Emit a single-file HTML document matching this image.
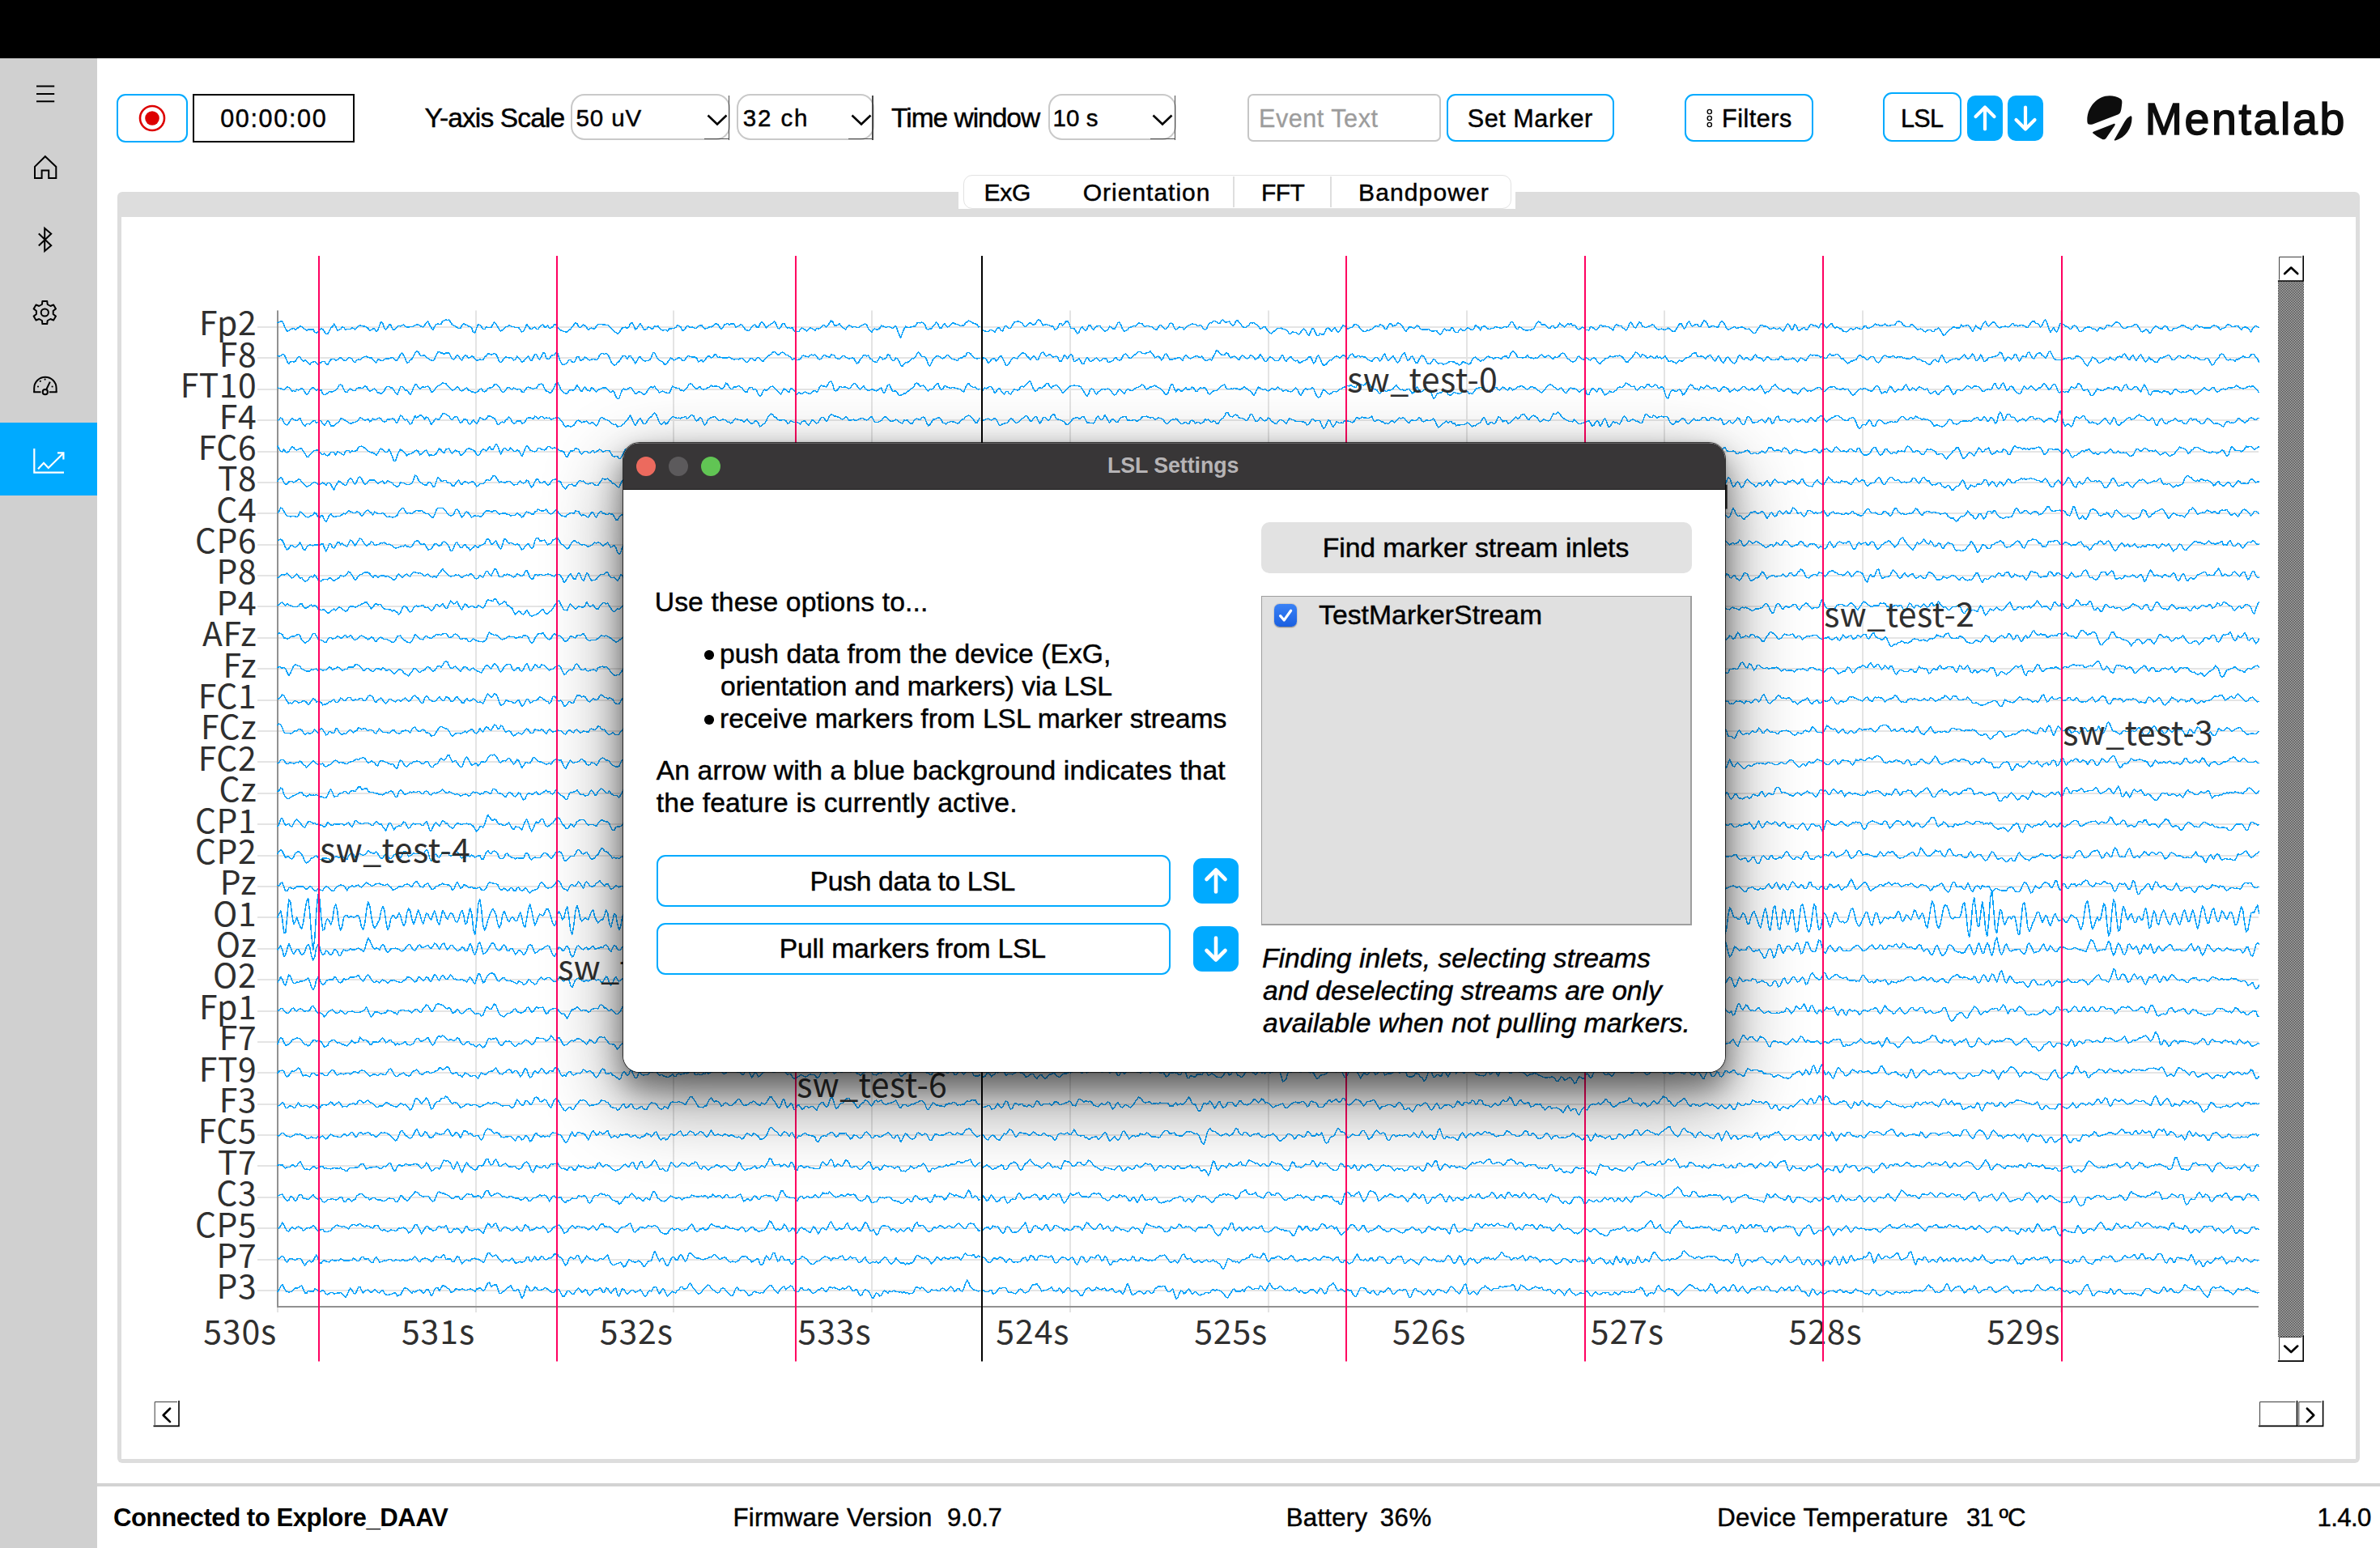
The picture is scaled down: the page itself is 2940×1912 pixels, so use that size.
<!DOCTYPE html>
<html lang="en"><head><meta charset="utf-8"><title>Explore Desktop – LSL Settings</title>
<style>
html,body{margin:0;padding:0}
body{width:2940px;height:1912px;position:relative;overflow:hidden;background:#fff;font-family:"Liberation Sans",sans-serif}
.abs,.t{position:absolute;display:block;margin:0;padding:0}
.t{white-space:pre;font-style:normal}
.bb{box-sizing:border-box}
button{font:inherit;outline:0}
svg{display:block}
.topbar{position:absolute;left:0;top:0;width:2940px;height:72px;background:#000}
.side{position:absolute;left:0;top:72px;width:120px;height:1840px;background:#d0d0d0}
.side .act{position:absolute;left:0;top:450px;width:120px;height:90px;background:#00aaff}
.side svg{top:0 !important}
.dlg{position:absolute;left:769.5px;top:547px;width:1361px;height:777px;border-radius:20px;
 box-shadow:0 0 0 1px rgba(0,0,0,.72),0 0 5px rgba(0,0,0,.2),0 18px 34px 2px rgba(0,0,0,.40),0 34px 90px 6px rgba(0,0,0,.42);}
.dlgin{position:absolute;left:0;top:0;right:0;bottom:0;border-radius:20px;overflow:hidden;background:#fff}
.tb{position:absolute;left:0;top:0;right:0;height:56.5px;background:#383637;border-bottom:1px solid #1a1a1a;box-shadow:inset 0 1px 0 rgba(255,255,255,.22)}
</style></head>
<body>
<div class="topbar"></div>
<nav class="side">
<div class="act"></div>
<svg class="abs" style="left:0;top:72px" width="120" height="1840" viewBox="0 72 120 1840" fill="none" stroke="#000" stroke-width="2" stroke-linecap="butt" stroke-linejoin="miter">
<path d="M45 106.5H67.2M45 116H67.2M45 125.3H67.2"/>
<path d="M43 221V205.9L55.8 193.2L69.3 205.9V220H60.2V210.4H51.6V220H42"/>
<path d="M47.8 288.6L63.2 303.2L55.2 310V282L63.2 288.8L47.8 303.4" stroke-linejoin="miter"/>
<path d="M51.9 376.0L52.4 371.9L58.2 371.9L58.7 376.0L62.3 378.0L66.1 376.5L69.0 381.4L65.7 384.0L65.7 388.0L69.0 390.6L66.1 395.5L62.3 394.0L58.7 396.0L58.2 400.1L52.4 400.1L51.9 396.0L48.3 394.0L44.5 395.5L41.6 390.6L44.9 388.0L44.9 384.0L41.6 381.4L44.5 376.5L48.3 378.0Z" stroke-linejoin="round"/>
<circle cx="55.3" cy="386" r="4.6"/>
<path d="M41.2 484.3H50.5M60.8 484.3H70.6" /><path d="M42.2 484.3V479.5A13.7 13.7 0 0 1 69.6 479.5V484.3"/>
<circle cx="55.8" cy="484.2" r="3.1"/><path d="M57.2 481.2L61.8 471.6"/>
<g fill="#000" stroke="none"><circle cx="47" cy="477.5" r="1.1"/><circle cx="49.8" cy="470.8" r="1.1"/><circle cx="55.6" cy="468.6" r="1.1"/><circle cx="64.6" cy="477.5" r="1.1"/></g>
<g stroke="#fff" stroke-width="2.2"><path d="M42.3 554V583.6H79"/><path d="M47 579.2L54 571.8L59.8 578L77.8 560.2"/><path d="M71 559.4H78.4V567.4"/></g>
</svg>
</nav>
<header role="toolbar">
<button class="abs bb" style="left:144px;top:116px;width:88px;height:59.5px;border:2px solid #00aaff;border-radius:11px;background:#fff"><svg width="40" height="40" viewBox="-20 -20 40 40" style="position:absolute;left:21.8px;top:8px"><circle r="15" fill="none" stroke="#dd0000" stroke-width="2.6"/><circle r="8.8" fill="#dd0000"/></svg></button>
<div class="abs bb" style="left:238px;top:116px;width:200px;height:59.5px;border:2.5px solid #000;background:#fff"></div>
<span class="t" style="left:272.20px;top:131px;font:normal 400 30.60px/30.60px 'Liberation Sans', sans-serif;letter-spacing:1.632px;color:#000;-webkit-text-stroke:0.45px #000;">00:00:00</span>
<label class="t" style="left:524.50px;top:129px;font:normal 400 33.50px/33.50px 'Liberation Sans', sans-serif;letter-spacing:-0.861px;color:#000;-webkit-text-stroke:0.45px #000;">Y-axis Scale</label>
<div class="abs bb" style="left:704.5px;top:116px;width:197.5px;height:57px;border:2px solid #c9c9c9;border-radius:17px;background:#fff"></div><div class="abs" style="left:899.7px;top:118px;width:1.5px;height:54.5px;background:#4a4a4a"></div><div class="abs" style="left:870px;top:171.2px;width:31.2px;height:1.3px;background:#4a4a4a"></div><svg class="abs" style="left:870.75px;top:138px" width="30" height="20" viewBox="0 0 30 20"><path d="M3.5 4.5L15 15.5L26.5 4.5" fill="none" stroke="#000" stroke-width="2.6"/></svg><span class="t" style="left:711.50px;top:131px;font:normal 400 29.50px/29.50px 'Liberation Sans', sans-serif;letter-spacing:0.896px;color:#000;-webkit-text-stroke:0.45px #000;">50 uV</span>
<div class="abs bb" style="left:910px;top:116px;width:169.5px;height:57px;border:2px solid #c9c9c9;border-radius:17px;background:#fff"></div><div class="abs" style="left:1077.2px;top:118px;width:1.5px;height:54.5px;background:#4a4a4a"></div><div class="abs" style="left:1047.5px;top:171.2px;width:31.2px;height:1.3px;background:#4a4a4a"></div><svg class="abs" style="left:1049px;top:138px" width="30" height="20" viewBox="0 0 30 20"><path d="M3.5 4.5L15 15.5L26.5 4.5" fill="none" stroke="#000" stroke-width="2.6"/></svg><span class="t" style="left:917.75px;top:131px;font:normal 400 29.50px/29.50px 'Liberation Sans', sans-serif;letter-spacing:1.873px;color:#000;-webkit-text-stroke:0.45px #000;">32 ch</span>
<label class="t" style="left:1101.00px;top:129px;font:normal 400 33.50px/33.50px 'Liberation Sans', sans-serif;letter-spacing:-1.004px;color:#000;-webkit-text-stroke:0.45px #000;">Time window</label>
<div class="abs bb" style="left:1294.5px;top:116px;width:158.5px;height:57px;border:2px solid #c9c9c9;border-radius:17px;background:#fff"></div><div class="abs" style="left:1450.7px;top:118px;width:1.5px;height:54.5px;background:#4a4a4a"></div><div class="abs" style="left:1421px;top:171.2px;width:31.2px;height:1.3px;background:#4a4a4a"></div><svg class="abs" style="left:1420.75px;top:138px" width="30" height="20" viewBox="0 0 30 20"><path d="M3.5 4.5L15 15.5L26.5 4.5" fill="none" stroke="#000" stroke-width="2.6"/></svg><span class="t" style="left:1300.50px;top:131px;font:normal 400 29.50px/29.50px 'Liberation Sans', sans-serif;letter-spacing:0.080px;color:#000;-webkit-text-stroke:0.45px #000;">10 s</span>
<div class="abs bb" style="left:1540.5px;top:116px;width:239px;height:59px;border:2px solid #c6c6c6;border-radius:7px;background:#fff"></div>
<span class="t" style="left:1555.00px;top:131px;font:normal 400 30.60px/30.60px 'Liberation Sans', sans-serif;letter-spacing:0.518px;color:#9c9c9c;-webkit-text-stroke:0.3px #9c9c9c;">Event Text</span>
<button class="abs bb" style="left:1786.5px;top:116px;width:207px;height:59px;border:2px solid #00aaff;border-radius:11px;background:#fff;"></button>
<span class="t" style="left:1812.75px;top:131px;font:normal 400 30.60px/30.60px 'Liberation Sans', sans-serif;letter-spacing:0.537px;color:#000;-webkit-text-stroke:0.45px #000;">Set Marker</span>
<button class="abs bb" style="left:2080.5px;top:116px;width:159px;height:59px;border:2px solid #00aaff;border-radius:11px;background:#fff;"></button>
<svg class="abs" style="left:2105px;top:132px" width="14" height="28" viewBox="2105 132 14 28" fill="none" stroke="#000" stroke-width="1.4"><circle cx="2111.8" cy="138" r="2.6"/><circle cx="2111.8" cy="146" r="2.6"/><circle cx="2111.8" cy="154" r="2.6"/></svg>
<span class="t" style="left:2127.00px;top:131px;font:normal 400 30.60px/30.60px 'Liberation Sans', sans-serif;letter-spacing:0.503px;color:#000;-webkit-text-stroke:0.45px #000;">Filters</span>
<button class="abs bb" style="left:2326px;top:114px;width:97px;height:61px;border:2px solid #00aaff;border-radius:11px;background:#fff;"></button>
<span class="t" style="left:2348.00px;top:131px;font:normal 400 30.60px/30.60px 'Liberation Sans', sans-serif;letter-spacing:-0.710px;color:#000;-webkit-text-stroke:0.45px #000;">LSL</span>
<div class="abs" style="left:2430px;top:118px;width:44px;height:56px;background:#00aaff;border-radius:10px"><svg width="44" height="56" viewBox="0 0 44 56"><path d="M22 41.5V14.5M10.5 26L22 14.5L33.5 26" fill="none" stroke="#fff" stroke-width="4.2" stroke-linecap="round" stroke-linejoin="round"/></svg></div>
<div class="abs" style="left:2480px;top:118px;width:44px;height:56px;background:#00aaff;border-radius:10px"><svg width="44" height="56" viewBox="0 0 44 56"><path d="M22 14.5V41.5M10.5 30L22 41.5L33.5 30" fill="none" stroke="#fff" stroke-width="4.2" stroke-linecap="round" stroke-linejoin="round"/></svg></div>
<svg class="abs" style="left:2570px;top:110px" width="72" height="72" viewBox="2570 110 72 72"><g fill="#0d0d0d"><path d="M2580.6 153.6C2578.8 153.4 2578.3 151.5 2578.3 148.5C2578.3 131.5 2591.5 118.3 2606 118.3C2610.5 118.3 2616.2 119.6 2619.8 122.2C2621.8 123.8 2621.6 126.5 2620.8 131.8C2620 137.5 2619.6 139.8 2616.8 141.2L2585 153.4C2583.2 154 2581.8 153.9 2580.6 153.6Z"/><path d="M2586.5 162.5L2610.8 153C2612.8 152.3 2613.3 153.6 2612.2 155.3L2601.8 170.6C2600.6 172.4 2598.6 172.8 2596.4 171.8C2592 169.8 2588 166.5 2585.6 164.8C2584.6 164 2585 163 2586.5 162.5Z"/><path d="M2612 172.2L2624.4 150.6C2626.2 147.5 2628 145.2 2631 143.7C2632.6 142.9 2633.4 143.6 2633.5 145.4C2633.7 158 2625.5 169.8 2613.2 173.4C2611.8 173.8 2611.4 173.2 2612 172.2Z"/></g></svg>
<span class="t" style="left:2649.70px;top:120px;font:normal 400 55.40px/55.40px 'Liberation Sans', sans-serif;letter-spacing:2.663px;color:#0d0d0d;-webkit-text-stroke:1.6px #0d0d0d;">Mentalab</span>
</header>
<main>
<div class="abs" style="left:145px;top:237px;width:2770px;height:1570px;background:#dddddd;border-radius:6px"></div>
<div class="abs" style="left:150px;top:268px;width:2760px;height:1534px;background:#fff"></div>
<div class="abs" style="left:1184px;top:200px;width:688px;height:57.5px;background:#fff"></div>
<div class="abs bb" style="left:1189.5px;top:216px;width:677.5px;height:41.5px;background:#fff;border:1.5px solid #e2e2e2;border-radius:11px"></div>
<div class="abs" style="left:1523px;top:218px;width:1.5px;height:38px;background:#dedede"></div>
<div class="abs" style="left:1643px;top:218px;width:1.5px;height:38px;background:#dedede"></div>
<span class="t" style="left:1215.50px;top:223px;font:normal 400 30.00px/30.00px 'Liberation Sans', sans-serif;letter-spacing:-0.255px;color:#000;-webkit-text-stroke:0.45px #000;">ExG</span>
<span class="t" style="left:1337.80px;top:223px;font:normal 400 30.00px/30.00px 'Liberation Sans', sans-serif;letter-spacing:0.984px;color:#000;-webkit-text-stroke:0.45px #000;">Orientation</span>
<span class="t" style="left:1558.00px;top:223px;font:normal 400 30.00px/30.00px 'Liberation Sans', sans-serif;letter-spacing:-0.575px;color:#000;-webkit-text-stroke:0.45px #000;">FFT</span>
<span class="t" style="left:1678.00px;top:223px;font:normal 400 30.00px/30.00px 'Liberation Sans', sans-serif;letter-spacing:1.127px;color:#000;-webkit-text-stroke:0.45px #000;">Bandpower</span>
<svg class="abs" style="left:0;top:0" width="2940" height="1912" viewBox="0 0 2940 1912">
<defs><pattern id="dith" width="2" height="2" patternUnits="userSpaceOnUse"><rect width="2" height="2" fill="#fff"/><rect width="1" height="1" fill="#000"/><rect x="1" y="1" width="1" height="1" fill="#000"/></pattern></defs>
<path d="M318 404H2790.0M318 442H2790.0M318 481H2790.0M318 519H2790.0M318 558H2790.0M318 596H2790.0M318 634H2790.0M318 673H2790.0M318 711H2790.0M318 749H2790.0M318 788H2790.0M318 826H2790.0M318 865H2790.0M318 903H2790.0M318 941H2790.0M318 980H2790.0M318 1018H2790.0M318 1057H2790.0M318 1095H2790.0M318 1133H2790.0M318 1172H2790.0M318 1210H2790.0M318 1249H2790.0M318 1287H2790.0M318 1325H2790.0M318 1364H2790.0M318 1402H2790.0M318 1440H2790.0M318 1479H2790.0M318 1517H2790.0M318 1556H2790.0M318 1594H2790.0M343 383.5V1621.0M588 383.5V1621.0M832 383.5V1621.0M1077 383.5V1621.0M1322 383.5V1621.0M1567 383.5V1621.0M1812 383.5V1621.0M2056 383.5V1621.0M2301 383.5V1621.0M2546 383.5V1621.0" stroke="#e4e4e4" stroke-width="2" fill="none"/>
<path d="M343 383.5V1614H2790.0" stroke="#919191" stroke-width="2" fill="none"/>
<g fill="none" stroke="#00a0fa" stroke-width="1.5" stroke-linejoin="round" shape-rendering="crispEdges" transform="translate(342.7 0) scale(2 .5)">
<path vector-effect="non-scaling-stroke" d="M0 798l1-2 1-2 1 0 1 8 1 10 1 6 1-1 1-3 1-2 1-1 1 4 1-3 1-3 1-4 1 2 1 4 1 2 1 4 1-3 1 0 1 0 1-1 1 8 1 1 1-1 1-6 1-4 1 2 1 6 1 6 1 0 1-7 1-8 1-3 1-7 1 7 1 9 1-1 1-2 1-5 1 1 1 5 1-1 1 0 1 0 1-3 1 1 1 3 1-5 1-3 1-2 1 1 1 1 1 0 1 2 1 3 1 6 1-2 1-3 1 0 1 7 1-3 1-11 1-10 1 3 1 12 1 4 1-5 1-7 1 0 1 10 1 3 1-4 1-4 1-2 1 1 1-2 1-2 1 4 1 2 1 0 1-1 1 0 1-1 1-2 1-2 1 0 1 2 1 3 1 1 1-5 1-6 1-3 1 9 1 6 1 6 1-8 1-5 1-2 1 1 1 0 1-8 1-1 1-2 1 1 1-1 1 6 1 6 1 2 1 2 1 3 1 2 1 0 1-8 1-4 1 3 1 1 1 3 1 1 1 4 1 10 1 1 1-11 1-10 1 2 1 4 1 6 1 0 1-5 1 1 1 0 1 0 1-8 1-5 1 4 1 7 1 7 1 4 1-3 1-4 1-4 1 0 1-3 1 1 1 2 1 0 1 2 1 0 1 0 1 6 1 5 1-2 1-8 1-9 1 5 1 6 1 1 1-4 1-1 1 5 1 0 1-5 1-5 1-1 1 6 1 0 1-4 1 7 1-1 1-3 1-5 1 0 1 7 1 4 1 3 1 1 1 2 1 1 1 0 1-4 1-3 1-5 1-5 1-6 1 2 1 8 1 2 1-3 1-4 1 3 1 4 1 6 1-3 1-2 1 2 1 0 1-6 1-5 1 0 1 0 1 1 1 0 1 1 1 0 1 4 1 4 1 4 1 4 1 2 1 4 1-3 1-6 1-6 1-1 1-1 1 3 1-2 1-10 1-2 1 6 1 11 1-3 1-5 1-7 1 5 1 8 1 3 1-2 1-5 1 1 1 3 1 0 1-7 1 2 1-2 1 6 1 3 1 2 1-1 1 0 1 3 1-6 1 0 1-1 1 0 1-2 1-5 1 1 1 2 1 9 1 0 1-5 1-6 1 1 1 3 1-1 1 1 1 2 1-1 1-4 1-2 1-1 1 6 1 4 1-2 1-1 1-3 1 1 1-3 1-3 1-3 1 2 1 6 1 6 1-3 1-8 1-1 1-2 1 4 1-3 1 0 1 0 1 8 1-1 1-2 1-4 1 2 1 5 1 6 1 2 1 1 1-3 1-7 1-4 1-1 1 6 1 1 1-8 1-6 1 3 1 6 1 6 1-5 1-2 1-3 1-2 1-4 1 6 1 11 1 1 1-5 1-8 1 0 1 7 1 5 1-2 1 2 1-2 1 8 1 4 1-2 1 0 1-5 1-4 1 2 1 3 1 3 1-4 1-5 1 2 1 2 1 4 1-6 1 1 1-1 1-3 1-5 1 1 1 4 1-4 1-6 1-6 1 3 1 9 1 0 1-1 1-4 1 5 1 5 1 2 1 3 1-7 1-4 1 2 1 3 1-1 1 0 1 2 1 0 1-3 1-2 1-2 1-2 1 2 1 10 1 5 1 4 1-7 1-2 1 2 1 0 1-3 1-7 1 2 1 1 1 2 1-2 1 0 1 2 1 2 1-4 1-2 1 11 1 11 1 8 1-12 1-10 1-7 1 3 1 0 1-1 1-1 1-1 1 0 1-8 1-1 1 1 1-2 1 2 1 5 1 10 1 1 1-2 1 0 1-7 1-4 1-5 1 5 1 9 1 1 1-7 1-5 1 6 1 3 1-2 1-4 1-4 1 0 1 3 1 0 1 2 1 2 1-1 1 0 1-6 1-3 1-3 1 2 1 2 1 3 1 1 1 1 1 7 1-2M435 812l1 4 1 2 1 1 1 0 1-4 1 0 1 2 1 4 1-7 1-4 1 0 1 7 1 1 1-11 1-2 1 4 1 2 1-1 1-7 1-7 1-1 1-1 1 0 1 2 1 2 1 7 1 2 1-3 1-4 1-3 1 3 1 3 1-2 1-7 1-5 1 2 1 7 1 6 1-2 1-1 1 2 1 1 1 2 1 0 1 8 1-1 1-3 1-10 1-1 1 5 1-4 1-6 1-1 1 6 1 12 1 0 1 0 1 6 1 7 1-2 1-10 1-5 1 5 1 5 1-4 1-9 1-1 1 7 1 5 1-5 1-4 1-1 1 0 1 5 1 4 1 5 1-2 1-3 1-8 1 2 1 4 1 1 1-7 1-8 1-2 1 7 1 10 1 5 1-1 1-2 1-5 1-2 1-1 1-2 1 1 1-5 1-4 1 2 1 0 1 6 1 2 1-2 1 0 1 2 1 0 1 4 1 2 1 2 1-6 1-6 1 1 1 5 1 4 1-1 1-4 1-8 1-2 1 2 1 11 1 3 1-2 1-4 1 1 1 0 1 5 1-5 1-3 1-2 1-2 1-2 1 1 1 0 1 4 1 0 1-2 1 4 1 5 1 2 1-2 1-10 1-5 1 1 1-5 1 0 1 2 1 4 1 0 1-7 1-2 1 4 1 3 1-2 1-1 1 7 1 4 1-3 1-9 1-2 1 6 1 4 1 5 1 3 1 0 1-3 1-2 1-7 1 1 1-1 1 3 1 2 1 5 1 5 1-1 1-4 1 0 1 6 1 6 1 3 1 2 1-4 1-3 1-4 1-2 1 0 1-1 1 3 1 0 1 2 1 3 1 7 1-1 1-5 1 2 1 0 1 4 1 1 1-5 1-6 1-3 1 4 1 8 1 5 1-8 1-9 1 0 1 9 1 8 1 0 1-5 1 2 1 1 1-7 1-9 1-1 1 3 1 6 1-5 1-5 1 6 1 6 1-3 1-7 1-7 1 1 1 2 1 5 1-1 1-2 1-1 1-6 1-1 1 2 1 4 1 6 1 3 1 3 1 0 1-3 1 1 1-3 1-1 1-3 1-4 1-1 1 2 1-5 1 1 1 2 1 8 1 0 1-8 1-5 1 0 1 6 1-2 1-1 1-5 1 1 1 3 1 5 1 7 1 5 1-5 1-6 1 0 1 1 1 2 1-4 1-3 1 3 1 5 1 2 1 0 1 0 1 0 1-1 1 4 1 1 1 0 1-1 1 0 1 6 1 4 1-3 1-8 1-4 1 5 1-2 1 2 1-7 1 0 1 9 1 2 1 0 1-5 1-4 1 4 1 1 1-3 1-4 1 1 1 3 1 1 1-3 1-9 1 3 1 3 1 7 1-9 1-1 1 0 1 4 1 3 1 0 1-2 1 0 1-4 1 1 1 1 1 1 1 1 1-2 1-2 1 1 1-1 1-5 1-7 1 1 1 7 1 8 1 2 1-5 1 1 1 3 1 3 1 1 1 0 1-1 1 1 1-3 1-1 1-8 1-7 1-3 1 3 1 5 1 0 1 0 1 4 1 5 1 0 1-6 1 0 1 5 1-1 1-4 1-7 1 4 1 3 1 3 1-4 1-5 1 3 1-3 1 5 1-1 1 4 1 6 1 1 1-3 1-3 1 2 1 5 1 0 1 1 1-9 1 1 1 3 1 4 1-1 1-4 1-7 1 1 1 3 1-2 1 2 1 0 1 4 1 1 1 4 1-10 1-5 1 3 1 1 1 0 1 5 1 2 1 4 1-5 1-11 1-4 1 6 1 7 1 1 1-7 1-7 1 1 1 9 1 1 1 2 1-1 1-2 1-1 1-4 1 2 1 5 1 4 1 2 1-1 1-1 1 2 1 1 1-2 1-3 1 3 1 3 1 3 1 0 1-6 1-7 1-6 1-1 1 8 1 5 1-5 1-10 1-3 1 8 1 4 1-2 1-3 1 0 1 6 1 0 1-8 1-7 1 1 1 6 1 9 1 0 1-3 1 0 1 2 1 1 1 0 1-11 1-4 1 3 1 6 1 9 1 3 1-1 1-2 1-2 1-2 1 4 1-1 1-1 1-1 1 0 1 2 1 3 1 0 1-1 1 4 1 5 1 2 1-1 1-7 1-6 1-5 1-1 1 3 1 0 1 1 1 3 1 3 1-1 1-2 1 1 1 2 1-1 1-2 1 5 1 3 1-6 1-8 1-4 1 5 1 9 1 0 1-12 1 1 1 11 1 3 1-3 1-3 1-2 1 5 1 0 1-7 1-6 1 1 1 3 1-1 1 3 1 3 1-8 1-3 1 1 1 7 1 3 1-4 1-5 1-2 1 8 1 4 1-3 1 1 1 3 1 0 1 6 1 1 1 1 1-2 1-5 1-2 1 4 1-2 1-4 1 1 1 2 1 1 1-1 1-6 1-1 1 5 1 1 1-2 1-2 1-4 1-3 1 3 1-1 1 3 1-1 1-1 1-3 1 4 1 1 1-1 1-1 1 0 1 0 1-7 1-2 1 0 1 2 1 6 1 3 1 2 1 0 1 0 1-5 1 0 1 5 1 4 1 3 1-1 1-1 1 2 1 4 1 2 1-4 1-1 1 0 1 4 1 0 1-5 1-1 1-3 1 5 1 7 1 6 1-1 1-5 1-5 1-4 1-1 1-4 1 0 1 2 1 0 1 0 1-8 1 4 1-1 1-1 1-1 1 3 1 6 1 7 1-7 1-8 1 4 1 3 1 3 1-10 1-7 1-3 1 9 1 3 1-5 1-3 1-3 1 3 1 7 1 4 1 1 1-3 1 0 1-1 1 1 1 1 1-2 1-5 1-2 1 5 1-1 1 3 1-2 1-1 1 1 1 1 1 3 1 1 1-5 1-6 1-4 1-1 1 6 1 0 1 4 1 5 1-4 1-10 1-4 1 8 1 12 1 11 1-5 1-7 1 8 1 3 1-7 1-14 1 0 1 2 1 3 1 3 1 1 1 5 1-1 1-6 1-2 1 2 1 6 1 7 1 0 1-2 1-5 1-3 1-1 1 0 1 1 1 4 1-1 1 2 1 4 1-6 1-3 1 3 1 1 1-3 1-7 1 1 1 1 1 1 1-4 1-4 1-3 1 2 1 4 1 5 1 5 1 0 1-1 1-3 1 0 1 0 1-2 1-3 1-1 1 4 1 6 1 7 1 2 1-3 1-4 1 2 1 7 1 0 1-8 1-4 1-4 1 1 1 3 1 2 1 1 1-6 1-2 1 2 1 8 1 2 1 0 1-5 1-1 1 0 1-2 1-2 1-3 1 0 1 1 1 4 1 1 1 1 1 4 1-2 1-5 1-5 1 1 1 5 1-2 1 1 1 2 1 0 1 0 1 0 1 0 1-5 1-1 1 1 1 1 1 3 1 6 1-4 1 0 1-2 1-5 1-3 1 2 1 4 1 0 1-1 1-1 1 0 1 6 1 4 1-5 1-2 1 0 1 3 1 4 1 5 1-9 1-4 1-2 1 2 1 3"/>
<path vector-effect="non-scaling-stroke" d="M0 878l1 2 1-1 1-4 1 1 1 6 1 11 1 6 1-5 1-1 1 1 1-1 1-7 1-5 1 1 1 7 1 4 1-4 1 4 1 3 1 5 1-5 1-2 1-1 1 3 1 4 1-2 1-3 1-2 1 0 1 5 1 3 1-7 1-6 1-1 1 0 1 3 1-1 1-3 1-3 1 3 1 4 1 1 1-3 1-5 1 1 1 2 1 7 1 2 1-5 1-2 1 1 1-4 1-2 1-2 1-1 1 3 1 1 1-1 1 6 1 3 1 4 1-8 1 0 1 3 1 0 1-4 1-1 1 0 1 0 1-2 1-1 1 4 1 3 1 0 1-7 1-8 1-3 1 6 1 8 1 11 1-2 1-5 1-3 1-7 1-8 1-4 1 1 1 8 1 2 1-1 1 0 1 5 1 2 1 3 1 2 1 1 1-3 1-10 1-8 1-1 1 3 1 0 1 3 1-3 1 0 1 0 1 8 1 7 1 1 1-5 1-6 1 3 1 7 1 3 1-9 1-3 1 1 1 6 1-2 1-4 1 2 1 6 1 3 1 0 1-2 1 1 1 0 1-7 1-3 1-5 1 0 1 2 1-1 1-2 1 2 1 8 1 10 1 2 1-4 1-6 1-4 1 2 1 1 1-1 1 2 1 5 1-2 1-8 1 4 1 5 1 5 1-1 1-6 1-4 1-3 1 8 1 3 1-8 1-8 1 1 1 8 1 4 1-7 1-9 1-1 1 13 1 3 1-1 1-6 1-3 1 0 1-5 1 0 1 12 1 11 1 5 1 1 1-2 1-3 1-7 1 0 1 5 1 1 1-4 1-10 1 0 1 9 1 0 1-3 1-5 1 3 1 3 1 2 1-2 1-1 1 1 1 1 1-2 1-10 1-4 1 0 1 2 1-2 1 3 1 6 1 11 1 6 1 3 1-1 1-5 1-3 1-6 1-7 1-1 1 1 1 7 1-7 1-1 1 5 1 6 1 8 1-6 1-8 1-3 1 6 1 4 1 1 1-1 1 0 1-2 1-7 1-11 1 1 1 8 1 7 1 3 1 2 1 2 1 6 1 0 1-5 1-6 1-5 1 3 1 3 1-2 1-2 1-3 1 2 1 5 1 1 1-4 1-6 1-2 1 2 1 1 1 0 1 0 1 3 1 9 1-2 1-3 1 5 1-4 1-6 1-4 1 0 1 4 1-2 1-6 1 0 1 7 1-1 1 1 1 1 1 0 1 0 1 0 1-2 1 2 1 3 1 1 1-1 1 0 1 1 1-3 1 0 1 3 1 5 1 2 1-4 1-5 1-1 1 4 1 2 1-6 1-2 1 3 1 4 1 3 1-5 1-5 1-3 1-3 1-2 1-5 1-1 1 3 1 4 1 0 1-4 1-2 1 2 1 5 1 0 1 3 1 2 1 7 1-3 1 1 1 2 1-1 1-1 1-7 1-2 1 2 1 1 1 1 1-4 1-2 1 2 1-2 1 4 1 6 1 2 1-2 1-7 1-2 1 3 1 1 1 2 1-7 1 1 1 1 1 7 1 1 1 1 1-4 1-4 1 0 1 3 1 2 1 2 1-1 1-1 1 1 1 8 1 5 1-3 1-8 1-4 1-5 1-1 1 3 1-2 1 8 1 1 1 5 1 2 1 1 1-5 1-8 1 1 1 5 1-2 1-1 1-10 1 2 1 9 1 5 1-1 1-6 1 2 1 7 1 9 1 3 1-6 1-4 1 1 1-3 1-4 1-4 1 1 1-4 1-8 1-4 1 5 1 6 1 0 1 1 1 6 1 13 1 3 1-7 1-10 1-4 1-3 1-1 1 2 1 3 1 2 1-3 1-4 1-2 1 3 1 5 1 2 1 1 1 1 1 2 1-5 1-2 1 0 1-4 1 0 1-9 1 0 1 2 1 6 1 4 1 2 1 1 1-1 1 0M435 891l1-7 1 1 1 4 1 8 1-3 1-6 1-2 1 0 1 6 1-4 1-7 1-2 1 7 1 8 1 9 1-1 1-5 1-7 1-5 1-2 1 2 1 1 1-7 1-4 1-3 1 0 1 2 1 6 1 3 1 6 1-6 1-4 1 3 1 7 1-1 1-10 1-7 1-1 1 6 1 4 1-2 1-3 1 3 1 4 1-1 1-1 1 2 1 10 1 1 1-7 1-9 1 4 1 5 1-6 1-5 1 3 1 15 1-1 1-3 1-4 1 6 1 8 1 0 1-9 1-7 1 4 1 6 1-1 1-3 1-4 1-1 1 5 1 3 1-2 1-5 1 1 1 0 1 9 1-1 1-1 1-2 1-5 1-3 1 5 1 2 1-1 1-8 1-6 1-1 1 5 1 5 1 1 1-4 1-3 1-3 1-4 1-2 1 0 1 4 1 0 1 1 1-3 1 0 1-4 1 5 1 5 1 7 1-2 1-2 1 3 1 7 1-5 1-9 1-2 1 6 1 8 1 0 1 0 1-2 1 0 1-2 1-1 1 3 1 5 1-9 1-5 1 3 1 4 1 2 1-2 1-2 1-2 1-1 1 3 1 1 1-3 1 6 1 4 1 1 1-2 1-2 1 3 1-9 1-6 1-10 1 2 1 6 1 3 1 1 1 0 1-6 1 2 1 8 1 3 1-3 1-1 1 2 1 4 1 3 1-8 1-3 1 2 1 4 1 2 1-2 1-7 1 2 1 3 1 6 1-2 1-3 1-8 1 5 1 7 1 6 1-1 1-6 1-4 1 1 1 4 1 4 1 0 1 0 1-4 1-7 1-3 1 11 1 5 1-5 1-4 1-3 1 6 1 3 1 2 1-2 1 6 1 0 1-3 1-2 1-1 1-3 1-5 1-1 1 8 1 9 1-4 1-12 1-4 1 7 1 11 1 6 1 0 1-3 1-6 1-4 1 1 1-4 1-5 1-1 1 1 1 4 1-4 1-3 1 0 1 4 1 5 1-7 1-5 1-1 1 6 1 3 1-4 1 0 1 3 1-2 1 2 1 0 1 5 1 2 1 2 1 2 1-6 1-4 1 0 1 4 1 5 1-5 1-9 1-4 1 10 1 7 1-3 1-4 1-5 1 6 1 7 1 4 1-4 1-10 1-7 1-4 1 8 1 12 1-2 1-7 1-2 1 7 1 9 1 1 1-8 1-7 1-4 1 3 1 5 1 10 1 3 1 0 1-6 1-5 1 1 1 5 1 5 1-2 1 0 1 3 1-1 1-1 1-2 1-3 1 0 1 1 1 0 1 4 1 0 1 4 1-2 1-6 1 0 1 3 1 1 1 2 1-3 1-9 1-5 1-1 1 4 1 3 1 4 1-4 1 1 1-5 1-3 1-2 1 3 1 0 1 4 1-3 1-1 1 0 1 2 1 2 1-6 1-1 1-1 1 6 1-4 1-10 1-4 1 4 1 4 1 8 1 0 1 0 1 1 1-1 1 0 1-6 1 5 1 2 1 0 1 2 1-2 1 1 1-4 1-3 1-2 1 4 1 3 1-4 1-1 1 2 1 4 1 3 1-5 1 1 1-1 1-3 1-6 1-1 1 2 1 7 1 5 1 2 1 4 1 2 1-1 1-3 1-8 1-2 1 5 1 2 1 2 1-6 1 2 1 3 1 2 1-5 1-1 1 1 1 7 1 4 1 3 1-6 1-2 1-5 1-1 1-1 1-4 1 1 1 1 1-2 1-1 1 1 1-2 1 2 1 3 1 6 1 5 1 1 1-6 1-4 1-4 1-6 1-5 1 2 1 5 1 5 1-7 1 2 1 2 1 6 1-2 1-3 1 1 1 4 1 0 1-6 1 5 1-2 1 4 1-2 1-5 1 6 1 7 1 1 1-2 1 3 1 1 1 3 1-5 1-3 1 2 1 0 1-4 1-4 1-1 1-1 1-3 1-5 1-2 1-1 1 9 1 1 1-1 1 0 1 2 1 5 1-5 1-3 1-2 1 5 1 7 1 3 1-6 1-7 1 6 1 8 1 4 1-6 1-8 1-1 1 5 1 6 1 3 1 2 1-4 1-11 1-6 1 3 1 6 1 2 1-4 1 0 1 4 1 2 1-3 1-8 1-3 1 6 1 2 1 0 1 3 1 5 1-5 1-5 1 0 1 4 1 3 1 0 1 0 1-2 1 2 1-7 1-2 1 3 1 5 1 0 1 1 1-2 1 0 1-3 1 3 1 4 1 3 1-6 1-4 1 2 1 2 1 3 1-6 1-5 1-4 1 2 1-1 1 1 1 0 1 1 1 3 1-1 1 2 1 2 1-1 1-7 1-3 1 4 1 0 1-1 1-2 1 1 1 5 1 5 1-1 1 6 1 3 1 4 1-3 1-3 1 0 1-3 1 0 1-7 1-4 1 0 1 4 1 0 1 5 1 2 1-3 1-5 1 0 1 1 1 8 1 4 1 2 1-4 1-7 1-6 1-1 1 2 1 2 1 0 1-1 1-2 1 3 1 2 1-3 1 1 1-1 1 4 1-1 1 2 1 0 1 1 1-2 1-4 1 0 1 4 1 3 1-1 1 2 1 3 1 1 1 1 1 4 1 2 1 0 1-6 1-4 1-2 1 4 1 2 1-10 1-7 1 5 1 10 1 4 1-2 1-4 1-1 1-2 1 0 1-2 1 3 1 0 1-5 1-4 1-3 1 6 1 5 1-2 1-5 1-6 1 5 1 12 1-1 1-5 1-9 1 6 1 11 1-1 1-3 1-6 1 0 1-1 1-1 1-1 1-1 1-4 1-5 1 3 1 9 1 10 1-6 1-4 1 2 1 4 1-4 1-9 1 1 1 11 1 5 1-6 1-7 1 2 1 1 1-10 1-2 1 8 1 6 1 2 1-7 1-6 1-1 1 0 1 6 1 2 1 5 1-5 1-10 1-2 1 8 1 8 1 4 1 1 1 0 1 0 1-1 1 0 1-3 1 1 1-2 1-1 1 4 1 0 1-2 1-5 1 0 1 1 1 4 1 3 1 8 1 5 1 3 1-8 1-5 1-9 1 2 1 3 1 4 1 6 1-1 1-2 1-3 1-4 1-1 1 2 1-6 1 4 1 2 1 2 1-6 1-3 1-1 1 3 1-7 1-2 1 6 1 6 1 3 1-8 1-4 1 7 1 7 1-5 1-7 1-3 1 7 1 7 1 4 1-4 1-8 1 6 1 0 1 4 1 3 1 0 1-6 1-6 1 2 1-3 1-1 1-2 1-2 1 3 1 8 1 1 1-1 1-4 1-5 1 0 1 3 1 2 1 1 1-4 1-4 1 2 1 4 1 0 1 3 1-4 1 2 1 3 1 2 1 0 1 0 1-4 1 0 1 4 1 8 1 5 1-2 1-8 1-5 1-3 1-9 1-1 1 2 1 7 1 5 1 2 1-2 1 1 1 0 1 4 1-5 1 0 1-3 1-2 1-4 1 3 1 1 1 0 1-1 1-6 1-1 1 1 1 7 1 4 1 8"/>
<path vector-effect="non-scaling-stroke" d="M0 958l1 1 1 1 1 1 1 2 1-4 1-3 1 1 1 4 1 5 1-1 1 2 1-5 1 2 1-2 1-3 1 3 1 7 1 6 1-3 1-8 1-4 1-3 1 4 1 4 1-3 1 2 1-1 1 10 1 2 1-1 1-3 1-4 1 1 1 0 1-2 1-2 1-4 1-8 1-2 1 2 1 11 1 5 1 1 1-5 1-4 1 3 1 2 1 0 1-5 1-2 1 0 1 1 1-1 1-5 1 2 1 8 1 4 1-2 1-3 1-2 1 5 1 5 1 0 1 3 1-3 1-5 1-8 1-2 1 0 1 3 1 0 1 7 1 5 1 5 1-9 1-11 1 0 1 4 1 5 1 0 1 5 1 6 1-6 1-11 1-8 1 0 1 7 1 4 1-3 1-3 1 2 1-2 1-1 1 4 1 10 1 0 1-5 1-5 1-4 1-2 1-2 1-5 1 2 1 0 1 6 1 3 1 5 1 3 1-1 1-4 1-4 1 4 1 5 1 2 1-3 1-3 1-2 1 6 1 1 1 3 1 0 1 2 1-1 1-2 1-6 1-1 1 6 1 2 1-3 1-5 1-2 1 0 1-2 1-6 1-1 1 4 1 3 1 8 1 5 1-1 1-5 1-5 1-1 1 3 1 2 1-4 1 2 1 2 1-1 1 1 1 6 1 1 1-5 1-6 1-2 1 2 1 1 1 2 1-2 1 0 1-7 1-3 1-1 1 2 1 10 1 6 1 1 1 3 1 0 1-6 1-8 1-9 1-2 1 6 1 11 1 5 1 4 1 1 1 0 1-6 1-3 1 1 1 0 1-5 1-8 1 5 1 8 1 3 1-7 1-4 1 6 1 3 1 1 1-9 1 2 1 6 1 3 1-4 1-3 1-1 1-2 1 0 1 0 1 5 1 4 1 2 1-4 1 4 1 10 1 6 1 0 1-12 1-10 1-3 1 3 1-1 1-3 1-2 1 3 1 7 1 5 1 0 1-4 1 0 1 2 1 4 1 0 1-5 1-7 1-4 1-3 1 3 1-4 1 7 1 4 1 5 1-2 1-2 1 2 1 2 1 1 1 0 1-8 1-9 1 2 1 2 1 1 1 0 1 5 1 0 1 2 1-4 1-4 1-8 1-2 1 1 1 5 1 4 1 3 1-4 1-2 1 6 1 1 1-1 1-1 1-3 1-1 1-4 1 3 1-1 1 0 1 1 1 1 1 4 1 0 1-5 1-9 1 3 1 7 1 5 1 0 1-5 1 0 1-1 1-2 1 3 1 2 1 7 1 3 1 1 1-9 1-3 1 0 1 5 1-1 1 3 1 10 1 5 1-4 1-9 1-4 1 3 1-3 1-5 1-2 1-1 1 5 1 3 1 5 1 4 1 3 1-8 1-6 1 3 1 3 1 3 1-9 1 0 1 4 1 5 1 5 1-5 1 3 1 1 1-3 1-2 1 2 1 2 1 1 1-3 1-4 1-1 1 4 1-4 1-10 1-3 1 2 1 0 1 2 1-6 1-7 1-1 1 8 1 14 1 2 1-3 1-7 1-1 1 2 1-1 1 0 1 2 1 2 1-2 1-7 1-4 1 1 1 5 1 6 1 3 1-5 1-4 1 7 1 2 1 3 1-1 1-2 1 0 1 3 1 1 1-3 1-4 1-1 1 11 1 2 1-10 1-10 1-1 1 9 1 8 1-1 1 0 1 5 1 6 1-1 1-1 1-3 1 0 1-4 1-3 1-4 1-2 1-2 1-10 1-1 1 3 1 6 1-2 1-1 1 5 1 5 1 4 1-5 1 1 1-2 1-6 1-5 1-2 1 10 1 6 1-2 1-8 1 1 1 3 1 1 1 1 1-2 1 1 1 1 1 1 1 1 1 1 1 5 1 1 1-11 1-7 1-3 1 6 1 2 1 2 1-1 1 5 1 1 1-2M435 968l1-6 1-4 1 2 1-3 1-2 1 1 1 6 1 9 1-4 1-6 1-2 1 7 1 5 1 3 1-7 1 0 1 5 1 2 1-7 1-5 1 1 1 1 1-1 1-8 1-1 1 2 1-4 1-4 1-5 1-2 1 11 1 9 1 5 1-1 1-5 1-3 1 2 1-3 1-3 1-6 1 0 1 8 1 4 1-5 1-1 1-2 1 4 1 4 1 5 1 7 1-3 1-5 1-4 1-3 1-3 1 0 1-1 1 1 1 0 1 1 1 1 1 5 1 7 1 7 1 5 1-5 1-12 1-2 1 2 1 8 1 4 1-6 1-2 1-4 1-1 1 1 1-1 1-1 1 2 1 5 1 5 1 4 1-2 1-7 1-6 1 3 1 4 1 5 1-7 1-5 1 1 1 3 1 0 1-3 1-3 1-2 1-1 1-2 1-4 1 2 1 6 1 4 1-3 1-3 1 0 1-2 1-2 1 3 1 2 1 2 1 3 1 4 1 6 1 3 1-3 1-12 1-10 1-1 1 12 1 7 1-6 1 0 1 4 1 0 1-4 1-5 1 5 1 0 1-1 1-5 1 3 1 7 1 1 1-5 1-4 1 1 1-1 1 0 1 6 1 9 1 1 1-5 1-3 1-1 1 0 1-3 1-4 1-5 1-1 1-2 1 9 1 2 1 0 1-1 1 1 1-2 1 1 1 0 1 2 1 0 1-3 1-4 1 3 1 3 1 3 1 2 1 5 1 6 1-5 1-10 1-6 1 3 1 2 1 2 1-2 1 3 1 2 1-3 1-4 1 1 1 3 1-3 1-4 1 5 1 0 1 5 1-1 1-2 1 3 1 1 1 1 1-2 1-4 1-4 1 4 1 9 1 6 1-6 1-8 1-4 1 4 1-2 1 0 1-3 1 1 1 12 1 8 1 3 1-2 1-9 1-9 1 3 1 3 1 5 1 1 1-3 1-4 1 0 1 1 1-2 1-5 1 0 1-3 1-2 1-1 1-2 1 1 1-3 1 4 1 1 1 1 1-5 1-2 1-1 1 2 1 1 1-3 1-6 1 2 1 7 1 6 1 3 1 1 1 1 1 7 1 2 1-4 1-3 1 0 1 2 1-3 1 0 1-1 1-2 1-6 1-4 1 6 1 4 1 2 1-1 1 3 1-1 1-3 1 0 1 5 1 6 1-3 1-8 1-5 1 7 1 5 1-1 1-3 1-2 1 1 1 2 1-2 1 11 1 11 1-3 1-8 1-3 1-1 1 0 1-4 1-2 1 3 1 7 1 2 1 0 1-5 1-2 1 2 1 1 1 1 1-2 1-3 1-2 1 1 1 0 1 5 1-1 1 2 1-5 1-6 1-3 1-1 1-1 1 0 1 6 1 0 1 1 1 1 1 3 1-1 1-7 1-3 1 0 1 6 1 1 1-5 1-3 1 3 1 3 1 2 1-6 1 1 1 5 1-3 1-1 1-5 1 1 1-3 1 1 1 3 1 4 1 1 1-2 1-4 1-1 1 3 1 0 1 5 1 2 1 3 1 2 1-4 1-4 1-7 1-4 1-1 1 1 1 4 1 2 1 4 1 2 1-4 1-1 1 5 1 6 1 2 1-5 1-6 1-2 1 2 1 0 1 1 1 4 1 4 1-4 1-2 1-3 1 5 1 10 1 0 1-9 1-6 1 0 1 4 1 4 1-8 1-1 1 4 1 8 1 5 1-3 1-2 1-5 1 3 1 0 1-4 1-1 1-7 1-1 1 1 1-1 1-5 1-5 1 2 1 3 1 4 1 0 1-1 1 8 1 2 1-5 1-4 1 0 1 4 1-4 1-5 1-1 1 6 1 1 1-2 1-4 1 2 1 7 1-1 1-3 1 2 1 14 1 12 1 1 1-13 1-5 1-3 1 3 1 1 1-3 1-2 1 3 1 11 1-3 1-6 1-8 1-5 1-4 1 3 1 5 1 3 1-1 1 4 1-8 1 1 1 3 1-5 1-3 1 3 1 4 1 1 1-2 1-1 1 3 1 7 1-1 1-6 1-4 1 0 1 2 1 3 1 8 1-3 1-2 1-4 1 4 1 2 1-3 1-3 1-5 1 0 1 4 1 2 1 3 1-2 1-3 1 5 1-1 1-2 1-6 1-3 1 6 1 8 1 6 1-5 1 1 1-4 1-8 1-2 1-5 1 6 1 4 1 2 1 1 1 4 1 0 1-5 1-1 1 1 1 3 1 6 1 0 1 0 1 4 1-4 1-6 1-5 1-1 1 4 1 5 1-2 1 1 1-1 1-2 1-3 1-2 1-1 1 1 1 5 1 5 1-2 1-4 1-4 1-2 1 0 1-1 1 1 1 4 1 1 1 1 1 0 1-3 1 3 1-1 1 0 1 5 1 6 1 4 1-1 1-6 1-4 1-3 1-2 1 2 1-3 1 1 1 2 1 3 1 1 1 0 1-5 1-6 1-2 1 2 1 11 1 6 1-2 1-3 1 3 1-8 1-8 1 3 1 7 1 5 1-4 1-4 1 2 1 1 1-3 1-8 1-3 1 8 1 6 1-1 1-5 1 2 1 5 1-5 1-4 1 1 1 2 1 4 1-1 1-2 1 8 1 5 1-2 1-4 1-1 1 6 1 3 1-6 1-4 1 0 1-7 1-4 1-1 1 6 1 8 1 7 1-1 1-8 1-2 1 0 1 2 1-1 1-5 1-4 1-2 1 2 1 4 1-1 1-4 1 0 1 1 1 1 1 5 1 5 1 1 1-3 1-2 1-1 1 2 1-3 1-10 1-3 1 9 1 5 1-3 1-9 1-3 1 9 1 9 1-1 1-7 1-2 1 3 1 8 1 4 1 2 1 2 1-3 1-11 1-5 1 5 1 2 1-4 1-4 1 3 1 4 1 5 1-3 1-4 1 0 1-5 1-6 1 3 1 6 1 6 1-1 1-7 1-5 1 1 1 8 1 11 1 1 1-4 1 1 1 2 1-2 1 2 1-8 1-5 1 1 1 2 1-2 1-9 1 0 1 5 1 9 1 3 1-2 1-1 1 6 1 9 1 0 1-4 1-6 1-7 1 3 1 1 1 1 1-1 1-3 1-1 1-3 1 2 1 1 1 2 1-6 1-1 1 2 1 8 1 1 1-8 1-7 1-1 1 9 1 2 1 2 1-4 1-3 1-1 1 4 1 6 1 3 1-10 1-8 1 6 1 7 1 12 1 1 1-8 1-2 1 0 1 0 1 0 1 3 1 1 1-4 1 0 1 2 1 0 1 6 1-1 1-7 1-4 1 0 1 4 1 2 1 2 1-3 1 2 1-1 1-1 1-3 1 0 1 1 1 7 1 2 1-2 1-4 1-2 1-5 1-4 1 4 1 2 1 2 1-4 1-4 1 0 1 7 1 4 1-1 1-3 1-3 1-1 1 2 1-1 1-4 1 1 1 0 1-1 1-1 1-4 1 3 1 3 1 1 1 1 1-1 1-1 1-3 1-1 1 2 1-3 1 4 1 4 1 4 1 5"/>
<path vector-effect="non-scaling-stroke" d="M0 1039l1-2 1-5 1 2 1 10 1 4 1 2 1-5 1-7 1-5 1 3 1 2 1 1 1-4 1-2 1 9 1 7 1 4 1-6 1 0 1 1 1-4 1-4 1-1 1 5 1-1 1-5 1 2 1 7 1 4 1-5 1-7 1 4 1 9 1 0 1 0 1-5 1-2 1-3 1-8 1 0 1 2 1 3 1 2 1 3 1 2 1 0 1-3 1 0 1-2 1-4 1-5 1 1 1 3 1 2 1-1 1-2 1 7 1-3 1-5 1 3 1-1 1-2 1-2 1 3 1 5 1 2 1-1 1-5 1 0 1-1 1-1 1 1 1 7 1 3 1-10 1-9 1 2 1 7 1 3 1-2 1 7 1 5 1-2 1-10 1-9 1 5 1-3 1-3 1 0 1 4 1 6 1-6 1 2 1 8 1 9 1-5 1-6 1-4 1 2 1 0 1-7 1-7 1-1 1 2 1 3 1 2 1 7 1 2 1-5 1-3 1 1 1 8 1 7 1-2 1-7 1 0 1 1 1 9 1 2 1-5 1-6 1 6 1 4 1-5 1-11 1 2 1 3 1 1 1-2 1-7 1 0 1 1 1 3 1 1 1 7 1 9 1-1 1-4 1-2 1 2 1-6 1-3 1-5 1 4 1 9 1 3 1-1 1-5 1 0 1-1 1 7 1-1 1-4 1-7 1-2 1 0 1 1 1 2 1-7 1 2 1 5 1-4 1-2 1 1 1 4 1-2 1 1 1-1 1 5 1-2 1-2 1-1 1-1 1 2 1 5 1 4 1 9 1 4 1-3 1 0 1 2 1-1 1-2 1-6 1-6 1-1 1 3 1 3 1-2 1 0 1-2 1 5 1 2 1-3 1 0 1 4 1 4 1-5 1-11 1-5 1 1 1 3 1 2 1 1 1 2 1 5 1 2 1 2 1-1 1 6 1-1 1 0 1-4 1-2 1-5 1-4 1-6 1-6 1 9 1 9 1 7 1-6 1-8 1-4 1 6 1 8 1 0 1-4 1-7 1-4 1-3 1-5 1-4 1 4 1 10 1 11 1 4 1-4 1-3 1 6 1-3 1-7 1-4 1-5 1 1 1 2 1 1 1-1 1 2 1-3 1 0 1-2 1 5 1-2 1-5 1-2 1 2 1 9 1 4 1-3 1-6 1 2 1 12 1 5 1-4 1-11 1-1 1-3 1-1 1-1 1 3 1 5 1 2 1-1 1-2 1 1 1 1 1 5 1-1 1 4 1-3 1-5 1-4 1 2 1 1 1 1 1 0 1 5 1-3 1-5 1 5 1 4 1 3 1-2 1-5 1 0 1 4 1 10 1-2 1-4 1-2 1-7 1-9 1-4 1-4 1 3 1 5 1 1 1 6 1 1 1 0 1-1 1 0 1 2 1 7 1-1 1-5 1 1 1 2 1 0 1 0 1 2 1 3 1-7 1-1 1 0 1 7 1 4 1-5 1-8 1 0 1 4 1 4 1-2 1-7 1-6 1 0 1 4 1 6 1-4 1-10 1-4 1 2 1 3 1 0 1 2 1 1 1 3 1 2 1-2 1-5 1 4 1 5 1 0 1-1 1-1 1 3 1-1 1-2 1-2 1-1 1 1 1 3 1 1 1-2 1-4 1-3 1 7 1 7 1 0 1 0 1-2 1-2 1-5 1-4 1 0 1 4 1 4 1 3 1-1 1-1 1-3 1 2 1 5 1 1 1 2 1-8 1 1 1-2 1 6 1 3 1 1 1-7 1-5 1-1 1 2 1 1 1-5 1-2 1 3 1 12 1 7 1-3 1-6 1-7 1 0 1-2 1-2 1 0 1 5 1 8 1 0 1 3 1-5 1 0 1-2 1 1 1 0 1 2 1 2 1-1 1-6 1-3 1-1 1-5 1-2 1-2 1 2 1 4 1 5 1 7 1 1 1-8 1-5M435 1034l1 4 1-1 1-2 1-1 1 2 1 2 1-2 1-3 1 3 1 8 1 7 1-1 1-3 1-1 1-1 1-1 1-6 1-4 1 1 1 6 1 4 1-1 1-2 1-4 1-5 1-1 1-5 1 1 1 6 1 6 1 0 1-7 1-4 1 1 1 10 1 6 1-6 1-9 1 0 1 3 1 5 1-3 1-9 1-3 1 0 1 10 1 2 1 1 1 1 1 2 1 2 1 6 1 1 1-4 1-3 1-6 1-3 1-1 1-1 1 3 1 0 1-5 1 0 1 7 1 8 1 0 1 1 1 0 1 1 1-5 1-10 1-3 1 7 1 2 1-3 1-9 1 6 1 8 1 5 1-6 1-3 1 3 1 5 1 0 1-7 1-4 1-2 1-1 1 0 1 9 1 0 1 1 1-1 1-1 1 1 1 3 1-3 1-2 1-6 1-1 1 0 1-1 1 3 1 1 1-1 1 1 1 4 1-1 1-4 1 2 1 1 1 2 1 6 1 5 1-1 1-5 1-3 1-2 1 1 1-3 1 3 1 6 1 4 1 0 1-3 1-1 1 4 1 0 1-8 1-1 1 3 1 5 1-3 1 0 1 3 1-1 1-2 1-8 1 3 1-2 1 5 1 2 1-4 1 2 1 5 1 1 1-7 1-5 1-2 1-5 1-9 1 0 1 8 1 2 1 1 1-4 1-2 1 3 1 5 1 1 1 0 1 2 1 4 1-1 1-6 1-9 1 1 1 8 1 8 1 1 1-3 1-7 1 3 1 4 1 2 1-3 1-5 1 3 1 5 1 3 1 3 1 1 1-5 1-5 1 0 1 2 1 4 1 4 1-7 1-6 1 1 1 2 1 1 1 3 1 0 1 0 1 0 1 1 1 0 1 3 1 5 1-2 1-6 1-7 1 1 1 4 1-1 1 0 1 1 1 11 1 7 1-1 1-10 1-9 1 1 1 9 1 7 1-5 1-8 1 1 1 2 1-1 1 1 1-5 1 0 1 0 1 1 1 1 1 2 1-3 1-7 1-3 1 3 1-1 1-3 1 2 1 0 1 1 1 0 1-2 1-3 1 11 1 2 1-3 1-1 1 2 1 3 1 0 1 4 1-1 1 2 1-4 1-3 1 0 1 4 1-4 1-4 1-4 1 2 1-2 1 1 1 5 1 4 1 3 1-5 1-3 1 2 1 0 1-2 1-5 1 1 1 8 1 1 1-2 1-3 1 2 1 0 1-2 1-3 1 6 1 9 1 7 1-2 1-4 1-4 1-2 1-4 1 5 1-4 1 0 1 6 1-2 1 7 1-2 1 0 1-1 1 0 1 0 1-2 1-3 1 2 1 4 1 4 1-3 1 1 1-5 1-1 1-2 1-7 1-6 1 4 1 11 1 3 1-5 1-1 1 4 1-1 1-6 1-10 1 1 1 5 1 6 1-3 1 0 1 7 1-1 1-3 1-5 1-4 1-3 1 5 1-2 1-7 1-2 1-1 1 5 1 6 1 3 1-5 1-5 1-1 1 3 1 2 1 7 1 4 1-2 1-4 1 1 1 2 1 1 1-2 1-8 1-8 1 1 1-1 1-4 1 4 1 6 1 4 1 3 1 2 1 2 1 2 1 0 1 1 1-6 1 5 1 4 1 2 1 0 1-2 1-1 1-1 1-2 1-2 1 6 1 8 1-2 1-8 1-4 1 4 1 10 1-6 1-9 1-4 1 8 1 12 1 0 1-6 1-7 1 3 1-1 1 3 1 2 1-7 1-9 1-4 1 4 1 9 1 0 1-4 1-1 1 1 1 4 1-1 1 3 1 2 1-1 1-11 1-10 1 1 1 4 1 3 1 0 1-5 1 2 1 5 1-3 1-1 1-1 1 2 1-1 1 0 1 4 1 9 1 4 1 3 1-3 1-6 1 3 1-3 1-4 1-3 1 2 1 7 1 5 1-1 1-4 1-5 1-3 1 5 1-1 1 1 1-2 1-5 1-1 1 1 1 6 1 1 1-5 1-3 1 1 1 3 1 2 1 1 1-5 1 3 1 12 1 0 1-2 1-5 1-2 1 5 1 2 1-4 1-5 1-5 1 3 1 9 1 5 1-1 1-9 1-10 1 1 1 5 1 9 1 0 1-1 1 0 1-4 1-1 1-2 1 4 1 4 1-6 1-6 1 2 1 12 1-1 1-9 1-7 1-1 1 10 1 1 1-2 1 0 1 2 1 4 1-1 1-7 1 0 1 0 1 6 1 1 1-1 1-4 1-1 1 2 1 5 1 0 1-8 1-4 1 3 1 5 1 2 1-7 1-3 1-4 1 0 1 6 1 6 1 3 1-4 1-3 1-3 1-1 1-3 1-1 1 0 1 4 1 1 1 4 1 2 1 1 1 0 1-6 1 0 1-2 1 3 1 9 1 10 1 6 1-3 1-7 1 0 1 1 1-6 1-6 1 1 1 11 1 3 1-1 1-11 1-4 1 1 1 2 1 4 1 3 1-1 1-3 1-1 1-1 1 2 1-1 1 1 1-4 1-6 1-4 1 0 1 4 1 4 1 0 1-4 1-2 1 3 1-1 1-5 1 3 1 2 1 1 1 3 1-3 1 3 1-1 1 2 1 2 1 5 1 7 1 0 1-3 1 2 1 2 1 1 1-1 1-4 1-3 1-8 1-2 1 2 1 8 1 1 1 1 1-1 1-4 1-2 1-1 1 0 1 0 1 1 1-2 1 2 1-4 1-3 1-1 1-2 1 5 1 3 1-3 1-7 1 3 1 8 1 0 1-8 1 0 1 5 1 9 1-3 1-18 1-7 1 5 1 15 1-1 1-11 1-3 1 1 1 7 1-1 1 2 1 7 1 3 1-4 1-1 1-3 1 3 1 3 1-4 1-4 1-3 1 0 1 5 1 2 1-3 1 0 1 2 1 4 1 4 1-3 1-3 1-3 1 0 1 0 1 4 1 5 1-3 1-15 1-10 1 10 1 17 1 11 1-3 1-3 1 4 1 3 1-5 1-14 1-6 1 2 1 3 1-2 1-5 1 1 1 8 1 2 1 6 1 1 1-3 1 3 1 0 1 3 1-1 1-3 1-5 1-3 1-3 1 6 1 5 1 4 1-7 1-9 1 1 1 13 1 4 1 0 1-6 1-1 1-4 1-4 1-2 1-2 1 5 1-1 1-1 1-5 1-2 1-3 1 4 1 1 1 1 1 5 1 3 1 1 1-4 1-3 1 5 1 12 1 2 1-9 1-6 1-2 1 8 1 4 1 1 1-5 1-1 1-2 1-1 1-5 1 3 1 5 1-1 1-1 1 5 1 3 1 0 1-5 1-7 1-2 1 5 1-3 1 0 1 6 1 0 1 6 1 0 1-2 1-7 1-4 1 1 1 4 1 4 1 4 1-1 1 0 1 1 1 2 1 4 1 1 1-8 1-4 1-1 1 4 1-1 1 1 1-2 1-4 1-5 1 0 1 4 1 3 1 4 1-3 1-3 1-5 1-2 1 1 1 3 1 1 1-3 1-2"/>
<path vector-effect="non-scaling-stroke" d="M0 1101l1 8 1 5 1 2 1-6 1 6 1 2 1-3 1-5 1-7 1 2 1 6 1 1 1-2 1-2 1 0 1 7 1 5 1 8 1 1 1-5 1-4 1-5 1-2 1-1 1-1 1 6 1 4 1 2 1-3 1 4 1 2 1-3 1-6 1 0 1 1 1 6 1-8 1 1 1 2 1 4 1 1 1-9 1-2 1 0 1 5 1-4 1 1 1-1 1-1 1-8 1-2 1-1 1 2 1 3 1 4 1 3 1 2 1 2 1 0 1 3 1 4 1-5 1-8 1-4 1 3 1 4 1 2 1-1 1-6 1 8 1 11 1 10 1-1 1-12 1-10 1-6 1 3 1 4 1 3 1 6 1-4 1-1 1-1 1-3 1-3 1-2 1 3 1 9 1-3 1-3 1-4 1-2 1 8 1 6 1-3 1 2 1-1 1-3 1-7 1-6 1 3 1 6 1 2 1-9 1-1 1-1 1 8 1 4 1-4 1-4 1 3 1 0 1 9 1 0 1-4 1-5 1-6 1-1 1 0 1 3 1 1 1 3 1 8 1 2 1-3 1-9 1-4 1 2 1 3 1-5 1-6 1 7 1 1 1-7 1-7 1 4 1 11 1 11 1-10 1-6 1 1 1 5 1-1 1-6 1 4 1 5 1 0 1-4 1 2 1 7 1 7 1-8 1-11 1-7 1 4 1 7 1 1 1 2 1 1 1-2 1-7 1 0 1 3 1 1 1 1 1-3 1-6 1 0 1 4 1 1 1-2 1 1 1 1 1 5 1 1 1 0 1 3 1 9 1 3 1-8 1-7 1 0 1-1 1-5 1 0 1 2 1 9 1 3 1-5 1-2 1 0 1 4 1 0 1-4 1-2 1 5 1-2 1-3 1-3 1 2 1 5 1-2 1-2 1 0 1 0 1 7 1 6 1 2 1-1 1 0 1 6 1-1 1-7 1-8 1-8 1 1 1 6 1-1 1 3 1 9 1 3 1-1 1-4 1-8 1 5 1 4 1 5 1-6 1-5 1 1 1-4 1-1 1-6 1 3 1 8 1 5 1-2 1 0 1 3 1 6 1-3 1-9 1-8 1 1 1 1 1 1 1-2 1 0 1 2 1 0 1-3 1-5 1 2 1-6 1-2 1-3 1 4 1 6 1 3 1 5 1-6 1 2 1-1 1 4 1 4 1-8 1-5 1-1 1 0 1 4 1 1 1-4 1 3 1 1 1-1 1 0 1 1 1 4 1 8 1 4 1-8 1-9 1-6 1 2 1 4 1 2 1 1 1 2 1 2 1-2 1 4 1 3 1-2 1-3 1 0 1-1 1 2 1 0 1-9 1 2 1 2 1 0 1-8 1-4 1 3 1 3 1 3 1 0 1 1 1 3 1-3 1-5 1 0 1 4 1 7 1-2 1-4 1 6 1 6 1 2 1-2 1-5 1-2 1 0 1 0 1-7 1-1 1 0 1 5 1 3 1 8 1 0 1 0 1-8 1-5 1-6 1 1 1 4 1 1 1 1 1 0 1-2 1 2 1 5 1 3 1 3 1-4 1-6 1 0 1 4 1 1 1-3 1-1 1 1 1-1 1 2 1 5 1 9 1 8 1-3 1-9 1-7 1-4 1-1 1-3 1 5 1 6 1 6 1-5 1-2 1-1 1 0 1 1 1-3 1-4 1-3 1-6 1 2 1 3 1 4 1 1 1-4 1 1 1 4 1 8 1 0 1-2 1-7 1 2 1 1 1 3 1-3 1-8 1-5 1 1 1 5 1 3 1-5 1-4 1 7 1 9 1 3 1-4 1-3 1-3 1 8 1-5 1-5 1 1 1 4 1 4 1-5 1-3 1 0 1 1 1 0 1 0 1 0 1 0 1-3 1 1 1-1 1 3 1-2 1-7 1-7 1-1 1 5 1 1 1-1 1 6 1 7 1 6 1-5M435 1109l1 7 1 3 1 2 1-1 1 2 1-2 1-7 1-5 1-1 1 6 1-1 1 0 1 3 1 8 1 5 1-4 1 0 1-5 1-1 1-7 1-4 1 2 1 5 1 7 1 3 1-2 1-3 1-3 1 1 1-5 1-3 1-1 1 7 1 0 1-1 1 1 1 2 1 1 1 1 1 0 1-1 1 1 1 4 1-5 1-4 1 1 1-1 1 3 1 7 1-2 1-6 1-2 1-3 1 8 1 1 1 2 1 4 1 1 1-1 1-10 1-3 1 4 1 2 1-3 1-5 1 2 1 5 1 3 1 0 1 8 1 8 1-2 1-14 1-9 1 0 1 3 1 2 1-3 1 1 1 9 1-2 1-6 1-11 1 0 1 5 1 4 1-1 1 4 1-2 1-4 1-5 1 5 1 6 1 0 1-8 1-11 1 2 1 7 1 8 1 7 1 0 1-8 1 1 1-1 1 4 1-3 1 2 1-5 1-5 1-3 1 4 1 5 1 0 1-6 1 0 1 5 1 7 1 3 1 2 1 0 1-4 1-5 1 0 1-3 1 1 1 1 1 0 1-1 1-2 1-2 1-2 1 0 1-1 1 4 1-1 1 2 1-1 1 4 1 1 1-1 1-4 1-4 1 7 1-1 1 4 1 4 1-1 1-1 1 3 1 2 1 6 1-6 1-5 1-1 1 0 1 5 1-2 1-8 1 1 1 8 1-1 1 1 1-5 1 5 1 4 1 0 1-5 1-4 1-6 1-1 1-4 1 2 1 7 1 9 1-1 1-3 1-3 1 2 1-2 1-4 1 0 1 2 1-3 1 1 1 0 1-1 1 2 1-2 1 5 1 9 1 0 1-5 1-9 1 0 1-2 1-1 1 5 1 0 1 4 1-2 1-2 1 4 1 9 1 0 1-6 1-9 1 1 1 1 1 3 1-2 1 2 1 2 1 2 1-3 1-5 1-1 1 2 1 7 1 3 1 0 1 0 1-1 1-3 1-3 1-3 1-1 1 2 1-4 1-3 1-1 1 1 1 3 1 0 1 3 1 2 1 2 1 2 1-6 1-1 1 1 1-8 1-7 1-2 1 6 1 6 1 1 1-2 1 1 1 6 1 8 1-3 1-3 1-2 1 3 1-5 1-2 1-1 1-4 1 1 1 4 1 3 1 3 1-1 1-3 1 1 1 2 1 0 1-3 1-4 1 1 1 3 1 1 1-6 1-1 1 7 1 7 1 7 1 3 1-6 1-3 1-3 1-8 1 2 1 8 1 11 1-2 1-9 1-1 1 0 1 1 1 0 1 1 1 3 1 1 1-2 1 0 1 0 1-3 1-2 1 1 1 3 1-1 1-5 1 2 1 8 1 1 1-2 1-4 1 3 1 4 1 2 1-11 1-6 1 5 1 3 1 0 1-5 1 2 1 3 1 0 1-4 1 2 1 1 1 1 1-1 1-3 1-4 1-2 1 4 1 4 1 1 1-5 1-1 1-3 1 0 1-4 1-3 1-1 1 2 1 5 1 0 1 2 1 1 1 0 1-6 1-4 1 6 1 5 1 0 1-1 1-1 1-2 1-6 1-6 1-3 1 4 1 3 1 4 1 4 1 2 1-1 1-2 1 0 1 2 1-5 1 1 1-1 1-6 1-4 1 3 1 15 1 10 1 4 1-5 1-4 1 3 1 0 1 0 1 4 1 4 1-5 1-12 1-7 1 8 1 9 1 2 1-8 1-10 1 4 1 7 1 7 1 2 1-5 1-8 1-3 1 4 1 6 1-5 1-4 1-6 1 1 1 0 1 2 1 0 1 3 1 6 1 2 1-2 1 2 1 3 1-4 1-3 1-6 1 0 1 1 1 0 1-1 1-3 1 1 1 2 1 8 1 3 1-2 1-5 1-1 1 0 1-2 1 3 1 5 1 4 1-7 1 1 1 2 1 6 1 1 1-1 1 0 1 0 1-1 1-3 1 0 1-5 1-4 1 0 1 12 1 5 1-5 1-14 1-4 1 11 1 5 1-3 1-5 1 6 1 7 1-2 1-11 1-7 1-2 1 7 1 3 1 0 1 0 1-1 1 1 1 5 1 1 1-4 1 2 1-2 1-1 1-3 1-1 1 3 1 6 1 0 1-2 1 0 1 2 1-1 1-3 1-3 1 3 1 2 1-5 1-8 1 0 1 0 1 6 1 2 1-2 1 0 1 1 1 3 1-8 1-2 1 3 1 3 1 9 1-1 1-6 1-2 1-2 1 3 1 0 1 1 1 3 1 1 1 0 1-1 1-2 1 0 1-1 1-4 1 0 1 3 1 5 1 0 1-6 1 0 1-3 1-1 1 4 1 3 1 2 1-4 1-7 1-2 1 5 1 4 1 2 1-1 1 0 1 2 1-1 1-6 1 0 1 3 1 3 1 1 1-9 1 0 1 8 1 6 1 3 1 0 1 0 1-3 1-4 1-8 1-4 1 0 1 8 1 7 1 5 1-2 1-6 1-8 1 0 1 6 1 4 1 2 1-4 1 1 1 2 1-6 1 1 1-1 1 1 1 1 1-10 1-4 1 2 1 5 1 7 1 1 1-4 1 1 1 1 1 5 1 3 1-1 1-7 1-5 1 1 1-1 1 1 1 2 1 2 1 8 1-1 1-1 1 0 1 3 1 7 1 3 1-6 1-4 1-4 1-6 1-2 1-6 1-1 1 8 1 10 1 9 1 0 1-4 1-6 1-5 1 2 1 3 1 4 1-7 1-7 1-6 1 5 1 5 1-1 1-5 1-1 1-3 1 11 1 6 1-3 1-1 1-6 1 4 1 0 1 0 1-8 1 2 1 3 1 9 1 0 1-8 1-8 1-6 1 3 1 2 1-1 1 2 1 3 1-3 1 3 1-2 1 3 1-4 1 1 1 0 1-1 1-2 1-1 1 3 1 5 1 10 1 0 1-4 1-9 1 0 1 0 1 2 1-1 1 0 1 0 1 4 1 4 1 2 1-5 1-5 1 3 1 7 1 8 1 2 1-5 1 0 1-3 1-3 1-4 1-2 1 3 1-4 1 0 1-3 1 6 1 3 1 3 1-3 1 4 1 0 1-5 1 0 1 0 1 3 1-3 1-4 1-4 1 4 1 5 1 1 1-1 1-4 1 4 1 1 1-1 1 1 1-1 1 4 1 5 1-1 1-1 1-7 1-8 1-1 1 3 1 3 1-4 1-4 1 1 1 2 1 4 1-1 1 1 1 1 1-3 1 5 1 3 1 4 1-2 1-3 1-2 1 4 1 4 1 2 1-3 1-1 1-4 1-6 1-4 1-5 1 3 1 0 1 2 1 3 1 8 1-1 1-7 1-1 1-5 1-1 1 0 1 2 1 4 1 0 1 3 1 1 1 2 1 1 1 1 1-3 1 1 1 0 1 3 1-3 1-1 1-4 1 1 1 8 1 5 1-1 1-13 1-9 1 3 1 6 1 1 1 0 1 0 1 3 1-3 1-4 1-7 1 3 1-2 1 0 1 4 1 4 1-3 1-2 1-3"/>
<path vector-effect="non-scaling-stroke" d="M0 1190l1-7 1-4 1 4 1 9 1 4 1 0 1-6 1-1 1 0 1 3 1-2 1-3 1-3 1 1 1 5 1 5 1 4 1 3 1-1 1-2 1-4 1-2 1-2 1 2 1 4 1-1 1-1 1-3 1 3 1 4 1-6 1 0 1 4 1 8 1 5 1-10 1-6 1-6 1 3 1 3 1 3 1 2 1-4 1-10 1-4 1 3 1 8 1 4 1-6 1-11 1-1 1 5 1 8 1 6 1-2 1-5 1-4 1 0 1 0 1 0 1 5 1 4 1-3 1-2 1-2 1 6 1-1 1-5 1 1 1 2 1 2 1 5 1 2 1 3 1-3 1-9 1 2 1 0 1 2 1 2 1 0 1-1 1-2 1-8 1-12 1 2 1 9 1 6 1 2 1 3 1 2 1 1 1-7 1-1 1 3 1 8 1 1 1-12 1-12 1 3 1 6 1 1 1-2 1 0 1 5 1 1 1 1 1 6 1 1 1-6 1-6 1-3 1 8 1 3 1-5 1-3 1 2 1 3 1-2 1-2 1 0 1 5 1 7 1-2 1-5 1 0 1 0 1-4 1-5 1-1 1 2 1-4 1-7 1-1 1 4 1 6 1 7 1-2 1 1 1 1 1 0 1-3 1 0 1 1 1 4 1 4 1-1 1 0 1-5 1-4 1 4 1 2 1-2 1-6 1 2 1 10 1 6 1-4 1-10 1-6 1 0 1 8 1 1 1-1 1-3 1 5 1 4 1-1 1-7 1-5 1 0 1-2 1 6 1-1 1 3 1 9 1 5 1 3 1-6 1-5 1 0 1-1 1 4 1 1 1-6 1-6 1-2 1 2 1-1 1 5 1 2 1 1 1-2 1-1 1 1 1 4 1 1 1 0 1-6 1-6 1-5 1 2 1 0 1-2 1 4 1 3 1 5 1 1 1 3 1 4 1 2 1-9 1-8 1-2 1 3 1 6 1-5 1-4 1 3 1 9 1-1 1-4 1-8 1 3 1 0 1 4 1 8 1-7 1 2 1-9 1-2 1 2 1 2 1-3 1 2 1 6 1 11 1-4 1-4 1 0 1 3 1 1 1-10 1 3 1 8 1 4 1-12 1-3 1 2 1 6 1 1 1-5 1-1 1 4 1-4 1-1 1-6 1 0 1 5 1 1 1 2 1 0 1 4 1 3 1-1 1-2 1-6 1-2 1 0 1 2 1 1 1-4 1 0 1 5 1-2 1 1 1-8 1 1 1 1 1 3 1 5 1 2 1-4 1-5 1-3 1 1 1 6 1 0 1 3 1 0 1-1 1-4 1 1 1 1 1 2 1-3 1-1 1-3 1 5 1 1 1 3 1-6 1-2 1-3 1-1 1 0 1 9 1 3 1-2 1 0 1-7 1-2 1 0 1 3 1-3 1 0 1-5 1 4 1 9 1 8 1 1 1-5 1 0 1 10 1 0 1-7 1-4 1-2 1-2 1 8 1 2 1 0 1-2 1 0 1-6 1-9 1 1 1 9 1 9 1-5 1-13 1-2 1 10 1 8 1-6 1-9 1-4 1 3 1 4 1-4 1-2 1 3 1 2 1 2 1 2 1 2 1 0 1 2 1 10 1 3 1-3 1-11 1-5 1 4 1 3 1 4 1 3 1 2 1 1 1-12 1-9 1-2 1 5 1 3 1 4 1 0 1 1 1 0 1-2 1 1 1 2 1 1 1 2 1 2 1 7 1-3 1-6 1-2 1-4 1-2 1-3 1-3 1-2 1 1 1-4 1 1 1 3 1-2 1 0 1 3 1 7 1 3 1-7 1-7 1 2 1 2 1-1 1-3 1-3 1 0 1 0 1-1 1 2 1 4 1 2 1-3 1 5 1 2 1-2 1-5 1 0 1 2 1-2 1-3 1-8 1-4 1 0 1 6 1 7 1 7 1 4 1 2 1-2 1-1M435 1188l1 3 1 3 1 4 1 4 1-4 1-7 1-2 1 2 1 5 1 1 1-4 1-2 1 2 1 0 1-3 1 1 1 0 1-1 1 3 1-2 1 3 1 3 1-3 1 2 1-2 1 3 1 5 1-5 1-14 1-4 1 3 1 7 1 1 1-6 1-1 1 5 1 5 1-2 1-7 1 8 1 10 1 3 1-9 1-6 1 0 1 5 1 4 1-6 1-5 1 0 1 2 1 1 1-4 1 0 1 3 1 3 1 1 1-1 1 5 1 2 1-4 1-4 1-4 1 7 1 2 1-5 1-4 1 1 1 9 1-1 1 0 1-1 1 7 1 2 1-11 1-8 1-2 1 2 1 4 1 0 1-1 1 1 1 3 1-5 1-2 1 2 1 2 1 3 1 3 1 4 1-6 1-10 1-8 1 2 1 9 1 5 1-1 1-8 1 2 1-1 1 3 1 7 1 1 1 5 1 0 1-4 1-5 1-3 1 3 1 2 1-4 1-3 1-1 1 11 1 4 1 1 1-8 1-4 1 1 1 3 1 8 1 0 1-4 1-6 1-1 1-4 1-1 1 1 1 1 1 5 1 7 1-2 1-6 1-5 1 4 1 2 1 1 1 0 1-2 1-1 1 3 1 2 1 1 1-2 1-2 1-3 1-2 1 5 1 4 1 0 1-2 1-3 1 7 1 3 1-6 1-7 1-3 1 0 1-1 1 1 1 4 1 5 1-1 1-2 1 0 1 6 1 1 1-4 1-1 1 6 1-1 1-1 1-4 1 6 1 7 1 2 1-4 1-4 1-1 1-1 1 0 1-1 1-4 1-4 1 7 1 8 1 4 1-2 1-4 1-2 1 0 1 1 1-1 1 0 1 2 1-2 1-3 1-4 1-1 1 3 1 8 1 1 1-5 1-2 1 4 1 7 1-1 1-10 1-8 1 3 1 0 1 0 1-4 1-2 1 8 1 8 1-5 1-8 1-10 1 0 1 8 1 13 1 5 1-5 1-6 1-3 1 2 1-2 1-4 1-6 1 3 1-3 1 3 1-4 1 4 1 6 1 4 1-4 1-3 1 1 1-2 1-2 1 0 1-4 1-1 1-1 1-1 1 5 1-1 1 3 1 2 1 5 1 3 1 2 1-2 1-1 1-3 1-3 1-7 1-4 1 1 1 2 1 3 1-2 1-2 1 3 1 2 1 4 1 2 1 2 1 1 1-3 1 1 1 4 1 1 1-6 1-4 1-3 1 3 1 3 1-4 1 2 1 0 1-2 1-4 1 3 1 13 1 3 1-4 1-3 1 1 1 7 1-2 1-3 1-1 1 5 1 3 1-4 1-5 1 3 1 3 1 4 1 0 1 0 1 0 1-6 1 1 1 6 1 3 1-4 1 4 1-4 1 4 1-2 1-5 1-4 1 1 1 4 1-1 1-2 1 0 1 3 1-2 1-1 1-2 1 5 1 11 1 4 1-12 1-10 1-6 1 0 1 2 1 2 1 3 1 3 1 1 1-5 1-10 1-4 1 0 1 2 1 7 1 10 1 2 1-1 1-7 1-6 1 0 1 2 1 2 1-1 1 0 1-3 1-2 1 4 1 3 1 4 1-6 1-10 1-5 1 3 1 7 1 8 1-1 1-2 1 0 1 0 1 2 1-2 1 1 1 1 1 4 1-4 1-2 1-5 1 2 1 2 1-8 1-7 1-3 1 14 1 7 1-2 1-9 1-3 1 11 1 9 1-1 1-5 1-6 1-4 1 4 1 6 1 3 1-3 1-6 1 3 1 5 1 3 1-3 1-7 1-5 1 1 1 4 1 2 1-3 1 0 1 6 1 2 1 0 1 3 1 7 1 0 1-10 1-8 1-3 1 2 1 1 1-3 1 0 1 5 1 10 1 3 1-2 1-6 1-2 1-5 1 2 1 3 1 8 1 3 1-4 1-3 1 3 1 2 1-6 1-5 1 0 1 4 1 8 1 5 1-2 1-1 1-6 1-4 1-3 1 2 1 0 1-3 1-5 1-1 1 7 1 5 1 0 1 0 1 2 1 7 1-4 1-10 1-10 1 1 1 11 1 10 1-1 1-8 1-3 1 4 1 10 1-1 1-7 1-9 1-3 1 5 1 4 1 2 1 2 1 6 1-4 1-5 1-1 1 7 1-2 1-6 1-5 1 5 1 9 1-6 1-8 1-3 1 5 1 4 1-2 1 0 1 1 1 4 1 0 1-8 1 3 1-4 1-1 1 3 1 3 1 4 1-3 1-7 1-3 1 8 1 6 1 2 1 2 1 0 1 1 1-8 1-5 1-4 1 6 1 4 1 1 1 1 1-5 1-7 1-7 1 5 1 2 1 6 1 1 1-2 1 2 1 1 1-5 1 1 1 1 1-1 1 3 1 3 1 2 1-5 1-7 1-4 1 5 1 4 1-2 1-3 1 2 1 9 1 5 1-3 1-4 1-1 1 0 1-4 1-6 1-4 1 4 1 8 1 6 1-1 1-7 1-5 1-5 1 0 1 3 1 5 1 0 1-2 1 4 1 3 1-1 1-1 1 2 1-1 1 0 1-2 1-8 1 0 1 4 1 6 1 3 1-6 1-7 1-2 1 5 1 5 1-2 1 8 1 3 1-1 1 1 1-3 1-2 1 0 1 7 1 2 1 3 1-4 1-2 1 4 1 7 1 1 1-6 1-4 1 0 1-4 1-7 1-4 1 6 1 12 1 5 1-5 1-6 1 2 1 2 1-1 1-5 1 0 1 1 1-3 1-8 1-1 1 4 1 11 1-5 1-6 1 2 1 7 1 4 1-7 1-5 1 3 1 7 1-4 1-7 1-6 1 2 1 7 1 1 1 0 1-6 1 0 1-2 1-4 1 3 1-2 1 3 1-2 1 0 1-2 1 2 1 0 1 2 1 2 1 0 1 3 1 1 1-6 1-3 1 5 1 7 1 6 1 3 1-1 1-9 1-3 1-4 1 5 1 7 1 0 1-4 1-7 1-8 1 3 1 7 1 8 1 6 1 1 1-10 1-5 1 5 1 2 1-4 1-8 1-5 1 6 1 4 1 0 1 0 1-2 1 3 1-2 1 1 1 5 1 8 1 3 1-1 1-6 1-6 1-9 1-2 1 6 1 7 1 7 1-1 1-2 1 1 1-5 1-2 1 0 1 7 1 4 1 1 1-6 1-5 1-4 1-3 1 1 1-3 1 2 1 5 1 3 1-1 1-1 1-2 1-2 1 1 1-1 1-4 1-2 1 9 1 6 1-2 1 2 1-2 1 1 1 4 1 4 1-3 1-3 1 3 1-3 1-1 1-3 1-12 1-5 1-2 1 4 1 0 1 6 1 2 1 2 1-3 1 3 1-5 1 0 1 3 1 1 1-2 1 2 1 2 1 4 1 6 1-3 1-6 1-2 1 8 1 1 1 3 1-3 1-4 1-3 1 4 1 5 1 3 1-6 1-4 1-6 1 2 1 6 1-1 1 0 1 1 1 0 1-7 1-4 1 0 1 4 1 4 1-2 1 0"/>
<path vector-effect="non-scaling-stroke" d="M0 1267l1-3 1-10 1 2 1 7 1 7 1 5 1 0 1 1 1-1 1 0 1 1 1 1 1-4 1-9 1 2 1 5 1 4 1 2 1 1 1-2 1-3 1-1 1-6 1 3 1 8 1 2 1-5 1 0 1 11 1 4 1-7 1-9 1-4 1 5 1 3 1-1 1-1 1 0 1-1 1-3 1-3 1 2 1-4 1-5 1 3 1 1 1 2 1 0 1-4 1 2 1 4 1 6 1-4 1-5 1-4 1-2 1 4 1 3 1 5 1-8 1 2 1 3 1 0 1 0 1-2 1 2 1 6 1 2 1-1 1 1 1 1 1-1 1-1 1-3 1-9 1-5 1-4 1 1 1 7 1 6 1-2 1 1 1 1 1-3 1-3 1-2 1 1 1 0 1-1 1 3 1 3 1 2 1 0 1 4 1 4 1 2 1-6 1-12 1-6 1 0 1 0 1 0 1 4 1 4 1 5 1 5 1 1 1-1 1-3 1-10 1-2 1 5 1 9 1 6 1-4 1-8 1-2 1 3 1 6 1 5 1-2 1-3 1 2 1-1 1 2 1 0 1-5 1-6 1-3 1 0 1 0 1 2 1 0 1-3 1 1 1 4 1 4 1-1 1-1 1 0 1 0 1 3 1 0 1 4 1-2 1 0 1-1 1-5 1 3 1 3 1 5 1-3 1-7 1-4 1 2 1 1 1 3 1 1 1-7 1-1 1-5 1 2 1 2 1 0 1-1 1-3 1 6 1 5 1 1 1-2 1-5 1-3 1 3 1 6 1 3 1 3 1 0 1 2 1-6 1-1 1-3 1 0 1 2 1-7 1 1 1 0 1 8 1 3 1-3 1 2 1 4 1 1 1-6 1-6 1 0 1 8 1 4 1-8 1-5 1-2 1 5 1 0 1 3 1 0 1-3 1 2 1 0 1 6 1 8 1 1 1-7 1-4 1-3 1-1 1 0 1-1 1 1 1-2 1 1 1 3 1 4 1-2 1-8 1-7 1 3 1 14 1 2 1-7 1-1 1-1 1 2 1-7 1-5 1 7 1 6 1 6 1 2 1-3 1-4 1 3 1-1 1-6 1-3 1 2 1 2 1 7 1 1 1 1 1-5 1-2 1-3 1-3 1-1 1-3 1-2 1-5 1-1 1 7 1 3 1 3 1-3 1 3 1 3 1 0 1 1 1 1 1-1 1-7 1-4 1-1 1 3 1 2 1 3 1-5 1 3 1-1 1 0 1-3 1 4 1 7 1 3 1-3 1-7 1-1 1-3 1 2 1 5 1 8 1 3 1-7 1-3 1-5 1-3 1 3 1-1 1 4 1 6 1 0 1-1 1-4 1 0 1 0 1-5 1-5 1 1 1-4 1 6 1 4 1 1 1 3 1-5 1-5 1 3 1 6 1 1 1-2 1-3 1 3 1 4 1 5 1 2 1-1 1-5 1 2 1-3 1 0 1-2 1-1 1 5 1 2 1 5 1-1 1-3 1-2 1-4 1 0 1-1 1 7 1-3 1-6 1-9 1-6 1 5 1 5 1 0 1 2 1 0 1-4 1 3 1 0 1 3 1 1 1-1 1 1 1 3 1 3 1 1 1-2 1 4 1-4 1-7 1-9 1-1 1 10 1 13 1 2 1 1 1-2 1-2 1 6 1-6 1-3 1-1 1 1 1-4 1-3 1-1 1 4 1 10 1 0 1-7 1-5 1 4 1 10 1 6 1-4 1-5 1 2 1 3 1-6 1 0 1 2 1-4 1-7 1-11 1 3 1 5 1-1 1-5 1 5 1 13 1 8 1-1 1-5 1-4 1-2 1-6 1-8 1 3 1 10 1 2 1-7 1-8 1-3 1 2 1-1 1 0 1 2 1 5 1-5 1-4 1 1 1 5 1 2 1-10 1-10 1-4 1 4 1 7 1 7 1 4 1-1 1 2 1 1M435 1269l1 0 1 4 1-1 1 0 1-4 1-3 1 3 1-2 1 1 1 8 1 1 1-1 1-1 1-5 1 1 1 0 1 4 1 3 1-2 1-7 1-2 1 0 1 5 1 5 1 1 1-3 1-3 1 1 1 3 1 3 1-1 1-7 1-1 1 1 1 0 1-4 1-7 1 3 1 5 1 2 1 0 1 5 1 2 1 3 1 1 1-1 1 2 1 1 1-3 1-5 1-5 1-10 1 0 1 6 1 6 1 7 1-1 1-3 1 0 1 2 1 0 1-1 1 4 1-6 1-13 1 0 1 7 1 7 1-3 1-4 1-2 1 0 1 0 1-2 1 6 1 8 1 6 1-3 1-16 1-5 1 2 1 3 1 6 1 0 1-6 1 1 1 4 1-3 1-2 1-5 1 0 1 5 1 1 1-5 1-3 1-1 1 3 1 1 1 7 1 5 1-3 1-12 1-4 1 7 1 4 1 1 1 0 1 2 1 3 1-6 1-5 1-1 1 3 1 1 1-5 1 0 1 5 1 5 1 2 1 1 1-3 1 4 1 3 1-1 1-3 1 1 1-1 1-2 1 0 1 0 1 0 1 2 1-1 1 0 1 2 1-4 1 0 1 3 1 2 1 0 1 1 1-2 1-3 1-2 1 1 1 1 1 2 1 0 1-8 1-2 1 2 1 10 1 2 1-3 1-7 1-2 1 5 1 1 1-4 1-7 1-2 1 4 1 5 1 0 1 0 1 3 1 1 1 1 1-3 1 5 1 4 1-1 1-1 1-1 1-1 1 2 1 1 1-3 1 2 1 2 1 1 1 0 1-2 1 3 1 3 1-1 1-5 1-2 1 3 1 6 1 3 1-1 1-7 1-6 1 1 1 7 1 9 1 0 1-10 1-6 1 1 1 3 1-2 1-5 1-6 1 2 1 5 1 5 1 6 1 2 1 0 1-10 1-6 1-3 1 0 1-4 1-2 1 6 1 13 1 5 1-8 1-11 1-1 1 9 1 8 1 2 1-3 1-4 1-1 1-2 1-2 1 0 1-3 1-1 1 1 1-1 1-2 1 1 1-2 1 5 1 0 1 2 1 1 1-3 1-5 1 0 1-1 1 2 1-5 1-6 1 6 1 4 1 3 1 0 1 4 1 6 1 4 1-6 1-6 1-4 1 2 1 1 1-3 1-3 1-3 1 2 1-2 1 2 1 1 1 2 1 2 1 4 1 0 1-5 1-8 1-2 1 6 1 6 1 6 1-3 1-3 1-3 1 5 1 8 1 1 1-6 1-8 1 3 1 4 1 7 1 4 1-1 1 0 1-5 1-3 1 1 1 5 1 3 1 2 1 0 1 0 1-3 1-7 1-4 1 0 1 2 1 3 1 1 1 5 1 3 1 8 1-4 1 0 1-2 1-4 1 5 1-1 1-1 1-7 1-2 1 3 1 3 1 2 1 0 1 2 1 2 1-5 1-7 1 0 1 1 1 4 1-4 1-6 1-3 1 1 1 8 1-4 1 2 1-9 1-5 1 1 1 4 1-2 1-3 1-5 1 1 1 8 1 1 1-6 1-4 1 1 1 5 1 7 1 3 1-2 1 2 1-2 1 0 1-4 1-6 1 3 1 6 1-5 1-10 1-6 1 5 1 15 1 8 1-2 1-4 1-2 1-4 1-4 1 1 1 8 1 7 1 1 1-1 1-1 1 0 1 1 1-6 1 3 1 0 1 1 1-5 1-4 1-1 1 3 1 2 1 6 1 2 1-6 1-9 1 0 1 11 1 9 1-8 1-8 1-1 1 8 1 7 1-5 1-4 1-4 1 3 1-1 1-1 1-1 1 6 1-1 1 2 1 1 1 1 1 2 1 6 1-5 1-9 1-6 1 2 1 4 1-2 1-1 1-4 1 5 1 1 1 2 1-1 1 2 1 4 1 0 1-3 1-4 1 6 1-1 1 5 1-3 1-4 1 2 1 4 1-2 1 1 1-2 1 6 1 3 1-9 1-5 1-2 1 11 1 3 1-2 1 1 1-2 1-3 1-7 1-1 1 2 1 2 1 1 1 4 1 4 1-1 1-10 1-12 1 6 1 9 1 5 1-1 1 1 1 5 1 3 1-5 1-3 1-4 1-5 1 0 1-2 1 0 1 4 1 0 1-2 1-3 1 3 1 7 1 8 1-5 1-8 1-2 1 6 1 4 1-3 1-9 1-2 1 5 1 3 1-5 1-3 1 6 1 1 1-6 1-9 1 2 1 4 1 9 1-2 1-1 1 7 1 3 1-5 1-9 1-1 1 1 1 2 1 5 1-4 1 3 1-1 1 0 1-3 1-3 1 6 1 7 1 0 1-6 1-2 1-2 1 5 1-1 1-1 1 2 1 1 1 1 1-1 1-3 1 4 1-2 1-4 1-2 1 5 1 1 1 3 1 0 1 3 1-2 1-5 1-6 1-5 1 1 1 7 1 2 1 0 1-1 1 3 1 2 1 0 1-1 1-6 1-1 1 3 1 3 1 6 1-2 1-11 1-6 1 0 1 8 1 2 1 4 1-2 1 3 1 0 1-2 1-1 1 1 1-2 1-6 1-5 1 3 1 6 1 6 1 2 1-7 1-1 1-2 1 1 1 1 1 2 1-2 1 1 1 1 1 0 1 3 1-1 1 0 1-2 1 2 1 8 1 1 1 3 1-2 1 6 1 3 1-3 1-6 1-4 1 1 1-2 1-5 1-7 1 5 1 5 1 1 1 8 1 1 1-5 1-8 1 0 1 7 1 6 1-4 1-13 1-2 1 0 1 5 1-6 1 0 1 8 1 4 1 4 1 1 1 2 1-2 1-2 1 1 1-1 1 0 1-7 1-9 1-6 1 4 1 7 1 2 1-3 1-3 1-1 1 3 1 4 1 2 1-4 1-2 1 0 1 1 1 7 1-2 1-1 1-5 1-5 1-7 1-1 1 7 1 4 1 1 1-1 1-1 1 0 1-1 1 3 1-2 1 2 1 7 1 3 1 1 1-7 1-15 1 0 1 12 1 13 1 5 1-3 1-5 1 6 1 3 1-6 1-8 1-10 1-1 1 0 1 3 1 4 1 7 1 2 1-1 1-3 1 1 1-5 1 3 1 6 1 3 1-5 1-12 1-1 1 4 1 5 1 4 1 4 1-1 1-1 1-3 1 2 1 4 1 4 1 0 1-2 1-1 1-2 1-8 1-10 1 1 1 3 1 10 1 5 1-3 1-5 1-1 1-6 1 0 1-2 1-2 1-2 1 3 1 7 1 6 1 8 1-4 1-6 1-3 1 1 1 3 1 1 1 1 1-1 1 2 1 3 1-7 1-3 1-9 1 0 1-5 1 4 1 6 1 7 1-2 1-2 1-1 1 1 1-3 1-4 1 3 1 1 1 3 1-3 1 0 1 4 1 1 1-8 1-1 1 1 1-1 1-1 1 5 1 6 1 3 1-3 1-2 1 4 1 4 1-6 1-5 1-6 1-1 1 3 1 3 1 5 1 5 1-4 1-7 1 0 1 2 1 5"/>
<path vector-effect="non-scaling-stroke" d="M0 1335l1-1 1-2 1 3 1 8 1 10 1 5 1-3 1-7 1-1 1 3 1 2 1-2 1-4 1-6 1 8 1 9 1 2 1-7 1-5 1-1 1 1 1 1 1-2 1 0 1 0 1 2 1-4 1-1 1 10 1 9 1-7 1-12 1 1 1 9 1 1 1-6 1-8 1-1 1 7 1-4 1 5 1 1 1 2 1-8 1-8 1 2 1 6 1 6 1-6 1-7 1-5 1 2 1 7 1 5 1 5 1-3 1-3 1-5 1 2 1 7 1-1 1-1 1-1 1-3 1 1 1-2 1 3 1 2 1-1 1 2 1 2 1 4 1 2 1-1 1-1 1-2 1-1 1 1 1-4 1 4 1 0 1 2 1-2 1-6 1-7 1-1 1 0 1 6 1 3 1-1 1 0 1 7 1 7 1-1 1-1 1-6 1-6 1-1 1 3 1 3 1-2 1-8 1-1 1 2 1 4 1 7 1 10 1-1 1-8 1-10 1-2 1 7 1 5 1 1 1-5 1-3 1 7 1 1 1 7 1-5 1-2 1-6 1 3 1 3 1-5 1-1 1-2 1-2 1-9 1-3 1 4 1 9 1 0 1-5 1-3 1 9 1 8 1 4 1-11 1-14 1 0 1 6 1 5 1-2 1 1 1 2 1 2 1-2 1 1 1 7 1 6 1-2 1-7 1-4 1-2 1 7 1 5 1-3 1-16 1-7 1 0 1 7 1 0 1-1 1-1 1 7 1 5 1-3 1-1 1-8 1-1 1-3 1-1 1 6 1 8 1 2 1 4 1 4 1 3 1-3 1-8 1-5 1-4 1 0 1 5 1-1 1 4 1 2 1-1 1 1 1 2 1 3 1-2 1-2 1-3 1-4 1 2 1-2 1 1 1 3 1 5 1-3 1-3 1-3 1 7 1 5 1-2 1-3 1 5 1 12 1 5 1-4 1-13 1-7 1 3 1 2 1-4 1-1 1 1 1 5 1 4 1 2 1-7 1-2 1-6 1 2 1 5 1 2 1-8 1-3 1 5 1 6 1-1 1-8 1 3 1 4 1 1 1 0 1-4 1 5 1 4 1-5 1-8 1-2 1 7 1 3 1 0 1-6 1 3 1 4 1-1 1-6 1-3 1-3 1-4 1-3 1 1 1 8 1 3 1-3 1-1 1 2 1 1 1-1 1-4 1 2 1 3 1 1 1 2 1 0 1 0 1 2 1 0 1 3 1 0 1-2 1-4 1-3 1 8 1 4 1 3 1-6 1-3 1 1 1-1 1 0 1 2 1 2 1 5 1 0 1 0 1-5 1-3 1-5 1-1 1 1 1 5 1 1 1-4 1 5 1 0 1 2 1-10 1-5 1-3 1 0 1 2 1 3 1 7 1 1 1-3 1-6 1-3 1 4 1 4 1 0 1-4 1 5 1 10 1 1 1-3 1-6 1 2 1 5 1-1 1-9 1-6 1-2 1 6 1 4 1 6 1 3 1 4 1 2 1-8 1-9 1-3 1 4 1 0 1-3 1-10 1-4 1 6 1 5 1 6 1 4 1 1 1-1 1-2 1-5 1-5 1-1 1 6 1-2 1 1 1-1 1 3 1 7 1 1 1-1 1-6 1-3 1-1 1 6 1 8 1 4 1-3 1-6 1-1 1-1 1 2 1-6 1 2 1-1 1-3 1-6 1 0 1 9 1 9 1 1 1-8 1-3 1 4 1 7 1-1 1 2 1 2 1-4 1-5 1 0 1 0 1 6 1-8 1-9 1 3 1 1 1 1 1 2 1 2 1 7 1 3 1-3 1-1 1 0 1 3 1-1 1-6 1 2 1 3 1 3 1-5 1-3 1-3 1 1 1 2 1-1 1-1 1 3 1-3 1-3 1 0 1 1 1 3 1-1 1-7 1-5 1 0 1 8 1 3 1-4 1-3 1-2 1 4 1 0M435 1339l1-3 1 2 1-2 1-4 1 0 1 3 1 6 1 0 1 1 1 4 1 5 1 0 1-4 1-1 1-2 1-3 1-4 1 1 1 3 1 2 1 2 1 5 1 2 1 2 1-11 1-4 1 3 1 6 1 3 1-4 1-4 1-1 1 5 1 4 1 3 1-3 1-3 1-4 1-4 1-1 1 2 1 3 1 0 1-3 1 6 1 6 1 8 1-1 1-1 1-4 1-1 1 7 1 0 1-4 1-9 1-7 1 2 1 8 1-2 1-3 1 1 1 4 1 3 1-1 1-2 1 1 1 1 1-5 1-2 1 0 1-2 1-1 1-3 1-4 1 8 1 3 1 6 1 2 1 6 1 2 1-8 1-8 1-9 1 2 1 0 1 3 1-1 1 3 1 5 1 0 1-6 1-8 1 0 1 1 1 6 1 2 1 4 1 0 1-5 1-3 1-4 1 5 1 2 1 0 1-7 1-2 1 8 1 5 1 0 1-1 1-4 1 0 1 1 1-3 1-1 1 2 1 1 1-3 1-4 1-3 1 6 1 2 1 6 1 3 1 2 1-2 1 0 1-1 1-5 1 0 1-1 1-1 1 1 1 1 1 0 1 2 1-1 1-6 1-3 1 2 1 5 1 6 1-2 1-6 1 4 1 3 1-1 1 4 1-6 1-2 1-7 1 7 1 1 1 3 1 6 1 6 1-3 1-6 1-4 1 1 1-1 1-7 1-8 1 6 1 2 1 7 1 1 1-2 1-2 1-3 1 3 1 5 1 7 1 2 1-5 1-1 1-4 1-1 1-5 1-4 1 12 1 8 1 1 1-7 1-7 1-1 1 3 1-2 1 1 1 2 1 4 1 0 1 0 1 0 1-4 1 0 1-1 1 1 1 7 1 4 1-4 1-9 1-5 1-3 1 3 1 5 1 4 1-2 1-3 1 0 1 0 1 2 1 4 1-3 1-1 1-4 1 0 1 5 1-3 1-3 1 3 1 5 1 8 1-2 1-12 1-1 1 2 1 10 1 4 1 1 1-8 1-3 1-3 1-1 1 4 1-1 1-8 1-3 1 2 1 5 1 1 1-5 1-3 1 2 1 6 1-3 1-2 1-2 1-4 1 1 1-1 1-5 1-1 1 1 1 10 1 4 1-4 1-1 1 1 1 4 1 2 1-3 1 0 1 2 1 5 1-5 1-4 1-4 1 0 1 5 1-2 1 4 1-1 1 6 1 1 1 0 1-2 1-3 1 2 1 0 1 0 1-4 1 2 1-1 1-1 1 4 1 6 1 2 1-3 1-6 1-3 1 7 1 6 1 1 1-1 1-2 1 0 1-1 1-5 1-1 1 4 1 0 1 4 1 2 1 0 1-1 1-2 1 6 1 3 1 0 1-5 1-5 1 4 1 3 1 0 1-5 1-2 1 2 1 5 1 5 1-2 1-8 1-9 1-1 1 7 1 5 1-1 1 0 1-2 1-1 1-5 1-3 1 7 1 5 1-6 1-6 1 4 1 10 1 3 1-6 1-11 1 0 1 3 1-7 1-4 1-4 1 0 1 8 1 1 1 5 1 2 1-1 1-3 1-4 1 1 1 3 1 0 1 1 1 3 1-1 1-2 1-5 1 0 1 1 1-3 1-2 1-3 1 1 1 3 1-3 1-4 1 2 1 4 1 0 1-2 1 0 1 0 1 4 1 6 1-1 1 0 1-1 1-2 1-1 1-1 1-3 1 0 1 2 1 6 1 1 1 1 1-3 1 1 1 5 1-2 1-4 1-2 1 8 1 9 1 2 1-6 1-6 1-9 1 1 1 6 1 5 1 0 1 3 1-3 1-1 1-4 1-1 1-6 1 0 1 8 1 5 1 5 1 4 1 5 1-6 1-8 1-7 1 0 1 2 1 0 1-4 1 4 1 9 1-1 1-1 1-4 1 1 1 1 1 0 1-2 1 3 1 6 1 5 1 4 1-6 1-11 1-7 1 5 1 2 1 7 1 1 1 1 1-1 1-1 1-6 1-3 1 3 1-1 1-1 1-5 1 2 1 2 1-5 1-8 1 4 1 5 1 3 1-3 1-2 1 3 1-2 1-1 1-7 1 2 1 10 1 3 1-3 1-5 1-5 1 2 1 5 1-2 1-4 1 1 1 3 1 2 1 3 1 3 1 4 1-1 1-3 1-3 1-1 1 5 1-4 1-6 1 2 1 5 1 0 1-6 1-6 1 2 1 4 1 5 1 4 1 0 1-2 1-2 1 0 1-6 1-3 1 2 1 7 1 3 1 2 1-5 1-3 1 1 1-1 1 2 1 6 1 3 1-5 1 2 1 4 1 1 1-4 1-10 1-4 1 7 1 7 1-1 1-7 1-5 1-1 1 2 1 2 1-1 1 1 1-4 1 0 1 8 1 8 1 3 1-4 1-10 1-3 1 5 1-2 1-2 1-1 1 6 1 0 1-6 1-2 1 2 1 9 1 7 1 0 1-4 1-7 1-1 1-4 1-1 1-3 1 1 1 6 1 3 1 6 1-5 1-3 1-10 1-4 1-2 1 7 1 6 1 5 1 5 1 3 1 5 1-5 1-9 1-5 1 4 1-2 1-5 1-5 1 6 1 5 1 1 1-8 1 4 1 8 1 2 1-3 1-5 1 1 1 9 1 3 1-8 1-3 1-4 1 3 1 0 1 4 1 9 1 5 1-2 1 0 1 2 1-1 1-1 1-4 1-5 1-4 1-9 1 4 1 6 1 8 1 10 1-4 1-6 1-9 1 0 1 2 1 6 1 1 1-1 1-9 1 0 1-4 1-1 1-1 1-4 1 3 1 3 1 9 1 2 1-1 1 0 1-3 1-3 1-3 1-4 1-2 1 3 1 6 1 8 1 1 1-8 1-8 1-3 1 0 1-3 1 1 1 0 1 3 1 6 1 0 1 8 1 0 1 1 1-5 1-9 1 1 1-1 1 1 1-3 1 0 1 3 1 6 1 2 1-2 1-4 1 0 1 2 1 3 1 3 1-2 1 0 1 0 1-4 1-3 1-1 1 7 1 5 1-1 1 2 1 7 1-1 1-7 1-5 1-2 1 1 1-6 1-2 1 3 1 5 1-1 1-5 1-2 1 5 1 8 1 7 1 5 1-3 1-7 1-6 1-4 1 3 1 6 1-2 1-4 1 6 1-1 1-1 1-5 1 6 1 3 1-1 1 1 1-5 1 3 1 1 1-6 1 1 1 1 1 1 1-3 1 1 1 6 1 2 1-5 1-5 1 1 1 4 1-1 1-5 1 5 1 7 1 7 1-4 1-2 1-8 1-4 1 2 1 8 1 5 1 0 1-6 1-4 1-4 1-3 1-4 1-1 1 3 1 0 1 0 1 3 1 1 1-1 1-4 1-3 1 4 1 3 1-1 1 3 1-3 1 0 1-2 1-3 1 10 1-2 1 2 1-8 1-4 1 7 1 7 1 0 1-3 1-4 1 2 1 6 1 4 1-5 1-6 1-4 1 0 1 1 1-5 1 2 1 5 1 3 1-1"/>
<path vector-effect="non-scaling-stroke" d="M0 1428l1-2 1-4 1-3 1 1 1-1 1-3 1 4 1 5 1 3 1-2 1-4 1-4 1 5 1 6 1-2 1 5 1 4 1-1 1-4 1-5 1-2 1 2 1-6 1 5 1 7 1 3 1 1 1-4 1-1 1 0 1 1 1-4 1 0 1 4 1 3 1-4 1-1 1-3 1-5 1 1 1 1 1-2 1-5 1-5 1 3 1 5 1 7 1 6 1-4 1-6 1-4 1 0 1-3 1-2 1 0 1 0 1 3 1 6 1 4 1-5 1 0 1 5 1-4 1-1 1 0 1 0 1 3 1-2 1 2 1 2 1 3 1 3 1-2 1-10 1-3 1 5 1 4 1-3 1-5 1-1 1 4 1 2 1-7 1-4 1 1 1 1 1 1 1-1 1 2 1 4 1 2 1-4 1-1 1 5 1 2 1 1 1-3 1 4 1-6 1-5 1-5 1-6 1 5 1 4 1 5 1 4 1 1 1-1 1 0 1-3 1 1 1-1 1 4 1 3 1-4 1-1 1-2 1 2 1-4 1 0 1 5 1 5 1 2 1-2 1-7 1 4 1 1 1-8 1-7 1 1 1 7 1 4 1-9 1-8 1 0 1 9 1 10 1 0 1 0 1-5 1 1 1-3 1 2 1 1 1 4 1 1 1-3 1-5 1 1 1 3 1 1 1-2 1-9 1-3 1 8 1 10 1 3 1 0 1-10 1-1 1 3 1-3 1 0 1 2 1 0 1-2 1-1 1 1 1 1 1 3 1 1 1-5 1 0 1 0 1 4 1 6 1 10 1-4 1-7 1-6 1-5 1 7 1 6 1 1 1-9 1-7 1 4 1 12 1 4 1-8 1-12 1 4 1 9 1 6 1-1 1 0 1-2 1-6 1-4 1-2 1 0 1-1 1-4 1 0 1 9 1 4 1 0 1-1 1 5 1 4 1-6 1-9 1 1 1 8 1 4 1-4 1-7 1 0 1 3 1 4 1 2 1-3 1-6 1-2 1-2 1 6 1 6 1 1 1-6 1-1 1-5 1-8 1-3 1 2 1 16 1 8 1-4 1-1 1 3 1 2 1-2 1-8 1-5 1-3 1-1 1 4 1 1 1 5 1 3 1-3 1-2 1-4 1 1 1 2 1-3 1-8 1 1 1 3 1 7 1 6 1-4 1-1 1 0 1-2 1-2 1-5 1 0 1-2 1 5 1 1 1 4 1 3 1-4 1-2 1 1 1-1 1-3 1-2 1 3 1 11 1 4 1-3 1-9 1-3 1 4 1 5 1-2 1 0 1 0 1 2 1-2 1 4 1 0 1-5 1-3 1 3 1 2 1 1 1-3 1 0 1-4 1-2 1-1 1-1 1-1 1-1 1-3 1-1 1 1 1 6 1 2 1-4 1-1 1 4 1 5 1 2 1-6 1-10 1 5 1 4 1 8 1-4 1-6 1-8 1 1 1 4 1 2 1 9 1 7 1 1 1-3 1 0 1 1 1-3 1-5 1 1 1 3 1 2 1-4 1-4 1 3 1-3 1 1 1-1 1 1 1 6 1 0 1-3 1-1 1 2 1 1 1-1 1-2 1 3 1 4 1 0 1-3 1 2 1 3 1 3 1-6 1-6 1 0 1 4 1 4 1-2 1 1 1 4 1-1 1-3 1 0 1 3 1 3 1-4 1-6 1-3 1-2 1 2 1 2 1 2 1 0 1-1 1-1 1 2 1 4 1 3 1 0 1-3 1 0 1 8 1 2 1-1 1-6 1-13 1-1 1 2 1 1 1-5 1-6 1-1 1 8 1 8 1-2 1-3 1 0 1 6 1-6 1-5 1-3 1 1 1 0 1 3 1 0 1-2 1 4 1 2 1 1 1-7 1-3 1 1 1 3 1 2 1-2 1-5 1-4 1 1 1 1 1 2 1 6 1 7 1 2 1-4 1-4 1 1M435 1422l1-4 1 1 1-1 1 3 1-4 1 2 1 6 1 2 1-2 1-7 1-3 1 6 1 4 1 3 1-1 1 6 1 6 1 0 1-7 1-11 1-2 1 5 1 1 1-1 1 1 1 2 1 1 1 2 1-5 1-2 1 2 1-1 1-2 1-1 1 6 1 1 1 0 1-3 1-5 1 1 1 7 1 4 1 0 1 0 1-1 1-8 1-4 1-3 1 11 1 10 1 8 1-3 1-12 1-4 1 7 1 0 1-9 1-11 1-2 1 13 1 3 1-4 1-3 1-1 1 4 1 2 1-2 1 2 1 3 1 0 1-7 1-2 1-1 1-2 1 3 1 2 1-2 1-1 1 1 1 5 1 4 1 3 1 2 1-4 1-8 1-9 1 1 1 8 1 6 1-4 1-4 1-3 1-1 1-2 1-7 1 3 1 10 1 3 1-5 1-6 1 2 1-4 1-7 1-1 1 15 1 15 1-7 1-10 1-11 1 0 1 6 1 8 1 3 1 1 1 0 1 0 1-3 1-1 1-6 1 0 1 9 1 11 1 0 1-9 1-5 1-1 1 5 1-2 1 1 1 0 1 7 1 2 1-4 1-6 1 2 1 7 1 1 1-3 1-5 1-4 1-2 1-1 1 4 1 1 1 0 1-1 1 1 1 4 1 1 1 3 1-2 1 0 1 2 1-1 1-7 1-1 1-3 1 6 1 3 1 1 1-2 1 2 1 2 1-1 1-7 1-7 1 7 1 1 1 1 1-5 1 6 1 4 1-3 1-4 1 5 1 0 1 2 1-2 1-7 1-2 1 0 1-1 1 6 1 6 1 5 1 2 1 0 1-2 1-4 1 2 1-4 1-4 1-5 1 2 1 9 1 9 1-2 1-8 1-6 1 4 1 11 1 4 1-5 1 1 1-2 1-4 1-5 1-6 1 0 1 3 1-8 1-3 1 5 1 6 1 5 1-1 1-7 1 2 1 2 1 0 1-4 1-6 1 0 1 5 1 8 1 7 1 1 1-13 1-13 1-1 1 8 1 11 1 3 1 0 1 0 1-3 1-3 1-7 1 4 1 6 1 3 1-5 1-1 1 6 1 4 1-4 1-10 1-1 1 4 1 3 1-2 1-2 1 2 1-2 1-5 1-5 1 3 1 8 1 4 1-4 1-1 1 2 1-1 1-7 1-4 1 1 1 7 1 4 1-1 1-5 1-1 1 2 1 1 1-1 1-3 1-2 1 2 1 4 1 4 1-1 1 2 1 5 1 2 1-3 1-12 1 0 1 1 1 5 1 4 1 1 1-4 1-5 1-2 1-3 1 8 1 11 1 6 1 1 1-4 1-2 1-3 1 1 1-4 1-3 1 3 1 2 1 1 1-2 1 0 1 5 1 1 1 0 1 2 1-3 1-3 1-4 1-3 1 10 1 6 1 5 1-4 1-7 1-1 1-3 1-5 1-4 1 0 1 6 1 5 1-4 1 1 1 2 1 9 1-1 1-5 1-1 1-2 1-3 1-4 1-5 1 5 1 1 1-5 1-4 1 2 1 7 1 3 1-7 1-10 1-1 1 4 1 3 1 2 1 6 1 5 1-5 1-7 1-6 1 0 1 8 1 3 1 1 1-1 1 0 1-6 1-5 1 1 1 1 1-4 1-3 1 4 1 5 1 1 1-2 1 1 1 4 1 3 1-2 1-6 1-2 1-1 1 1 1 1 1 2 1 7 1 3 1-3 1-4 1-5 1 6 1 9 1 1 1-3 1-9 1-7 1 10 1 9 1-3 1-6 1-8 1 6 1 11 1 11 1-2 1-16 1-10 1-2 1 8 1 5 1-3 1-2 1 2 1 4 1 2 1-10 1-4 1 4 1 8 1 6 1 2 1 0 1-3 1-6 1-3 1-2 1 5 1 3 1-5 1-5 1 2 1 13 1 9 1-5 1-9 1 1 1 0 1 1 1-5 1 0 1 2 1 3 1-1 1-2 1 5 1 4 1 7 1 2 1-4 1-7 1-3 1 1 1 4 1 5 1-5 1-6 1-3 1 4 1 4 1-4 1-10 1 1 1 7 1 2 1-4 1-3 1 7 1 3 1 3 1-4 1-7 1-8 1 1 1 2 1 11 1 5 1 0 1-3 1-4 1 1 1-3 1-6 1-7 1 3 1 7 1 8 1-4 1-2 1-2 1-1 1 4 1-1 1-1 1 0 1-1 1-4 1 5 1 2 1-4 1-5 1-1 1 5 1 3 1-2 1-7 1-3 1-5 1 3 1 6 1 10 1 2 1 1 1-4 1-3 1-2 1 0 1 3 1-8 1 1 1 0 1 6 1 3 1-4 1-6 1-3 1-1 1 0 1 4 1 1 1 4 1 0 1 0 1 3 1-3 1-3 1-4 1 5 1 7 1-1 1-5 1-4 1-3 1 2 1 1 1 3 1 9 1 9 1 3 1-12 1-7 1 5 1 1 1-7 1-10 1-2 1 14 1 8 1 0 1-3 1 0 1-1 1-1 1-10 1-5 1 4 1 4 1 9 1 4 1-2 1-8 1-4 1 5 1 5 1-4 1-2 1-2 1 7 1 4 1-1 1-4 1-1 1 4 1 3 1-1 1-9 1-5 1 0 1 3 1 4 1 6 1 5 1 0 1 0 1-2 1-6 1 2 1 2 1-1 1-2 1-4 1 1 1 1 1 3 1 4 1 3 1-5 1-2 1 4 1 3 1 1 1-2 1 1 1-3 1-7 1-7 1-1 1 8 1 9 1 7 1-8 1-2 1 2 1-1 1-5 1-2 1 1 1 2 1-7 1-3 1 1 1 5 1 1 1-7 1-2 1-1 1 8 1 6 1-2 1-7 1 2 1 3 1 1 1-1 1-1 1 5 1 6 1-5 1-9 1-8 1 1 1 2 1 0 1 2 1 8 1 2 1-1 1-1 1 0 1 1 1-11 1-2 1 3 1 7 1 0 1-6 1-1 1 3 1 2 1 2 1 2 1 4 1 0 1-7 1-7 1 5 1 5 1 2 1-2 1-1 1-1 1-8 1-5 1-1 1 6 1 11 1 2 1-1 1 5 1 1 1-1 1-6 1-9 1-3 1 0 1 0 1 8 1-4 1-4 1-3 1 3 1 15 1 3 1-2 1-2 1 3 1-2 1-6 1 1 1 2 1 0 1-2 1-3 1 3 1 4 1-1 1-4 1-3 1 5 1 13 1-4 1-9 1-10 1-6 1 6 1 8 1 0 1-2 1 3 1 0 1 4 1-5 1-3 1 3 1 2 1 1 1-5 1-5 1 3 1 12 1 5 1-4 1-9 1-5 1 4 1 12 1 2 1-6 1-2 1 3 1 0 1-5 1-5 1-1 1-2 1-2 1-2 1 1 1 8 1-2 1 1 1 0 1 0 1-8 1-3 1-6 1 7 1 11 1 0 1-4 1 2 1 3 1-1 1-2 1-7 1-1 1 4 1 5 1 3 1-6 1-5 1 0 1 9 1 10 1-3 1-11 1-7 1 1 1 10 1 5 1-1"/>
<path vector-effect="non-scaling-stroke" d="M0 1496l1-2 1-4 1-2 1 5 1 3 1-5 1 4 1 1 1 1 1 2 1 0 1 0 1-2 1-5 1-1 1 8 1 3 1 0 1-3 1-3 1-2 1 4 1-3 1 2 1 7 1 2 1 1 1-1 1 0 1 5 1 3 1 0 1-5 1-2 1-3 1 4 1-5 1-4 1 2 1 4 1 2 1 3 1-1 1-7 1-4 1 0 1 0 1 2 1-1 1-4 1 0 1-3 1-1 1-3 1-1 1 6 1 5 1 6 1-4 1-6 1-3 1 3 1-1 1 1 1 7 1 3 1 1 1 0 1 1 1 0 1 4 1-3 1 3 1 3 1 5 1-4 1-11 1-6 1 1 1 3 1 8 1 3 1-2 1-8 1-5 1-1 1 3 1-2 1-1 1-1 1 5 1 1 1-1 1 5 1 4 1-3 1-6 1-7 1 1 1 5 1-4 1-4 1 6 1 6 1-1 1-10 1-8 1 4 1 4 1-2 1-4 1 9 1 7 1 4 1-9 1-5 1 3 1 6 1-2 1-2 1 1 1 3 1 0 1-6 1 2 1 4 1 1 1-4 1-11 1-6 1 2 1 1 1 1 1-5 1 0 1 7 1 7 1-2 1-2 1-4 1 1 1 9 1 0 1 4 1 3 1 9 1 6 1-4 1-4 1 1 1 6 1 1 1-5 1-6 1 6 1 7 1 2 1-1 1-2 1-1 1-3 1-3 1-5 1-2 1 7 1 4 1 0 1-5 1-2 1-5 1-7 1-6 1-5 1-2 1 9 1 7 1 7 1 0 1 1 1-11 1-5 1 5 1 4 1 4 1-4 1-4 1 2 1 1 1 0 1-3 1-10 1 7 1 5 1-2 1-3 1 6 1 4 1 1 1-7 1-5 1-4 1 0 1 3 1-2 1 7 1 6 1 6 1 2 1-3 1-4 1 1 1-4 1-4 1-2 1 1 1 4 1 4 1-1 1-6 1 4 1 3 1-1 1-3 1 2 1 3 1 3 1-4 1-5 1 4 1 4 1-12 1-10 1-2 1 12 1 12 1 2 1-1 1 1 1 4 1 1 1-8 1-7 1-1 1-1 1 3 1 3 1-1 1-1 1-3 1 2 1 2 1-6 1-4 1 1 1 5 1-1 1-3 1 2 1 5 1 2 1 2 1 0 1-1 1-5 1-3 1 3 1 4 1 0 1-10 1-4 1 7 1 4 1 1 1-7 1-1 1 2 1 4 1-5 1 5 1 8 1 5 1-4 1-6 1-1 1-1 1-6 1-4 1 5 1 4 1 4 1 3 1 2 1-3 1 0 1 0 1-1 1 2 1-2 1-1 1 1 1-4 1-2 1-10 1-6 1 3 1 4 1 0 1 6 1 3 1 5 1 0 1-8 1-5 1 3 1 1 1-2 1-4 1-1 1 3 1 9 1 6 1-3 1-4 1 0 1-2 1-3 1-1 1 7 1 7 1 0 1-1 1-4 1-3 1-3 1 2 1 3 1 3 1 0 1-5 1-6 1-1 1 4 1 1 1 1 1 6 1 2 1-3 1-9 1-2 1-1 1 1 1-4 1 0 1 4 1 7 1-1 1-3 1 4 1 6 1 4 1-2 1-7 1-2 1-2 1-3 1 4 1 3 1 4 1 3 1 0 1-2 1-1 1-4 1 1 1 1 1 3 1 3 1-3 1-3 1-3 1 2 1-5 1 0 1 9 1 6 1 1 1-5 1-7 1 4 1 9 1 5 1-3 1-8 1-9 1-8 1-2 1-1 1 0 1 2 1 9 1 9 1 7 1-6 1-5 1-1 1 2 1 1 1-6 1-4 1 3 1 3 1 1 1-3 1 3 1 1 1-1 1-3 1-5 1 1 1 1 1 8 1 4 1-5 1-5 1-9 1-3 1 3 1-1 1-1 1 3 1 4 1 5 1 5 1 6M435 1493l1 12 1 3 1-4 1-10 1-2 1 2 1 0 1 8 1 3 1 4 1-1 1-4 1-13 1-5 1 8 1 7 1 0 1-4 1 2 1 4 1 4 1-3 1-12 1-3 1 6 1 9 1 1 1-3 1-2 1-3 1-3 1 3 1 4 1-7 1-4 1 7 1 5 1 0 1-3 1-4 1 1 1-3 1 0 1-1 1 4 1 4 1-7 1-7 1 3 1 1 1 1 1 4 1 6 1 6 1 1 1-5 1 1 1 2 1 0 1-9 1-3 1 4 1 4 1 0 1-4 1 4 1 3 1 2 1-4 1-5 1-3 1 6 1 1 1 0 1-1 1 3 1-2 1-2 1 0 1 2 1 3 1 3 1-2 1-3 1 6 1 4 1-7 1-10 1-3 1 3 1 7 1 0 1-6 1 1 1 3 1 3 1-4 1 1 1 7 1 4 1-3 1-8 1-4 1 3 1 4 1-4 1-3 1 4 1 3 1-3 1-6 1-4 1 0 1 2 1 7 1 2 1 6 1-4 1-7 1-5 1-3 1 3 1-1 1 3 1 4 1 0 1-1 1 2 1-1 1 2 1 2 1-3 1-5 1 3 1 0 1 2 1-9 1-3 1 4 1 10 1 5 1-4 1-4 1-6 1 6 1 5 1-3 1-10 1-8 1-1 1 8 1 6 1 0 1-4 1-1 1 5 1 5 1 8 1-4 1 0 1 0 1 2 1-2 1 0 1 0 1-2 1-5 1 1 1 1 1 0 1-4 1-3 1 5 1 8 1-1 1-4 1 2 1 3 1 3 1-4 1 0 1 2 1-2 1-5 1-5 1 3 1 10 1 5 1-2 1-5 1-9 1-6 1 4 1 7 1 2 1-3 1-4 1 3 1 4 1 1 1-3 1-6 1 1 1 0 1 1 1 4 1 8 1 0 1-11 1-9 1-3 1 4 1 4 1-6 1 4 1 7 1 5 1-2 1-4 1-3 1 0 1 1 1-2 1-1 1-7 1 1 1 5 1 12 1 5 1-5 1-10 1 0 1 1 1 6 1 6 1 1 1 0 1-7 1-5 1 4 1 3 1 1 1-8 1 4 1 5 1 1 1-3 1-9 1-4 1-4 1 6 1 4 1 4 1-2 1-7 1-5 1 6 1 3 1 3 1-6 1-3 1-4 1 1 1 6 1 5 1-2 1-7 1-4 1 0 1 11 1 3 1 0 1-1 1 2 1-2 1-3 1-3 1-5 1 4 1 6 1 8 1-2 1-5 1-2 1 3 1 6 1 0 1-5 1-5 1 6 1 5 1 6 1-3 1-6 1-4 1-3 1 0 1 5 1 7 1 11 1-6 1-3 1-3 1 0 1 2 1 0 1-3 1-1 1 4 1 0 1 2 1 0 1-4 1 0 1 4 1 0 1 0 1-4 1-5 1-2 1 8 1 4 1-2 1-1 1 2 1-1 1-2 1-8 1-1 1 1 1 3 1-2 1 0 1 3 1 4 1 4 1-5 1-4 1 0 1 0 1 4 1-2 1 1 1-1 1-4 1-3 1-3 1 5 1-1 1-3 1-6 1-2 1 1 1 2 1 0 1 4 1 5 1-5 1-4 1-5 1 8 1 12 1 6 1 1 1-4 1-4 1-3 1-7 1-3 1-3 1-4 1-4 1-1 1 15 1 7 1-1 1-7 1-4 1 0 1-1 1 4 1 1 1-1 1-7 1 0 1 7 1 3 1 3 1-4 1 0 1 2 1 2 1-3 1 4 1 2 1-3 1-7 1-5 1 7 1 10 1-1 1-8 1-8 1 7 1 12 1 7 1 1 1-9 1-8 1-6 1 1 1 4 1 1 1 2 1 3 1 3 1 2 1-7 1-2 1-4 1 7 1 0 1-1 1 4 1 0 1-7 1-7 1 0 1 9 1 3 1-4 1-9 1 0 1 4 1 3 1 3 1-4 1 1 1 1 1-3 1 0 1 1 1 2 1 3 1 6 1 4 1 2 1-1 1 3 1 4 1-1 1-3 1-5 1 0 1 1 1 5 1-8 1-4 1-1 1 4 1 0 1 1 1-5 1-1 1 3 1 0 1 2 1 2 1-6 1-1 1 2 1-2 1 3 1 1 1 3 1 2 1-2 1-3 1 0 1 0 1-2 1-1 1-5 1-5 1 1 1 6 1 9 1 7 1 1 1-12 1-10 1-2 1 4 1 7 1 3 1-5 1-3 1 3 1 0 1-2 1-4 1-1 1 1 1 9 1 4 1-5 1-7 1-1 1-5 1 2 1 6 1 4 1 3 1-3 1 0 1 1 1-2 1-9 1-10 1 6 1 11 1 5 1 0 1 0 1 3 1-2 1-1 1-7 1-2 1-1 1 0 1 1 1 3 1 0 1-1 1-4 1-3 1 3 1 4 1 6 1 5 1-5 1-7 1-5 1-4 1 3 1 4 1 2 1 3 1 1 1-3 1 0 1 0 1 0 1-7 1 2 1-1 1 1 1 7 1 0 1 7 1-4 1-3 1-3 1 0 1 3 1-3 1 1 1 8 1 3 1 1 1-10 1-8 1 2 1 7 1 3 1-7 1 0 1 3 1 2 1-4 1-4 1 5 1 3 1-2 1-6 1-3 1 8 1-2 1-4 1-5 1 6 1 4 1 5 1-2 1 4 1 4 1-1 1-5 1-2 1 0 1-1 1-2 1-3 1 12 1 8 1 2 1-5 1-6 1 2 1 2 1-1 1 0 1 2 1 2 1-9 1-6 1 4 1 13 1 7 1-4 1-7 1-5 1 3 1 1 1-5 1-3 1 4 1 3 1 1 1-2 1-4 1-6 1-5 1-4 1 8 1 9 1 3 1-2 1-5 1-1 1 1 1 5 1-6 1 0 1 1 1-3 1 5 1-4 1-3 1-6 1-5 1 6 1 5 1 5 1-2 1 0 1 0 1 5 1 4 1-6 1-11 1-3 1 5 1 5 1 0 1-8 1 4 1 5 1 5 1 0 1-3 1-4 1 0 1-6 1-8 1 1 1 6 1 6 1-1 1-1 1 1 1-1 1-7 1-1 1 11 1 11 1 0 1-6 1 3 1 6 1 0 1-9 1-8 1 1 1 5 1 2 1-1 1-2 1 5 1-1 1-1 1 0 1 3 1 4 1-2 1-3 1-1 1-1 1-6 1-4 1 3 1 1 1 2 1 4 1 4 1-1 1-8 1-2 1-1 1 12 1 3 1-1 1-9 1-8 1-3 1 4 1 7 1 4 1 2 1-1 1 4 1-2 1-8 1-4 1 2 1 6 1 4 1-3 1-1 1 1 1 0 1 1 1-3 1 5 1 4 1-1 1-7 1-4 1 6 1 1 1-3 1-4 1-2 1 1 1 2 1 0 1-4 1 0 1 8 1-1 1-3 1-8 1 1 1 5 1-2 1-7 1 1 1 3 1 3 1 3 1 1 1 8 1 2 1-4 1-5 1-2 1 5 1-1 1-5 1-3 1 1 1 2 1 5 1 12 1 4 1-13 1-11 1-6"/>
<path vector-effect="non-scaling-stroke" d="M0 1567l1-3 1 1 1 2 1 9 1 0 1 2 1-1 1-3 1-2 1 0 1-1 1-3 1-1 1 4 1 10 1 4 1 4 1-4 1-1 1-5 1-7 1-7 1 0 1 5 1 8 1 3 1 0 1 2 1 4 1 0 1-7 1-5 1 0 1 3 1-1 1-1 1-4 1 1 1 3 1 0 1-5 1-2 1 5 1-1 1-4 1 4 1 6 1 2 1-2 1-4 1-4 1-1 1 2 1 2 1 3 1 3 1-3 1-3 1 1 1 7 1 3 1-6 1-4 1-1 1 3 1 2 1 0 1 1 1 2 1 2 1 3 1-1 1-4 1-10 1-1 1-1 1 7 1 3 1 3 1 3 1 1 1 1 1-4 1-7 1-10 1 3 1 4 1 5 1 0 1 1 1-7 1-2 1 3 1 2 1 1 1-3 1-3 1-4 1 1 1-1 1 2 1-3 1-1 1 0 1 4 1 6 1-1 1-1 1-5 1-2 1 2 1 4 1 7 1-1 1-1 1 1 1 0 1 7 1 0 1-3 1-4 1 2 1 3 1 1 1 1 1 0 1 1 1-3 1-3 1-13 1-5 1 4 1 1 1 2 1-1 1 3 1 3 1 5 1 1 1-2 1-1 1-4 1-1 1 1 1 0 1 0 1 3 1 0 1-2 1-1 1 2 1-5 1 0 1 1 1 4 1 9 1 4 1-1 1-10 1-6 1-5 1-1 1 1 1-3 1 6 1 6 1 4 1 1 1-3 1-8 1-4 1 4 1 3 1-2 1 2 1 4 1 6 1 3 1-2 1-6 1-5 1 0 1 2 1 2 1-6 1-1 1 1 1-2 1-3 1 5 1 9 1 2 1 2 1-2 1 0 1 0 1-1 1-3 1-4 1-4 1 2 1 1 1-2 1 2 1 2 1 3 1 3 1 3 1 3 1-1 1-3 1-3 1-4 1-2 1 0 1 4 1-1 1 2 1 2 1 2 1 6 1 1 1-10 1-9 1 6 1 11 1 3 1-9 1-6 1-5 1 9 1 1 1-5 1-6 1 7 1 11 1 1 1-5 1-5 1-1 1 4 1 1 1 2 1 1 1-1 1-6 1-6 1 1 1 5 1 2 1-6 1 0 1-2 1 3 1-2 1 1 1-1 1 8 1 8 1-3 1-8 1-5 1 1 1-3 1 0 1 3 1 2 1 2 1-1 1-7 1 0 1 5 1 0 1-1 1-1 1-2 1 3 1 1 1 4 1 3 1-7 1-7 1-1 1 3 1 5 1 1 1 0 1 3 1 1 1 1 1 2 1 0 1-5 1-3 1-1 1 1 1 4 1-2 1-4 1-2 1 5 1 2 1-1 1-4 1-9 1 2 1 3 1 0 1 0 1-6 1 1 1 6 1-4 1-1 1 3 1 8 1 9 1-2 1 0 1 2 1 3 1-1 1-9 1-5 1 0 1 4 1 1 1 3 1 2 1 1 1-6 1-8 1 1 1 3 1 1 1-2 1 2 1 3 1-4 1-8 1-7 1 3 1 3 1 2 1-1 1-5 1 7 1 3 1 0 1 0 1 0 1-3 1-2 1 6 1 7 1 8 1-3 1-7 1-2 1 2 1 3 1-4 1-8 1-4 1 2 1 7 1 6 1 1 1 3 1 0 1-6 1-3 1-2 1 2 1 1 1 2 1 1 1-2 1-3 1 0 1 2 1-2 1 4 1-2 1 5 1 2 1-1 1-1 1-3 1-2 1 2 1 3 1-5 1-5 1-3 1 4 1 7 1 3 1-5 1-3 1 2 1 9 1 2 1-5 1 1 1-1 1-2 1-3 1-1 1 4 1 5 1 1 1-3 1 0 1-1 1-4 1-6 1 4 1 4 1-3 1-3 1 1 1 9 1 4 1-11 1-14 1-2 1 7 1 3 1 3 1 4 1 2 1-1 1-5M435 1574l1-1 1 4 1 3 1 3 1 2 1 2 1-5 1-1 1-1 1-4 1 3 1 0 1-2 1-1 1-7 1-5 1 2 1 3 1 8 1 1 1-3 1-1 1 0 1 5 1 2 1-5 1-4 1 4 1 0 1 4 1-3 1-7 1-3 1 2 1 10 1 1 1 0 1-3 1-4 1 0 1 4 1 4 1 1 1-5 1-4 1-2 1 3 1-5 1-9 1-8 1-1 1 3 1 7 1 6 1 7 1 5 1-5 1-4 1-5 1 1 1 3 1 4 1-5 1-3 1-4 1 2 1 4 1 2 1 4 1-4 1 1 1-2 1-3 1 2 1 1 1 5 1 5 1 1 1-6 1-3 1-3 1-2 1 6 1 5 1 4 1 5 1 5 1-2 1 5 1-4 1-5 1-7 1 4 1 5 1-2 1 0 1-1 1 3 1 1 1 0 1 1 1 0 1 2 1 7 1-4 1-2 1-12 1 0 1-4 1 2 1-5 1 2 1-2 1 3 1-2 1 4 1 10 1 1 1-6 1-5 1 1 1-6 1 1 1-5 1 5 1 0 1-1 1-8 1 3 1 1 1 3 1-2 1 4 1 7 1 3 1 1 1 0 1-1 1-2 1-3 1-6 1-1 1 5 1 4 1 2 1-5 1-6 1 2 1 1 1 2 1-4 1-2 1-5 1 3 1 9 1 2 1-1 1-2 1-3 1 0 1-1 1-1 1 3 1 1 1 2 1 3 1 2 1-1 1 0 1-5 1-7 1-5 1-2 1-2 1 3 1 0 1-3 1 0 1-3 1 9 1 8 1 2 1-2 1-6 1 2 1 5 1-4 1-12 1 0 1 11 1 8 1 0 1-7 1-3 1 2 1 5 1-5 1-2 1 4 1 8 1 3 1-2 1 0 1-2 1-1 1 2 1-2 1 1 1 3 1 3 1-2 1-5 1-3 1 1 1 3 1 2 1 1 1 1 1 0 1 5 1 2 1-3 1-4 1-6 1 1 1 4 1 1 1 1 1-4 1-2 1 5 1 2 1-2 1-7 1-5 1 1 1 8 1 9 1 1 1-3 1 1 1-3 1-4 1-7 1-1 1 4 1 3 1-3 1-8 1 2 1-1 1 1 1 2 1 1 1 1 1 0 1-4 1-3 1-1 1 1 1-4 1-1 1 0 1 3 1 5 1 4 1 5 1 4 1 0 1-7 1-5 1 1 1 2 1-3 1-2 1-5 1 6 1-2 1 8 1 2 1-5 1-1 1 1 1 4 1 1 1-1 1-5 1 1 1 0 1 6 1 0 1 1 1-1 1 4 1 3 1-4 1-4 1-5 1 6 1 10 1 5 1-3 1-4 1 1 1 1 1-4 1-4 1 0 1 5 1-4 1 0 1 6 1 2 1-1 1-8 1-4 1 2 1 7 1 3 1-2 1-3 1-3 1 6 1 5 1-3 1-1 1-6 1 1 1 1 1-5 1-7 1-2 1 6 1 0 1 3 1 0 1-1 1 5 1-4 1-4 1 0 1 1 1-1 1-9 1 1 1 4 1 6 1-4 1-5 1 2 1 0 1 4 1-3 1-2 1 1 1-5 1-2 1 1 1 10 1-2 1-3 1-4 1 1 1 1 1-2 1 3 1 5 1 8 1 1 1-5 1-10 1-3 1 6 1-5 1-3 1-4 1-3 1 4 1 1 1 5 1 3 1 4 1 2 1 4 1-5 1-2 1 1 1 2 1 7 1-2 1-3 1-2 1-5 1 1 1-2 1 4 1 6 1 3 1-2 1-4 1 1 1 6 1 2 1 0 1-2 1-3 1-3 1 2 1 2 1 1 1-3 1-7 1 0 1 10 1 10 1-7 1-8 1-4 1 4 1 7 1 1 1-4 1-7 1-5 1 0 1 2 1 11 1 7 1-4 1-10 1-4 1-2 1 0 1-1 1 2 1 3 1 7 1 1 1 0 1 0 1-1 1 2 1-6 1-6 1-5 1 10 1 13 1 0 1-6 1-3 1 3 1 4 1 0 1 0 1 1 1 1 1-4 1-7 1 1 1 2 1-4 1-6 1 2 1 7 1-2 1-8 1-7 1 4 1 10 1-2 1-1 1-3 1 2 1 2 1-6 1-1 1 2 1 5 1-2 1 3 1 3 1 6 1 1 1-7 1-6 1-5 1-6 1 1 1 3 1 4 1 4 1 6 1-1 1-2 1-7 1-3 1 2 1 1 1 0 1-2 1-1 1 6 1 4 1-5 1 0 1 4 1 5 1-4 1-2 1-3 1 1 1-1 1-1 1-1 1 0 1 1 1 5 1 2 1 2 1-1 1-2 1 0 1-3 1 5 1 2 1-1 1-3 1-2 1 6 1 2 1-6 1-8 1 4 1 4 1-3 1-2 1-1 1 8 1 0 1-3 1-5 1 1 1 3 1-5 1-2 1 0 1 9 1 2 1-6 1-6 1-3 1 9 1 3 1 2 1 1 1 3 1-2 1-6 1 4 1 9 1 9 1 2 1-3 1-3 1 1 1-5 1 0 1-3 1 1 1 3 1-1 1 2 1-3 1-1 1-6 1-1 1 1 1 0 1 4 1-1 1-1 1-1 1 3 1 1 1-4 1-3 1 1 1-1 1-3 1-6 1 3 1 1 1 1 1 1 1-6 1-3 1-1 1 8 1 4 1 1 1 0 1-1 1 1 1-5 1 0 1 3 1 3 1 6 1 3 1 1 1 1 1 0 1-3 1-4 1 0 1 3 1 1 1-5 1-6 1-5 1 1 1 2 1 9 1 3 1 1 1-3 1-6 1-2 1-4 1-1 1 2 1 4 1-2 1-8 1 0 1 6 1 8 1-2 1-9 1 1 1 8 1 7 1-4 1-8 1-3 1 6 1-2 1-6 1-8 1-2 1 7 1 3 1 1 1-4 1 3 1 0 1 0 1 6 1 0 1-3 1-2 1 2 1-2 1 2 1-6 1 0 1 3 1-1 1-4 1 1 1 6 1 1 1 1 1-1 1 3 1 3 1-5 1-9 1-5 1-1 1 4 1 2 1 6 1-3 1 0 1-5 1 1 1 1 1 11 1 11 1 8 1 0 1-5 1-4 1-4 1-2 1-11 1-5 1-1 1 8 1 5 1 1 1 0 1 4 1 1 1 1 1 1 1 2 1 5 1 7 1-7 1-2 1-5 1-3 1 1 1 4 1 6 1-2 1-4 1-5 1 1 1 0 1 6 1 5 1-5 1-8 1-8 1-3 1 4 1 4 1-1 1-2 1 3 1 5 1 4 1-2 1-5 1-2 1 3 1-2 1-2 1-4 1 6 1 6 1 5 1 2 1 0 1-4 1-1 1-1 1 4 1 5 1-5 1-2 1-8 1-2 1 1 1 3 1-4 1-6 1 0 1 4 1 11 1 2 1-5 1-8 1-6 1 2 1-2 1 0 1-6 1 7 1 10 1 5 1-4 1-9 1 5 1-1 1-4 1-7 1 5 1 12 1 2 1-4 1-2 1 7 1 7 1-4 1-9"/>
<path vector-effect="non-scaling-stroke" d="M0 1650l1-3 1 1 1 3 1-2 1 3 1 9 1 8 1-5 1-10 1-9 1-4 1 2 1 2 1 1 1 7 1 1 1 2 1 2 1 0 1 0 1-4 1 1 1-2 1-1 1 4 1-3 1 1 1 2 1-1 1 0 1-3 1-5 1 2 1 6 1-3 1-1 1-4 1 2 1 4 1 4 1-2 1-2 1 0 1-5 1 0 1 0 1 0 1-6 1-1 1 2 1 4 1 4 1 5 1 0 1-5 1 0 1 3 1 3 1 2 1-3 1-5 1 1 1 0 1 3 1-5 1 1 1 5 1 0 1-2 1 2 1 5 1 4 1-4 1-4 1-3 1 0 1 2 1 6 1 3 1 2 1 3 1-6 1-4 1-8 1-1 1 4 1 4 1 2 1-3 1-2 1-1 1-6 1-2 1 2 1 6 1 4 1-2 1-6 1-5 1-1 1 4 1-5 1-8 1-2 1 1 1 10 1 5 1 1 1-4 1-1 1 4 1 4 1 5 1-5 1-6 1-1 1 2 1 6 1 1 1-5 1-1 1 4 1 2 1 3 1 1 1 2 1-7 1-7 1-4 1 0 1 5 1 3 1-7 1-6 1 3 1 5 1 9 1 4 1-5 1-8 1-3 1-3 1 0 1 0 1 11 1 4 1-1 1-5 1-1 1 8 1 1 1-4 1-11 1-4 1 7 1 11 1-1 1-7 1-7 1 1 1 6 1 0 1-7 1 1 1 1 1 5 1 4 1 3 1-3 1 0 1-4 1-2 1-1 1-2 1 4 1 10 1 8 1-1 1-5 1-4 1-2 1 2 1-5 1-9 1-2 1 5 1 7 1 3 1 0 1-4 1 5 1 2 1-2 1-1 1-1 1 1 1 3 1-9 1-1 1-1 1-1 1 3 1-2 1 3 1 4 1 7 1 4 1 3 1 1 1-2 1 0 1-5 1-6 1-7 1 0 1 3 1 4 1 6 1 1 1 1 1 3 1 0 1-11 1-3 1 2 1 10 1-1 1-7 1-1 1-1 1 4 1-4 1-12 1-1 1 7 1 6 1 3 1-2 1 1 1 4 1 2 1 4 1-5 1-1 1-2 1-3 1-5 1-6 1 1 1 8 1 6 1-5 1-8 1-7 1 5 1 6 1-2 1-1 1 5 1 5 1 3 1-4 1-1 1-1 1-3 1-2 1-1 1 3 1 0 1-2 1-6 1 3 1 9 1 2 1-2 1-6 1-6 1 2 1 8 1 5 1 0 1-7 1-3 1 5 1 2 1 0 1-2 1-6 1 0 1 0 1 4 1 6 1 0 1-9 1-5 1 2 1 4 1 6 1 0 1-5 1 1 1-1 1-6 1-5 1 0 1-1 1 1 1 6 1 5 1-4 1-6 1-1 1 0 1 4 1 1 1 0 1 6 1 8 1 5 1-3 1-2 1-3 1-2 1-2 1-5 1-4 1 1 1 6 1-1 1 0 1 0 1 2 1 3 1-1 1-2 1-1 1-1 1-1 1 0 1-4 1-4 1 4 1 1 1-2 1 0 1 3 1 3 1 3 1 0 1-3 1-2 1 1 1 2 1 7 1 0 1-6 1 1 1 4 1 8 1-2 1-8 1-9 1 2 1 10 1 4 1 3 1-5 1 1 1-3 1 1 1-2 1-4 1 0 1 3 1 5 1-2 1 0 1-4 1-1 1 1 1 4 1-4 1 5 1 2 1 1 1 0 1-5 1-5 1 2 1 6 1 1 1-5 1-5 1-2 1-1 1 2 1 0 1 0 1-1 1 2 1 3 1 11 1 3 1-5 1-11 1-8 1-3 1 1 1 6 1 10 1 5 1-3 1-8 1-5 1 4 1 8 1-3 1-1 1-1 1 2 1 1 1 0 1-3 1 0 1-5 1-8 1-5 1 0 1 8 1 9 1 7 1 1 1-4 1-8M435 1657l1 1 1-6 1-1 1-1 1 1 1 4 1-2 1-3 1 1 1-4 1-3 1 1 1 4 1 6 1 0 1-1 1-4 1 5 1 0 1-2 1-1 1 1 1-3 1-1 1 1 1 4 1 2 1-4 1-2 1 3 1 0 1-2 1 3 1 2 1 6 1-2 1-4 1 0 1 0 1 2 1-3 1-7 1 2 1 9 1 6 1-5 1-9 1 0 1 2 1 1 1-2 1-12 1-5 1 6 1 8 1 0 1-8 1-1 1 1 1 1 1 2 1-2 1 1 1 8 1 0 1 0 1-6 1 0 1 5 1 2 1 3 1-4 1-7 1 0 1 4 1 4 1 1 1 1 1-1 1-3 1 3 1 0 1 1 1 1 1-4 1-2 1-2 1-1 1 0 1 2 1 4 1 0 1 3 1 1 1-1 1-3 1 4 1 4 1 0 1-5 1 3 1-2 1-3 1-1 1-1 1 5 1 6 1 1 1-4 1-2 1-4 1-5 1 3 1 7 1 5 1-8 1-7 1-2 1 8 1 9 1-6 1-7 1-3 1 1 1-4 1 2 1-2 1 6 1 0 1-4 1 2 1-2 1 2 1-3 1 4 1-1 1 0 1-2 1 3 1 7 1 3 1-3 1-5 1 7 1 9 1-1 1-5 1-3 1-4 1-3 1-1 1 4 1 7 1 2 1-6 1 0 1 0 1-3 1-4 1 1 1 5 1 4 1-4 1-6 1 3 1 6 1 2 1-10 1-7 1 0 1 0 1-2 1-2 1 1 1 0 1-1 1-4 1 5 1 3 1 2 1-3 1-10 1 4 1 8 1 5 1 1 1-4 1-4 1 3 1-7 1 0 1 7 1 6 1 7 1-9 1-4 1-3 1 1 1 2 1 1 1-1 1 0 1 2 1 2 1 1 1 0 1 3 1 3 1 0 1 5 1 1 1-1 1-2 1-1 1-6 1-11 1 4 1 10 1 10 1-5 1-9 1 2 1 9 1 7 1-1 1-9 1-2 1 0 1-1 1 2 1-3 1-1 1 2 1 10 1 2 1-10 1-10 1-2 1 11 1 10 1 4 1-5 1-2 1-2 1-5 1-4 1 1 1 6 1 0 1-5 1 0 1-3 1 3 1 2 1-4 1-3 1-8 1 4 1 1 1-2 1-8 1-5 1 7 1 7 1 2 1-1 1 5 1-2 1 6 1-1 1 3 1 4 1 2 1 0 1-3 1 0 1-5 1-8 1-7 1 5 1 3 1-5 1-4 1 3 1 4 1 5 1 2 1-4 1-5 1-1 1 0 1 4 1 6 1-3 1-5 1-1 1 2 1 6 1 3 1-1 1-5 1-3 1 2 1 10 1 5 1-2 1-1 1 2 1 1 1-2 1 1 1 0 1 0 1 1 1 0 1-1 1 2 1-3 1-4 1-5 1 6 1 1 1-1 1 4 1 4 1 8 1-4 1-5 1-2 1-1 1 1 1-1 1-6 1-5 1-4 1 1 1 1 1 3 1 4 1-3 1 5 1 0 1-4 1-4 1-4 1 5 1 2 1 2 1 1 1-3 1-1 1-5 1 0 1 0 1-3 1-5 1-4 1-1 1 4 1 4 1-1 1 5 1 4 1 1 1-1 1-2 1 1 1 1 1-4 1 2 1 3 1-1 1 0 1-5 1-4 1-2 1-2 1-5 1 0 1 5 1 7 1 4 1 0 1-1 1 7 1 0 1-4 1-5 1-6 1 3 1 5 1 9 1 2 1-5 1 2 1 2 1-3 1-6 1 0 1 8 1 6 1-4 1-6 1-2 1 3 1 7 1-1 1-5 1-3 1-2 1 1 1 7 1-2 1-2 1-2 1 6 1 7 1-3 1-6 1-2 1 1 1 0 1-3 1-7 1-2 1 1 1 7 1-1 1 4 1 1 1 7 1-6 1-5 1-4 1-6 1-6 1 0 1 3 1 6 1 2 1 2 1 3 1-5 1 1 1 4 1 7 1-2 1-3 1-1 1 8 1 7 1-5 1-11 1-1 1 5 1 7 1-2 1-3 1 2 1 3 1 0 1-10 1 0 1-1 1-1 1 2 1-1 1-7 1-8 1-1 1 6 1 7 1 1 1-11 1 2 1 7 1 8 1-4 1-9 1 0 1 4 1 2 1 2 1 0 1-2 1 3 1-1 1-1 1 0 1 0 1-2 1 3 1 4 1 3 1-3 1-2 1 4 1-1 1 0 1 0 1 1 1 3 1-4 1-3 1 0 1 1 1-2 1 1 1 2 1 2 1-5 1-3 1 0 1 1 1 3 1 2 1-1 1 1 1 2 1 4 1-3 1-5 1-2 1-1 1 1 1-1 1 4 1 4 1 6 1-1 1-2 1-3 1 1 1-6 1-5 1 2 1 7 1 5 1-2 1-7 1-3 1-2 1 0 1-4 1 1 1 4 1 0 1-8 1-4 1 5 1 7 1-2 1-6 1 1 1 7 1 5 1-5 1-5 1 4 1 5 1-7 1-1 1 7 1 10 1 4 1-6 1-5 1 0 1 2 1 2 1 0 1 0 1-3 1-3 1 2 1 5 1 1 1-7 1-8 1 5 1-1 1 2 1-1 1 4 1 9 1-2 1-7 1-4 1 3 1 1 1-8 1-3 1 6 1 2 1 0 1-3 1-2 1 0 1 1 1 0 1 8 1 5 1-7 1-10 1 2 1 7 1 0 1-6 1-3 1 7 1 10 1 1 1-6 1 0 1 6 1-3 1-3 1-2 1 2 1 1 1 3 1-4 1-7 1 1 1 0 1 9 1 11 1-2 1-7 1-2 1 2 1 3 1 2 1-4 1-2 1-5 1-4 1-4 1-2 1 4 1-2 1-4 1 8 1 14 1 4 1-9 1-3 1 1 1 2 1-4 1-9 1-5 1 1 1 10 1 5 1 0 1-4 1-3 1 0 1-1 1 0 1 1 1-3 1 0 1 3 1 2 1-1 1-3 1-2 1 1 1 1 1-3 1-2 1-2 1 0 1 2 1-1 1 1 1-1 1 0 1 5 1 1 1-2 1-2 1-1 1 2 1-4 1-4 1-4 1 0 1 8 1 11 1 2 1-4 1-5 1 4 1 8 1 3 1 2 1-13 1-7 1 1 1-1 1 4 1-2 1 2 1 6 1-3 1-2 1 1 1 6 1 8 1-1 1-4 1-4 1-4 1-2 1-4 1 3 1 7 1 4 1-6 1-3 1 1 1 8 1 0 1 1 1-2 1-6 1 1 1-2 1 2 1 2 1-2 1-5 1 6 1 7 1 0 1-4 1-6 1-1 1 2 1-2 1 1 1 0 1 6 1 3 1 2 1-1 1 4 1 2 1-1 1-3 1 3 1 6 1-3 1-5 1-3 1-3 1-2 1-4 1-7 1 4 1 5 1 15 1 5 1-2 1-8 1-8 1-1 1-1 1-2 1-1 1-3 1 4 1 3 1 2 1 1 1 1 1 3 1-6 1-4 1 0 1 2 1-3 1-3 1-2 1-1 1 5"/>
<path vector-effect="non-scaling-stroke" d="M0 1726l1 0 1-4 1-6 1 2 1 8 1 6 1 6 1-2 1 2 1-5 1-2 1 2 1 3 1-1 1-1 1-3 1 1 1 3 1 6 1-4 1-6 1-5 1 1 1 7 1-1 1 1 1 1 1 7 1-2 1 0 1-3 1-4 1 1 1-4 1-2 1 7 1 0 1-4 1-7 1 2 1 5 1 0 1-6 1-2 1 0 1 5 1 3 1-4 1 2 1-1 1-3 1 0 1 5 1 1 1-4 1-7 1-2 1 1 1 4 1 9 1 3 1-6 1-2 1-3 1 5 1 6 1 3 1-4 1-7 1 0 1 3 1 2 1 2 1-5 1 0 1 4 1-4 1-2 1-3 1 4 1 4 1-1 1-6 1-6 1-1 1 4 1 3 1 7 1 5 1-1 1-13 1-4 1 3 1 7 1 1 1 3 1 0 1-2 1-5 1-5 1 6 1 4 1-1 1-8 1 0 1 3 1 7 1 1 1-3 1-6 1-3 1 5 1 4 1 6 1 1 1-8 1-4 1 5 1 2 1-3 1-3 1 2 1 5 1 2 1-1 1 1 1 3 1-8 1-11 1-5 1 4 1 5 1-3 1-7 1 2 1 7 1 13 1 8 1-2 1-3 1-8 1 0 1 3 1 0 1 1 1 3 1-1 1-4 1-3 1 8 1 8 1-3 1-8 1-7 1 1 1 8 1-1 1-4 1 0 1-1 1-3 1-6 1 2 1 3 1 3 1 4 1 0 1 5 1-4 1-12 1-2 1 3 1 8 1 1 1-2 1 5 1 9 1 0 1-4 1-7 1 1 1 3 1-1 1-10 1-8 1 0 1 0 1 4 1-2 1 1 1 6 1 6 1 1 1-4 1-5 1 3 1 1 1-2 1-8 1-3 1 3 1 4 1 0 1 4 1-4 1 2 1 2 1 7 1 4 1 1 1 0 1-7 1-6 1 1 1 9 1 2 1-4 1-9 1-4 1 0 1 10 1 3 1-2 1-4 1-1 1 6 1 4 1-3 1-2 1 0 1 0 1-9 1-6 1 4 1 7 1 9 1 1 1-2 1 1 1 1 1-2 1-9 1-2 1-2 1 3 1 7 1 1 1 3 1-4 1 4 1 1 1-5 1-6 1-7 1 0 1 4 1 1 1 1 1 1 1 3 1-4 1 0 1 6 1 3 1-5 1-10 1-1 1 4 1 5 1-3 1 0 1 3 1 1 1-4 1-6 1 2 1 6 1 3 1-4 1-1 1 4 1 3 1 2 1 2 1-2 1 1 1-3 1-3 1 3 1-1 1 1 1-1 1 4 1-2 1-1 1-5 1 3 1-1 1 1 1 2 1-1 1 0 1-4 1-6 1-2 1 3 1 3 1 5 1 1 1 2 1-5 1-4 1-1 1 4 1 5 1-5 1-3 1 4 1 8 1 2 1-2 1-7 1-1 1 4 1 4 1 3 1-4 1-4 1-4 1-1 1 3 1 4 1 5 1-4 1-6 1-1 1 3 1 2 1-1 1-5 1-6 1 2 1 3 1 2 1 0 1 1 1-3 1 1 1-2 1 2 1-5 1-6 1 1 1 13 1 8 1 1 1-2 1-4 1 5 1 2 1-8 1-8 1 5 1 7 1 4 1-3 1 2 1 0 1 2 1-6 1-8 1 4 1 6 1-3 1-3 1 1 1 1 1 3 1-8 1 0 1 4 1 5 1 5 1-1 1 0 1-3 1-4 1-3 1 3 1 4 1-1 1-6 1-4 1-4 1-3 1-4 1 2 1 0 1 3 1 5 1 8 1 6 1 0 1-5 1-9 1 2 1-4 1-3 1-3 1 0 1 2 1 1 1-1 1 2 1 2 1 2 1-3 1 0 1 3 1 5 1 0 1 0 1-2 1-1 1-11 1-6 1 5 1 3 1 5 1 1 1 8 1 5 1 0 1-1M435 1735l1 2 1 0 1 0 1-1 1-3 1-6 1-4 1 0 1 2 1 4 1 10 1-1 1-8 1-10 1 2 1 8 1 10 1-1 1-8 1-4 1-3 1 5 1 2 1 5 1 0 1 2 1-5 1 2 1 7 1 6 1 0 1-8 1-5 1-3 1-4 1 0 1 6 1 10 1-4 1-11 1-2 1 1 1 2 1-4 1-6 1 9 1 3 1 0 1-2 1-1 1 0 1-3 1-4 1-5 1 4 1 2 1 0 1 6 1 5 1-4 1-1 1 2 1 10 1 2 1-7 1-6 1 1 1 0 1-9 1-5 1 3 1 7 1 5 1 2 1-8 1-3 1-1 1 2 1 7 1 6 1-1 1-8 1-2 1-1 1 0 1-2 1 3 1 1 1 0 1 3 1 5 1-1 1 1 1-4 1 3 1 5 1-6 1-5 1-3 1 3 1-3 1-5 1-3 1 8 1 13 1-8 1-12 1-1 1 10 1 6 1-6 1 0 1 0 1-2 1-5 1-1 1 2 1 6 1-7 1-1 1 4 1 6 1 6 1 0 1 0 1 1 1-8 1-6 1 4 1 3 1 4 1 1 1 3 1-2 1 0 1-3 1-1 1 1 1-1 1 1 1 3 1 3 1 2 1-2 1-8 1-5 1-3 1 4 1 6 1 3 1-5 1-4 1-3 1 5 1-5 1-6 1 3 1 3 1 0 1-4 1 5 1 9 1 11 1-7 1-7 1-4 1 6 1 0 1 3 1-2 1-1 1 2 1 4 1 2 1-4 1-5 1-5 1-5 1 3 1 2 1-1 1-1 1-1 1 2 1 4 1 7 1 3 1-1 1-2 1-4 1-2 1-1 1-7 1-1 1 6 1 6 1 8 1-10 1-8 1-1 1 2 1 2 1 4 1 0 1 3 1 5 1-1 1 2 1-2 1-9 1-3 1 3 1 11 1 0 1-5 1-1 1 1 1 2 1-4 1 1 1 0 1-2 1-4 1 2 1 2 1 5 1 7 1-1 1 1 1-3 1-6 1-2 1-4 1 0 1-3 1 3 1 9 1 3 1-8 1-8 1-3 1 14 1 10 1 0 1-3 1-3 1-2 1-5 1-2 1 0 1 4 1 2 1-2 1 0 1-2 1 0 1-2 1-5 1-2 1 1 1 2 1 2 1-1 1-4 1-2 1-4 1-4 1 0 1 1 1 2 1 0 1-1 1 1 1 6 1 5 1-1 1-6 1-4 1-1 1-1 1 0 1-4 1 4 1 3 1 6 1-2 1-2 1-3 1 2 1 7 1 6 1-4 1-8 1-2 1 6 1 4 1-2 1-6 1 4 1 8 1 0 1-5 1-3 1 0 1-5 1 1 1 6 1 12 1 2 1-2 1-4 1 6 1 3 1 1 1-2 1 0 1 2 1-1 1-5 1-6 1-1 1 0 1 5 1 7 1 6 1 0 1-5 1 0 1 6 1 2 1-10 1-7 1-1 1 9 1-2 1-7 1 1 1 4 1 2 1 0 1-2 1 4 1 2 1-2 1-6 1-8 1-2 1 8 1 5 1-2 1-11 1-9 1 5 1 9 1 2 1-4 1-1 1 1 1-1 1-6 1-6 1 0 1 6 1 4 1 0 1 1 1 8 1 0 1-8 1-5 1 3 1 5 1 6 1-3 1-1 1 1 1-6 1-6 1-1 1 4 1-5 1-4 1 0 1 8 1 4 1-4 1 3 1 4 1 0 1-5 1-8 1-4 1 2 1 2 1 3 1 9 1 3 1-3 1-6 1 1 1 2 1 1 1 4 1 5 1-2 1-4 1-2 1 1 1 6 1 0 1-8 1-4 1 2 1 10 1 1 1-4 1-1 1-4 1 2 1 4 1-1 1-5 1-4 1 0 1 3 1 1 1-5 1-5 1 3 1 5 1 2 1 5 1 7 1-2 1-5 1-5 1-6 1 4 1 4 1 1 1-6 1-9 1 3 1 12 1 8 1-1 1-4 1-3 1 1 1-3 1-4 1 5 1 12 1 7 1-6 1-14 1-2 1 3 1 1 1 3 1-1 1 7 1-1 1 1 1-3 1-5 1 2 1-1 1 0 1 3 1 3 1-6 1 1 1 0 1 3 1-1 1-6 1-2 1 2 1 5 1-4 1-11 1-4 1 7 1 9 1 5 1 2 1-4 1-4 1-2 1-6 1-4 1 1 1 6 1-1 1 1 1 1 1-2 1 0 1 4 1 7 1-2 1 3 1 4 1-4 1-3 1-3 1 0 1-3 1-3 1 6 1 7 1 2 1-6 1-1 1-3 1 7 1 1 1-4 1-3 1 2 1 1 1-2 1-4 1-5 1 4 1 8 1 5 1 0 1-5 1-3 1 3 1-1 1-1 1-5 1-6 1 1 1-1 1 3 1 1 1 2 1 2 1 1 1 2 1-5 1-4 1-1 1 6 1 3 1 2 1-7 1-4 1 2 1-2 1 2 1 0 1 5 1 5 1-4 1-2 1-2 1 0 1-3 1-5 1 1 1 6 1 6 1 3 1-1 1 2 1 0 1-7 1-1 1-2 1 3 1-2 1 1 1 1 1 3 1 0 1-2 1-4 1 3 1 2 1-1 1-5 1 1 1 3 1 4 1-1 1-4 1 2 1-5 1 0 1-6 1 2 1 4 1 5 1-3 1-7 1 1 1 0 1 7 1 2 1 0 1-1 1-1 1 0 1-5 1 4 1 4 1 7 1 0 1-1 1 1 1 4 1 1 1 0 1-1 1-1 1-2 1-3 1 0 1-2 1-2 1 0 1 2 1 7 1 5 1 0 1-7 1-10 1 3 1 2 1 1 1 1 1 1 1-3 1-4 1-3 1-4 1 1 1 5 1-1 1 0 1-1 1 3 1 1 1 4 1-1 1-2 1 4 1-3 1-7 1-8 1-1 1 10 1 8 1-2 1-7 1-4 1 6 1 0 1 0 1-2 1-2 1 4 1 4 1-1 1-1 1-5 1-1 1 5 1 2 1-1 1-6 1 3 1 7 1 1 1 0 1-1 1 1 1-2 1-4 1-2 1-4 1 7 1 5 1-2 1-3 1-6 1-3 1 0 1 3 1 10 1 6 1 0 1-7 1-6 1 0 1 1 1 1 1-3 1 2 1 7 1-2 1-5 1 1 1-1 1 2 1-4 1 2 1 1 1 4 1 4 1-3 1 2 1 1 1 0 1-10 1-4 1 2 1 4 1 6 1-2 1-4 1-5 1 3 1 8 1 6 1 2 1-5 1-2 1-6 1-7 1 3 1 2 1 2 1 5 1-5 1-2 1 2 1 0 1 5 1-3 1 1 1-6 1 0 1 5 1 6 1 1 1-3 1-4 1 1 1 3 1-4 1 0 1-1 1-1 1-3 1-4 1-3 1 2 1-1 1-3 1 0 1 6 1 7 1-2 1-3 1-3 1-2 1 5 1-1 1-7 1-3 1 4 1 4 1 5 1 4 1 2 1-2 1-5 1-3 1-1 1 5 1 3 1 4 1-2"/>
<path vector-effect="non-scaling-stroke" d="M0 1792l1-4 1 2 1 7 1 12 1 2 1 0 1 0 1 1 1-1 1-3 1-3 1 1 1-5 1 1 1 1 1 7 1 5 1-4 1-1 1 3 1-2 1-4 1-5 1 5 1 3 1-7 1-4 1 4 1 5 1 8 1-2 1-7 1 1 1 3 1 0 1-11 1 0 1 8 1 4 1 3 1-3 1 1 1-4 1-4 1-2 1 3 1 4 1-4 1-1 1-8 1 2 1 3 1-2 1-1 1 4 1 2 1-2 1 0 1 2 1 5 1 2 1-7 1-5 1 4 1 5 1 0 1 0 1 1 1 1 1-3 1-4 1-1 1 6 1 2 1 1 1-1 1-5 1 0 1-2 1 1 1 1 1 4 1-8 1-5 1-1 1 7 1 3 1 1 1-4 1-1 1 3 1 5 1 0 1 2 1 6 1-1 1-1 1-7 1-6 1-6 1-2 1 1 1 2 1 2 1 1 1 5 1 8 1 5 1-4 1-3 1-1 1 0 1 1 1-1 1-2 1-3 1 4 1-4 1-2 1-3 1 4 1 6 1 1 1-4 1-9 1 5 1 4 1-7 1-6 1 2 1 6 1 1 1-7 1-7 1 2 1 8 1 0 1-8 1 2 1 9 1 5 1-1 1-2 1 2 1 8 1 3 1-3 1-4 1-1 1 2 1 2 1-5 1-5 1-4 1 3 1 7 1 1 1-1 1-9 1 2 1 1 1 1 1-3 1 1 1 6 1 4 1-7 1-5 1 4 1 3 1-1 1-1 1-2 1 1 1 0 1 3 1 4 1 2 1-6 1-4 1 0 1 4 1 2 1-7 1-1 1 5 1 4 1-2 1-3 1 1 1 1 1 1 1-7 1-2 1 2 1 1 1-3 1-6 1 1 1 5 1 3 1-1 1 6 1 5 1 2 1-2 1-4 1 4 1 2 1 0 1-1 1-7 1-3 1-7 1 2 1 6 1 6 1-2 1 0 1 0 1 6 1-1 1-5 1-4 1 1 1 3 1 2 1-2 1 1 1 1 1-3 1-4 1-6 1 4 1 3 1 3 1 2 1 1 1 2 1 4 1 0 1-1 1-6 1-3 1-4 1-2 1 1 1-2 1-3 1-1 1 4 1 1 1-1 1-2 1-8 1 4 1 10 1 3 1 3 1-2 1-6 1 1 1-1 1-1 1-1 1 3 1 7 1-2 1 0 1-3 1-3 1 5 1 1 1 1 1 0 1-5 1 4 1 2 1-2 1 2 1 0 1-1 1-1 1-5 1 1 1 1 1 5 1 1 1-1 1 0 1-3 1-3 1-1 1 0 1 0 1-1 1 6 1 4 1 2 1 0 1-3 1-2 1-1 1-6 1-4 1-1 1 3 1-1 1 3 1 3 1 0 1-2 1-1 1 3 1 5 1-4 1-4 1 7 1 3 1 1 1-1 1-5 1-1 1-5 1-5 1 2 1 6 1 6 1-1 1 1 1-1 1 3 1-4 1-4 1-5 1 0 1 1 1 5 1 4 1-4 1-5 1-3 1 11 1 11 1 3 1-9 1-7 1 0 1 1 1-7 1-3 1 5 1 8 1 1 1-3 1 2 1 1 1 2 1-9 1-2 1 2 1 2 1-3 1 4 1 7 1 4 1 0 1-2 1-3 1-4 1-4 1-3 1 5 1 3 1-8 1-2 1 2 1 2 1 3 1-3 1-3 1 2 1 2 1 0 1 4 1 0 1-2 1-4 1 1 1 2 1 3 1-2 1-1 1-1 1 2 1-6 1-1 1 1 1-2 1 0 1 7 1 9 1 8 1-7 1-13 1-5 1 1 1 3 1-1 1 7 1 3 1 3 1-5 1-2 1-5 1 0 1-3 1-1 1-1 1-3 1-1 1 3 1 4 1 1 1-5 1-1 1 2 1 2 1 1 1 2 1 9 1 4 1-3 1-3M435 1804l1 3 1 4 1 2 1-6 1 4 1 6 1 4 1-4 1-11 1-2 1 0 1 4 1-3 1-4 1 3 1 3 1 0 1-5 1 1 1 6 1 1 1-2 1 1 1-3 1-1 1 0 1-6 1 5 1 4 1 5 1-1 1-1 1 0 1-4 1 0 1 4 1 2 1-2 1-1 1-1 1 1 1-2 1-1 1 3 1 3 1-7 1-7 1-2 1 6 1 4 1 0 1-3 1-3 1 0 1 0 1-5 1-5 1 1 1 0 1 2 1-1 1 1 1 6 1 3 1-1 1 3 1 0 1-1 1 5 1 1 1-3 1-2 1-8 1-2 1 1 1 2 1 3 1-1 1 3 1 6 1 8 1 1 1-4 1-11 1 6 1-1 1-1 1-4 1 3 1 4 1-4 1-2 1-1 1 7 1 11 1 1 1 1 1-2 1-1 1-7 1-11 1 3 1 1 1 4 1-1 1-2 1 3 1-2 1-7 1 0 1 1 1 10 1 0 1-4 1-3 1-2 1-2 1-6 1 0 1 9 1 3 1-5 1-1 1-1 1 7 1-1 1-2 1 1 1 2 1 1 1-2 1-2 1 0 1 5 1 3 1-1 1-4 1 1 1 1 1-2 1-6 1-4 1 1 1 8 1 5 1 1 1-1 1-5 1 3 1 3 1 3 1 1 1-3 1 0 1-6 1-3 1 2 1 2 1-4 1-1 1-3 1-1 1 2 1-1 1 5 1 1 1 2 1-8 1-3 1 7 1 5 1 4 1-5 1-2 1 8 1 3 1 3 1-5 1-9 1 2 1-3 1-1 1 0 1 4 1 4 1 2 1-5 1-2 1 3 1 7 1 2 1-4 1-7 1-2 1-4 1-1 1 0 1 3 1 10 1 2 1 6 1-2 1-6 1-6 1 1 1 1 1-2 1-4 1-1 1 0 1 1 1 1 1-3 1 1 1 2 1-1 1-3 1 6 1 3 1-1 1-5 1-6 1 4 1 5 1-1 1 0 1 0 1 3 1-4 1-2 1-1 1 3 1 3 1-2 1 2 1-6 1-6 1 2 1 11 1 14 1 3 1-10 1-18 1-3 1 8 1 13 1 5 1 0 1-8 1-8 1-6 1-1 1 5 1 3 1 2 1-6 1 0 1 1 1 6 1-2 1-9 1-9 1 2 1 9 1 8 1-4 1-7 1-3 1 2 1-3 1-6 1 5 1 6 1 4 1 0 1-4 1 1 1 6 1 1 1-8 1 0 1 0 1 2 1 4 1-1 1-2 1 1 1-2 1-4 1 0 1 3 1 4 1 2 1 7 1-1 1 0 1-4 1-1 1 1 1 4 1-4 1-2 1 2 1 6 1 3 1-6 1-13 1-7 1 3 1 10 1 10 1 5 1 1 1-1 1-3 1 1 1 1 1-2 1 2 1 1 1 4 1-5 1-5 1-8 1 3 1 5 1 9 1 8 1-7 1-7 1-8 1 5 1 4 1 2 1-4 1-4 1 8 1 5 1-4 1-12 1-4 1-1 1 3 1 3 1 9 1 0 1-8 1-7 1 0 1 4 1 3 1 0 1-2 1 4 1 3 1-3 1 1 1-1 1-3 1-3 1-5 1-3 1 5 1-5 1-2 1 5 1 3 1 8 1-4 1-9 1-1 1 4 1 4 1 4 1-1 1-1 1-4 1 1 1 3 1 1 1-5 1 0 1-3 1-1 1-4 1 2 1 2 1-1 1 0 1-5 1 0 1 5 1 3 1 0 1-8 1 1 1 2 1 4 1 1 1-2 1-1 1 3 1 0 1-2 1-6 1 3 1 11 1 3 1-9 1-5 1 5 1 4 1 3 1-9 1-2 1 5 1 7 1-1 1 5 1-3 1-1 1-2 1 3 1 2 1-3 1-5 1 0 1 7 1 4 1-9 1-7 1-1 1 7 1 2 1 1 1 5 1 4 1-4 1-10 1-3 1-1 1 6 1 1 1-5 1-3 1 9 1 5 1 1 1-5 1-2 1 0 1 2 1-6 1-4 1 11 1 11 1-2 1-9 1-8 1 4 1 13 1 1 1 0 1 4 1 1 1-6 1-11 1-3 1 6 1 5 1-1 1-2 1-1 1 3 1-5 1-4 1 4 1 0 1-4 1-7 1 4 1 8 1 1 1-5 1-5 1 3 1 5 1-1 1 1 1 0 1 4 1 0 1-6 1-1 1-1 1 0 1-1 1 2 1 1 1 4 1 4 1 1 1-1 1-5 1 1 1 1 1-1 1-5 1-2 1 3 1 1 1-5 1-8 1 4 1 4 1 6 1 0 1 0 1 1 1-3 1-6 1-9 1 3 1 3 1 3 1 1 1-2 1 5 1 6 1-3 1-4 1-3 1 7 1 3 1 1 1-5 1-2 1 4 1 2 1-2 1-6 1-3 1 1 1 3 1-2 1 0 1-1 1 1 1-3 1 4 1 4 1 1 1-4 1-5 1-6 1 0 1-2 1 0 1 1 1 3 1 6 1 5 1-2 1-3 1 6 1-1 1-2 1-4 1-1 1 7 1 2 1-1 1-3 1 2 1 3 1-4 1-7 1-3 1 9 1 6 1 3 1 2 1-6 1-3 1-5 1-6 1 7 1 6 1 3 1-2 1-2 1 1 1 1 1-2 1-1 1 3 1 0 1-4 1-6 1 0 1 1 1 2 1-1 1 0 1 3 1 1 1 1 1-3 1 1 1 0 1 1 1-3 1 2 1 1 1 6 1 4 1 1 1 1 1-3 1-1 1 3 1 7 1 3 1-2 1-6 1-2 1-2 1-7 1-1 1 2 1 5 1 7 1 0 1-2 1-1 1-1 1-3 1 1 1-1 1-3 1-3 1-2 1-2 1 2 1 1 1-4 1 2 1 5 1 1 1 0 1 3 1-1 1-10 1-4 1 2 1 6 1 2 1-9 1-7 1 3 1 13 1 9 1-7 1-11 1-5 1 4 1 7 1 0 1-1 1-5 1 2 1 2 1 8 1-2 1-4 1 2 1 1 1 4 1-7 1-4 1-4 1 4 1 5 1-1 1-4 1 0 1 5 1-2 1-1 1-10 1 11 1 9 1-3 1-7 1-15 1-4 1 6 1 11 1 6 1-1 1 3 1 2 1 3 1-3 1-6 1 0 1 2 1 0 1-3 1 2 1-1 1 2 1-2 1-5 1-3 1 6 1 8 1 5 1 0 1-2 1-3 1-10 1-4 1-4 1 4 1 8 1 2 1-3 1 1 1 6 1 0 1-4 1-6 1 4 1 4 1-4 1-5 1 2 1 1 1 0 1 0 1 3 1 7 1 7 1-9 1-9 1 1 1 7 1 1 1-9 1-6 1 2 1 6 1 4 1 1 1 2 1 3 1-2 1-4 1 6 1 3 1-1 1-8 1-9 1 3 1 3 1 0 1-4 1-3 1 1 1 4 1 4 1-2 1-3 1-2 1-2 1-1 1 3 1 7 1 1 1 4 1 3 1-2 1-1 1 0 1 1 1 0 1-3 1-4"/>
<path vector-effect="non-scaling-stroke" d="M0 1886l1-2 1-7 1 0 1 1 1 6 1 3 1-1 1-3 1 2 1 1 1-1 1-2 1 1 1-4 1 3 1 6 1 2 1 5 1-4 1-4 1-4 1-5 1 3 1 4 1 2 1-2 1 2 1-2 1 6 1 2 1-2 1-3 1-1 1-4 1-4 1-2 1 2 1 4 1-1 1 1 1 0 1 3 1 0 1-3 1-2 1-1 1-1 1-3 1-2 1 2 1-4 1 0 1-2 1 2 1 7 1 5 1-2 1-4 1 4 1 1 1 6 1 2 1-10 1-3 1 1 1 1 1 2 1 1 1 3 1 1 1-1 1 4 1 6 1 2 1-15 1-6 1 2 1 7 1 6 1 1 1-4 1-5 1 1 1-5 1 1 1-2 1 1 1 1 1 4 1 1 1-3 1-3 1 1 1 8 1 5 1 0 1-5 1-3 1-1 1-7 1-6 1 3 1 2 1-4 1-8 1-1 1 9 1 8 1-1 1-2 1 5 1 6 1 5 1 0 1-11 1-10 1-4 1 6 1 8 1 6 1-1 1-3 1 0 1 6 1-5 1-5 1 0 1 1 1-3 1-8 1-5 1-2 1 1 1-2 1 4 1 6 1 8 1 2 1-4 1-1 1 1 1-5 1-2 1 4 1 6 1 5 1-5 1-7 1 3 1 9 1 9 1-5 1-8 1-1 1 2 1 0 1-6 1-8 1 1 1 5 1 4 1 1 1 0 1 2 1 2 1 2 1-1 1-2 1 3 1-6 1-5 1-1 1 1 1 1 1-1 1 8 1 9 1 5 1-8 1-8 1-5 1 5 1 2 1-2 1 0 1-2 1-4 1-2 1 3 1 3 1 8 1 1 1-1 1-5 1 1 1 1 1 5 1-5 1-9 1-4 1-1 1 2 1 4 1 0 1 2 1 7 1 3 1 2 1 2 1 0 1-1 1-9 1-7 1 1 1 10 1 8 1-6 1-6 1-10 1 2 1 6 1 6 1-6 1-4 1 6 1 16 1-1 1-8 1-8 1-1 1 7 1-3 1-5 1 2 1 8 1 3 1-2 1-7 1 3 1 6 1 3 1-8 1-5 1-2 1 6 1 8 1 2 1-5 1-6 1-4 1 1 1-1 1-5 1-9 1 3 1 6 1-2 1 0 1 1 1 1 1 5 1 2 1-3 1 3 1 4 1-4 1-4 1-1 1-3 1-2 1 3 1 5 1 1 1-3 1-4 1 0 1 0 1 2 1 6 1 6 1-3 1-2 1-5 1 1 1 2 1-5 1-1 1 5 1 0 1 5 1-4 1-5 1 0 1 0 1 3 1-2 1 0 1 2 1 6 1-4 1-4 1-5 1-2 1 2 1-1 1-3 1-1 1 2 1 9 1 0 1-5 1-3 1 1 1 3 1 1 1 4 1 3 1-5 1 0 1 2 1 4 1-1 1-3 1 2 1-2 1 5 1-2 1-2 1 0 1 1 1 0 1-4 1 4 1 3 1-4 1-6 1-3 1 10 1 5 1-4 1-9 1-3 1 6 1 3 1 2 1-2 1 2 1-1 1-3 1-2 1 0 1-2 1-1 1 0 1 2 1 1 1 2 1 1 1 5 1 5 1 0 1-6 1-2 1 5 1 3 1 2 1-3 1-1 1 5 1 1 1-3 1-5 1-6 1 2 1 1 1-4 1-2 1 6 1 8 1 4 1-4 1-2 1-1 1 6 1 4 1-1 1-5 1-5 1-4 1 2 1 5 1-4 1-3 1-7 1 2 1 4 1 3 1-2 1-10 1-1 1 13 1 12 1 5 1-7 1-10 1-6 1 0 1-1 1 3 1 4 1-3 1-6 1-6 1 0 1 0 1 1 1 1 1 1 1 7 1 2 1-2 1 0 1 3 1-2 1-7 1-6 1-1 1 6 1 2 1 3 1 7 1-1 1 0 1-6M435 1885l1-1 1-5 1 4 1-3 1-3 1 4 1 5 1 7 1-1 1-3 1-4 1 0 1-7 1-2 1 0 1 4 1 5 1-1 1-2 1-6 1-5 1 0 1 5 1 5 1 5 1-3 1-1 1-2 1 1 1 4 1 8 1 4 1-1 1-7 1 1 1 1 1 4 1 0 1-6 1 2 1 2 1 4 1 0 1-4 1-7 1-4 1-1 1 5 1 2 1 0 1-3 1 2 1 8 1 1 1-8 1-5 1 3 1-3 1-6 1-1 1 1 1 5 1-6 1-6 1-2 1 9 1 12 1 8 1 0 1-4 1-9 1-1 1 5 1 3 1 0 1-10 1-6 1-3 1 5 1 2 1-3 1 3 1-1 1 8 1 5 1 0 1-2 1-4 1-5 1 2 1 0 1 1 1 2 1 0 1 0 1 1 1 5 1-2 1-1 1-1 1 5 1 2 1-2 1-10 1-8 1-6 1 4 1 3 1 9 1 7 1 3 1-11 1-10 1 5 1 1 1 1 1-9 1-1 1 5 1 2 1-4 1-6 1-1 1 4 1 0 1-4 1-2 1 6 1 7 1 11 1-2 1-8 1-8 1-2 1 5 1 5 1 1 1-5 1-2 1 4 1 5 1 4 1 0 1-1 1 1 1 4 1 5 1 2 1-5 1-2 1-1 1-2 1-1 1 0 1 6 1 0 1-2 1-5 1-3 1 1 1 3 1-3 1 1 1-7 1 0 1 0 1 3 1 8 1 3 1-2 1-2 1-2 1-6 1 6 1 6 1 4 1 1 1 0 1-5 1-1 1 3 1 4 1-8 1-9 1-5 1 2 1 9 1-9 1-3 1 3 1 8 1 9 1-2 1-2 1-6 1-1 1-3 1 2 1-3 1-2 1 5 1 12 1 10 1-4 1-17 1-9 1-4 1 3 1-1 1 3 1 5 1 4 1 5 1 0 1 2 1 1 1 0 1-6 1 0 1-4 1 3 1-2 1-3 1 5 1 0 1-4 1-4 1 2 1 2 1 4 1 0 1 0 1-1 1 3 1-6 1-4 1-5 1 6 1 3 1-8 1-2 1 5 1 15 1 4 1-6 1-13 1-3 1 10 1 13 1-1 1-3 1-9 1-1 1-1 1-1 1 1 1 4 1 6 1-7 1-2 1 1 1 2 1-2 1-4 1 3 1-3 1 2 1-1 1-4 1 0 1 1 1-4 1-3 1 2 1 5 1 2 1-5 1 2 1 5 1 5 1-1 1-6 1-3 1 5 1 4 1 1 1-7 1-4 1 6 1 5 1-4 1-6 1-4 1 7 1 4 1 4 1 2 1-1 1 1 1 5 1 0 1-3 1-2 1-4 1 1 1 0 1 5 1 0 1-3 1-7 1-3 1 1 1 9 1 9 1 1 1 1 1-3 1 1 1 2 1-7 1-5 1 3 1 4 1 3 1-3 1-4 1 0 1 0 1 2 1 4 1-4 1 2 1 0 1 0 1 1 1-3 1-6 1-5 1 7 1 7 1-3 1-9 1-2 1 1 1 5 1-4 1 0 1 4 1 8 1-6 1-7 1-1 1 6 1 2 1-3 1 3 1 0 1 1 1-3 1 3 1-1 1-1 1-9 1-1 1-2 1-2 1-3 1-6 1 3 1 5 1 6 1 0 1 1 1-3 1-3 1-4 1 2 1 3 1 7 1 1 1 2 1-3 1-5 1-2 1-2 1-5 1-2 1-1 1-2 1 6 1 7 1 9 1 0 1-5 1 1 1 0 1 0 1-2 1 0 1 4 1-4 1 7 1 4 1 2 1 1 1-8 1-7 1 1 1 8 1 6 1-8 1-9 1 0 1 3 1 5 1 4 1-3 1 1 1-1 1 0 1 4 1 0 1-6 1 0 1 0 1 2 1-5 1-8 1 1 1 3 1 7 1-3 1-1 1 0 1 4 1-3 1 1 1 6 1 6 1 1 1-5 1-10 1-4 1 0 1 2 1 3 1-1 1-2 1 1 1 3 1 2 1 5 1-1 1 2 1-3 1-4 1 0 1 8 1 6 1 1 1-10 1-10 1 9 1 8 1 1 1-7 1-3 1 4 1 5 1 4 1 2 1-3 1-5 1-1 1 3 1-1 1-4 1-1 1-2 1 1 1-1 1 1 1 0 1 2 1-3 1-2 1 2 1 0 1 2 1 2 1 0 1-1 1-3 1-2 1 2 1 2 1-1 1-5 1-3 1-1 1 2 1 5 1 4 1 5 1 2 1-4 1-4 1 1 1 4 1-6 1-5 1 4 1-1 1 0 1-4 1-4 1 1 1 2 1 1 1 2 1 4 1 3 1 0 1-4 1-4 1-4 1 0 1 5 1 6 1-2 1-6 1-3 1 2 1 0 1 1 1 1 1 5 1 4 1-6 1-8 1 3 1-1 1-3 1 2 1 2 1-1 1-4 1-2 1 1 1 3 1-4 1-3 1-2 1 1 1 2 1 5 1 7 1 2 1 1 1-4 1-1 1 3 1-1 1-3 1-2 1 3 1 0 1 2 1 5 1-1 1-7 1-2 1 4 1 9 1-1 1-1 1 1 1-5 1-3 1-5 1 0 1 5 1 3 1 1 1 2 1-3 1-5 1-6 1-5 1 5 1 8 1 6 1 1 1-1 1-2 1-2 1 1 1-4 1 0 1-3 1-2 1 2 1 3 1 0 1-5 1 1 1 0 1 3 1 0 1 4 1 6 1-1 1-5 1-2 1 3 1 1 1-7 1-5 1 1 1 6 1 3 1 1 1-1 1 4 1 9 1 0 1-1 1 2 1-4 1-5 1-5 1 0 1-1 1 1 1 8 1 11 1 0 1-7 1-7 1-1 1 6 1-1 1 4 1-3 1-3 1-5 1-5 1 5 1 2 1 0 1-4 1-3 1 8 1 2 1 4 1-7 1-1 1-2 1 6 1-2 1-8 1-2 1 2 1 12 1-2 1-7 1-10 1 0 1 12 1 5 1-6 1-2 1-4 1 2 1-4 1-2 1 3 1 6 1-1 1-4 1 1 1 2 1 8 1-6 1-6 1 0 1 3 1 9 1 2 1-4 1-7 1-6 1 2 1 5 1 2 1-3 1-7 1-4 1-2 1 4 1 11 1 8 1 6 1-1 1-8 1-1 1 1 1-2 1-6 1-5 1 2 1 3 1-1 1-1 1-1 1 1 1 1 1 2 1 0 1 3 1 8 1 3 1-3 1-8 1-5 1 5 1 3 1-3 1 2 1-4 1 3 1 1 1-3 1-2 1 4 1 2 1 0 1-2 1 1 1 4 1-2 1-6 1-8 1 0 1 7 1 4 1 1 1-1 1-4 1-2 1 5 1 1 1-6 1-6 1 3 1 8 1 5 1 5 1-8 1-1 1-2 1 0 1 5 1 2 1-1 1-3 1-3 1 0 1-1 1-2 1-5 1-1 1-4 1 2 1 6 1 3 1 1 1-3 1-5 1 1 1 5 1 4 1 0 1 0 1 0 1-1 1-2 1 4 1 2"/>
<path vector-effect="non-scaling-stroke" d="M0 1956l1-3 1-7 1 2 1 14 1 7 1 4 1 0 1-4 1-1 1-3 1-1 1-2 1-2 1-3 1 0 1 7 1 1 1 3 1-3 1-3 1 3 1-1 1 1 1-2 1 2 1 3 1 0 1 1 1 2 1 0 1-6 1-10 1-5 1 7 1 12 1-2 1 0 1-5 1-3 1 0 1-4 1 0 1 4 1 2 1-5 1-3 1 1 1 1 1-5 1-6 1-1 1 7 1 0 1-2 1-1 1 7 1 3 1 0 1 0 1 2 1 1 1 0 1 3 1-1 1 2 1-3 1-3 1 1 1-3 1-2 1 1 1 7 1 7 1-1 1-12 1-5 1 3 1 6 1 3 1-2 1-2 1-3 1 2 1-2 1 1 1 0 1-2 1 1 1 5 1 0 1-5 1-2 1 2 1 7 1 1 1-5 1-1 1 2 1-3 1-1 1-2 1-4 1 5 1 3 1 1 1-3 1 1 1 2 1 2 1 2 1-2 1 2 1 3 1-1 1-2 1-1 1 1 1 4 1-2 1-5 1-4 1 2 1-1 1 2 1 4 1-4 1 2 1-5 1-1 1 2 1 3 1 1 1-12 1 0 1 2 1 7 1 2 1 0 1 2 1 4 1 3 1-7 1-5 1 1 1 3 1 6 1 1 1-4 1-6 1 2 1 10 1 6 1-2 1-10 1-4 1 0 1 2 1 0 1-4 1-2 1 6 1 1 1-4 1-1 1-3 1-3 1 5 1-2 1 5 1 2 1-5 1-5 1 5 1 3 1 4 1 2 1 3 1 6 1 0 1-12 1-6 1 1 1-2 1-1 1-4 1 6 1 5 1 1 1-1 1 4 1-1 1-1 1-8 1-4 1 4 1 8 1 0 1-9 1-4 1-3 1 2 1 5 1 4 1 0 1-5 1 6 1 3 1 2 1 0 1 1 1 4 1-6 1-8 1-6 1 5 1 4 1 0 1-4 1 1 1 5 1 3 1-5 1-5 1 0 1 7 1 0 1 2 1 4 1 3 1-4 1-14 1-7 1 1 1 4 1 5 1 8 1 3 1 2 1-2 1 0 1 3 1-5 1-5 1 1 1-1 1-1 1 4 1 4 1-4 1-3 1-3 1 7 1 7 1-5 1-11 1-10 1 3 1 8 1 2 1 3 1 2 1-3 1-4 1-1 1 8 1 3 1-1 1-10 1-6 1 1 1 2 1 2 1 2 1 4 1 1 1-2 1-5 1 1 1 6 1 4 1-2 1 0 1-6 1 0 1 0 1 2 1 1 1 1 1-3 1 5 1 1 1 0 1-2 1-5 1 4 1 4 1 5 1 0 1-4 1-3 1-3 1-6 1-2 1-2 1 4 1 3 1 2 1 3 1 2 1-1 1-3 1-3 1 3 1 2 1 3 1 1 1-1 1 4 1 3 1-1 1-4 1-1 1-2 1-2 1-2 1-4 1 2 1 4 1 1 1 0 1 1 1 4 1 5 1-1 1-5 1-9 1-7 1 4 1 2 1-2 1-4 1 0 1 7 1 8 1-1 1-2 1-2 1 0 1-4 1-1 1 2 1-1 1-5 1 3 1 9 1 6 1-3 1-5 1 6 1 0 1-2 1-6 1-5 1 3 1 5 1 1 1 1 1 3 1 6 1-2 1-3 1-7 1-2 1 7 1 2 1-1 1-6 1-8 1 1 1 1 1 2 1 2 1 4 1 5 1 2 1-6 1-6 1 3 1 2 1 4 1-3 1-4 1-11 1-6 1-2 1 6 1 9 1-1 1-6 1-1 1 9 1 6 1 3 1-1 1-1 1-6 1-1 1-4 1 3 1-1 1-4 1 1 1-3 1 1 1 2 1 0 1 3 1-1 1-4 1-1 1 5 1 5 1 1 1-4 1-11 1-2 1 0 1-2 1 3 1 5 1 6 1 7 1-2 1-4M435 1952l1 7 1 3 1 1 1-6 1-1 1 3 1 1 1-3 1 0 1 4 1 3 1 0 1-1 1-3 1-3 1-4 1-3 1 1 1 4 1 6 1 0 1-1 1-6 1-2 1 1 1 3 1 4 1 1 1-4 1 0 1-1 1 3 1-2 1 3 1 3 1 3 1 0 1-2 1 5 1 0 1 0 1-5 1-6 1 2 1 0 1 1 1 2 1-4 1 0 1 6 1 6 1 2 1-6 1-7 1 0 1 4 1 1 1-1 1-3 1-1 1-2 1-1 1-3 1-4 1 3 1 4 1 3 1 2 1 1 1-2 1 2 1 5 1 1 1 1 1 0 1-3 1-9 1-7 1 1 1 3 1 5 1 2 1 1 1-1 1 6 1 0 1 2 1 2 1 1 1-1 1 0 1-5 1-7 1-4 1-5 1 1 1 0 1 4 1 5 1 0 1 3 1 1 1 1 1 1 1-1 1-8 1-9 1-1 1 1 1 6 1 0 1-3 1 3 1-1 1-3 1-4 1 0 1 4 1 3 1 0 1-1 1-1 1-5 1-2 1-4 1 6 1 7 1 4 1-5 1-11 1 3 1 7 1 10 1-3 1-8 1-1 1 0 1 3 1 1 1 0 1 7 1 0 1-9 1-2 1 7 1 12 1 2 1-6 1-5 1 1 1 8 1 0 1-3 1 3 1 0 1-4 1 1 1 1 1-3 1 0 1-5 1-4 1 8 1 4 1 1 1-2 1-2 1-3 1-6 1 4 1 9 1 2 1-2 1-6 1-3 1-3 1 6 1 7 1 6 1-1 1 0 1-1 1-3 1-1 1-3 1-5 1-8 1-3 1 4 1 2 1 5 1 0 1-3 1 5 1 3 1 3 1-1 1-1 1 3 1 0 1-3 1-8 1-2 1 0 1 4 1 9 1 6 1-1 1-4 1-3 1-3 1-1 1-2 1 1 1-4 1 2 1 3 1 1 1 4 1 0 1-4 1 0 1 1 1 0 1 3 1-3 1-6 1-2 1-1 1 4 1 2 1-1 1-8 1-2 1 7 1 11 1 2 1-7 1-4 1 3 1-8 1-8 1 0 1 2 1 9 1 1 1 4 1-3 1-6 1-5 1 4 1 14 1 4 1 0 1-5 1-3 1-3 1-8 1-3 1-1 1 2 1-4 1 3 1 1 1 6 1 0 1-4 1 1 1 7 1 2 1-4 1-5 1-1 1-1 1-3 1-10 1-1 1 8 1 7 1 6 1-2 1 1 1-2 1 3 1-5 1 3 1 3 1 0 1-1 1-5 1 1 1 0 1 1 1 0 1-3 1-4 1-2 1 4 1 7 1 3 1 0 1-3 1-3 1 1 1 2 1-1 1-1 1 3 1 7 1 8 1-6 1-9 1-10 1 0 1 8 1 0 1 8 1 0 1-6 1-8 1 2 1 6 1 6 1 3 1 2 1-1 1 1 1 0 1-4 1-4 1 2 1-1 1 0 1-2 1 0 1-1 1-3 1 6 1 10 1 4 1-4 1 1 1-3 1 0 1-2 1-7 1-7 1 1 1 6 1 3 1 1 1 3 1 0 1-1 1 0 1 1 1 2 1 1 1-3 1-2 1 4 1 4 1 0 1-7 1-8 1-3 1 6 1 2 1-10 1-5 1 1 1 3 1 0 1 6 1 6 1 3 1-2 1-5 1-1 1-1 1-3 1-3 1 0 1-1 1-5 1-3 1 5 1 3 1 0 1 1 1-1 1 1 1-1 1-3 1 0 1 2 1-1 1-4 1 1 1 0 1 2 1 4 1 3 1 3 1-6 1-3 1 2 1 4 1 2 1-4 1-3 1 5 1 5 1-2 1-6 1-4 1 0 1 1 1-3 1-1 1 3 1 1 1 9 1 4 1-1 1 1 1-3 1-2 1 2 1-1 1-2 1-2 1 2 1 2 1 0 1 3 1 2 1-1 1-5 1 0 1 5 1 6 1-5 1-1 1-4 1-4 1 1 1-2 1 1 1-3 1 0 1 3 1 3 1-2 1 1 1 0 1 8 1 2 1-3 1-8 1 3 1 11 1 3 1-4 1-8 1-1 1 7 1 4 1 0 1 2 1-3 1-2 1-1 1 4 1-1 1-7 1-2 1 3 1 1 1-1 1-8 1-2 1 8 1 5 1-4 1-4 1 0 1 3 1 0 1-12 1-6 1 0 1 3 1 10 1-1 1 1 1 1 1 2 1 3 1 0 1 3 1-3 1-5 1-1 1 2 1 5 1-3 1-3 1-2 1-3 1 4 1 1 1 0 1 5 1 5 1-4 1-7 1-7 1 1 1 4 1-4 1 4 1 7 1-1 1-8 1-5 1 3 1 5 1 3 1-5 1-2 1 7 1 8 1-6 1-2 1-3 1 4 1 1 1-2 1 0 1 2 1 1 1 2 1-1 1 1 1-4 1-7 1 5 1-1 1-2 1-1 1-1 1-1 1 1 1 3 1 4 1 3 1 2 1-6 1 2 1 0 1 2 1-7 1-7 1 0 1 7 1 7 1-1 1-8 1 0 1 1 1-5 1 2 1 0 1 8 1 4 1 3 1-5 1-4 1-3 1-1 1-3 1-4 1-2 1 6 1 6 1 9 1 2 1-1 1-7 1-5 1-3 1-4 1 7 1-2 1 0 1 4 1 7 1-2 1-4 1-2 1 0 1 5 1 0 1-3 1-6 1-1 1 1 1-6 1 1 1 0 1 5 1 10 1-2 1 0 1-4 1 1 1 0 1 5 1 2 1-2 1-1 1 0 1-2 1-3 1 2 1 6 1 11 1 3 1-1 1-7 1-4 1 4 1-4 1-6 1-3 1 4 1 4 1 7 1 3 1-3 1-5 1-3 1 2 1 2 1 6 1-5 1-9 1-7 1 4 1 4 1 0 1-2 1 2 1 2 1 3 1 2 1-4 1-1 1-4 1-3 1 4 1 2 1-5 1-2 1 6 1 6 1-5 1-13 1-5 1 5 1 9 1 1 1-7 1 0 1 1 1 0 1-3 1-4 1 4 1 5 1-1 1-1 1-1 1 0 1 0 1-3 1-5 1 3 1 9 1 4 1-2 1-2 1-2 1-4 1-3 1 1 1 8 1 4 1-5 1-7 1-7 1 7 1 17 1 2 1-6 1-6 1 7 1 7 1-6 1-10 1-4 1 4 1 2 1-2 1-3 1 6 1 7 1 1 1-4 1 1 1 3 1 6 1 3 1 3 1-1 1-6 1-5 1-6 1 0 1 2 1-2 1 5 1 1 1-3 1-1 1 2 1 3 1-1 1-3 1 5 1 3 1-7 1-8 1-4 1 5 1 1 1 1 1 4 1 1 1 0 1-3 1-5 1 2 1 2 1-2 1-3 1-1 1 11 1 8 1-4 1-3 1 0 1 1 1-3 1 1 1-4 1 1 1-4 1 3 1-3 1 1 1 1 1-4 1 2 1 1 1 1 1-1 1 3 1-5 1-2 1-6 1-2 1 2 1 5 1 4 1 4 1-2 1-6"/>
<path vector-effect="non-scaling-stroke" d="M0 2042l1-5 1-14 1-2 1 11 1 6 1-1 1-2 1 5 1 2 1-8 1-7 1-3 1 4 1 4 1 6 1 4 1 2 1-8 1-6 1-1 1 2 1 3 1-1 1 4 1-1 1 2 1 0 1 2 1 3 1-4 1-8 1 3 1 4 1 1 1-4 1 1 1 0 1 0 1-1 1 0 1 4 1-2 1-4 1-1 1 6 1 5 1-7 1-9 1 1 1 4 1 2 1 1 1 0 1-2 1 0 1 0 1 2 1 4 1 0 1-5 1-5 1 4 1 4 1-2 1 7 1 5 1 5 1-11 1-8 1 1 1 8 1 8 1-6 1-2 1-2 1 1 1-5 1-6 1 2 1 9 1 5 1-2 1-7 1-3 1 2 1-1 1 0 1 0 1 4 1 0 1-5 1-5 1 8 1 13 1 3 1-10 1-8 1-3 1 5 1 4 1-7 1-7 1 2 1 5 1 0 1 7 1 2 1 4 1-3 1-7 1-3 1 0 1 2 1 1 1-2 1 0 1-1 1 2 1-1 1 3 1 3 1 7 1 6 1-4 1-8 1-1 1 3 1-8 1-13 1-10 1 5 1 6 1 3 1-3 1 1 1 8 1 3 1-1 1 3 1 1 1-1 1-3 1-3 1 8 1 6 1 3 1-7 1 1 1 0 1 4 1 3 1-11 1-10 1-5 1 9 1 13 1 8 1-7 1-11 1-6 1 3 1-4 1-6 1 0 1 11 1 7 1 1 1-3 1-4 1-2 1-5 1-6 1-2 1 1 1 7 1 8 1 3 1 7 1 1 1-4 1-7 1 1 1 6 1-5 1-9 1-1 1-3 1 0 1 0 1 4 1 5 1 4 1-1 1 0 1 0 1 2 1 2 1-7 1-5 1-3 1 0 1 3 1 1 1 0 1 5 1 9 1 7 1 0 1-8 1-1 1 0 1-1 1-3 1-6 1 2 1 1 1-2 1-3 1 2 1 10 1 9 1-4 1-10 1-9 1 7 1 9 1 2 1-3 1-4 1 2 1-5 1-1 1-7 1 2 1 8 1 10 1-1 1-3 1-3 1 3 1 6 1-3 1-5 1-10 1 0 1 2 1-1 1 1 1 4 1 0 1-2 1-4 1-1 1 5 1-6 1-3 1 0 1 6 1 7 1 2 1-2 1-5 1-2 1-1 1 7 1 2 1-3 1-8 1-5 1 1 1 7 1 2 1-4 1-1 1 3 1 4 1 0 1-4 1 4 1 7 1 4 1-3 1-5 1-2 1-3 1-1 1-1 1 4 1 5 1-5 1-8 1-2 1 5 1 7 1-1 1-5 1 4 1 7 1 0 1 0 1-4 1-2 1-3 1-4 1-4 1 3 1 2 1 3 1 7 1 5 1 1 1-8 1-3 1-4 1 6 1 3 1-3 1 4 1 2 1 5 1-1 1-8 1-5 1-1 1-4 1-1 1-2 1 3 1 6 1 6 1 0 1 1 1 0 1-1 1-2 1-5 1-8 1 1 1 1 1-6 1 2 1 0 1 5 1 8 1 0 1-5 1-3 1-5 1 1 1 3 1 7 1 0 1-5 1-1 1 8 1 1 1-2 1-5 1 3 1 6 1-2 1-4 1-6 1 1 1 2 1 1 1 2 1 6 1 4 1-1 1-6 1-3 1 0 1 0 1-5 1 2 1 5 1 2 1-6 1-1 1-3 1 5 1-2 1 1 1 3 1 4 1 3 1-2 1-6 1-3 1 5 1-3 1 3 1-3 1 2 1 0 1-4 1-4 1 2 1 3 1 0 1 2 1-2 1 4 1 4 1 0 1-3 1 2 1 1 1-1 1-6 1 1 1 2 1-2 1-7 1-6 1 6 1 0 1 5 1-2 1 6 1 3 1-4 1-4 1-9 1-4 1-3 1 2 1 7 1 9 1 5 1 0 1 1 1 8M435 2034l1-3 1 4 1 6 1 2 1 3 1-2 1-5 1 2 1-4 1 0 1-1 1-4 1-3 1-1 1 8 1 8 1-3 1-16 1-4 1 3 1 10 1 4 1-6 1-4 1 0 1-1 1 3 1 4 1-5 1-7 1 2 1 7 1 1 1-3 1-3 1 5 1 9 1-4 1-7 1 0 1 11 1 9 1-8 1-7 1 1 1-4 1-3 1 2 1 7 1 6 1-5 1-5 1-3 1 4 1-5 1-7 1 3 1 9 1 8 1 1 1-9 1-4 1-1 1 1 1-1 1 6 1 1 1-2 1-6 1 1 1 8 1 2 1-3 1 4 1 3 1-3 1-5 1-1 1 3 1 4 1 0 1-6 1 3 1 4 1-2 1-7 1 6 1 10 1 2 1-7 1-8 1 1 1 11 1 1 1-9 1-4 1-3 1 3 1 2 1 0 1 6 1 3 1 0 1-7 1 0 1 7 1 5 1-1 1-10 1 0 1 1 1-3 1-2 1-1 1 1 1 1 1 0 1-7 1-1 1 1 1 6 1 1 1 0 1 1 1 1 1-1 1-10 1-3 1 9 1 9 1-4 1-12 1-4 1 2 1 7 1 3 1 3 1 3 1 1 1-4 1-5 1 3 1-1 1 1 1 1 1-1 1-6 1 1 1 2 1 9 1 1 1-4 1-2 1 2 1 2 1 0 1-4 1-4 1 0 1 3 1-2 1-5 1 2 1 1 1 4 1-5 1-1 1 3 1 4 1-2 1-4 1-6 1 4 1 11 1-1 1-5 1-1 1 3 1 9 1-5 1-1 1 0 1 6 1 5 1 1 1 2 1-8 1-3 1-3 1-3 1-4 1-9 1 0 1 7 1 9 1 4 1-1 1-6 1 2 1 3 1-2 1-4 1-7 1-4 1 6 1 7 1 4 1 3 1-1 1 2 1-4 1-4 1 1 1 4 1 6 1-10 1-4 1 2 1 4 1 3 1-7 1-3 1 2 1 0 1 2 1 0 1-1 1-1 1-1 1 1 1-2 1 1 1 0 1 0 1 5 1 0 1-4 1-3 1 7 1 4 1-5 1-4 1-3 1 4 1-2 1-7 1-5 1 14 1 11 1 5 1-5 1-10 1-7 1-2 1 12 1 11 1 4 1-10 1-11 1-4 1-1 1 1 1 0 1 4 1 2 1 1 1 4 1-2 1 6 1-3 1-7 1-5 1-2 1-1 1 1 1 1 1 0 1-4 1-3 1 0 1 6 1 1 1-8 1 5 1 5 1 4 1-3 1-4 1-2 1 3 1 0 1 0 1-2 1 3 1 4 1 8 1-3 1-3 1-11 1-1 1 5 1 8 1 1 1-4 1-1 1 3 1 2 1-4 1 1 1-3 1 8 1 3 1 0 1-2 1-5 1-6 1 0 1 3 1 7 1 2 1 1 1-2 1 1 1-1 1 2 1-1 1-1 1-2 1 0 1-1 1 2 1 5 1-2 1-2 1 1 1-1 1 5 1-2 1-8 1-3 1 6 1 9 1 3 1 0 1-3 1 2 1-1 1-5 1-6 1-5 1 3 1 8 1 3 1-5 1-3 1 1 1 2 1 6 1-2 1 1 1-6 1-2 1-3 1 0 1 4 1-1 1 1 1 1 1 0 1 1 1-7 1-8 1-4 1 3 1 4 1-1 1-1 1 3 1 3 1-2 1 2 1 5 1 6 1-1 1-4 1-1 1-1 1-6 1-3 1-2 1-3 1 1 1-3 1 5 1 2 1 7 1 1 1-5 1 0 1 1 1 3 1 1 1-1 1-9 1-3 1 2 1 8 1 4 1 4 1-4 1 0 1 4 1-5 1-3 1-1 1 3 1 4 1-3 1-4 1-2 1 1 1 3 1-4 1-4 1 2 1 7 1 10 1 0 1-8 1-12 1-4 1 7 1 7 1-2 1-3 1 5 1 5 1 1 1-7 1 2 1 9 1 0 1-2 1-8 1 0 1 7 1-4 1-6 1-7 1 6 1 4 1-1 1-8 1 2 1 4 1 3 1-4 1-1 1 3 1 4 1 1 1-4 1 0 1 6 1 2 1 0 1-2 1-4 1 3 1-1 1-3 1 0 1 0 1-5 1 5 1 6 1 6 1-4 1-11 1-5 1 10 1 7 1-2 1-10 1-4 1 4 1 1 1 2 1-3 1-3 1 2 1 6 1 3 1-6 1-3 1 0 1 9 1 3 1 1 1-5 1-1 1 6 1 2 1 1 1-7 1-3 1-5 1 3 1 8 1 7 1-5 1-8 1-3 1 1 1 4 1 1 1-2 1 3 1 10 1-2 1-13 1-10 1 1 1 5 1 3 1 0 1 3 1-1 1-2 1-4 1-3 1 4 1 3 1 3 1 2 1-3 1-2 1-4 1 1 1-3 1 2 1-1 1 2 1 11 1 4 1-1 1-11 1-5 1-1 1-2 1 1 1 2 1 1 1 2 1 2 1 1 1-7 1-2 1 2 1 10 1 6 1-4 1-6 1-4 1-4 1 0 1 1 1 4 1 5 1-1 1-4 1-5 1 3 1 8 1 3 1-3 1-6 1 0 1 4 1 5 1 2 1-3 1-4 1-5 1-3 1-7 1-3 1 0 1 6 1 13 1 4 1-4 1-1 1-7 1 2 1 4 1 6 1-1 1 0 1 2 1-8 1 1 1 3 1-3 1 1 1-2 1-1 1-5 1 1 1 2 1 2 1 2 1-1 1-6 1 0 1 0 1 4 1-2 1 5 1-2 1-1 1 3 1-4 1 3 1 5 1 5 1 1 1 3 1-3 1 0 1-2 1 3 1 3 1 4 1-4 1-5 1-7 1 0 1-5 1 2 1 10 1 10 1 1 1-8 1-10 1-2 1 3 1 4 1 1 1-5 1 1 1-2 1-3 1 3 1-1 1-6 1-3 1 4 1 8 1 3 1-4 1-4 1 3 1 4 1-1 1-8 1 4 1 4 1 2 1-3 1-3 1-1 1-5 1-2 1-2 1 0 1 2 1 9 1 3 1-1 1-3 1-3 1-1 1-2 1-1 1-1 1 0 1-1 1 4 1 4 1-4 1-2 1 2 1 1 1-1 1-5 1-9 1 3 1 8 1 6 1 3 1-3 1 0 1-5 1-4 1 2 1 9 1 5 1-3 1-1 1 2 1 3 1-3 1-8 1-3 1 1 1 2 1-6 1-1 1 8 1 5 1 0 1-3 1 1 1 0 1 4 1 4 1-6 1-5 1-3 1-6 1 0 1 3 1 8 1 5 1 3 1-3 1 0 1 2 1 6 1 3 1-4 1-7 1-4 1-5 1 1 1 3 1 3 1 4 1-1 1 2 1 0 1-5 1-5 1-2 1 1 1 2 1 3 1 2 1-3 1 5 1 2 1-1 1 3 1 0 1-1 1 0 1 1 1 0 1 6 1 0 1-1 1-4 1-7 1-3 1 0 1 0 1-1 1 4 1 5 1 7 1 0 1-12 1-8 1 0 1 3 1 1 1 3 1-1"/>
<path vector-effect="non-scaling-stroke" d="M0 2110l1-7 1-4 1 4 1 8 1 8 1-3 1 0 1 4 1 2 1-4 1-10 1-2 1-3 1 3 1 5 1 7 1 10 1 4 1-3 1-4 1-5 1-1 1-4 1-1 1 3 1 6 1 0 1-3 1 0 1 0 1 1 1 1 1 4 1-6 1-3 1-1 1 0 1 3 1-4 1 0 1 3 1 3 1 2 1-9 1-5 1-1 1 3 1 7 1-3 1-5 1-1 1 2 1 2 1-2 1-3 1-7 1 3 1 3 1 1 1 0 1-4 1 5 1 7 1 4 1 0 1-6 1-5 1 5 1 6 1 1 1-3 1-6 1-2 1 3 1 2 1 4 1-7 1-8 1-1 1 4 1 9 1-2 1-2 1-5 1 2 1 0 1-1 1-1 1 2 1 2 1-7 1-5 1 4 1 17 1 7 1-9 1-7 1-1 1 6 1 2 1-6 1-6 1-1 1 1 1-1 1 7 1 2 1-1 1-3 1-5 1 0 1 4 1 7 1 4 1-3 1 2 1-5 1 0 1 2 1-4 1 3 1 3 1-2 1-2 1-1 1 9 1 1 1-8 1-10 1-4 1 6 1 2 1-5 1-2 1 2 1 5 1 10 1 2 1 0 1-3 1-9 1-1 1 6 1 2 1 3 1 0 1 3 1-3 1 1 1 0 1 0 1 1 1-11 1-3 1 4 1 10 1 3 1-4 1-2 1 1 1 0 1 0 1-4 1-6 1-2 1 1 1 3 1 6 1 4 1-4 1-6 1-5 1 0 1-2 1 1 1 6 1 13 1 3 1-4 1-4 1-4 1 0 1 0 1-5 1-9 1-2 1 3 1 6 1 2 1-3 1-2 1 5 1 8 1 4 1 0 1-3 1-5 1-3 1-8 1-7 1 0 1 6 1 2 1 1 1 6 1 4 1 5 1-2 1 2 1-1 1 2 1-3 1-2 1-1 1 1 1 0 1-5 1-1 1-7 1 5 1 1 1 5 1 0 1-5 1 0 1 4 1 3 1 3 1-5 1-6 1-1 1-2 1-6 1 5 1 10 1 9 1 3 1 1 1 2 1 5 1-3 1-12 1-10 1 0 1 3 1 4 1-2 1-1 1 8 1 3 1-1 1-10 1-2 1 0 1 5 1 2 1-3 1-2 1-2 1 1 1 8 1 2 1-2 1-6 1-3 1 4 1 6 1 0 1-5 1-9 1-3 1 6 1 3 1-1 1 0 1-4 1 3 1-2 1 2 1 7 1-5 1-2 1 0 1-3 1-2 1 2 1 5 1 7 1 0 1-6 1-9 1-3 1 4 1 5 1-2 1-3 1 2 1 4 1 8 1 1 1-10 1-4 1-3 1-1 1-5 1 3 1 4 1 5 1 2 1 0 1-3 1-5 1 1 1 6 1 2 1-5 1-1 1 3 1 3 1 6 1 3 1 3 1-6 1-4 1-5 1 3 1 4 1 4 1 0 1 1 1 2 1-1 1-4 1-6 1 0 1-3 1 3 1 4 1 2 1-5 1-4 1 1 1 3 1 2 1-1 1-8 1 6 1 0 1 0 1-7 1 0 1-2 1 1 1 6 1 1 1 3 1 1 1 0 1 4 1 3 1-1 1-8 1-6 1-1 1 3 1 4 1 0 1 0 1 1 1 0 1 0 1 4 1 1 1-3 1-6 1-4 1-1 1 9 1 0 1 2 1-2 1 5 1 3 1 0 1-3 1-3 1 2 1 0 1 0 1 4 1 4 1-3 1-5 1-7 1-5 1-7 1-1 1-2 1-1 1 10 1 15 1 9 1-3 1-3 1-4 1-7 1-3 1-5 1 1 1 1 1-1 1-2 1 2 1 2 1 4 1 1 1-2 1-4 1-4 1 1 1 1 1 6 1 1 1-1 1-3 1-6 1-6 1 3 1 2 1 3 1 2 1 2 1-1 1 2M435 2110l1 2 1-1 1-2 1-3 1 5 1 4 1-2 1-8 1 0 1 2 1 5 1 1 1-1 1-2 1-4 1-2 1 6 1 10 1 3 1-8 1-10 1-1 1-3 1 4 1 1 1 3 1 0 1 1 1-5 1-7 1 2 1 2 1 10 1 5 1-3 1-4 1 0 1-2 1 7 1 5 1-1 1-1 1-1 1 5 1 0 1-3 1-3 1-7 1 0 1 7 1 4 1 0 1 0 1 1 1-1 1 3 1-1 1-3 1-6 1-2 1 0 1 1 1 2 1 0 1 0 1-3 1 1 1 1 1 1 1-4 1-1 1-1 1 2 1 3 1-3 1 5 1 6 1 6 1-1 1-10 1-2 1 5 1 4 1-3 1-8 1-3 1 10 1 4 1 0 1-6 1 2 1-2 1-4 1-6 1 5 1 9 1-2 1-4 1 0 1 7 1-3 1-7 1-5 1 6 1 4 1-3 1-3 1 8 1 9 1 1 1-11 1-3 1-7 1-5 1 3 1 5 1-1 1 1 1-3 1 5 1 2 1-1 1-2 1-1 1 2 1-5 1-4 1 4 1 4 1-4 1-6 1 2 1 3 1-2 1-11 1-3 1 5 1 11 1 9 1-1 1-2 1-3 1 1 1-3 1 0 1 2 1-3 1-2 1 3 1 0 1 0 1-4 1 3 1 4 1 7 1 0 1 2 1 2 1-1 1-5 1-5 1-1 1 4 1-1 1-3 1-1 1-1 1 5 1 3 1-1 1-1 1 2 1-4 1-9 1 1 1 5 1 13 1 2 1-6 1-5 1-5 1 5 1 8 1-4 1-1 1-1 1-1 1 10 1 2 1-4 1-11 1-7 1 0 1 4 1-2 1 3 1 3 1 5 1 1 1 4 1-1 1-3 1 0 1-1 1 0 1-2 1 1 1-2 1 0 1 1 1 3 1 6 1-3 1 1 1-3 1-3 1 0 1-6 1 0 1 2 1 9 1 8 1 4 1-5 1-9 1-10 1 3 1 5 1 3 1-2 1 1 1-1 1 2 1-2 1-4 1-3 1-3 1 0 1 0 1 4 1 3 1 9 1 4 1-5 1-12 1-3 1 3 1 5 1-2 1-11 1 0 1 11 1 14 1 1 1-15 1-10 1-1 1 9 1 9 1 1 1-4 1 4 1-4 1-6 1-5 1-1 1 4 1-2 1-5 1-2 1 13 1 9 1-3 1-10 1-2 1 3 1 0 1-3 1-6 1-1 1-2 1-4 1 3 1 3 1 7 1-3 1-5 1 2 1 7 1 8 1-6 1-8 1-1 1 6 1 1 1-6 1-3 1 4 1 4 1 0 1-6 1 0 1 0 1 0 1 1 1 4 1 1 1-3 1 3 1 4 1 1 1-5 1-2 1 9 1 8 1-2 1-9 1-6 1-1 1 2 1 2 1 5 1 4 1 2 1 0 1-1 1-1 1 4 1 5 1 0 1-9 1-5 1-3 1 6 1 7 1 4 1 0 1-9 1 2 1 8 1-1 1-6 1-3 1-1 1 4 1 8 1-3 1 1 1 9 1 2 1-6 1-13 1-6 1 1 1 7 1 0 1-6 1 3 1 6 1-1 1-5 1-2 1 4 1 2 1-2 1-1 1 3 1 5 1 2 1-6 1-6 1 2 1-3 1-4 1-6 1 3 1 2 1-3 1 4 1 0 1 5 1-3 1-4 1-1 1 2 1 5 1 3 1-3 1 0 1 0 1-3 1-5 1-5 1-3 1-7 1 4 1 5 1 2 1-1 1-7 1 0 1 5 1 4 1-2 1 0 1 4 1 4 1-3 1-8 1 6 1 8 1 5 1-5 1-7 1 0 1 3 1 6 1 0 1-3 1-9 1-5 1 0 1 7 1 7 1-4 1-10 1-5 1 8 1 11 1 5 1-1 1-7 1-7 1-1 1 3 1 6 1 0 1-7 1-2 1 3 1 1 1 0 1-1 1 6 1 7 1-1 1-3 1 0 1 1 1-1 1-8 1-2 1 6 1 7 1-2 1-2 1-3 1 5 1 0 1 1 1 0 1-1 1 1 1-2 1-3 1 0 1 8 1 3 1 2 1-3 1-1 1 0 1 8 1 0 1-5 1-5 1-1 1 9 1 7 1 0 1-7 1-10 1-2 1 4 1 5 1 0 1-8 1-2 1 8 1 1 1 0 1-2 1-3 1 3 1-5 1-7 1-5 1 3 1 9 1 3 1 5 1 0 1-6 1 0 1 2 1 4 1-5 1-10 1-5 1 3 1 12 1 4 1 0 1 1 1-5 1-2 1-2 1 4 1-1 1-4 1-2 1 1 1 2 1-4 1-6 1 2 1 9 1 3 1-3 1-1 1-2 1-2 1-5 1-5 1 5 1 10 1 6 1-2 1-4 1-2 1-10 1-2 1 4 1 7 1-1 1-1 1 0 1 1 1 2 1 1 1 2 1 0 1 0 1-7 1-5 1 5 1 5 1-1 1-5 1-4 1 3 1-3 1 0 1 6 1 3 1 6 1 1 1-1 1 0 1-4 1 0 1-3 1-3 1-2 1-2 1 4 1 6 1-1 1-7 1-13 1 5 1 6 1 6 1 4 1-1 1 0 1-5 1-2 1-7 1 3 1 1 1-2 1 7 1 6 1 1 1-8 1-9 1-2 1 7 1 8 1 1 1 2 1-4 1 0 1 0 1 6 1 1 1 0 1-1 1-10 1-3 1 7 1 7 1-2 1-5 1 0 1 0 1 6 1 5 1 4 1-2 1-7 1-8 1-5 1 2 1 7 1 7 1 3 1-2 1-2 1 4 1 4 1 2 1-2 1-6 1-1 1 7 1 0 1-8 1-9 1-4 1 7 1 3 1 4 1 3 1 0 1 3 1-5 1-3 1 0 1 0 1-3 1-1 1-4 1-1 1 4 1 1 1 0 1-1 1-1 1 5 1 3 1 0 1-4 1-1 1-3 1 1 1 5 1 1 1 1 1-3 1 0 1 2 1 1 1-5 1-9 1-3 1-2 1 3 1 9 1 5 1 1 1-2 1-3 1-6 1-4 1-2 1 0 1-2 1 4 1 10 1 6 1-2 1-9 1-3 1 4 1 7 1-1 1-15 1-7 1 4 1 12 1 7 1-1 1 1 1 0 1-9 1-8 1-5 1 11 1 10 1 3 1-4 1-1 1 5 1-6 1-3 1-6 1 1 1 6 1 2 1-6 1-2 1 2 1 4 1-1 1-5 1 0 1 3 1 8 1 6 1-3 1-4 1-7 1-2 1 2 1 2 1 5 1-1 1 0 1 1 1 3 1 1 1-1 1-1 1 2 1 0 1-5 1-4 1-6 1 9 1 2 1 1 1 1 1 8 1 6 1-8 1-7 1-5 1 6 1 6 1-10 1-4 1 2 1 8 1 6 1-2 1-2 1 1 1 1 1-1 1 1 1 2 1 0 1-6 1-10 1 2 1-1 1-2 1-5 1-1 1 6 1 6 1 5 1-2 1-4 1-4 1-1 1-5"/>
<path vector-effect="non-scaling-stroke" d="M0 2186l1 2 1-6 1-2 1 11 1 10 1 0 1-7 1-2 1 3 1 1 1-3 1-3 1 0 1 0 1 0 1 0 1 4 1 3 1-3 1-5 1 2 1 5 1 4 1 1 1-5 1 2 1 1 1 1 1-7 1-4 1 2 1 4 1 3 1 3 1-1 1-7 1-4 1-1 1-2 1 1 1 1 1 5 1 7 1-8 1-1 1-4 1 4 1-1 1-3 1-1 1 4 1 2 1-5 1-4 1-3 1 3 1 2 1 4 1-1 1-2 1-3 1 0 1-1 1 3 1 1 1 1 1-1 1-2 1 5 1 2 1 7 1 0 1-2 1-2 1-4 1 0 1 1 1-4 1-2 1-1 1 1 1 4 1 2 1-7 1-4 1-3 1 5 1 8 1 1 1 1 1-6 1-2 1-2 1 7 1 7 1 1 1-2 1-6 1 0 1-3 1-1 1-3 1 3 1 0 1 1 1 0 1 4 1 9 1-2 1-11 1-7 1 7 1 8 1-1 1-7 1 0 1 3 1 4 1-1 1-1 1 3 1 0 1 1 1-2 1-1 1 6 1 1 1-1 1-4 1-11 1-4 1 2 1 1 1 1 1 0 1 2 1 9 1 4 1 0 1-4 1 3 1 3 1-1 1-6 1 1 1 6 1 1 1-8 1-1 1 6 1 2 1-1 1-6 1 4 1 5 1 4 1-4 1-3 1-1 1-1 1-4 1-9 1-5 1 4 1 4 1 6 1 1 1-1 1 0 1-3 1-4 1-5 1-6 1 2 1 5 1 10 1 4 1 1 1 4 1-7 1-7 1-2 1 4 1 0 1-6 1-5 1 5 1 5 1 7 1-13 1-4 1 4 1 7 1 1 1 0 1-3 1-5 1-2 1-5 1 6 1 4 1 4 1-5 1-1 1 7 1 7 1-2 1-4 1-4 1 2 1 3 1-3 1 0 1 2 1 0 1-7 1-2 1 3 1 1 1 5 1 4 1 5 1-1 1-4 1-4 1 2 1 3 1 0 1-7 1-5 1-6 1 0 1 1 1 5 1 12 1 5 1 2 1-4 1 3 1 3 1-8 1-6 1-5 1-4 1 5 1 4 1-1 1 0 1 2 1-1 1-1 1-8 1-3 1-1 1-2 1-2 1 2 1 5 1 5 1 6 1 3 1-1 1-5 1-4 1 1 1 5 1 1 1-5 1-3 1 4 1 3 1 2 1-1 1 3 1 4 1-2 1-7 1-3 1 8 1 9 1 1 1-3 1-3 1 4 1-1 1-9 1-4 1-3 1 4 1 2 1 5 1 2 1 0 1-2 1-3 1 3 1-3 1 2 1 1 1 5 1-3 1-11 1-7 1 0 1 3 1-1 1 1 1 5 1 5 1-1 1-8 1-9 1 4 1 4 1 7 1-2 1 2 1 2 1 0 1 5 1 0 1 0 1-7 1-4 1-6 1 2 1 2 1 3 1 4 1-1 1-1 1 0 1 4 1 2 1-3 1-5 1-3 1 3 1 0 1-5 1-1 1-3 1 0 1 1 1 3 1 2 1-4 1-7 1-1 1 7 1 7 1 3 1 1 1-1 1-2 1-3 1 1 1 3 1 7 1 1 1-5 1-6 1-1 1 0 1 6 1 4 1 2 1 3 1 1 1 2 1-4 1-1 1 0 1-5 1-9 1-5 1 4 1 12 1 4 1-2 1-6 1 4 1 4 1 2 1-2 1-2 1-3 1 0 1 2 1 1 1 2 1-3 1-4 1-7 1-5 1 0 1-1 1 1 1 7 1 5 1 2 1-5 1-5 1 5 1 8 1 1 1-6 1-8 1-6 1 2 1 3 1 6 1 2 1-3 1-7 1-5 1 0 1 2 1 4 1 2 1 0 1 3 1 5 1-4 1-5 1 2 1 2 1-1 1-1 1 2 1 3 1 2 1-1 1-2M435 2189l1-1 1 0 1-4 1-5 1 8 1 6 1 0 1-4 1 1 1 0 1-6 1 4 1 1 1 3 1 0 1-6 1 3 1 4 1 3 1-1 1 2 1 5 1 4 1-15 1-14 1-5 1 5 1 8 1 5 1-1 1-5 1-1 1 0 1 2 1-2 1 1 1-2 1-1 1-1 1-1 1-1 1 9 1 8 1-2 1-6 1-1 1 10 1 7 1-4 1-8 1-6 1-1 1 1 1 4 1 2 1 6 1-2 1-7 1-4 1 4 1 7 1-1 1-3 1-3 1 3 1 1 1-1 1-4 1 0 1-1 1 1 1 2 1 2 1-4 1 1 1 2 1 0 1 0 1-6 1 7 1 5 1 2 1-5 1 3 1 3 1 1 1-5 1-10 1 5 1-1 1 0 1-5 1 0 1 4 1 8 1 2 1 1 1 2 1 4 1 3 1-6 1-9 1-4 1 9 1-3 1-5 1-9 1 2 1 9 1 3 1 5 1-4 1 5 1 0 1-11 1-8 1 4 1 7 1 4 1-2 1-2 1 0 1-5 1-8 1-5 1 2 1 7 1 3 1 2 1-1 1 1 1-2 1-7 1 3 1 6 1 3 1-2 1-15 1-4 1 7 1 9 1 5 1-5 1 0 1 6 1 0 1-2 1 0 1-3 1 1 1 0 1-1 1 0 1-4 1-2 1 6 1 7 1 6 1-3 1-7 1 1 1 5 1 1 1-3 1-8 1 1 1 4 1-1 1-6 1 0 1 3 1 2 1 0 1-4 1-3 1-3 1 1 1-2 1 7 1 10 1 1 1-11 1-5 1 0 1 10 1 3 1 4 1 7 1 2 1-2 1-6 1-5 1 3 1-1 1-2 1-8 1-1 1-1 1 4 1 8 1-2 1-5 1-6 1 4 1 7 1 5 1-1 1-2 1-1 1-3 1-4 1-2 1 2 1 6 1 3 1-2 1 4 1-1 1-5 1-3 1 0 1-3 1-6 1-4 1 7 1 11 1 3 1-8 1-9 1 2 1 8 1 11 1 0 1-2 1-6 1-8 1-3 1 5 1 6 1-3 1-5 1-3 1 1 1 8 1-3 1 0 1 2 1 5 1 0 1-6 1-1 1-4 1 3 1 7 1 5 1-3 1-8 1-9 1-5 1 9 1 10 1 11 1-1 1-1 1-5 1-6 1-2 1-5 1 0 1-4 1 1 1 2 1 9 1 4 1-3 1-9 1-3 1 4 1-2 1-4 1-5 1 5 1 8 1-5 1-2 1 1 1 4 1 2 1 1 1-4 1 1 1 2 1-1 1-1 1-5 1 1 1 1 1 0 1 3 1 3 1 0 1-3 1-5 1 6 1 0 1 3 1 4 1-2 1-4 1-2 1-3 1 1 1 3 1 4 1 2 1 4 1-3 1 2 1-2 1-4 1-4 1-3 1 1 1 3 1 5 1 0 1 2 1 0 1-1 1 1 1 0 1 3 1 2 1-5 1-3 1 3 1 4 1 0 1 0 1-7 1 2 1-2 1 5 1 5 1-2 1 1 1-2 1 0 1 0 1-3 1 3 1 1 1 4 1-2 1-6 1-2 1-3 1-2 1 1 1 6 1 9 1 2 1-6 1-6 1-2 1 2 1-3 1-1 1-3 1 3 1 3 1-2 1-1 1 1 1-2 1-1 1-3 1-5 1-9 1 1 1 4 1 8 1 3 1 1 1 1 1 0 1-2 1-2 1 2 1 3 1 3 1 2 1-4 1-3 1-7 1 2 1 3 1-1 1-2 1-5 1 4 1 0 1 6 1-7 1 0 1 3 1 8 1 4 1-2 1-8 1-9 1 1 1 8 1 8 1 2 1-3 1-8 1-4 1 1 1-3 1 1 1 8 1 0 1-3 1 0 1 6 1 8 1-1 1-7 1-12 1-4 1 9 1 10 1 4 1-7 1-5 1 3 1 10 1 1 1-11 1-10 1 2 1 8 1 3 1-5 1 1 1 3 1 4 1 1 1-2 1-1 1 4 1-4 1-5 1 0 1 5 1 8 1 0 1-3 1-4 1-1 1-2 1-2 1-1 1 1 1 3 1 0 1-2 1 4 1 4 1 5 1 0 1-7 1-3 1 0 1-2 1 3 1 3 1 1 1 0 1-4 1 2 1 0 1-2 1-7 1-4 1 6 1 6 1-3 1-9 1-3 1 9 1 8 1-6 1-7 1 2 1 11 1 1 1-7 1-9 1-4 1 4 1 7 1 3 1 0 1-7 1 2 1 8 1 0 1-4 1-11 1-1 1 10 1 2 1 1 1 5 1 0 1-5 1-3 1 1 1 7 1 0 1-8 1-5 1 3 1 5 1 0 1-3 1-4 1 7 1 7 1-3 1-5 1 1 1-5 1-8 1-7 1 6 1 11 1 8 1-1 1-4 1-4 1-5 1-3 1 0 1 6 1 9 1 6 1-3 1-3 1-3 1-1 1-4 1-2 1 1 1 3 1-5 1-1 1-4 1 3 1 5 1-3 1-2 1 1 1-1 1 5 1 3 1-1 1-2 1-2 1 1 1-1 1-3 1 2 1 4 1 3 1 2 1-4 1-3 1-1 1 2 1 0 1 3 1 5 1 5 1-3 1-7 1 1 1-3 1-1 1-3 1-2 1 6 1 9 1 3 1 4 1-5 1-13 1-7 1 0 1 11 1 1 1-1 1-1 1 6 1 2 1-5 1-11 1 7 1 10 1 5 1-8 1-6 1-1 1 3 1 5 1-9 1 3 1 1 1-1 1-1 1 7 1 6 1-2 1-5 1 0 1 2 1 2 1 1 1 0 1 0 1 0 1-7 1-1 1-1 1 2 1 7 1 3 1 0 1-1 1-6 1-11 1-5 1 1 1 7 1 9 1 9 1-2 1-10 1-6 1 4 1 2 1-1 1-7 1-4 1-3 1 2 1 2 1 8 1 2 1-6 1-11 1 0 1 15 1 8 1-4 1-12 1 1 1 9 1 2 1-5 1-7 1 2 1-2 1 7 1-5 1-1 1 2 1-6 1-3 1-3 1 2 1 9 1 2 1 4 1-2 1-7 1 1 1 0 1 2 1-4 1-3 1 0 1 4 1 1 1-1 1 4 1 13 1 3 1-5 1-12 1-3 1 2 1 1 1-3 1 6 1 8 1 1 1-7 1-15 1 3 1 15 1 16 1-1 1-8 1-3 1-3 1-6 1-5 1 0 1 11 1 4 1-12 1-8 1 2 1 9 1 4 1-4 1-1 1 0 1 6 1 3 1 1 1 1 1-3 1-8 1-6 1 7 1 9 1 3 1-3 1-5 1 1 1-1 1-1 1 2 1 7 1 4 1-4 1-8 1-4 1 2 1-3 1 5 1 1 1 3 1-2 1-2 1-8 1 2 1 1 1 1 1 4 1-5 1 2 1 0 1 6 1 4 1-2 1-4 1-1 1 0 1 2 1-1 1 1 1 1 1-1 1-10 1-4 1 0 1 1 1-1 1 0 1 7 1 4 1 1 1-1 1-2"/>
<path vector-effect="non-scaling-stroke" d="M0 2267l1-9 1-8 1 20 1 34 1 1 1-40 1-43 1 6 1 31 1 24 1-6 1-11 1 12 1 11 1 6 1-17 1-28 1-24 1-6 1 34 1 56 1 36 1-26 1-64 1-46 1 8 1 47 1 33 1-2 1-21 1-5 1 4 1 11 1-12 1-29 1-10 1 16 1 33 1 16 1-11 1-22 1-5 1 0 1 6 1-3 1 0 1 2 1-1 1-3 1-1 1 11 1 19 1 5 1-15 1-32 1-21 1 9 1 26 1 22 1 8 1-5 1-9 1-7 1-21 1-12 1 8 1 28 1 22 1-7 1-20 1-8 1 0 1 7 1-3 1-11 1 6 1 17 1 9 1-6 1-26 1-11 1 6 1 19 1 14 1-8 1-15 1-12 1 10 1 16 1 8 1-13 1-13 1 2 1 10 1 4 1-12 1-10 1 11 1 18 1 5 1-16 1-19 1 5 1 11 1 6 1-9 1-7 1 2 1 8 1 12 1 1 1-8 1-14 1-7 1 10 1 23 1-1 1-21 1-17 1 13 1 39 1 14 1-31 1-43 1-14 1 25 1 40 1 13 1-11 1-15 1-11 1-10 1-7 1 5 1 10 1 21 1 11 1-8 1-23 1-10 1 8 1 12 1 6 1-7 1-5 1 4 1 6 1 0 1-12 1-9 1 13 1 20 1 3 1-21 1-23 1-12 1 15 1 20 1 17 1-8 1-12 1-8 1 2 1 2 1-6 1-10 1-1 1 8 1 13 1 14 1 7 1-6 1-23 1-6 1 7 1 13 1-4 1-18 1-10 1 23 1 34 1 12 1-21 1-35 1-16 1 10 1 22 1 7 1-4 1-5 1 3 1 2 1-10 1-11 1-3 1 17 1 8 1 7 1-4 1-4 1 0 1-11 1-13 1 8 1 25 1 9 1-15 1-18 1 2 1 23 1 15 1-8 1-23 1-10 1-2 1 2 1 7 1 17 1 19 1-2 1-28 1-29 1-7 1 15 1 24 1 4 1 4 1 5 1 4 1-17 1-27 1-14 1 20 1 24 1 3 1-10 1-8 1 14 1 8 1-13 1-9 1 6 1 13 1-11 1-29 1-3 1 39 1 32 1-6 1-44 1-36 1 19 1 47 1 22 1-26 1-42 1-10 1 30 1 35 1 1 1-30 1-25 1 7 1 20 1 8 1-11 1-16 1 2 1 20 1 22 1 0 1-28 1-34 1-5 1 31 1 39 1 1 1-31 1-32 1 9 1 32 1 21 1-8 1-21 1-10 1 7 1 11 1-2 1 3 1-1 1-9 1-11 1-1 1 19 1 25 1-8 1-35 1-18 1 16 1 31 1 5 1-25 1-20 1 2 1 21 1 8 1-9 1-7 1 2 1 12 1-1 1-8 1-11 1 2 1 10 1 9 1 1 1-10 1-6 1-1 1 5 1 6 1 8 1-2 1-6 1-16 1-5 1 10 1 13 1 13 1-3 1-11 1-8 1-9 1-7 1 1 1 14 1 12 1-1 1-15 1-10 1 11 1 10 1-4 1-7 1-5 1 1 1 0 1 0 1 1 1 6 1 10 1 0 1-8 1-15 1-6 1 16 1 28 1 15 1-18 1-35 1-21 1 9 1 31 1 27 1 5 1-20 1-26 1-12 1 17 1 28 1 17 1-25 1-36 1-5 1 37 1 39 1-11 1-40 1-25 1 13 1 39 1 19 1 0 1-25 1-22 1-5 1 3 1 14 1 13 1 4 1-6 1-11 1-13 1-1 1 6 1 3 1 2 1 1 1 4 1 5 1-10 1-20 1-16 1 9 1 32 1 29 1 2 1-21 1-39 1-18 1 14 1 27 1 14 1-9 1-14 1 10 1 8 1-10 1-25 1-10 1 12 1 14 1 8 1 5 1 6 1-6 1-18 1-24 1 4 1 30 1 29 1 0 1-23M435 2290l1 19 1-17 1-40 1-26 1 9 1 24 1 16 1-14 1-8 1 14 1 25 1 12 1-29 1-36 1-16 1 9 1 27 1 26 1 24 1 10 1-27 1-50 1-38 1 19 1 59 1 35 1-14 1-43 1-18 1 22 1 25 1-12 1-30 1-7 1 21 1 26 1 7 1-14 1-13 1-11 1-9 1-11 1 8 1 31 1 30 1-2 1-39 1-34 1 4 1 41 1 28 1 0 1-34 1-29 1-9 1 21 1 29 1 30 1 0 1-34 1-36 1-14 1 28 1 36 1 11 1-20 1-21 1-2 1 14 1 10 1-5 1-19 1-4 1 5 1 11 1 10 1 0 1-6 1-12 1-2 1 1 1 3 1 7 1 0 1-4 1 0 1 0 1 5 1-2 1-8 1 5 1 10 1-5 1-21 1-13 1 15 1 40 1 11 1-27 1-39 1-4 1 13 1 13 1 8 1 8 1 5 1-10 1-17 1-5 1 24 1 18 1-11 1-25 1-12 1 24 1 25 1-4 1-24 1-14 1 4 1 16 1 6 1-4 1 0 1 1 1-9 1-19 1-3 1 29 1 30 1-13 1-44 1-31 1 20 1 40 1 19 1-8 1-12 1 2 1-6 1-30 1-30 1 13 1 55 1 48 1-7 1-62 1-55 1-1 1 59 1 49 1 4 1-32 1-28 1-8 1 1 1 0 1 7 1 24 1 16 1 0 1-23 1-24 1-1 1 16 1 17 1 5 1-17 1-13 1 6 1 23 1 12 1-21 1-34 1-2 1 36 1 33 1-9 1-44 1-29 1 21 1 44 1 19 1-25 1-39 1-5 1 21 1-8 1 2 1 15 1 11 1-8 1-11 1 7 1 21 1 2 1-30 1-36 1 13 1 46 1 36 1-15 1-53 1-31 1 12 1 37 1 17 1-11 1-12 1 3 1 20 1 5 1-24 1-31 1-13 1 29 1 44 1 18 1-7 1-25 1-21 1-11 1-9 1 9 1 21 1 26 1 9 1-14 1-28 1-17 1 7 1 24 1 6 1-22 1-26 1 6 1 37 1 36 1-5 1-38 1-27 1-7 1 10 1 11 1 13 1 19 1 13 1-14 1-29 1-20 1 12 1 21 1 1 1-20 1-13 1 16 1 24 1 8 1-12 1-14 1-11 1-12 1-6 1 12 1 27 1 29 1 6 1-17 1-39 1-28 1-7 1 25 1 40 1 23 1-11 1-33 1-23 1 2 1 15 1 15 1-3 1-16 1-12 1 10 1 24 1-1 1-12 1-14 1 8 1 18 1-5 1-27 1-9 1 24 1 42 1 14 1-33 1-48 1-18 1 14 1 41 1 25 1 0 1-19 1-11 1-1 1-5 1-8 1-12 1 9 1 22 1 22 1 1 1-19 1-18 1-8 1 4 1 17 1 12 1 3 1-9 1-11 1-2 1 6 1 11 1 7 1-10 1-12 1-7 1 6 1 14 1 7 1 2 1-4 1-7 1-8 1-10 1 3 1 11 1 20 1 5 1-10 1-9 1-4 1 1 1 7 1 8 1-4 1-12 1-6 1 5 1 11 1 3 1-5 1 0 1 1 1-3 1-11 1-3 1 15 1 8 1-14 1-25 1-5 1 25 1 32 1 12 1-20 1-20 1-16 1 1 1 4 1 5 1 3 1 0 1-2 1 0 1 8 1 3 1-7 1-19 1-9 1 5 1 17 1 10 1 2 1-2 1-16 1-12 1-9 1 5 1 21 1 18 1 7 1-3 1-9 1-25 1-16 1 3 1 16 1 13 1-1 1-3 1 6 1 7 1-1 1-16 1-19 1-3 1 21 1 25 1 4 1-17 1-14 1-1 1 17 1 5 1-25 1-20 1 12 1 43 1 22 1-20 1-38 1-19 1 14 1 22 1 11 1-10 1-12 1-3 1 9 1 16 1-3 1-10 1-6 1-1 1 7 1 0 1-9 1-1 1 9 1 11 1 5 1-6 1-7 1-5 1-15 1-10 1 8 1 29 1 31 1 5 1-28 1-49 1-22 1 23 1 44 1 29 1-12 1-34 1-20 1 6 1 13 1 6 1-1 1 4 1 1 1-5 1-11 1 2 1 11 1 14 1 1 1-16 1-10 1-6 1 9 1 11 1 14 1 7 1-15 1-21 1-12 1 15 1 30 1 10 1-26 1-31 1-4 1 26 1 31 1 1 1-24 1-26 1 4 1 24 1 11 1-15 1-22 1 0 1 31 1 23 1-2 1-32 1-31 1-4 1 17 1 22 1 24 1 6 1-11 1-30 1-28 1 5 1 34 1 25 1-2 1-18 1-22 1 3 1 8 1 15 1 9 1-10 1-16 1-10 1 3 1 13 1 7 1 1 1-2 1 4 1-2 1-5 1-16 1-12 1-1 1 13 1 18 1 9 1 4 1-6 1-11 1-7 1-11 1 1 1 14 1 14 1 5 1-17 1-15 1 0 1 14 1 13 1-4 1-8 1-4 1 2 1 2 1-4 1 1 1 1 1-1 1-8 1-8 1 4 1 17 1 4 1-6 1-10 1 2 1 7 1 4 1-12 1-13 1 3 1 13 1 7 1-10 1-5 1 9 1 20 1 7 1-19 1-28 1-19 1 7 1 28 1 24 1 8 1-8 1-20 1-22 1-8 1 2 1 9 1 16 1 7 1 1 1-4 1 1 1 0 1 0 1-11 1-23 1-3 1 26 1 42 1 17 1-28 1-50 1-19 1 29 1 40 1 2 1-32 1-29 1 23 1 45 1 17 1-37 1-60 1-15 1 45 1 50 1 9 1-32 1-26 1 4 1 25 1 9 1-11 1-8 1-1 1 5 1-7 1 1 1 17 1 25 1 3 1-36 1-39 1-5 1 25 1 35 1 12 1-7 1-13 1-7 1-11 1-10 1 0 1 13 1 13 1-8 1-9 1 1 1 16 1 8 1-9 1-14 1-7 1 9 1 8 1 0 1-2 1-2 1 6 1 3 1-5 1-8 1-6 1 2 1 5 1 0 1 7 1 15 1 8 1-12 1-28 1-26 1-5 1 19 1 31 1 19 1-7 1-12 1-11 1 9 1-3 1-18 1-21 1 6 1 43 1 31 1-9 1-47 1-34 1 8 1 40 1 30 1-3 1-34 1-24 1 7 1 19 1 8 1-10 1-6 1 10 1 12 1-1 1-13 1-1 1 8 1 1 1-20 1-10 1 19 1 30 1-1 1-25 1-16 1 7 1 24 1 3 1-15 1-13 1-8 1 8 1 14 1 9 1 6 1-12 1-16 1-1 1 12 1 11 1 6 1-13 1-18 1-6 1 13 1 15 1 1 1-17 1-13 1 12 1 21 1 15 1-15 1-25 1-17 1 7 1 20 1 15 1 0 1-18 1-14 1-5 1 18 1 13 1 3 1-13 1-14 1 4 1 11 1 6 1-8 1-10 1 1 1 11 1 19 1 1 1-10 1-21 1-14 1 9 1 31 1 22 1-4 1-21 1-21 1-2 1 0 1-11 1-7 1 21"/>
<path vector-effect="non-scaling-stroke" d="M0 2347l1-6 1-5 1 10 1 17 1-4 1-14 1-14 1 8 1 11 1 7 1-6 1-6 1 0 1 8 1 6 1-2 1-7 1-12 1-5 1 7 1 21 1 11 1-8 1-22 1-8 1 4 1 15 1 5 1-1 1-9 1 2 1 6 1 3 1-3 1-10 1 0 1 4 1 11 1 0 1-10 1-5 1 2 1 1 1-2 1-4 1 3 1 0 1 0 1-2 1-2 1 2 1 3 1 4 1-7 1-14 1-13 1 5 1 10 1 9 1 4 1-3 1 1 1 4 1-9 1-5 1 4 1 10 1 6 1-3 1-6 1-1 1 0 1-1 1 2 1 1 1 3 1 2 1-3 1-4 1-6 1-4 1 1 1 7 1 6 1 1 1-6 1-6 1-2 1 6 1 1 1-2 1-2 1-2 1 5 1 3 1-5 1-8 1 2 1 6 1 7 1-8 1-5 1-2 1 10 1 6 1-4 1-7 1 0 1 5 1 5 1 4 1-1 1-3 1-5 1 1 1 8 1 0 1-8 1-10 1 7 1 14 1 7 1-10 1-17 1-4 1 11 1 17 1-1 1-3 1-6 1-7 1-7 1-3 1 4 1 9 1 5 1 1 1-3 1-8 1-3 1 5 1 10 1 0 1-6 1 0 1 7 1 8 1-5 1-5 1 0 1 4 1 7 1-4 1-7 1-13 1-1 1 1 1 9 1 10 1-1 1-4 1-4 1 1 1-3 1-3 1-2 1-2 1 2 1 11 1 9 1 5 1-5 1-12 1-6 1 2 1 6 1 0 1-8 1-3 1 5 1 15 1 7 1-3 1-13 1-11 1-1 1 5 1 4 1 1 1-4 1-2 1 6 1-3 1-4 1-2 1 7 1 0 1-2 1 0 1-3 1 2 1-5 1-2 1 4 1 9 1 4 1-9 1-7 1 2 1 8 1 2 1-1 1-7 1 1 1-1 1 0 1-1 1 3 1 7 1 3 1-9 1-13 1-2 1 9 1 13 1 3 1-4 1 0 1 7 1-6 1-13 1-9 1 5 1 12 1 6 1-5 1-4 1 7 1 3 1-1 1-6 1 2 1 1 1-3 1-11 1-4 1 17 1 11 1-2 1-16 1-16 1 5 1 19 1 3 1-6 1-15 1-3 1 9 1 12 1 7 1-6 1-8 1-2 1 6 1 4 1-2 1-3 1 0 1 6 1 9 1 0 1-12 1-13 1-3 1 13 1 10 1-1 1-7 1-11 1 4 1 8 1 11 1-5 1-6 1-4 1 3 1 1 1 2 1-1 1 2 1-5 1-4 1 3 1 7 1 9 1-10 1-10 1-4 1 7 1 9 1 0 1-9 1-10 1 7 1 4 1-4 1-3 1 2 1 5 1 4 1 3 1-7 1-4 1-2 1 3 1 3 1 1 1-3 1-3 1 6 1 3 1 2 1-2 1-8 1 0 1-2 1 1 1 8 1 7 1 3 1-5 1-2 1-5 1-8 1-2 1 4 1 4 1 6 1-2 1-4 1 0 1 2 1 0 1-1 1-5 1-5 1 1 1-4 1 1 1 8 1 7 1 1 1 1 1-8 1-2 1-2 1 4 1 7 1 9 1-3 1-14 1-12 1 5 1 16 1 10 1 1 1-14 1-9 1-5 1 6 1 15 1 10 1-10 1-16 1-7 1 12 1 18 1-5 1-14 1-9 1 7 1 17 1 7 1-1 1-11 1-8 1-4 1 4 1 4 1 4 1-1 1 3 1 0 1-3 1-5 1-2 1-1 1 4 1 2 1 2 1 3 1-6 1-10 1-7 1 7 1 14 1 14 1 2 1-11 1-13 1-9 1 6 1 12 1 4 1-5 1-8 1-2 1 1 1-2 1-11 1-6 1 5 1 5 1 2 1 2 1 3 1-1 1-7 1-9 1 2 1 16 1 8 1 2 1-6M435 2332l1 2 1 8 1 10 1 7 1-8 1-15 1-10 1 6 1 9 1 4 1-5 1-2 1 4 1 7 1 6 1-9 1-13 1-9 1 4 1 12 1 9 1 7 1 6 1-7 1-19 1-18 1 8 1 24 1 16 1-12 1-19 1-7 1 11 1 9 1-5 1-10 1-2 1 6 1 9 1-3 1-7 1-11 1 4 1 4 1-4 1 2 1 7 1 15 1 2 1-10 1-16 1 2 1 19 1 15 1-6 1-17 1-15 1 2 1 10 1 13 1 10 1-3 1-11 1-14 1-6 1 7 1 12 1 7 1-3 1-9 1 1 1 2 1 5 1 1 1-8 1-3 1 1 1 9 1 4 1-1 1-6 1-3 1-1 1 3 1 2 1 0 1 2 1 0 1-4 1 1 1-1 1 3 1-5 1 2 1 7 1-3 1-6 1-5 1 7 1 17 1 5 1-14 1-17 1-1 1 7 1 3 1 2 1-1 1 6 1 0 1-6 1-4 1 8 1 5 1-5 1-11 1 0 1 7 1 9 1 0 1-10 1-7 1-2 1 5 1 1 1 2 1 0 1 1 1-8 1-12 1 0 1 14 1 12 1-3 1-15 1-13 1 7 1 16 1 9 1-6 1-7 1 2 1-2 1-12 1-11 1 1 1 22 1 19 1-5 1-17 1-16 1 1 1 17 1 17 1-3 1-13 1-5 1 2 1-1 1-5 1 1 1 11 1 9 1 0 1-8 1-12 1 3 1 9 1 2 1 1 1-5 1-7 1 3 1 8 1 2 1-8 1-10 1 0 1 9 1 14 1-6 1-14 1-12 1 7 1 16 1 9 1-8 1-13 1-2 1 9 1 3 1 1 1 3 1 1 1-4 1-5 1 4 1 7 1 2 1-12 1-10 1 4 1 16 1 13 1-7 1-20 1-11 1 5 1 12 1 10 1-3 1-4 1 1 1 3 1 2 1-5 1-15 1-4 1 11 1 17 1 8 1 0 1-14 1-3 1-4 1-6 1 3 1 7 1 12 1 4 1-8 1-5 1-4 1 2 1 0 1 2 1-4 1-8 1 2 1 16 1 11 1-1 1-16 1-13 1-1 1 5 1 5 1 1 1 10 1 5 1-1 1-14 1-9 1 4 1 6 1 2 1-9 1-4 1 6 1 7 1 2 1-2 1 0 1-4 1-8 1-8 1 7 1 14 1 18 1 3 1-13 1-15 1-8 1-2 1 4 1 10 1 10 1-6 1-11 1-7 1 0 1 5 1 5 1 0 1-4 1-4 1-1 1 6 1 0 1-2 1-6 1 5 1 0 1-4 1-6 1-5 1 12 1 16 1 1 1-9 1-19 1-6 1 7 1 16 1 9 1-1 1-5 1-4 1 2 1-1 1-7 1-6 1 0 1 13 1 9 1 2 1-4 1-3 1-5 1 1 1 4 1 6 1 4 1-2 1-3 1-3 1 1 1 4 1 5 1-4 1-1 1-2 1 0 1 4 1 0 1-1 1-1 1 1 1 1 1-7 1-4 1 5 1 8 1 6 1 1 1-5 1-2 1 0 1 1 1 1 1 0 1-9 1-7 1 6 1 9 1 4 1-3 1-3 1 1 1-2 1-4 1-6 1 3 1 6 1-3 1-10 1-10 1 11 1 20 1 5 1-9 1-6 1-9 1-2 1 0 1-1 1 2 1 2 1-2 1-2 1 4 1 5 1-6 1-8 1-2 1 3 1 3 1 2 1 0 1-2 1 0 1-2 1-5 1 7 1 7 1 4 1 2 1 0 1 0 1-7 1-13 1-3 1 4 1 7 1 3 1 0 1 4 1 3 1-3 1-10 1-10 1 1 1 16 1 8 1 2 1-9 1-6 1-2 1 3 1 4 1-2 1-6 1 3 1 13 1 9 1-8 1-14 1-5 1 6 1 7 1 0 1-2 1-2 1 1 1 7 1 2 1-5 1-3 1 0 1 1 1 5 1-2 1-7 1 0 1 5 1 8 1 0 1-5 1-4 1-6 1-5 1-1 1 3 1 13 1 11 1 2 1-9 1-20 1-8 1 11 1 18 1 12 1-4 1-10 1-12 1 3 1 4 1 4 1-3 1 1 1 0 1 0 1-8 1-1 1 5 1 5 1 3 1-4 1 2 1-4 1 7 1 4 1 10 1 1 1-10 1-12 1-1 1 5 1 17 1-3 1-15 1-15 1 1 1 13 1 8 1-5 1-10 1-3 1 1 1 7 1 3 1-4 1-13 1-2 1 12 1 15 1-2 1-11 1-15 1-1 1 8 1 11 1 4 1 1 1 0 1-14 1-15 1 2 1 15 1 12 1 4 1-7 1-9 1-4 1 5 1 6 1 4 1-1 1-8 1-2 1 4 1 6 1 0 1-1 1 1 1 0 1-2 1-5 1-3 1-3 1-1 1 4 1 3 1 6 1 1 1-2 1-3 1-5 1-2 1-3 1 6 1 5 1-2 1-4 1-5 1 2 1 9 1 0 1-4 1-5 1 0 1 2 1 1 1-5 1-2 1 7 1 3 1-3 1-9 1 2 1 6 1 3 1-1 1-1 1 3 1 2 1 0 1-6 1-5 1 2 1 10 1 5 1-4 1-2 1 5 1 8 1 2 1-7 1-12 1-5 1 7 1 11 1 7 1 0 1-5 1-7 1-12 1-2 1 2 1 5 1 8 1 1 1 2 1-1 1 3 1 0 1-1 1-8 1-7 1-5 1 6 1 14 1 5 1-6 1-16 1-6 1 11 1 14 1-1 1-14 1-11 1 5 1 18 1 9 1-14 1-23 1-8 1 18 1 19 1 5 1-8 1-14 1-4 1 11 1 5 1 2 1-3 1-1 1 0 1-1 1 0 1 5 1 5 1 2 1-7 1-17 1-3 1 7 1 8 1 9 1-2 1-1 1-1 1-6 1-8 1-4 1 10 1 7 1-3 1-10 1 5 1 5 1 5 1 0 1-6 1-6 1 2 1-1 1 1 1 2 1 2 1 0 1 0 1-2 1-2 1 1 1 2 1 2 1 0 1 2 1 1 1 2 1-9 1-10 1-10 1 1 1 6 1 13 1 8 1-2 1-1 1 0 1-2 1 2 1-12 1-10 1 5 1 19 1 11 1-6 1-15 1-9 1 4 1 10 1 13 1 1 1-8 1-17 1-1 1 7 1 6 1-3 1-5 1 7 1 13 1-3 1-14 1-6 1 6 1 5 1-7 1-6 1 13 1 10 1-2 1-10 1-6 1 6 1 5 1 0 1-6 1-3 1-3 1-3 1 4 1 9 1 2 1-2 1 1 1-2 1 3 1 1 1 0 1-2 1-6 1-5 1-5 1 9 1 9 1-3 1-8 1 1 1 14 1 7 1-6 1-9 1-12 1 2 1 7 1 4 1 5 1-3 1-4 1-2 1 3 1 4 1 0 1-4 1-4 1 3 1 2 1 0 1 2 1 1 1-3 1-1 1 0 1 4 1 5 1-4 1-10 1-1 1 10 1 12 1 1 1-11 1-17 1-5 1 4"/>
<path vector-effect="non-scaling-stroke" d="M0 2427l1-5 1-9 1 5 1 12 1 4 1-13 1-13 1 3 1 11 1 7 1 0 1-3 1 1 1-3 1 0 1-1 1-1 1-3 1-3 1 9 1 13 1 7 1-7 1-17 1-7 1 5 1 9 1 5 1-2 1-7 1-3 1-1 1 0 1 1 1-7 1 0 1 7 1 5 1 2 1-3 1-8 1 4 1-2 1-1 1-4 1 0 1 0 1-1 1-1 1-3 1 7 1 5 1 3 1-6 1-7 1-3 1 5 1 7 1 5 1 2 1-3 1 1 1 3 1-5 1-3 1 3 1 1 1 5 1-3 1-4 1 0 1-1 1 2 1 2 1 1 1 1 1-1 1-4 1-1 1-7 1 0 1 1 1 3 1 5 1 3 1-3 1-9 1 0 1 4 1 5 1-3 1-7 1 2 1 8 1 2 1-10 1-8 1 3 1 8 1 4 1-8 1-5 1 4 1 6 1 0 1-6 1-5 1 4 1 7 1-1 1 3 1 0 1-1 1-1 1 3 1 1 1 3 1-7 1-5 1 5 1 7 1 5 1-13 1-12 1 0 1 11 1 11 1-3 1-9 1-7 1-3 1-2 1 0 1 3 1 8 1 8 1 1 1-5 1-3 1-1 1 5 1 3 1 0 1-1 1 3 1 1 1 2 1 2 1-6 1 1 1 2 1 5 1-1 1-4 1-7 1 1 1 5 1 2 1 4 1-2 1-8 1-4 1-4 1 4 1 2 1-3 1-2 1 0 1 4 1 3 1 3 1-1 1-3 1-7 1 1 1 7 1 2 1-4 1-4 1 3 1 15 1 5 1-8 1-10 1-4 1-1 1 3 1 3 1 2 1 0 1-3 1 3 1-3 1-1 1-2 1 1 1 3 1-2 1 1 1 5 1 0 1-7 1-7 1 3 1 14 1 5 1-6 1-9 1-6 1 7 1 4 1-2 1-4 1-1 1 4 1-3 1-5 1 6 1 6 1 1 1-8 1-10 1 0 1 9 1 5 1 4 1 0 1 1 1 6 1-3 1-9 1-5 1 2 1 7 1 2 1-5 1 2 1 4 1 3 1-6 1-4 1 2 1 4 1-5 1-10 1 0 1 9 1 8 1-7 1-14 1-8 1 8 1 17 1 4 1-5 1-10 1-11 1-1 1 12 1 9 1-3 1-11 1-4 1 5 1 7 1 6 1-4 1 0 1 2 1 5 1-1 1-7 1-8 1-6 1 3 1 11 1 4 1-4 1-3 1 1 1 8 1 4 1-3 1-5 1-1 1 4 1-1 1 1 1-4 1 1 1 1 1-3 1 0 1 8 1 6 1-2 1-7 1-4 1 0 1 3 1-3 1-8 1 1 1 3 1 1 1 0 1-2 1-2 1 6 1 1 1 2 1-5 1-4 1 3 1 6 1 6 1 0 1-7 1 1 1 3 1 7 1 5 1-3 1-7 1-7 1-3 1 1 1 4 1 7 1-1 1-1 1-2 1-2 1-6 1-5 1 5 1 5 1 6 1-7 1-1 1 0 1 3 1-1 1-5 1 0 1 3 1 3 1-10 1-3 1 1 1 11 1 6 1-2 1-3 1-5 1 2 1 2 1 4 1 4 1 0 1-9 1-7 1-3 1 14 1 7 1 2 1-9 1-6 1-2 1 6 1 10 1 0 1-10 1-10 1-3 1 15 1 13 1-4 1-10 1-11 1 10 1 7 1 6 1-3 1-4 1-6 1-3 1-1 1 2 1 8 1 1 1-1 1-8 1-1 1 6 1-2 1 0 1 2 1 0 1 2 1-5 1-6 1-6 1-5 1 10 1 6 1 7 1 2 1-9 1-5 1-5 1 2 1 6 1 3 1-5 1-1 1 1 1-1 1-4 1-9 1-2 1 3 1 3 1-4 1 2 1 3 1 6 1 0 1 0 1 1 1 5 1 1 1-4 1 2M435 2425l1-1 1-6 1-5 1 1 1 8 1 9 1 2 1-9 1-8 1-6 1 4 1 7 1 2 1-1 1 0 1 2 1 0 1 0 1-7 1-7 1-1 1 1 1 9 1 8 1 3 1 0 1-5 1-7 1-8 1 2 1 13 1 12 1-4 1-16 1-9 1 4 1 11 1-1 1-6 1-2 1 5 1 9 1-5 1-5 1-3 1 1 1 1 1-6 1 4 1 3 1 10 1 2 1-8 1-8 1-4 1 8 1 9 1 1 1-11 1-9 1 0 1 4 1 10 1 8 1 1 1-3 1-14 1-3 1-1 1 11 1 5 1-7 1-5 1-1 1 5 1-1 1-4 1-3 1 3 1 2 1 8 1 5 1-2 1-5 1-5 1 1 1 4 1 4 1 1 1 6 1-1 1-5 1-3 1 1 1 4 1-1 1-1 1-1 1 3 1-1 1-8 1 0 1 11 1 1 1-5 1-13 1-2 1 8 1 8 1-1 1-1 1-1 1-2 1-4 1-3 1 6 1 5 1 0 1-7 1-3 1 4 1 7 1-3 1-5 1-2 1 3 1 2 1 1 1-3 1 4 1 0 1-9 1-5 1-3 1 12 1 10 1-9 1-15 1-10 1 11 1 10 1 0 1 0 1 3 1 2 1-1 1-11 1-13 1 4 1 14 1 15 1-4 1-12 1-7 1 3 1 10 1 7 1 0 1-8 1-1 1 1 1-4 1-4 1 1 1 10 1 9 1-2 1-5 1-5 1 1 1 4 1 7 1-4 1-1 1 0 1 3 1 6 1-4 1-7 1-9 1-1 1 9 1 3 1-3 1-9 1-5 1 7 1 10 1 5 1-5 1-12 1 0 1 8 1-2 1 6 1-2 1-4 1 0 1 2 1 3 1-1 1 0 1-6 1-6 1 4 1 11 1 5 1-3 1-10 1-8 1 1 1 6 1 4 1 1 1-3 1-2 1 6 1 6 1 2 1-12 1-4 1 3 1 11 1 5 1 0 1-5 1-10 1-3 1-2 1 2 1 11 1 6 1-2 1-3 1-2 1 0 1-3 1-2 1-1 1-2 1-4 1-1 1 8 1 11 1-4 1-10 1-11 1 5 1 5 1 7 1 1 1 3 1 5 1-1 1-10 1-9 1 2 1 9 1 5 1-7 1-7 1 2 1 4 1 6 1 4 1-2 1-2 1-10 1-5 1 5 1 9 1 8 1-2 1-5 1-6 1-5 1-1 1 3 1 7 1 7 1-3 1-13 1-10 1 3 1 5 1 2 1 3 1-3 1-7 1 0 1 2 1 1 1-3 1-5 1 6 1 8 1-4 1-11 1-2 1 12 1 15 1-5 1-11 1-9 1 2 1 7 1 11 1 4 1 1 1-2 1-5 1-5 1 3 1 1 1-7 1-2 1 5 1 12 1 2 1-4 1-6 1 0 1-7 1 2 1 4 1 7 1-6 1-2 1-2 1 1 1 10 1 0 1 0 1 0 1 1 1-5 1 1 1 4 1 4 1-2 1 1 1-1 1-3 1-5 1 2 1 7 1 5 1 1 1-5 1-5 1-5 1 4 1 2 1-3 1-4 1 1 1 2 1 1 1 1 1-4 1 2 1 6 1 1 1-5 1-3 1-1 1 2 1 0 1-9 1 1 1 8 1 12 1 0 1-8 1-7 1-9 1-1 1 3 1-3 1 5 1 2 1-1 1-2 1 0 1 5 1-1 1-6 1-5 1 0 1 3 1 5 1-1 1 3 1 1 1-3 1-3 1-1 1 4 1 10 1 0 1 3 1-8 1-5 1-4 1-4 1-1 1-2 1 6 1 1 1 8 1 2 1-5 1-10 1-2 1 0 1 3 1 5 1-1 1-2 1-5 1 2 1 5 1 6 1 1 1-5 1-4 1 12 1 6 1-5 1-6 1 1 1 0 1 2 1 2 1-1 1 3 1 0 1 0 1-1 1-1 1-1 1 0 1 3 1 7 1-4 1-4 1-2 1 1 1 6 1 1 1-1 1 0 1-4 1-8 1-4 1 7 1 7 1 8 1-5 1-4 1-8 1-3 1 2 1 11 1 11 1-3 1-11 1-10 1 4 1 7 1-1 1-3 1 0 1 2 1 0 1-5 1 1 1 1 1 8 1-2 1-1 1-3 1 3 1 2 1 1 1 6 1 2 1-2 1-9 1-2 1 4 1 11 1-2 1-9 1-9 1-2 1 10 1 4 1-4 1-7 1-6 1 1 1 7 1 5 1-2 1-6 1-4 1 5 1 13 1-2 1-11 1-12 1-4 1 6 1 5 1 3 1 4 1-2 1-5 1-12 1 2 1 9 1 6 1-1 1-5 1-1 1-4 1-1 1 3 1 4 1 1 1 2 1-2 1-1 1 6 1 2 1 0 1 0 1-1 1 4 1-2 1 1 1-8 1-7 1 1 1 7 1 4 1 6 1-1 1-2 1 4 1-3 1-6 1 3 1 2 1-1 1-1 1-2 1 6 1 6 1-2 1-6 1 2 1 1 1 1 1-4 1 1 1-3 1 1 1-3 1-4 1-2 1-1 1 0 1 4 1 5 1 1 1-2 1-1 1-3 1-3 1 0 1 3 1 5 1-3 1-4 1 1 1 6 1 3 1 1 1-3 1-4 1-1 1 0 1 6 1 3 1 1 1-7 1-6 1-3 1-1 1-3 1 0 1 6 1 0 1 2 1-3 1 2 1 1 1 3 1 1 1-3 1-5 1 3 1 12 1 1 1-5 1-12 1-3 1 5 1 9 1 3 1-11 1-8 1 2 1 11 1 7 1-11 1-13 1-4 1 12 1 15 1 4 1-10 1-8 1 4 1 6 1 5 1 2 1 0 1-2 1 1 1-2 1 4 1 5 1 5 1-2 1-10 1-6 1-1 1 5 1 7 1 1 1-1 1 1 1 0 1-5 1-3 1-3 1 6 1 8 1-2 1-7 1-4 1 3 1 0 1 1 1-1 1-3 1 0 1-5 1 5 1 3 1 1 1-1 1 1 1-1 1-4 1-1 1-1 1 3 1 2 1 7 1-1 1-5 1-3 1-5 1-5 1-4 1-1 1 8 1 5 1 0 1 0 1 3 1 2 1-7 1-10 1-15 1 1 1 20 1 5 1-2 1-11 1-1 1 3 1 8 1 10 1-2 1-5 1-11 1-3 1 7 1 5 1-5 1-1 1 6 1 11 1 3 1-9 1-9 1 0 1 2 1-6 1-3 1 7 1 11 1 2 1-10 1-5 1 3 1 8 1-4 1-6 1-6 1 2 1 6 1 4 1 2 1 1 1-2 1 0 1 3 1 4 1 0 1-5 1-4 1-2 1 0 1-1 1 5 1 2 1-1 1-2 1 0 1 2 1 4 1-2 1-5 1-5 1 1 1 2 1 1 1 4 1-1 1-3 1 4 1-2 1 1 1 0 1-1 1-3 1 2 1 0 1 0 1 4 1 1 1 2 1-2 1 0 1 3 1 8 1-1 1-4 1-2 1 9 1 7 1-2 1-8"/>
<path vector-effect="non-scaling-stroke" d="M0 2496l1 0 1-5 1 0 1 5 1 4 1 3 1-1 1-5 1-6 1-1 1 6 1 2 1-4 1-2 1 1 1 3 1 3 1-2 1 1 1-3 1-8 1-2 1 5 1 9 1 3 1 0 1 1 1 3 1 6 1-5 1-5 1-5 1-1 1-2 1 5 1 3 1 1 1-2 1-5 1 3 1 4 1 2 1-4 1-2 1 0 1-1 1 1 1 2 1 0 1 0 1-1 1-1 1-2 1-4 1-5 1 8 1 11 1 5 1-5 1-7 1 0 1 0 1 2 1 2 1-1 1-1 1 0 1-6 1 1 1 0 1 2 1 3 1 0 1 4 1-8 1-2 1-1 1 0 1 2 1 0 1-1 1 3 1 3 1-4 1-4 1-1 1 3 1 5 1-1 1-9 1-3 1-6 1 2 1 7 1 7 1 0 1-7 1-9 1-2 1 0 1 2 1 1 1 4 1 4 1 1 1-3 1 3 1 10 1 0 1-3 1-6 1 4 1 5 1 2 1-2 1-5 1-4 1-1 1-1 1 5 1 4 1 5 1-1 1-1 1 2 1 5 1-2 1-10 1-10 1 0 1 5 1 0 1-7 1-6 1 3 1 12 1 9 1 4 1 2 1 2 1-4 1-5 1 0 1-1 1-3 1-5 1-2 1 6 1 3 1 1 1 0 1-2 1-3 1-7 1-2 1 6 1 6 1-1 1-6 1-6 1 4 1-2 1 0 1-1 1 9 1 8 1-2 1-8 1-1 1-2 1-1 1 0 1 1 1 6 1 4 1 3 1-1 1 6 1 6 1-8 1-8 1-6 1 0 1-3 1-4 1 3 1 5 1 2 1-2 1 1 1 0 1 4 1-1 1-5 1-2 1-1 1 0 1 1 1-8 1-2 1 2 1 6 1 0 1 5 1 2 1-4 1 4 1 4 1 4 1 0 1-4 1-3 1-10 1 0 1 7 1 3 1 0 1-6 1 2 1 3 1 14 1 0 1-8 1-5 1 6 1 5 1 1 1-10 1-6 1-1 1 9 1-5 1-8 1 2 1 8 1 9 1 2 1-1 1-4 1 5 1 3 1-4 1-10 1-2 1-1 1 1 1 5 1-4 1-2 1 0 1 1 1 2 1 2 1-9 1-6 1 1 1 4 1 9 1 1 1 4 1 1 1 1 1 0 1 4 1-1 1-3 1-7 1-6 1-1 1-3 1 0 1 4 1 5 1 5 1-3 1 0 1 0 1-4 1 1 1 0 1-3 1-4 1-2 1 1 1 6 1 2 1 2 1-1 1-2 1 0 1-1 1-3 1 1 1 0 1 1 1 3 1 4 1 2 1-3 1-6 1 3 1-4 1 0 1-6 1-2 1 0 1 2 1 7 1 3 1 1 1-4 1-1 1 1 1 4 1-2 1-4 1-4 1 3 1 7 1 8 1-3 1 0 1-2 1-1 1 1 1-1 1-3 1-3 1-2 1 3 1 5 1 2 1 0 1-5 1-4 1-6 1-1 1 6 1 6 1-2 1-10 1-6 1 3 1 9 1 3 1-5 1-5 1 1 1 1 1-3 1-1 1-1 1 6 1 7 1 0 1-3 1-2 1 2 1 5 1-2 1-3 1-5 1-4 1-2 1 4 1 3 1 7 1 0 1-3 1 5 1 3 1-2 1 0 1 5 1-1 1-1 1-5 1 1 1 7 1-3 1-4 1-5 1 6 1 10 1 4 1-6 1-7 1 0 1 5 1 3 1-2 1-5 1-5 1-3 1-6 1 0 1 2 1 6 1 3 1 4 1 4 1 1 1 3 1-5 1-2 1 2 1 0 1-1 1-6 1-3 1 0 1 3 1 1 1 1 1-1 1-3 1-2 1 3 1 3 1-1 1-2 1-3 1 2 1 3 1-3 1-5 1-3 1 3 1-1 1-4 1 3 1 7 1 2 1-6M435 2505l1-10 1-9 1 10 1 5 1-7 1-4 1 5 1 7 1 5 1-3 1-1 1 0 1-3 1-4 1 2 1 3 1 1 1-4 1 3 1-1 1 1 1 0 1-2 1 3 1-1 1-10 1-2 1 5 1 11 1 5 1-2 1-1 1 1 1 2 1-8 1-5 1-3 1-1 1 0 1 1 1 3 1-1 1 1 1-6 1-2 1 3 1 3 1 4 1-2 1-1 1-4 1-2 1-4 1 1 1-1 1 2 1 1 1 4 1 4 1 4 1-2 1-5 1-7 1 4 1 7 1-2 1 6 1-1 1 2 1-4 1-5 1 0 1 3 1 2 1 0 1-1 1 0 1 1 1-8 1-2 1-2 1 3 1 0 1-3 1-1 1 6 1 0 1-8 1-4 1 3 1 12 1 8 1-1 1-10 1-5 1 6 1 12 1 0 1-9 1-10 1-5 1 8 1 9 1 9 1 1 1-5 1-4 1-3 1-1 1 3 1 3 1-2 1 1 1-5 1-7 1-1 1 5 1 1 1 2 1 2 1 1 1 6 1 7 1 5 1 1 1-5 1-8 1-11 1 0 1 7 1 1 1-2 1 0 1 10 1 4 1-8 1-7 1 0 1 11 1 4 1-6 1-9 1-1 1 4 1 0 1-1 1-4 1 3 1-7 1-3 1 0 1 8 1 4 1 5 1-1 1-3 1-4 1-9 1-8 1-2 1 3 1 8 1 6 1-2 1-2 1 2 1 0 1-2 1 0 1-2 1 4 1 3 1 2 1 0 1-1 1-1 1-1 1-2 1 1 1 1 1-1 1 1 1 2 1 1 1 0 1 0 1 3 1-1 1-8 1-5 1 3 1 6 1 6 1-6 1-2 1 1 1-12 1 1 1 6 1 9 1 4 1-4 1-4 1-5 1-3 1-4 1-3 1-10 1 3 1 1 1 5 1 1 1-4 1 1 1 4 1 1 1-1 1-2 1 1 1-5 1 2 1 3 1 2 1-2 1-2 1 13 1 8 1 4 1-9 1-7 1 2 1 4 1-2 1-6 1 4 1 9 1 4 1-5 1-4 1 1 1 3 1 4 1 6 1 0 1 3 1-2 1-5 1-1 1-1 1-2 1 6 1 1 1 2 1-7 1-7 1 9 1 8 1 4 1-2 1-2 1 1 1 0 1-3 1-1 1-6 1 5 1 3 1 8 1 3 1-12 1-9 1 2 1 7 1 5 1-1 1 1 1-1 1 2 1-5 1-5 1 0 1-4 1-7 1-2 1 4 1 2 1-2 1-3 1-1 1 4 1-1 1-2 1-5 1-1 1 1 1-8 1-3 1 3 1 6 1 5 1 6 1 2 1 4 1 2 1-1 1-3 1 2 1 0 1-2 1-2 1-1 1-2 1 5 1 3 1 1 1-9 1-5 1 1 1 8 1 2 1-5 1-4 1-3 1 4 1 1 1 4 1-5 1 3 1 0 1 4 1 4 1 3 1 0 1-7 1-4 1 3 1 7 1 0 1-1 1-3 1-1 1 3 1 4 1 4 1 4 1-1 1-2 1-4 1-1 1-1 1 0 1-3 1-5 1-1 1 4 1 6 1-3 1 3 1 2 1 2 1-3 1-5 1 2 1 2 1 5 1-14 1-11 1-4 1 6 1 11 1 1 1-3 1-3 1-1 1-6 1-2 1 3 1 6 1 0 1-2 1 0 1 6 1 0 1 0 1 1 1-6 1-6 1-3 1-5 1-6 1-6 1-1 1 11 1 10 1 5 1-3 1 2 1 0 1 6 1 5 1-7 1-3 1 0 1-5 1 3 1-1 1-3 1-3 1 3 1 3 1 0 1-8 1-7 1 4 1 8 1 10 1 4 1-3 1-6 1-3 1 3 1 9 1 2 1-5 1-4 1 3 1 4 1 1 1-8 1-4 1 1 1 6 1 3 1-1 1 0 1-4 1 2 1 2 1 1 1 0 1-5 1-4 1 1 1 5 1 7 1-3 1-4 1-2 1 0 1 1 1 6 1 0 1-3 1 0 1 1 1 1 1-8 1-7 1 2 1 6 1 4 1 1 1-4 1 10 1-2 1-12 1-13 1-2 1 11 1 5 1-5 1-8 1 3 1 8 1 4 1-2 1 2 1-1 1-4 1-3 1 5 1 5 1 4 1-1 1-2 1-2 1 3 1 2 1 0 1 0 1-1 1 1 1-1 1-2 1 1 1-2 1-9 1 2 1 5 1 7 1-4 1-5 1-10 1 3 1 5 1-2 1-5 1-6 1 9 1 9 1 0 1-12 1-2 1 8 1 9 1 3 1-8 1-1 1 5 1-3 1-3 1-6 1 4 1 1 1-2 1-4 1 7 1 11 1 3 1-10 1-5 1 2 1 10 1 4 1-11 1-5 1 4 1 1 1-2 1 1 1 2 1 8 1-4 1-5 1-3 1 1 1 2 1-1 1-4 1 0 1-1 1-3 1 3 1 9 1 3 1-5 1-9 1-6 1 6 1 4 1 3 1 2 1 5 1-1 1-5 1-5 1-4 1 6 1 6 1 3 1-1 1-3 1-7 1-4 1 0 1 5 1 2 1 0 1-5 1-2 1 0 1 5 1 9 1-2 1-3 1-2 1 5 1 2 1 0 1-2 1-1 1-1 1-3 1-7 1 0 1 8 1 12 1 9 1 4 1-1 1-6 1-7 1-3 1-3 1-1 1 3 1 7 1 4 1 0 1-10 1-6 1-5 1-8 1 2 1 4 1 9 1 6 1-3 1-4 1-2 1 3 1-3 1-5 1-1 1 1 1-2 1 0 1 5 1-2 1-7 1-5 1 4 1 10 1 9 1-10 1-2 1 0 1 5 1-1 1-8 1-3 1 3 1 3 1 4 1 9 1 2 1 1 1-2 1-1 1 1 1 1 1-1 1-2 1-3 1-1 1-6 1 2 1 4 1 4 1 3 1-4 1-1 1-6 1-9 1 1 1 7 1 0 1 0 1-2 1 0 1 7 1-1 1-3 1-7 1-3 1 2 1 8 1 3 1-1 1-8 1-3 1 7 1 4 1-1 1-8 1-1 1 5 1 6 1 0 1-3 1-8 1-1 1 0 1 4 1 2 1-2 1 1 1 0 1 4 1 8 1-2 1-8 1-1 1-5 1-1 1 2 1 1 1-4 1 3 1 3 1 5 1 0 1-1 1-1 1-4 1-3 1 0 1 2 1 10 1 2 1-8 1-10 1-1 1 7 1 9 1 10 1 1 1-3 1-2 1-1 1 2 1-2 1-11 1-2 1-2 1 6 1 6 1-2 1-4 1 1 1-2 1-2 1 1 1 8 1 4 1-1 1-6 1-5 1 2 1 0 1 7 1 1 1 1 1 1 1 3 1 1 1-4 1 1 1-1 1 0 1-3 1-6 1-5 1 0 1 1 1-1 1 2 1 3 1 3 1 1 1-2 1 4 1-4 1-8 1 0 1 3 1 6 1 3 1-2 1 1 1 6 1 0 1-4 1-2 1-4 1 1 1-1 1 13 1 1"/>
<path vector-effect="non-scaling-stroke" d="M0 2581l1-11 1-7 1 2 1 10 1 7 1 0 1-3 1-3 1-6 1-3 1-1 1-2 1 1 1 1 1 4 1 7 1 4 1-1 1 4 1-3 1-5 1-6 1-1 1 3 1-1 1 1 1 1 1 7 1 6 1-1 1-2 1-9 1-2 1-3 1 0 1 3 1 4 1-1 1 2 1 3 1 0 1 3 1 1 1-4 1-4 1-6 1 4 1 3 1-2 1-1 1-12 1 5 1 3 1-1 1 1 1 3 1 7 1 1 1-7 1 0 1 0 1 1 1-2 1-6 1-3 1 5 1 7 1-2 1-4 1-1 1 5 1 2 1 6 1-5 1 3 1-1 1-1 1-2 1-3 1 7 1 1 1 1 1-2 1-2 1-8 1-5 1 0 1 5 1 3 1-2 1-2 1-4 1-2 1 8 1 7 1 4 1-5 1-9 1-6 1-3 1 3 1-4 1 2 1 4 1 4 1 2 1-3 1 2 1 2 1-2 1-5 1 1 1 8 1 6 1 2 1-3 1-4 1-1 1 5 1 3 1-1 1 5 1 1 1-4 1-2 1 5 1 3 1-3 1-7 1-11 1-2 1 3 1-2 1 0 1-2 1 6 1 9 1 3 1 0 1-6 1-4 1 1 1-1 1 1 1 5 1 5 1 2 1-4 1-3 1 1 1-1 1-4 1-5 1 1 1 2 1 4 1 5 1-2 1-6 1-9 1 0 1 1 1 0 1 0 1 2 1 5 1-3 1-3 1-8 1 4 1 7 1 1 1-5 1-2 1 6 1 8 1 6 1-2 1-1 1-5 1-4 1-1 1 2 1-3 1-3 1 0 1 1 1 3 1 3 1 3 1 4 1-6 1-6 1 3 1 4 1 2 1-4 1-8 1-3 1-1 1 2 1-1 1 7 1 4 1 6 1 0 1 1 1 0 1 6 1 6 1-4 1-7 1-3 1 2 1 0 1 1 1-5 1-4 1 1 1 11 1 5 1 1 1 1 1-6 1-6 1 2 1 2 1 2 1-3 1-5 1-5 1 3 1-1 1-1 1 5 1 7 1 2 1-2 1 1 1-2 1-5 1-6 1-8 1-1 1 8 1 3 1 0 1-1 1 0 1-2 1-4 1 4 1-3 1-3 1 0 1-2 1 7 1 4 1 4 1-1 1-3 1-2 1 4 1 7 1-1 1-8 1-10 1-3 1 3 1 6 1 3 1 1 1 2 1-1 1 1 1-5 1-3 1-1 1-2 1 4 1 4 1 3 1-1 1-1 1-6 1-1 1 0 1-1 1 8 1-1 1 0 1 3 1 5 1-2 1-3 1-1 1 8 1 2 1-8 1-5 1-5 1-1 1 0 1-4 1 2 1 3 1 4 1-4 1-6 1 3 1 1 1 1 1 1 1 2 1 2 1-4 1-3 1 3 1 10 1 6 1-1 1 1 1-2 1-4 1-6 1-2 1-2 1 2 1-4 1 4 1 7 1 8 1 1 1-4 1-8 1-2 1-4 1 3 1-2 1-2 1-7 1 0 1 5 1 2 1 2 1-4 1-1 1 2 1 8 1 0 1 0 1-7 1-3 1 1 1 5 1 3 1 1 1-3 1 5 1-2 1 1 1-1 1-3 1-2 1 1 1 2 1 4 1 3 1-1 1 2 1-1 1-3 1-4 1 3 1 0 1-2 1-2 1 4 1 2 1-1 1-1 1-2 1 5 1 5 1-3 1-5 1-1 1 3 1 3 1-1 1-2 1-2 1-6 1-2 1 5 1 5 1 3 1-5 1-7 1 6 1 10 1 6 1-6 1-6 1-1 1 1 1-3 1-9 1 0 1 9 1 7 1-3 1-9 1-1 1 4 1 7 1-6 1-8 1 4 1 4 1 5 1-3 1-3 1-3 1-2 1-3 1 0 1 4 1-1 1 4 1 4 1 6 1 3 1-2M435 2574l1-3 1 4 1 5 1 0 1-5 1-3 1 3 1 3 1-1 1-4 1 0 1 9 1-1 1-2 1-8 1-4 1 0 1 6 1 7 1 1 1 4 1-3 1-2 1-2 1 1 1 5 1-2 1-3 1-2 1 3 1 1 1-5 1 0 1 4 1 1 1 6 1-3 1-2 1-1 1 3 1-5 1-5 1 3 1 3 1-2 1-5 1 0 1 4 1-1 1-2 1 2 1-1 1 1 1-3 1 0 1-3 1 3 1-4 1 2 1-1 1 6 1 6 1 2 1-8 1-5 1-1 1 0 1 5 1 4 1-1 1 1 1-1 1-1 1 0 1 1 1 0 1-5 1-6 1 0 1 9 1 2 1-3 1-12 1-5 1 4 1 3 1-2 1-2 1-1 1 4 1-5 1-4 1-5 1 4 1 9 1 9 1-3 1-7 1-1 1 3 1 2 1-2 1 0 1 0 1 7 1 0 1 3 1-4 1 0 1-2 1 2 1 2 1 3 1 0 1-2 1-3 1 1 1 2 1 1 1-3 1-9 1 2 1 6 1 8 1 4 1-1 1 1 1 3 1-1 1-7 1-13 1-2 1 6 1 9 1 3 1 4 1 0 1-3 1-2 1-7 1-1 1 5 1-1 1 2 1 2 1-1 1 1 1-4 1 1 1 3 1 5 1-3 1-5 1-4 1 4 1 2 1 3 1-2 1-2 1-2 1 2 1 0 1-6 1-2 1 1 1 4 1 0 1-2 1-4 1 5 1 1 1-5 1-3 1-1 1 4 1 3 1 5 1 2 1 2 1-2 1-2 1 3 1 4 1 0 1-3 1-4 1-6 1 0 1-1 1 0 1 2 1 0 1 1 1 5 1 5 1-2 1-7 1 1 1 4 1 0 1-7 1-1 1 4 1 2 1-1 1 0 1-3 1 2 1-3 1-3 1-8 1-4 1 2 1 6 1 5 1 1 1-1 1-1 1 1 1 2 1-1 1-1 1 6 1-6 1-4 1-3 1 2 1 2 1-2 1 5 1 1 1 3 1 2 1-5 1 0 1 1 1 0 1-3 1-4 1-1 1 5 1 4 1 1 1-6 1-4 1 3 1 3 1 4 1-1 1 3 1 2 1-7 1-8 1 4 1 3 1 1 1 3 1 4 1 7 1 6 1-2 1-11 1-6 1 0 1 3 1-1 1-6 1-3 1 5 1 16 1 9 1-8 1-16 1-3 1 7 1 12 1 2 1-5 1-2 1 1 1-5 1-6 1 6 1 3 1 2 1-4 1-5 1-2 1 4 1 3 1-1 1-1 1-3 1-6 1-1 1-1 1 4 1 4 1-4 1-3 1-3 1 6 1 5 1 4 1-2 1 2 1 4 1 3 1 0 1-7 1 2 1 8 1-1 1-12 1-7 1 0 1 3 1-3 1-2 1 1 1 8 1 2 1 0 1-2 1-2 1 3 1-2 1 3 1 5 1-1 1-6 1-4 1 3 1 7 1-3 1-5 1-3 1 1 1 4 1 3 1 7 1 3 1-1 1-6 1 0 1 7 1 5 1-4 1-3 1-2 1-3 1-7 1-1 1 0 1 6 1 0 1 0 1 4 1 0 1-2 1-6 1 7 1 8 1-5 1-10 1-1 1 1 1 0 1-9 1 0 1 1 1 7 1-1 1-3 1 0 1 1 1 2 1-4 1-1 1 3 1 6 1-4 1-1 1-1 1-2 1-4 1-3 1 0 1 3 1 2 1 4 1 2 1-4 1-8 1-4 1 4 1 9 1 5 1-7 1-6 1 2 1 1 1 2 1-1 1 3 1 4 1 3 1-2 1 0 1-1 1-6 1 2 1-2 1-4 1 1 1 2 1 3 1 4 1 6 1 4 1-1 1-3 1-6 1-6 1-4 1 6 1 2 1 6 1 4 1-2 1 0 1-3 1-6 1 0 1 0 1 9 1 2 1-1 1-5 1-5 1 6 1 4 1-2 1-5 1-2 1 6 1 9 1 7 1-2 1-6 1-6 1 1 1 3 1-2 1-9 1 0 1 4 1 3 1-1 1-1 1-1 1 0 1-6 1-4 1 7 1 7 1 4 1-9 1-10 1-8 1 0 1 7 1 4 1-5 1-3 1 0 1 6 1 4 1 1 1-6 1-6 1 3 1 1 1 4 1 8 1 8 1 2 1-10 1-4 1 0 1 1 1 3 1-2 1 0 1 2 1 3 1 2 1-2 1-6 1-4 1-3 1 5 1 4 1-3 1-7 1-5 1 2 1 7 1 6 1-6 1 2 1 3 1 0 1 0 1-1 1-2 1 3 1 4 1-1 1-2 1-2 1 3 1 1 1-3 1-3 1-3 1 1 1-1 1-1 1 0 1 7 1 10 1 1 1-5 1 3 1-1 1-1 1-4 1-2 1 2 1-4 1-2 1-5 1 4 1 5 1 2 1 0 1-3 1-1 1 5 1 0 1 0 1-3 1-3 1 6 1 8 1-6 1-9 1-8 1 6 1 8 1 0 1 0 1 2 1 6 1 3 1-3 1-5 1-5 1-5 1-4 1-5 1 3 1 4 1 8 1 1 1-2 1-1 1 2 1 1 1-3 1-2 1-1 1-3 1-1 1-4 1-6 1 2 1 0 1 8 1 6 1 2 1 2 1-9 1 3 1 1 1 2 1-5 1 0 1 5 1 9 1-5 1-2 1-5 1 4 1-3 1-3 1-3 1 8 1 10 1 2 1 0 1-2 1-5 1-11 1-4 1 4 1 7 1 1 1 4 1-1 1 1 1-6 1-4 1 1 1 4 1-3 1 1 1-3 1 3 1-2 1-4 1-2 1 1 1 0 1 3 1 4 1 6 1 3 1-3 1-2 1-3 1-5 1-3 1-1 1 5 1 6 1 5 1 5 1-1 1 2 1 5 1 4 1-2 1-5 1-7 1-2 1-2 1-5 1 1 1 8 1 5 1-3 1-7 1 0 1 0 1 3 1-1 1 2 1 3 1-3 1-8 1-5 1 4 1 12 1-1 1-8 1-3 1 2 1 4 1-2 1-7 1 0 1 0 1 2 1 3 1-1 1-1 1-2 1 2 1 3 1 0 1-4 1-8 1 2 1 1 1-2 1 3 1 2 1 4 1-1 1-1 1-2 1-1 1-5 1-3 1 9 1 7 1-1 1-1 1-5 1 1 1 0 1-2 1-4 1 0 1-2 1-3 1-1 1 4 1 6 1 4 1-4 1-9 1-10 1 5 1 9 1 18 1-1 1-11 1 2 1 6 1 7 1-1 1-8 1-4 1-1 1 3 1 5 1-6 1 0 1 0 1-1 1 2 1 0 1 2 1 0 1 2 1 3 1-3 1 1 1-5 1-2 1-5 1 1 1 7 1 7 1 0 1-10 1-4 1 3 1 3 1 0 1 0 1 1 1 3 1-6 1-1 1 1 1 3 1-1 1-1 1 6 1 1 1 1 1-9 1-3 1 5 1 4 1 1 1-3 1-3 1 4 1 6 1 3 1-2 1-2 1-4 1 1"/>
<path vector-effect="non-scaling-stroke" d="M0 2652l1-6 1-1 1-1 1 2 1 11 1 3 1-3 1-6 1-5 1 1 1-2 1-3 1-4 1 3 1 11 1 6 1-2 1 0 1 2 1 2 1-8 1-1 1 1 1 4 1 1 1-6 1 1 1 0 1 5 1 0 1-1 1-7 1-4 1-2 1 2 1 8 1 3 1-2 1-2 1 1 1 1 1-2 1-1 1 0 1 3 1-3 1-3 1-1 1 2 1 2 1-6 1-1 1 1 1 1 1 4 1 5 1 3 1-1 1-3 1 0 1 1 1 2 1-4 1-1 1 2 1 1 1-1 1-7 1-5 1-2 1 6 1 8 1 5 1 0 1-3 1-3 1-1 1-2 1 4 1 3 1 1 1-1 1-7 1-4 1-1 1-3 1 5 1 5 1 2 1 0 1-5 1-1 1-1 1 4 1 0 1-2 1-1 1-3 1-1 1-6 1 0 1 5 1-2 1-3 1-3 1 4 1 9 1 4 1 0 1-2 1 0 1 7 1-1 1 5 1-5 1-6 1 2 1 2 1 4 1 1 1-2 1 0 1 4 1 3 1-9 1-5 1 3 1 1 1 0 1-5 1-2 1-1 1 0 1-4 1-4 1 7 1 7 1 1 1 1 1-5 1 0 1-6 1-1 1 1 1 8 1-4 1-2 1 1 1 6 1 8 1-4 1-9 1-8 1 3 1 13 1 7 1-2 1-9 1-6 1 3 1 3 1-5 1-7 1 3 1 6 1 5 1-2 1-6 1 0 1 2 1-7 1-3 1 1 1 7 1 9 1 5 1-4 1 4 1-8 1-4 1 0 1 7 1 2 1-2 1-3 1 0 1 1 1-5 1-5 1 2 1 5 1-2 1-2 1 3 1 3 1 8 1 3 1-4 1-7 1-8 1-3 1 3 1 10 1-1 1 0 1-2 1 6 1 1 1 3 1 3 1 3 1-1 1-13 1-5 1 4 1 6 1-2 1-12 1 4 1 9 1 7 1 0 1-11 1-3 1 6 1 1 1-1 1 0 1-1 1-5 1 0 1-1 1-4 1 2 1 6 1 4 1-1 1 1 1 3 1 1 1 1 1-1 1-3 1-4 1 6 1 0 1-5 1-2 1 2 1-1 1-1 1-1 1 1 1-3 1-6 1-5 1 8 1 9 1 0 1-2 1 2 1 0 1-3 1 1 1-5 1 5 1-2 1-2 1-9 1-2 1 2 1 2 1-1 1 2 1 8 1 2 1-2 1-8 1 0 1 4 1-1 1-3 1 0 1 5 1 1 1 1 1 4 1 0 1-7 1-5 1 1 1 11 1 8 1-6 1-9 1 5 1 8 1-2 1-4 1-4 1-2 1-3 1-10 1-4 1 10 1 7 1 1 1-9 1 3 1 1 1 1 1-2 1 1 1 7 1 4 1-2 1 0 1 7 1 4 1 1 1-4 1-2 1-4 1 1 1 2 1 2 1-1 1-4 1-1 1 1 1 0 1 1 1 6 1 0 1-5 1-11 1-1 1 3 1 3 1-2 1-9 1 0 1 9 1 3 1-2 1-6 1 3 1 1 1 0 1-3 1-7 1 6 1 3 1 1 1-1 1-3 1 3 1 5 1 1 1 4 1-4 1-3 1-1 1-2 1-5 1 1 1 5 1 7 1 0 1 1 1-4 1-1 1 1 1-4 1 1 1-2 1 0 1-1 1 5 1-3 1-5 1 1 1 4 1 5 1 5 1 0 1-4 1-3 1-3 1-3 1 7 1-2 1-4 1-3 1-1 1 5 1-1 1 0 1-3 1 2 1 5 1 1 1 4 1 0 1-7 1-5 1 2 1 3 1-1 1-1 1-3 1 1 1 5 1 2 1-3 1-3 1 2 1 7 1 1 1-4 1-5 1-2 1 6 1 4 1-5 1-7 1-5 1-1 1 10 1 11 1 1 1 0 1 0 1-3M435 2657l1 3 1-1 1-7 1-1 1 2 1 7 1-4 1-2 1-7 1 3 1-4 1-3 1 0 1 6 1 8 1-4 1 0 1 0 1 1 1-2 1-2 1-4 1 1 1 3 1 1 1 2 1 7 1 0 1-2 1-4 1-1 1 1 1 7 1 4 1-5 1-5 1 0 1 6 1 4 1-2 1-6 1-3 1 0 1-3 1 0 1 6 1 2 1 2 1-4 1-4 1-1 1 0 1-1 1-2 1 1 1-2 1-4 1-7 1 1 1 7 1 3 1 3 1-5 1 0 1 4 1-3 1-2 1 1 1 1 1-1 1-4 1-1 1 0 1 8 1-1 1-8 1-3 1 7 1 6 1-1 1-8 1-1 1 9 1 8 1-1 1-8 1 1 1 4 1-2 1-15 1-13 1 0 1 7 1 9 1 6 1 3 1 1 1 1 1-1 1-5 1-2 1-1 1 4 1 5 1-1 1-3 1-6 1 1 1 7 1 2 1 1 1-3 1 6 1 6 1-2 1-6 1-2 1 0 1-1 1 2 1 1 1 3 1-1 1-8 1 0 1 4 1 13 1 0 1-5 1 0 1 2 1 0 1-6 1 0 1 0 1 1 1-5 1-2 1 2 1 7 1-2 1-4 1 3 1 2 1 4 1 1 1 0 1 1 1-4 1-6 1-6 1 4 1 6 1-3 1-5 1-4 1 2 1 10 1 1 1 4 1-1 1-5 1-6 1-3 1-4 1 4 1 2 1 3 1 4 1-4 1-6 1 1 1 5 1-2 1 3 1-6 1 3 1 1 1-1 1-1 1-3 1 1 1 0 1-1 1 13 1 14 1-2 1-4 1-15 1-4 1 2 1-3 1-4 1-1 1 4 1 1 1 3 1-3 1-3 1 4 1-1 1 2 1 2 1-2 1 3 1 8 1 5 1-1 1-5 1-3 1 0 1-1 1-2 1-4 1-3 1-2 1 3 1 1 1 1 1-2 1 0 1-2 1 8 1 8 1 2 1-7 1-11 1-1 1 0 1-2 1 1 1 7 1 7 1 8 1-7 1-7 1 3 1 2 1-3 1-5 1-3 1 3 1 7 1-1 1-3 1-8 1-2 1 8 1 8 1-2 1-2 1 0 1 0 1-2 1-8 1 2 1 1 1 6 1-2 1-1 1 0 1 1 1 10 1 1 1 0 1 0 1-3 1-5 1 0 1 2 1 7 1 1 1 8 1-1 1-10 1-12 1-4 1 7 1 11 1-1 1-5 1 0 1 3 1 0 1-10 1 1 1 4 1 7 1-7 1-8 1-4 1 3 1 8 1-6 1-6 1 3 1 6 1 2 1-8 1-2 1 1 1 0 1 1 1 0 1 9 1 3 1 1 1 1 1 0 1 1 1-2 1-7 1-2 1 7 1-2 1-4 1-1 1 4 1 7 1-9 1-7 1-5 1 3 1 3 1 4 1 3 1 1 1-5 1-9 1-1 1 8 1 5 1-1 1 1 1 2 1 3 1 4 1-2 1-3 1 1 1-3 1 1 1 1 1 3 1 1 1 2 1 2 1 1 1 0 1-1 1 1 1-2 1 1 1 3 1 7 1 0 1-6 1-5 1 2 1 6 1-1 1-4 1-1 1 1 1 5 1 8 1-1 1-9 1-6 1 1 1 3 1 0 1-9 1-3 1 5 1 6 1-3 1-11 1-3 1-2 1-3 1-2 1 4 1 7 1 5 1 0 1-3 1 3 1 4 1-3 1-8 1-3 1-2 1-1 1-3 1 0 1-4 1-3 1 5 1 6 1 7 1 1 1-2 1-2 1 1 1-4 1-2 1-1 1 7 1 5 1 2 1-2 1-4 1-3 1 0 1-4 1-4 1-6 1 3 1 7 1 9 1 0 1-3 1 0 1 4 1 1 1-1 1-3 1-1 1 1 1-3 1 4 1 1 1 2 1-5 1-1 1 0 1 5 1 3 1 1 1-6 1-3 1 3 1 5 1 7 1 3 1-9 1-9 1-2 1 6 1 8 1 0 1-3 1-8 1 1 1 9 1 2 1-5 1-9 1-1 1 4 1 1 1-3 1-3 1 0 1 7 1 4 1-2 1 2 1 3 1 0 1-11 1-7 1 1 1 4 1-1 1-1 1 0 1 0 1 3 1 0 1 0 1 6 1 0 1 1 1 0 1 0 1 2 1 5 1 0 1-3 1-2 1 2 1 2 1 3 1 1 1-1 1 3 1-2 1-4 1-5 1-1 1-3 1-3 1-1 1 4 1 6 1-5 1-9 1 5 1 8 1-4 1-15 1-5 1 11 1 10 1-4 1-12 1-6 1 13 1 11 1-1 1-5 1 5 1 7 1 4 1-9 1-11 1-7 1 4 1 5 1 2 1 8 1 2 1-3 1-2 1-8 1-3 1 3 1 2 1 4 1-6 1 0 1 3 1 1 1-2 1-1 1 0 1 4 1 3 1-3 1 0 1 0 1-5 1-9 1-3 1 6 1 8 1 6 1 1 1-1 1-4 1 0 1-1 1 0 1 6 1 1 1 3 1-5 1 4 1 6 1-3 1-10 1-9 1 3 1 12 1 7 1-3 1-5 1-6 1-3 1-3 1 2 1 6 1 3 1 1 1-3 1-4 1 1 1 0 1-5 1-1 1 4 1 5 1 3 1-4 1-1 1 3 1 0 1-3 1 0 1 4 1 7 1 3 1 1 1-1 1-1 1-4 1-6 1-2 1 3 1 5 1-1 1-1 1 0 1-1 1-5 1-7 1 1 1 1 1 2 1 3 1 0 1-7 1 1 1 7 1 7 1 7 1-9 1-8 1-4 1 5 1-2 1-5 1-5 1-3 1 2 1 4 1 4 1 6 1 9 1-2 1-7 1-4 1 3 1 1 1 0 1-4 1 4 1 1 1 2 1 1 1 4 1 5 1 1 1 2 1-1 1 2 1-4 1-7 1-8 1-3 1-3 1 9 1 9 1 2 1 2 1-4 1-3 1-3 1-5 1 0 1 2 1 0 1-11 1-8 1 3 1 10 1 5 1-2 1-3 1 2 1 13 1 1 1-6 1-2 1-4 1-1 1-3 1-5 1 2 1 0 1 2 1 6 1-2 1-6 1-3 1 2 1 4 1 0 1 0 1-2 1 5 1 3 1-3 1-5 1 1 1 3 1 1 1-4 1-4 1 1 1 2 1-1 1-1 1 2 1 0 1 1 1-1 1-3 1-2 1 0 1 0 1-1 1 2 1 1 1 2 1-6 1-1 1 4 1 10 1 8 1-1 1-3 1 0 1 5 1-4 1-10 1-7 1 0 1 2 1 5 1-1 1 4 1 4 1 4 1-7 1-2 1 1 1 8 1 4 1 0 1-3 1-3 1 0 1-2 1 0 1 4 1 5 1 4 1-2 1-6 1-1 1 0 1 2 1-1 1 5 1-1 1-6 1-6 1-1 1 1 1 6 1-3 1-2 1-2 1 3 1 4 1-1 1-4 1 3 1-1 1-4 1-6 1 3 1 10 1 9 1 0 1-6"/>
<path vector-effect="non-scaling-stroke" d="M0 2732l1-1 1-4 1-4 1 3 1 11 1 0 1-3 1-3 1 2 1 4 1-1 1-7 1-5 1 6 1 3 1 0 1-2 1 0 1 2 1 3 1-3 1-3 1 1 1 2 1 6 1-1 1-6 1-3 1 0 1 1 1-1 1-3 1-4 1 3 1 6 1-4 1-2 1-3 1 5 1 7 1-1 1 0 1 1 1-4 1-3 1 0 1-2 1 4 1-2 1-8 1-1 1 2 1 4 1-1 1-3 1-2 1 4 1 3 1 1 1 5 1 4 1 0 1-3 1 0 1 0 1-4 1-4 1 0 1 3 1 3 1 1 1 2 1 1 1 0 1-5 1-4 1 2 1 3 1-2 1 4 1 5 1 5 1-3 1-10 1-13 1-3 1 4 1 4 1 6 1-5 1-4 1-6 1 5 1 11 1 12 1-2 1-9 1-6 1-2 1 0 1-7 1-1 1 0 1-5 1 3 1 5 1 6 1 5 1-4 1 1 1 1 1 5 1 6 1-1 1-2 1-3 1-3 1 0 1 3 1 1 1-2 1 0 1 1 1 2 1 3 1-2 1-3 1-1 1-2 1-3 1 1 1 2 1-1 1-3 1 0 1 2 1 2 1 3 1 2 1-1 1 0 1 0 1 0 1 3 1 3 1-2 1-10 1-9 1 5 1 5 1 4 1 1 1-11 1-1 1 3 1 6 1 0 1-8 1-9 1-1 1 3 1 7 1 2 1-3 1-3 1 2 1 8 1 6 1 5 1-10 1-10 1-4 1 3 1 6 1 9 1 5 1 6 1 2 1-4 1-5 1 0 1 6 1-1 1-7 1-6 1-4 1-6 1 2 1-2 1 2 1 4 1 5 1 4 1-2 1 0 1-1 1-1 1-1 1-3 1-6 1 1 1 0 1 4 1 0 1 5 1 6 1 2 1 1 1 0 1 5 1-1 1-6 1-5 1-3 1 9 1 0 1-3 1-6 1 1 1 9 1 2 1 1 1-2 1-3 1-2 1 5 1 3 1 0 1-8 1-5 1-5 1 2 1 0 1 2 1 7 1 4 1 2 1-1 1-5 1 1 1 4 1-8 1-8 1-1 1 1 1 0 1 0 1-2 1 2 1 1 1 2 1 3 1-8 1-5 1-7 1 0 1 6 1 5 1 8 1 6 1 1 1 0 1 1 1-4 1 0 1-10 1-7 1-3 1 6 1 4 1-3 1 2 1 3 1 8 1-1 1-5 1-2 1 2 1 5 1 0 1-1 1-4 1-3 1-6 1-2 1 4 1 7 1 5 1-1 1 0 1-2 1-5 1 1 1-4 1 2 1 4 1 3 1 2 1-7 1 2 1 2 1-4 1-7 1-7 1-1 1 7 1 4 1 7 1 8 1 2 1-7 1-12 1-3 1 15 1 6 1-4 1-6 1 1 1 14 1-1 1-8 1-3 1 5 1 6 1-1 1-6 1 0 1 4 1-2 1-2 1 1 1 5 1 4 1-9 1-7 1-4 1 0 1 8 1 4 1-3 1-13 1-9 1 3 1 14 1 12 1-2 1-7 1-5 1 0 1-3 1-6 1-3 1 0 1 5 1 2 1 3 1 6 1 7 1 0 1-6 1-4 1-3 1-5 1 1 1 3 1 7 1 3 1-6 1-6 1-2 1 4 1-2 1-2 1 7 1 2 1 2 1-3 1-1 1-1 1-1 1-2 1-3 1 8 1 8 1 3 1-7 1-1 1 0 1 4 1-1 1-2 1-3 1 1 1-3 1-2 1-1 1-3 1 0 1 3 1 5 1 12 1 2 1-5 1-7 1-5 1 2 1 4 1 0 1 2 1 0 1 1 1 1 1-6 1 0 1-3 1 2 1-4 1 0 1 2 1 5 1-1 1 1 1-2 1 1 1-6 1-3 1 1 1-1 1-3 1 1 1-1 1 8 1 3 1-1M435 2733l1 2 1-1 1-1 1-2 1 1 1 8 1-1 1-1 1-6 1-6 1 6 1 5 1-2 1-10 1-5 1 2 1 13 1 5 1-2 1-10 1-3 1 2 1 3 1-3 1 0 1 5 1 0 1 2 1-4 1 1 1 4 1-1 1-8 1-7 1 2 1 8 1 2 1-4 1 0 1 0 1 0 1-1 1 5 1-3 1-6 1 0 1 1 1 6 1 0 1-2 1-1 1-2 1-1 1-3 1 2 1 8 1 1 1 1 1-10 1-7 1 1 1 2 1 5 1-3 1 0 1 2 1-2 1 3 1 7 1 1 1 2 1 1 1-5 1-4 1 4 1 0 1-4 1-3 1 2 1 10 1 6 1-4 1-9 1-4 1 5 1 7 1 1 1-5 1-2 1 2 1 3 1 2 1-5 1-4 1-7 1-5 1-5 1 3 1 4 1 6 1 1 1-1 1-1 1 0 1 5 1-1 1 0 1-1 1 2 1-3 1 1 1 0 1 0 1 0 1 0 1 7 1 0 1 1 1-6 1-3 1 6 1-2 1-2 1 3 1-4 1-4 1-5 1-6 1 6 1 10 1 2 1 0 1 11 1 5 1 0 1-8 1-10 1-1 1 3 1-3 1-5 1 5 1 7 1 6 1-6 1-8 1-3 1 9 1 6 1-1 1-4 1-8 1 0 1 0 1 1 1 6 1 3 1-5 1-8 1-1 1 6 1 4 1-1 1 2 1-3 1-1 1-4 1-6 1 0 1 5 1 3 1-4 1-6 1 3 1 7 1-1 1 2 1 4 1 3 1 4 1-2 1-3 1 0 1-2 1-2 1-1 1 8 1 3 1-1 1-5 1-3 1-3 1-2 1-1 1 2 1 0 1-1 1-2 1 1 1 4 1 8 1-2 1-11 1-1 1 3 1 0 1 4 1 8 1 0 1 0 1-1 1-6 1-3 1-5 1-3 1 6 1-4 1-1 1-3 1 5 1 3 1-3 1-7 1 1 1 8 1 7 1 1 1-3 1-4 1-4 1-4 1 2 1 1 1 3 1 6 1 5 1-4 1-7 1 0 1-1 1-1 1-2 1 4 1 7 1 6 1 6 1-6 1-1 1 0 1-2 1-2 1 0 1 1 1 2 1 3 1-4 1-6 1-2 1 3 1 6 1 9 1 0 1-4 1 0 1 6 1 4 1-5 1-8 1-5 1 0 1 3 1-2 1-4 1-2 1 2 1 7 1 7 1 2 1-5 1-7 1-5 1 5 1 9 1-1 1-5 1-3 1 0 1-1 1 1 1 2 1 4 1-2 1-8 1-6 1 3 1 6 1 2 1-8 1 0 1 1 1 2 1-3 1-5 1 2 1 8 1-1 1-9 1-1 1 2 1 10 1 1 1 1 1 0 1 4 1-1 1-4 1-5 1 4 1 2 1-2 1-8 1-4 1 4 1 0 1-4 1-7 1 3 1 8 1 9 1 1 1-5 1-7 1-2 1 6 1 3 1 0 1-2 1 0 1 10 1-1 1-1 1-4 1 0 1 1 1-2 1 7 1 3 1 5 1-4 1-4 1-1 1 5 1-1 1 0 1-1 1 2 1 2 1 3 1 6 1-6 1-8 1-4 1 8 1 5 1-4 1-1 1 1 1 11 1 3 1-8 1-7 1-4 1 5 1 2 1-7 1-6 1-1 1-1 1 2 1-2 1-3 1 5 1-4 1-2 1-7 1 0 1 7 1 0 1 8 1 3 1 0 1-3 1-4 1-3 1-1 1-1 1 0 1-3 1-1 1-6 1 2 1 9 1 2 1 0 1 0 1 4 1 3 1-6 1-2 1 3 1 7 1-2 1-2 1-7 1-4 1 3 1 5 1-2 1-7 1-4 1-6 1 3 1 1 1 8 1 0 1 6 1 5 1 2 1-3 1-7 1-1 1-3 1-3 1-3 1 5 1 8 1 4 1 3 1-6 1 0 1 4 1-2 1 4 1-1 1-2 1-3 1-2 1 0 1 4 1 2 1-4 1 4 1 2 1 4 1 2 1-6 1-3 1 4 1 4 1 0 1-4 1-6 1 5 1 7 1 1 1-6 1-11 1 2 1 5 1 0 1-1 1-4 1 2 1 1 1-3 1-8 1 1 1 3 1 1 1-1 1-1 1 3 1 2 1-4 1 0 1 4 1 11 1 2 1-4 1-6 1 2 1 9 1 3 1-6 1-4 1 2 1 2 1 2 1-6 1-2 1 4 1-4 1-4 1-3 1-5 1-2 1-1 1 5 1 4 1 3 1-10 1-5 1 4 1 9 1-2 1-8 1-8 1 0 1 10 1 0 1-11 1 2 1 4 1 10 1 4 1-1 1 3 1-1 1-3 1-3 1 1 1-3 1 0 1 2 1 7 1 6 1 3 1-5 1-11 1 2 1 6 1 0 1-9 1-2 1 5 1 5 1 3 1-6 1 1 1 2 1 3 1 3 1-2 1 1 1 3 1-3 1-5 1-5 1-5 1 2 1 1 1 5 1 2 1-2 1 4 1 0 1 2 1 1 1-2 1 4 1-1 1-2 1 0 1-1 1 4 1-5 1-8 1 0 1 5 1 2 1-5 1-2 1-1 1 4 1-1 1-2 1-1 1 4 1 4 1 1 1 3 1-4 1-10 1-5 1 1 1 9 1 4 1-5 1-5 1 5 1 6 1-4 1 0 1-1 1 7 1 9 1-1 1-3 1-1 1-3 1-1 1 4 1 1 1-7 1-6 1 3 1 13 1 4 1-8 1-9 1-3 1 1 1 2 1-3 1 2 1 7 1-1 1-1 1-8 1 1 1 5 1 6 1-3 1-4 1-5 1 1 1 0 1-2 1-4 1 0 1 1 1 0 1 2 1 1 1 2 1 1 1 1 1 1 1 2 1-1 1-3 1-3 1 8 1 9 1 2 1-4 1-6 1 1 1 5 1 2 1 0 1 0 1 1 1-5 1-8 1 1 1 1 1 6 1 1 1 2 1-1 1-3 1-4 1-6 1 7 1 5 1-1 1-6 1-4 1 1 1 1 1 3 1-2 1-4 1 2 1 4 1-3 1-5 1-6 1 0 1 8 1 0 1-7 1-5 1 2 1 12 1 7 1-3 1-11 1-4 1 4 1 1 1 0 1-4 1 3 1 4 1 3 1 2 1-2 1 0 1-3 1-4 1-2 1 2 1 2 1 0 1-2 1 1 1 4 1 2 1 2 1 3 1-8 1-11 1-5 1 6 1 10 1 8 1-3 1-6 1-5 1-4 1 4 1 7 1 9 1-1 1-6 1 3 1 0 1 3 1-5 1-7 1 0 1 3 1 3 1-5 1-2 1 2 1 6 1-3 1 1 1 5 1 6 1 9 1 2 1-5 1-2 1-9 1-7 1 0 1 3 1 6 1 2 1 0 1 1 1-1 1-2 1 0 1-3 1 3 1 2 1-2 1-3 1-3 1-2 1-1 1 5 1 3 1 0 1-7 1-2 1 1 1 0 1 4 1-2 1 0 1-1 1 2 1-1"/>
<path vector-effect="non-scaling-stroke" d="M0 2804l1 2 1-5 1-2 1 1 1 4 1 3 1 0 1 2 1-2 1-2 1-4 1 1 1 1 1-2 1 3 1 1 1 2 1 6 1-1 1-1 1-3 1 3 1 0 1 1 1-4 1 3 1-3 1-2 1 5 1 3 1-3 1-6 1-3 1 2 1 3 1 0 1 1 1 1 1 0 1-3 1-4 1 0 1 4 1-2 1-5 1-2 1 4 1 7 1 0 1-8 1-2 1 0 1 4 1-2 1-1 1-2 1 2 1 6 1-2 1 3 1 3 1-3 1-5 1-3 1 1 1-1 1 1 1 1 1 3 1 4 1 3 1 5 1 3 1-3 1-11 1-9 1-2 1 5 1 6 1 3 1 3 1 2 1-2 1-7 1-8 1-6 1 7 1 9 1 2 1-4 1-7 1 1 1 7 1 6 1 0 1-1 1-6 1-5 1 3 1 1 1 1 1-2 1-1 1-7 1-4 1 4 1 8 1 6 1-3 1-6 1 0 1 5 1 8 1-7 1-10 1 0 1 1 1 7 1-2 1 1 1 6 1 0 1-2 1 0 1 7 1 4 1-5 1-13 1-7 1-3 1 2 1 1 1 6 1 3 1-2 1 0 1 3 1 7 1 1 1 1 1-2 1 0 1-1 1 0 1 3 1 5 1 3 1-8 1-3 1 3 1 6 1-2 1-8 1 0 1 4 1 10 1-3 1-8 1-8 1-2 1 6 1 1 1 3 1-4 1 4 1-2 1-1 1 2 1-7 1-3 1 1 1 0 1 3 1 1 1 1 1 6 1 7 1 6 1-3 1-8 1-9 1-7 1 8 1 3 1-7 1-3 1 1 1 2 1 0 1 3 1 6 1 7 1-8 1-10 1-5 1 5 1 6 1-1 1-7 1 2 1 4 1-3 1-4 1-2 1 10 1 7 1-1 1-3 1 1 1 4 1-4 1-5 1 3 1-2 1-1 1 0 1 1 1 6 1-1 1-3 1-1 1 4 1 3 1 1 1-4 1 0 1-3 1-6 1 3 1 1 1 5 1-4 1-6 1-2 1 9 1 8 1 3 1-4 1-1 1 5 1-3 1-5 1-7 1 1 1 3 1-2 1-3 1-5 1-1 1 8 1 4 1-2 1-1 1-5 1-4 1 2 1 2 1 7 1-4 1-1 1-5 1 1 1 3 1 5 1 5 1-4 1-7 1-6 1 7 1 6 1-1 1-2 1 1 1 2 1 1 1-4 1 0 1 2 1 3 1-3 1 0 1 3 1 2 1 1 1-2 1 2 1 4 1-3 1-7 1-5 1 2 1 4 1 1 1-6 1 1 1 3 1 3 1 7 1 0 1-1 1-3 1-5 1-8 1-10 1-2 1 3 1 5 1 2 1 3 1 7 1 1 1-6 1-4 1 1 1 3 1 7 1-7 1-2 1 8 1 7 1-2 1-5 1 1 1-4 1-2 1-2 1 4 1 1 1 1 1 1 1 0 1 3 1 10 1 2 1-7 1-6 1-2 1-1 1 2 1-5 1-2 1-3 1 1 1 5 1 6 1-2 1-7 1 0 1 0 1 0 1-1 1 5 1 4 1 6 1-3 1-8 1 2 1 1 1 5 1 1 1-3 1-5 1-7 1-1 1 4 1 4 1 7 1 0 1-5 1-1 1 1 1 3 1-1 1-3 1-2 1-2 1-4 1 3 1 5 1 5 1 2 1-6 1-2 1 7 1 10 1-7 1-9 1-5 1 3 1 6 1 3 1 2 1-1 1-3 1-11 1-1 1 3 1 4 1-2 1-3 1 2 1 8 1 7 1 0 1-8 1-7 1 0 1 1 1 2 1-1 1 0 1-1 1-3 1-1 1-2 1 1 1 4 1 1 1-1 1-4 1 2 1 2 1 1 1-6 1-5 1-3 1-1 1 1 1 7 1 4 1 4 1 4 1-1 1-2M435 2801l1 3 1 6 1 4 1 2 1-7 1-3 1-2 1 3 1 6 1 2 1 2 1-6 1-6 1-5 1 2 1-5 1-7 1 1 1 4 1 7 1 7 1-4 1-5 1-3 1 2 1 1 1 0 1 1 1 3 1 0 1-4 1-4 1 3 1 3 1 2 1 1 1-1 1-5 1 1 1 4 1 2 1-1 1 2 1 4 1 6 1-3 1-11 1-2 1-2 1 2 1 1 1-2 1-2 1 4 1 1 1-5 1-8 1 6 1 7 1 2 1 1 1-1 1 0 1 5 1 0 1 4 1 0 1-4 1-1 1-1 1 0 1 7 1-3 1-5 1-5 1-5 1 4 1 10 1 8 1-3 1-5 1-4 1 5 1 5 1-3 1-8 1-11 1-1 1 6 1 6 1 8 1-4 1-4 1-1 1 3 1-2 1 0 1-6 1 2 1 1 1-1 1-4 1 2 1 5 1 3 1 0 1 0 1 1 1 1 1-1 1-5 1-7 1-4 1 0 1 1 1 6 1 0 1-1 1-1 1 6 1 1 1 1 1 0 1 0 1-4 1-4 1-3 1 1 1-1 1 2 1 3 1 1 1-1 1 4 1 9 1 10 1 4 1-8 1-17 1-10 1-5 1 5 1 3 1 0 1 3 1 3 1 4 1 1 1-3 1-1 1-2 1 3 1 3 1-2 1-3 1-7 1-7 1 2 1 10 1 4 1 1 1-7 1 0 1 2 1 6 1 2 1-4 1-1 1-1 1 1 1-3 1 5 1 4 1 1 1 1 1-5 1-1 1 1 1-2 1-3 1 5 1 2 1 8 1 3 1 0 1-4 1-3 1-4 1-6 1 0 1 2 1 3 1 8 1-3 1-6 1-2 1 2 1 3 1 1 1-3 1-10 1 0 1 5 1 5 1 0 1 0 1-6 1 5 1-2 1-5 1 10 1 12 1 4 1-2 1-11 1-3 1-1 1-3 1-10 1-7 1 4 1 5 1 0 1 2 1 6 1 6 1-1 1-3 1-5 1 2 1 2 1 0 1 0 1-6 1-6 1 0 1 5 1 8 1 9 1-3 1-3 1-8 1-5 1-4 1 4 1 5 1-1 1-2 1 2 1 11 1 6 1-1 1-8 1-5 1 1 1 4 1-3 1-1 1 1 1 1 1-2 1-1 1 1 1 5 1-1 1-5 1-5 1 5 1 5 1 2 1-8 1-8 1 8 1 4 1 5 1-3 1-4 1 1 1 9 1 0 1-9 1-13 1-4 1 11 1 12 1 2 1-5 1 0 1 3 1 0 1-2 1 2 1 3 1 3 1-8 1-8 1-3 1 6 1 7 1-6 1-3 1-2 1 2 1 4 1-4 1-4 1 0 1 4 1 0 1-5 1-2 1 4 1-1 1 0 1 4 1-1 1 6 1 1 1-2 1-1 1 0 1 0 1-4 1-7 1 0 1 3 1 4 1 2 1 0 1 4 1 0 1-1 1-1 1-3 1-6 1-3 1 2 1 10 1 0 1-5 1 0 1 4 1 6 1 3 1-1 1-1 1-4 1-5 1-3 1 3 1 7 1 5 1-6 1-2 1-1 1 4 1 2 1-1 1 0 1 1 1-1 1-3 1 0 1-4 1-3 1 1 1 7 1-2 1 3 1 4 1 3 1-3 1-7 1-2 1 6 1 9 1-3 1-9 1-7 1 6 1 2 1-3 1 3 1 1 1 4 1-3 1-2 1-2 1 8 1 0 1-1 1-1 1-8 1-3 1 2 1 4 1 5 1-4 1-5 1 1 1 0 1-3 1-8 1-2 1 1 1 7 1 6 1-4 1-4 1-4 1-1 1 1 1 4 1 0 1 2 1 3 1-1 1 3 1-4 1-4 1-2 1-5 1-1 1-4 1-1 1 9 1 5 1 6 1 2 1 3 1-4 1-8 1-7 1-2 1 5 1 4 1 1 1 1 1 3 1 7 1 2 1-7 1-6 1-1 1 5 1 4 1 1 1-2 1 2 1 4 1 1 1 2 1-5 1-7 1-2 1 8 1 11 1-7 1-12 1-5 1 4 1 10 1 6 1-7 1-2 1 2 1 8 1-2 1-1 1-4 1-2 1-1 1 3 1-1 1 2 1 1 1-4 1-7 1-1 1 11 1 7 1-4 1-4 1 0 1-2 1 5 1-8 1 1 1-3 1-3 1 1 1-4 1 5 1 5 1 5 1 6 1-1 1-1 1-5 1-4 1 0 1 2 1 7 1 1 1 2 1-2 1-1 1-5 1-2 1 5 1 5 1 0 1-9 1-4 1-1 1 6 1 6 1-7 1-3 1-8 1 1 1 7 1 1 1-1 1-9 1 6 1 10 1 6 1-6 1-9 1-3 1 4 1 3 1-7 1-3 1 0 1 5 1 4 1 0 1 2 1 1 1-4 1 0 1 4 1 2 1-4 1-6 1-4 1-2 1 1 1 2 1-1 1-2 1 2 1 2 1 4 1 1 1-2 1-6 1-2 1-2 1-3 1 2 1 8 1 5 1 3 1-5 1-4 1 3 1 6 1 0 1-2 1-2 1 0 1-1 1-1 1 3 1 0 1 2 1-10 1 3 1 7 1 5 1-2 1-6 1-3 1-1 1 0 1 0 1 2 1 4 1-3 1-1 1-2 1 0 1 0 1-3 1 2 1 4 1 5 1-3 1 0 1-1 1 4 1-4 1-10 1-2 1 0 1 5 1 8 1 5 1 4 1-4 1-9 1-4 1-4 1 0 1 3 1 4 1 7 1 8 1-2 1-8 1-9 1-3 1 5 1 3 1 7 1-3 1 3 1 5 1-4 1-2 1-3 1 2 1 1 1-2 1-2 1 4 1 5 1 1 1-6 1-5 1 5 1 9 1 5 1-9 1-6 1-4 1 2 1 3 1 1 1 0 1-3 1 4 1 7 1 7 1 1 1-10 1-3 1 0 1 8 1 4 1-3 1-3 1-2 1-3 1-7 1-1 1 3 1 10 1 6 1 0 1-8 1-1 1 0 1 5 1 1 1-7 1-8 1 1 1-2 1 2 1 3 1-4 1-1 1-7 1 1 1 7 1 3 1-1 1-2 1-1 1-1 1-1 1-3 1 0 1 0 1 3 1 1 1-1 1-3 1-5 1-4 1 2 1 7 1 0 1-1 1 0 1 6 1-1 1-7 1-2 1 7 1 1 1-4 1-5 1 4 1 3 1-2 1-3 1 3 1 12 1 2 1-10 1-8 1-3 1 1 1 4 1-6 1 5 1 10 1-1 1-7 1 0 1 2 1 4 1 7 1 0 1-2 1-3 1 5 1 7 1-5 1-14 1-3 1 6 1 7 1-4 1-5 1 4 1 4 1 1 1-4 1 1 1 5 1 7 1 1 1-7 1-8 1-3 1-1 1 0 1 4 1 5 1 3 1 0 1-2 1-1 1-5 1 1 1 5 1 3 1 0 1 0 1-2 1 2 1-3 1 1 1 0 1-1 1 2 1-4 1-3 1-1 1 1 1-2 1 5 1-4"/>
<path vector-effect="non-scaling-stroke" d="M0 2880l1-3 1 1 1-1 1 6 1 3 1-3 1 0 1-1 1-4 1 0 1 4 1-2 1-7 1-4 1 7 1 8 1 5 1-1 1 1 1 1 1-5 1-3 1 0 1 4 1-1 1-1 1-3 1 0 1 6 1-2 1 2 1 0 1 1 1-2 1-1 1 1 1 0 1 1 1-3 1 5 1 0 1 4 1 0 1-6 1-2 1 0 1 0 1-1 1 0 1-1 1-5 1-3 1 0 1 7 1 6 1-2 1-2 1 0 1-1 1 0 1-1 1 1 1 3 1 1 1-4 1-2 1 1 1-4 1-5 1 1 1 11 1 7 1 0 1-10 1-4 1 0 1 3 1-2 1-4 1 1 1 2 1 0 1-1 1-1 1-1 1 1 1 1 1 6 1 3 1-2 1-4 1-8 1 5 1 8 1 7 1-1 1-4 1-2 1 0 1 3 1-6 1-11 1-5 1 2 1-1 1 3 1 3 1 12 1 4 1-11 1-8 1 7 1 12 1 7 1-9 1-10 1-5 1 6 1 4 1 3 1 3 1 2 1-1 1-8 1-2 1 1 1-1 1-8 1-8 1 0 1 10 1 5 1-2 1-9 1-3 1 7 1 10 1 0 1-4 1-1 1-2 1 4 1 4 1 0 1 1 1-2 1 1 1 4 1 2 1-1 1-4 1-8 1-4 1-1 1 4 1 9 1 10 1 3 1-9 1-8 1 4 1 1 1 1 1-4 1-2 1 5 1 2 1-5 1-6 1 1 1-1 1 0 1-2 1 7 1 5 1 2 1-1 1 3 1 2 1-7 1-1 1 1 1 6 1 1 1-6 1-7 1 4 1 0 1-2 1 4 1 1 1 2 1-3 1 1 1-3 1 5 1-6 1-8 1-1 1 6 1 5 1-4 1-2 1 1 1 3 1 4 1 3 1 2 1 2 1-2 1-1 1-3 1-5 1-4 1-1 1 4 1 3 1-7 1-5 1 1 1 13 1 4 1-9 1-9 1-2 1 9 1 7 1 0 1-2 1-3 1-3 1-8 1-3 1 5 1 9 1 8 1 1 1-3 1 5 1 2 1-1 1-10 1-11 1 2 1 5 1 5 1 0 1-3 1-5 1-3 1 2 1 1 1 4 1 2 1-4 1-4 1 2 1-5 1 2 1 8 1 7 1 1 1-7 1 1 1 4 1 5 1-3 1-4 1-1 1-1 1-4 1 0 1 3 1 3 1-3 1-2 1 2 1 4 1 3 1 3 1 1 1-2 1-1 1-10 1-8 1 4 1 9 1 5 1 2 1-3 1-1 1 1 1-3 1-2 1-3 1 6 1-1 1-1 1-4 1 1 1 3 1-7 1-6 1-10 1 2 1 10 1 6 1-2 1 0 1-1 1 6 1-3 1-3 1 2 1 5 1-1 1-10 1 0 1 8 1 13 1-2 1-9 1-2 1 0 1 4 1 0 1-3 1 1 1 3 1 0 1 1 1 1 1 0 1 0 1 0 1-14 1-3 1 4 1 5 1-3 1-8 1-4 1 5 1 13 1-1 1-6 1 2 1 4 1-1 1-7 1-8 1 2 1 6 1 10 1 1 1-2 1-1 1 1 1 5 1 2 1-2 1-5 1-5 1-3 1-5 1 2 1 10 1 8 1-3 1-3 1 1 1 6 1-1 1-8 1-3 1 2 1 2 1-1 1 0 1 2 1 4 1-4 1-1 1 1 1 9 1 1 1-1 1 2 1-4 1-2 1-8 1 3 1 3 1-1 1-1 1-4 1 1 1-4 1-3 1 4 1 8 1 8 1 1 1-7 1-2 1 2 1-2 1-2 1-3 1 2 1 0 1-2 1-4 1 4 1-2 1-3 1 0 1 1 1-2 1-5 1-1 1 3 1 0 1-1 1-4 1 1 1-2 1-2 1 9 1 5 1 4 1-5 1-4 1-1M435 2886l1-3 1-2 1-4 1 3 1 3 1 4 1 2 1-3 1 0 1-4 1-1 1-4 1 2 1 10 1 0 1-2 1-10 1-3 1-1 1-3 1 3 1 4 1 9 1 4 1-1 1-9 1-6 1-1 1-6 1-3 1 7 1 4 1 4 1-1 1 2 1 3 1 3 1-2 1-5 1-3 1-4 1 2 1 6 1 4 1-2 1 1 1-1 1 4 1 2 1-12 1-8 1 0 1 2 1 0 1 5 1 5 1 1 1-2 1-7 1-1 1 0 1 6 1 1 1-1 1-5 1-6 1 2 1 5 1 5 1 4 1 1 1 4 1 1 1 3 1-1 1-7 1 2 1 0 1 2 1 1 1 1 1 1 1-5 1-4 1-1 1 5 1 8 1-1 1-3 1-6 1 1 1 3 1 2 1-2 1-7 1-2 1 4 1 2 1-3 1-4 1-4 1 2 1 2 1-2 1 4 1 6 1 7 1-2 1-7 1-3 1 0 1 5 1 0 1-4 1-2 1 2 1 1 1 5 1 2 1-8 1-1 1 1 1 5 1 0 1 0 1-1 1-3 1-1 1-3 1 6 1 1 1 0 1-3 1 1 1 7 1 3 1-3 1 0 1 6 1 8 1-7 1-17 1-12 1 3 1 14 1 6 1-6 1-5 1-1 1 2 1 4 1-6 1-5 1 3 1 4 1-1 1-2 1 0 1-6 1-2 1 9 1-1 1 2 1-8 1-6 1 1 1 2 1 2 1 4 1-2 1 4 1 4 1-4 1-2 1 1 1 4 1 1 1-4 1-7 1 1 1 2 1 3 1-2 1 2 1 1 1 7 1 4 1 2 1 2 1-3 1-13 1-6 1 3 1 9 1 1 1-1 1 2 1-1 1-4 1-4 1 2 1 0 1-1 1-8 1 0 1 7 1 8 1-4 1-7 1 1 1 3 1-2 1 1 1 5 1 5 1 2 1 3 1 1 1 0 1-2 1-12 1-3 1 3 1 5 1 0 1-3 1 2 1 5 1-1 1-8 1 3 1 11 1 0 1-6 1-7 1 2 1 4 1-4 1-3 1-1 1 3 1 5 1 7 1 1 1-3 1-4 1-5 1-2 1 1 1 2 1-1 1 1 1 2 1 5 1 4 1-5 1-1 1 3 1-2 1 1 1 5 1-2 1-1 1-7 1-2 1 0 1 5 1 3 1-6 1 0 1 5 1 4 1 0 1-6 1-12 1 0 1 4 1 4 1-8 1-6 1 0 1 15 1 8 1-4 1-8 1-3 1 1 1 3 1 5 1-5 1 1 1-1 1 4 1 0 1-2 1 1 1 1 1 3 1 1 1-5 1-4 1-2 1-6 1 4 1-1 1-3 1 0 1-2 1 3 1 2 1-4 1-4 1-2 1 0 1 9 1 2 1-1 1-2 1-1 1 1 1 2 1 5 1-2 1-6 1-5 1 0 1-3 1 3 1 2 1 6 1 2 1-5 1 1 1 1 1 7 1 2 1-3 1-2 1 1 1-1 1 0 1 0 1 6 1 4 1-3 1 2 1-1 1 1 1 1 1-4 1-6 1 0 1 5 1 8 1 3 1-3 1-4 1 3 1 5 1 3 1-3 1 1 1 1 1 2 1-3 1-8 1-3 1 0 1 3 1 0 1-2 1 1 1 5 1 2 1 5 1-5 1 5 1 0 1 5 1-6 1-12 1-9 1 2 1 3 1 0 1 0 1 1 1 6 1 2 1 0 1-4 1 0 1 2 1 2 1 0 1 3 1 0 1-4 1-4 1-2 1 3 1 4 1-6 1-7 1-4 1 0 1 0 1-3 1-1 1 6 1 3 1 1 1-2 1-2 1 1 1 3 1-6 1-4 1-1 1 8 1 0 1-2 1-6 1-5 1 2 1 3 1-2 1-4 1 7 1 6 1 9 1-1 1-2 1-1 1 4 1-3 1-9 1 0 1 1 1 4 1 4 1 0 1-1 1 1 1 4 1-7 1 5 1 1 1 2 1-3 1-6 1-1 1 2 1 1 1 0 1 1 1-3 1-1 1 7 1 2 1 0 1-3 1-4 1 6 1 1 1 0 1-10 1-1 1 1 1 5 1 2 1-1 1-1 1-4 1 0 1 0 1 6 1 4 1-3 1-6 1-4 1 3 1 2 1 4 1-3 1-4 1-5 1 2 1 6 1 6 1 0 1-9 1-3 1-3 1-1 1-1 1 8 1 13 1 4 1-5 1-7 1 2 1 5 1 0 1-1 1-1 1 6 1 1 1-2 1-6 1-4 1 4 1-1 1-2 1-2 1-4 1 4 1 2 1 7 1 8 1-2 1-6 1-1 1 2 1 2 1 1 1-10 1-1 1 8 1 8 1-2 1-6 1-9 1-4 1 7 1 1 1-3 1-2 1 0 1 4 1 7 1 3 1-4 1-3 1 2 1-4 1-1 1 3 1 1 1 8 1 2 1-5 1-3 1-3 1-9 1-3 1 1 1 6 1 5 1-2 1-7 1 0 1 3 1-5 1 1 1 0 1 5 1 0 1-2 1-3 1-4 1 0 1 3 1 5 1 1 1 2 1-3 1-1 1 0 1 2 1 2 1-1 1-4 1-4 1-2 1 1 1 5 1-2 1-2 1 1 1 1 1 3 1-2 1-4 1-4 1 3 1 9 1 3 1-1 1-7 1-3 1 4 1 4 1 0 1-3 1-4 1-2 1-2 1-1 1 3 1 1 1 3 1 7 1 4 1 2 1-1 1-4 1-6 1-6 1-7 1 5 1 6 1 12 1 2 1-6 1-5 1-3 1 1 1 1 1 4 1 2 1 3 1-5 1-3 1 2 1 1 1 1 1-3 1 2 1 1 1-5 1 0 1 1 1 6 1-1 1-9 1-2 1 2 1 5 1-1 1 1 1 0 1 3 1-2 1-4 1 3 1 6 1 0 1 0 1 0 1 2 1 0 1-4 1 2 1 7 1 0 1-4 1-2 1-2 1 0 1-2 1-2 1 1 1 10 1 4 1-1 1-5 1 1 1 4 1-3 1-4 1-9 1-8 1-3 1 2 1 5 1 4 1 2 1 2 1 2 1-1 1-2 1 3 1-2 1 1 1-6 1 2 1-2 1-1 1-2 1 0 1 6 1 3 1-1 1-2 1-4 1-5 1 0 1 5 1 9 1 2 1-5 1-3 1-2 1-7 1 3 1 0 1 6 1 3 1 1 1-1 1-2 1-2 1 1 1-4 1 2 1-2 1 0 1 2 1 2 1 2 1 1 1 5 1 1 1-2 1-13 1-14 1-1 1 9 1 12 1 8 1 0 1 1 1 1 1 1 1-2 1-7 1-8 1 0 1-2 1 4 1 3 1-2 1 0 1 1 1-2 1 2 1 5 1 6 1 6 1-6 1-9 1-4 1-3 1-1 1 4 1 4 1 5 1 2 1-3 1 2 1 0 1-1 1-2 1 1 1 5 1 1 1-5 1-6 1-3 1 4 1 4 1-1 1 10 1 0 1-4 1-10 1-2 1 5"/>
<path vector-effect="non-scaling-stroke" d="M0 2954l1-1 1-2 1-1 1 7 1 6 1 3 1-1 1-9 1 0 1 5 1 6 1-3 1-10 1-3 1 1 1 9 1-1 1 2 1 1 1-4 1-3 1-5 1 6 1 4 1 1 1-3 1 4 1 5 1 2 1-2 1-5 1 0 1-1 1-1 1 2 1 1 1-1 1-3 1-3 1 1 1 10 1 1 1-5 1-3 1 3 1 4 1-4 1-1 1-9 1-2 1-3 1 0 1 3 1 4 1 3 1 0 1 5 1-3 1-2 1 0 1 3 1 2 1 0 1 0 1 3 1 0 1-2 1-3 1-2 1 1 1 0 1 1 1 7 1 0 1-6 1-9 1 0 1 6 1 3 1 4 1-3 1-6 1-4 1-4 1-6 1 1 1 2 1 5 1 2 1 2 1-1 1 0 1 0 1 4 1 6 1 3 1-2 1-10 1-10 1-2 1 3 1 1 1 0 1 3 1 1 1 2 1 4 1 3 1-1 1-4 1 0 1 0 1 7 1 0 1-6 1-4 1-4 1 1 1 1 1-1 1 6 1 0 1 0 1-3 1 2 1 5 1-4 1-9 1-6 1 0 1 8 1 6 1-2 1-3 1-1 1-2 1 2 1 3 1 4 1-1 1 2 1 2 1-3 1-1 1 1 1 3 1 1 1 0 1 0 1 4 1 0 1-2 1-4 1 1 1 7 1 1 1-4 1-4 1 0 1-1 1-3 1-4 1 3 1-1 1-1 1 2 1 6 1 8 1-7 1-6 1-1 1 4 1 2 1-2 1-1 1 8 1 3 1 3 1-5 1 0 1-2 1-4 1 1 1 0 1-1 1-7 1 2 1 1 1-2 1 0 1 5 1 11 1 2 1-4 1-11 1-4 1 0 1 1 1-4 1-2 1 3 1-1 1 4 1-2 1 2 1 6 1 5 1 0 1 4 1-2 1 8 1-2 1-6 1-5 1-6 1 2 1-1 1-5 1-4 1 4 1 5 1 5 1-4 1 3 1 4 1 2 1-6 1-2 1 4 1 1 1-10 1-10 1 0 1 7 1 10 1 1 1 4 1 1 1 1 1-3 1-3 1-5 1-3 1 2 1 2 1 2 1 0 1-2 1 2 1 4 1-4 1-1 1-1 1 1 1-2 1-5 1 2 1 1 1 1 1 0 1-1 1-1 1 2 1-3 1 2 1 5 1-4 1 0 1-6 1 4 1 3 1-3 1-1 1 3 1 4 1-3 1-6 1 1 1 7 1 0 1-1 1-1 1 1 1-4 1-2 1-2 1 8 1 10 1-3 1-3 1 0 1 4 1-3 1-7 1-2 1 3 1 6 1-1 1-7 1 0 1-2 1-1 1 2 1 0 1 1 1 0 1 5 1 7 1-3 1-11 1-11 1-1 1 7 1 6 1 3 1 1 1 1 1 0 1 0 1 4 1 4 1-8 1-4 1 0 1 5 1-1 1-4 1 1 1 3 1-1 1-1 1-6 1 3 1 5 1-2 1-5 1-6 1 3 1-1 1 1 1-5 1 4 1 5 1 2 1 3 1-2 1-1 1-3 1 0 1 3 1-1 1-4 1 0 1 3 1-2 1-1 1 3 1 8 1 4 1 1 1 1 1-3 1-2 1-8 1 1 1 8 1 8 1 0 1-2 1 0 1-5 1-7 1 2 1-1 1 2 1-2 1-1 1 0 1 2 1 6 1 1 1 0 1 2 1 0 1 4 1 1 1-4 1-4 1-3 1 1 1 5 1 1 1-11 1-4 1 1 1 5 1 3 1 1 1-3 1-1 1-1 1 8 1 4 1-2 1-9 1-9 1 6 1-2 1 1 1-1 1 3 1 6 1-3 1-6 1-7 1 1 1 2 1 4 1-3 1 1 1 3 1 0 1 3 1 1 1-4 1-10 1-6 1 6 1 13 1-1 1-4 1 2 1 8 1-1M435 2962l1-8 1 6 1 6 1-1 1-8 1-5 1 5 1 6 1 5 1 0 1-3 1-6 1-1 1-2 1 11 1 5 1-2 1-6 1-2 1 1 1-1 1-11 1-4 1 4 1 7 1 5 1-3 1-3 1 1 1 0 1-5 1-1 1-2 1 3 1 5 1 6 1-3 1-7 1-1 1 8 1 2 1-5 1-5 1-3 1 1 1 4 1-6 1 0 1 8 1 10 1 5 1-5 1-5 1-9 1-5 1 4 1 0 1-2 1-3 1-1 1 7 1 3 1 0 1 0 1 0 1 2 1-3 1-5 1-2 1 0 1 2 1-2 1 1 1 7 1 5 1 0 1 3 1 2 1-2 1-7 1-3 1 1 1 3 1 0 1-6 1 1 1 3 1-2 1 1 1 5 1 6 1 0 1-6 1-3 1 6 1 8 1-6 1-9 1-5 1 7 1 6 1 1 1-2 1-1 1 2 1-5 1-2 1 4 1 7 1 3 1 1 1-2 1 0 1-3 1-1 1 2 1-3 1-3 1-2 1-1 1 0 1-4 1 1 1 2 1 9 1 1 1-5 1-2 1 2 1 7 1-5 1-7 1-5 1 0 1 4 1 1 1-3 1 0 1 5 1 2 1 5 1 4 1-2 1-7 1-4 1-1 1-5 1 1 1-3 1-1 1 4 1-3 1 1 1 2 1 0 1 3 1 6 1-3 1-4 1-9 1-2 1-2 1-3 1 8 1 3 1 1 1-1 1-1 1-4 1 8 1 2 1 1 1 3 1 1 1-6 1-7 1-2 1 1 1 6 1-1 1 2 1-5 1-1 1 4 1 4 1 5 1 4 1 1 1-4 1-1 1-1 1 1 1-2 1-4 1-2 1 1 1-1 1 4 1 4 1-4 1 0 1 2 1 4 1 3 1 0 1-9 1-1 1 0 1 4 1 1 1-6 1 0 1 0 1 1 1 3 1-3 1 7 1 4 1 2 1-1 1 8 1 0 1-8 1-16 1-6 1 0 1 2 1 7 1-1 1 2 1-5 1-3 1-3 1 9 1 9 1 6 1-4 1-7 1-11 1-5 1 2 1 1 1 3 1 6 1 13 1-1 1-4 1-2 1-6 1 3 1-2 1-4 1 0 1 3 1 3 1 1 1 1 1-1 1-3 1 0 1 4 1 5 1 6 1-7 1-2 1-6 1-6 1 3 1 6 1 4 1-4 1-6 1 0 1 11 1 11 1-1 1-5 1-7 1-3 1 3 1-5 1-2 1-4 1 2 1 6 1 9 1 3 1-9 1-6 1 5 1 7 1-1 1-5 1-2 1 3 1 3 1 1 1-7 1 1 1 2 1-3 1-7 1 5 1 1 1 1 1-7 1-2 1 8 1 3 1 1 1-3 1-2 1-1 1-3 1-7 1 2 1 6 1 7 1-1 1-5 1-3 1 5 1 5 1-9 1-6 1 0 1 7 1 3 1-4 1 0 1 1 1 6 1-3 1-6 1-4 1 5 1 6 1 3 1-3 1-5 1-2 1 2 1 6 1 5 1 0 1-3 1-1 1 7 1 4 1-7 1-9 1-4 1 4 1 1 1 2 1 0 1 7 1 5 1 4 1-6 1 1 1 4 1 2 1-3 1-8 1-5 1-1 1 1 1-2 1 3 1 3 1 10 1 1 1-3 1-7 1 2 1 2 1 2 1-4 1-1 1 5 1 0 1-2 1-6 1-3 1 5 1 1 1-4 1-1 1 4 1 5 1-2 1-6 1 1 1 6 1 1 1-5 1-6 1 5 1 5 1 3 1-6 1-8 1-1 1 1 1-1 1-1 1-5 1-2 1-4 1 1 1 2 1 2 1 3 1 0 1 4 1-1 1-4 1 2 1 3 1 5 1-2 1-4 1-2 1-1 1-2 1-5 1-6 1-2 1-4 1 4 1 5 1 9 1 4 1-1 1 1 1 2 1-3 1-10 1 0 1 2 1 7 1 4 1 0 1-2 1 3 1-3 1 1 1-3 1 0 1 1 1-1 1 0 1 0 1 2 1-2 1 5 1 7 1-2 1-5 1-1 1 2 1 12 1-1 1-2 1-5 1-4 1 0 1-2 1-2 1-2 1-1 1 2 1 8 1-1 1 1 1 2 1 0 1 1 1 1 1 2 1 0 1 3 1-7 1-13 1 1 1 8 1-1 1-3 1-6 1 3 1 5 1 2 1 2 1 1 1 3 1-4 1-8 1 2 1 10 1 6 1-4 1-7 1-3 1 1 1 1 1 0 1 3 1 2 1 2 1 3 1 1 1-3 1-5 1-3 1 4 1 3 1 0 1-5 1-4 1 2 1 1 1 3 1-4 1-4 1-2 1 9 1 7 1-1 1-9 1-7 1 5 1 6 1 3 1-5 1 1 1 3 1 0 1-1 1-1 1-5 1-5 1 3 1 6 1 7 1-3 1-4 1-5 1 1 1 7 1 3 1-1 1-5 1-5 1 1 1 1 1 1 1-2 1-6 1-3 1 7 1 3 1 4 1 4 1-7 1-6 1-6 1-8 1 2 1 4 1 5 1 3 1-3 1 4 1-1 1-1 1 1 1 4 1 3 1-6 1-5 1 0 1 1 1 1 1-2 1-4 1 2 1 5 1 4 1 0 1-5 1-4 1-1 1 2 1 2 1 5 1 0 1-3 1-4 1 0 1 4 1 1 1-3 1 0 1 5 1 3 1 5 1-2 1-6 1-3 1-4 1-3 1-1 1 2 1 11 1 8 1-1 1-5 1-5 1 0 1 2 1-4 1-1 1-2 1 7 1 5 1 4 1-4 1-8 1-6 1-2 1 4 1 6 1 7 1 5 1 0 1-3 1-1 1-1 1-2 1 0 1 4 1-1 1-8 1-6 1-3 1-1 1 4 1 4 1 5 1 5 1 6 1-8 1-5 1-4 1 4 1 6 1-2 1-5 1-3 1 2 1 4 1 4 1 1 1 2 1 3 1 0 1 2 1 0 1-1 1-1 1 1 1-5 1-8 1-3 1 6 1 10 1 7 1 2 1-2 1-4 1-14 1-1 1 0 1 4 1-1 1-3 1-3 1-2 1 0 1 3 1-1 1-1 1 5 1 4 1 0 1 0 1-4 1-1 1 1 1-2 1-1 1-4 1 3 1 4 1 6 1-1 1-6 1-9 1-6 1 5 1 1 1 2 1 3 1 0 1 3 1-2 1 1 1 2 1-4 1-1 1-1 1-5 1 3 1-6 1 1 1 0 1 5 1 12 1-1 1 0 1 0 1-4 1-2 1-5 1 1 1 2 1 4 1 1 1-7 1 0 1 1 1 16 1 8 1-2 1-8 1-4 1 1 1 0 1-5 1-9 1-4 1 5 1 8 1-3 1-5 1 2 1 5 1 10 1 1 1-5 1-6 1-3 1 0 1-2 1 5 1-6 1-3 1 0 1 7 1 8 1 2 1-6 1-3 1 0 1 0 1 0 1 1 1 8 1-3 1-8 1-5 1 0 1 6 1-2 1-1 1 3 1 6 1 5"/>
<path vector-effect="non-scaling-stroke" d="M0 3033l1 1 1-6 1-8 1 6 1 9 1 5 1 2 1-6 1-5 1 3 1 2 1-4 1-2 1 2 1 3 1 5 1-2 1-4 1-1 1 1 1-3 1-4 1 3 1 6 1 4 1 0 1-3 1 0 1 5 1 1 1 0 1-2 1-1 1-6 1-2 1-5 1-1 1 3 1 0 1 2 1-2 1 2 1 2 1 3 1-7 1-3 1-1 1 1 1 2 1-3 1-2 1 3 1 3 1 2 1-3 1 1 1 1 1 3 1 1 1-6 1-1 1 0 1 7 1 5 1 1 1-3 1 3 1 2 1-1 1-4 1 2 1 0 1 2 1-2 1-6 1 2 1-2 1-1 1 3 1 3 1 8 1-3 1-3 1-7 1-8 1 0 1 7 1 7 1 9 1-7 1-6 1-6 1 1 1 6 1 0 1 5 1-2 1-1 1-7 1-2 1 4 1-2 1 1 1-5 1 7 1 10 1 1 1-4 1-5 1 1 1-3 1 3 1 3 1 6 1-5 1-9 1-3 1 7 1 3 1 1 1-1 1-2 1 1 1-2 1 3 1 4 1 4 1-8 1-10 1-7 1 3 1 7 1-2 1-6 1-2 1 9 1 9 1 1 1-5 1-5 1 0 1 3 1 1 1 3 1 2 1-3 1-2 1-5 1 7 1 4 1 0 1-7 1-9 1 3 1 3 1 9 1-2 1 0 1-3 1-3 1 1 1 2 1-2 1-4 1 3 1 4 1 8 1-1 1-3 1-6 1-3 1-2 1-1 1-2 1 5 1 6 1 9 1-1 1-2 1-8 1-4 1-4 1 3 1 5 1-5 1-1 1 2 1 1 1-1 1 1 1 3 1 3 1-3 1-3 1-4 1 4 1 7 1-3 1-8 1-4 1-1 1 7 1 0 1 1 1-1 1 3 1 4 1 3 1 3 1 2 1-7 1-4 1-3 1 0 1-1 1-3 1-4 1-1 1 9 1 11 1 2 1-4 1-3 1-6 1 1 1 0 1 2 1-2 1-5 1 2 1 1 1-1 1-2 1 2 1 3 1 7 1 6 1 1 1 2 1 0 1-1 1-8 1-3 1-2 1 4 1-1 1-2 1 1 1 3 1 2 1-2 1-2 1 1 1-6 1-4 1-4 1 6 1 9 1 4 1-2 1-5 1 0 1-3 1 5 1 0 1-3 1-7 1-5 1 3 1 2 1 2 1 0 1 0 1 5 1-1 1 0 1-6 1 2 1 3 1 2 1-1 1 1 1 2 1 1 1 0 1-5 1-2 1 3 1 8 1-1 1-3 1-4 1-3 1 1 1 6 1 0 1 4 1 0 1-2 1-1 1-1 1-5 1-8 1-9 1 3 1 7 1 9 1 4 1-4 1 3 1-1 1-4 1-9 1 4 1 9 1 5 1-2 1-6 1 1 1 9 1 2 1-7 1-6 1-1 1 4 1 0 1 5 1 1 1 3 1-7 1-8 1 3 1 7 1 8 1-6 1-7 1-2 1 4 1 1 1-7 1-9 1-4 1 8 1 7 1 5 1 0 1-5 1 3 1 0 1-2 1-8 1-5 1 9 1 7 1 1 1-3 1-4 1 4 1 5 1 1 1-6 1-8 1-8 1 3 1 9 1 9 1 1 1-4 1 7 1 6 1-1 1-12 1-7 1-2 1 0 1 1 1 0 1 3 1 8 1-4 1 1 1 4 1 3 1-4 1-4 1 5 1 1 1-4 1-4 1-1 1 5 1 4 1-11 1-8 1-4 1 9 1 0 1-1 1 1 1 4 1 7 1 3 1 0 1-2 1-6 1-3 1 3 1-2 1-4 1 0 1 3 1 4 1-2 1-4 1-1 1 2 1 3 1-1 1-5 1-4 1-1 1 4 1 5 1 4 1 0 1-5 1-7 1-1 1 1 1 0 1 7 1 4 1 6 1 0M435 3040l1-2 1-4 1-2 1-1 1 6 1-3 1-6 1 2 1 1 1-1 1 6 1 6 1 5 1-3 1-12 1-2 1 2 1 7 1 6 1-1 1 0 1-1 1-3 1-4 1-7 1-4 1-5 1 11 1 13 1 1 1-6 1-9 1-2 1 1 1 5 1 0 1 5 1-3 1-8 1-3 1 8 1 7 1-1 1-4 1-8 1 0 1 2 1 4 1 0 1 2 1 6 1-5 1 0 1 3 1 0 1-2 1-7 1-1 1 1 1 0 1 2 1 7 1-5 1-9 1-5 1 3 1 6 1 4 1 3 1 1 1-4 1-5 1-5 1 4 1 9 1-1 1-4 1-2 1 5 1 7 1 0 1-7 1-4 1 3 1 1 1 4 1-1 1 1 1 2 1 2 1-1 1-5 1-5 1 1 1 4 1-2 1 2 1 5 1 6 1-9 1-10 1-6 1 4 1 1 1 2 1 1 1 1 1 2 1-3 1 0 1 3 1 4 1 5 1 1 1-1 1-3 1-9 1 2 1 3 1-1 1-5 1-5 1 3 1 6 1 0 1-4 1 2 1-1 1 2 1 5 1 2 1 3 1-7 1-3 1 0 1 0 1 1 1-1 1 0 1-7 1 1 1 3 1 7 1 8 1 4 1 5 1-2 1-7 1-9 1-3 1 3 1 3 1-8 1-9 1 1 1 14 1 4 1-5 1-4 1 2 1 8 1-3 1-5 1-2 1 6 1 1 1-5 1-2 1 1 1 3 1-1 1-4 1-2 1 10 1 5 1 0 1 1 1-2 1-3 1-4 1-4 1 0 1 4 1 1 1 2 1-1 1 3 1 0 1 1 1 0 1 5 1 6 1 1 1-9 1-10 1-6 1 3 1 8 1-3 1-6 1-1 1 8 1 4 1-1 1-6 1 2 1 3 1-4 1-5 1-7 1 1 1 3 1 7 1-1 1-3 1-2 1 2 1 6 1-5 1 8 1 6 1 6 1-3 1-4 1-2 1-5 1-6 1-5 1-1 1 2 1 6 1 5 1 2 1-4 1-8 1-1 1 8 1 7 1 2 1-5 1 1 1-2 1-3 1-2 1-6 1 2 1 6 1 3 1 0 1 4 1 1 1-2 1-5 1-1 1 1 1 2 1 2 1 3 1 2 1 1 1-2 1-6 1 0 1-1 1-4 1-2 1 3 1 4 1 1 1-3 1 5 1 5 1-2 1-3 1-8 1-3 1 1 1 5 1 0 1 3 1-6 1-2 1 3 1 3 1-1 1-1 1 2 1 7 1 4 1-13 1-9 1-2 1 10 1 9 1 1 1-2 1-2 1-4 1 0 1 3 1-1 1 2 1 0 1-7 1-10 1-1 1 3 1 5 1 3 1-6 1-3 1 1 1 3 1-3 1-1 1 4 1 0 1-4 1-2 1 5 1 0 1 0 1 3 1 1 1 1 1-9 1-2 1 4 1 9 1 4 1-5 1-1 1 4 1 2 1-8 1-4 1-1 1 2 1 1 1-3 1 4 1 6 1 2 1-7 1-4 1 1 1 6 1-2 1 1 1 1 1-1 1 6 1 3 1-3 1-7 1-4 1-3 1 5 1 6 1 2 1-1 1-2 1 2 1 2 1 4 1 4 1-1 1 3 1-3 1-2 1-5 1-4 1 2 1 1 1 3 1 3 1-4 1-3 1 0 1 5 1 3 1 4 1 0 1 2 1 3 1 0 1-2 1-9 1-3 1-1 1 1 1-2 1-2 1 2 1-2 1-3 1-2 1 4 1 7 1-1 1-2 1-3 1 3 1 3 1 1 1-4 1-1 1-3 1-1 1-4 1-6 1-3 1-5 1 3 1 11 1 6 1-1 1-4 1-5 1 9 1 5 1 4 1 2 1-2 1 4 1-9 1-4 1-6 1-3 1-4 1-6 1 2 1 9 1 5 1 1 1 0 1-2 1 5 1-1 1 0 1-2 1 0 1 1 1-4 1 1 1 2 1 0 1 1 1-3 1 2 1 5 1 2 1-3 1 2 1 2 1 1 1-7 1-7 1 1 1 0 1 7 1 0 1-3 1-2 1 5 1 11 1-2 1-9 1-9 1 1 1 8 1 0 1-3 1-5 1-2 1 8 1-1 1-6 1 0 1 3 1-2 1 5 1 8 1 3 1 0 1-9 1-5 1 4 1 9 1-6 1-1 1-3 1-1 1 2 1 0 1-2 1-3 1 3 1-2 1 2 1 0 1 4 1 9 1 6 1 3 1-8 1-7 1-4 1-1 1-5 1-2 1 5 1 10 1 8 1-2 1-3 1-5 1 0 1 2 1-3 1-1 1-6 1-2 1 7 1 8 1 8 1-6 1-6 1-4 1 1 1 3 1-5 1-4 1-3 1 5 1 7 1 4 1-4 1-7 1-2 1 4 1 1 1-2 1 1 1 0 1 3 1-1 1 1 1 0 1-1 1-2 1 1 1 1 1 6 1 1 1-4 1-4 1-2 1-5 1-1 1-3 1 5 1 3 1-1 1 2 1 0 1-3 1-3 1-2 1-2 1 7 1-3 1 2 1 2 1-2 1-4 1 0 1-3 1 3 1 4 1 5 1 3 1 3 1-7 1-4 1 0 1 1 1-3 1-2 1 0 1 6 1 0 1 0 1 1 1-4 1 3 1-5 1-2 1 3 1 2 1 0 1-2 1 1 1 6 1 0 1-1 1 0 1 4 1-2 1-2 1-4 1 0 1 6 1 1 1-6 1-4 1 3 1 4 1 2 1 5 1 3 1-1 1-3 1-7 1-2 1-1 1 1 1 1 1 2 1 6 1-1 1-5 1-3 1 4 1 5 1 1 1 0 1 0 1 5 1 3 1-5 1-9 1 2 1 4 1 1 1-6 1-2 1 7 1 3 1-3 1-10 1-8 1 4 1 7 1 6 1 1 1-3 1-2 1 3 1-2 1-5 1-2 1 0 1 10 1 9 1 4 1-6 1-7 1-3 1 4 1 1 1 1 1 1 1 1 1 0 1-9 1-9 1 5 1 6 1 8 1 0 1-3 1-5 1-2 1-1 1 2 1 3 1-5 1-6 1-6 1-4 1 3 1 7 1 7 1 2 1-3 1 3 1 1 1-4 1-8 1-5 1 3 1 5 1 4 1-3 1-4 1 2 1 0 1 6 1-2 1-2 1-5 1-7 1 0 1 3 1 6 1 2 1-4 1-3 1-2 1 2 1 4 1 4 1 1 1-2 1 4 1-3 1-2 1 2 1 1 1 0 1 3 1 4 1-11 1-6 1-1 1 10 1 0 1 1 1 3 1-1 1 3 1-9 1 1 1 5 1 9 1 3 1-3 1-6 1 0 1 2 1 6 1-5 1-5 1-5 1-1 1 2 1-2 1 0 1 0 1 7 1 5 1-5 1-2 1 4 1 4 1 4 1-4 1-2 1-3 1-4 1-5 1 5 1 11 1 3 1-3 1-6 1 3 1 2 1 3 1 0 1 0 1-4 1-8 1-3 1 0 1 5 1-1 1 2"/>
<path vector-effect="non-scaling-stroke" d="M0 3107l1 3 1-5 1-2 1 3 1 9 1 3 1-6 1-3 1 1 1 1 1 2 1-3 1-1 1 0 1 4 1 8 1 5 1-6 1-5 1-1 1 4 1-3 1-8 1-7 1 8 1 10 1 3 1-5 1-3 1 3 1 1 1 1 1-5 1-1 1 2 1 0 1-1 1 1 1-4 1 1 1 3 1 0 1 0 1 0 1-1 1 0 1-5 1 3 1 4 1 0 1-4 1-6 1 0 1 5 1 0 1-1 1 5 1 5 1 0 1-9 1-5 1 5 1 8 1-1 1-1 1-2 1 1 1-2 1-2 1 0 1 4 1 0 1-3 1 1 1 0 1 2 1-3 1 0 1 3 1-1 1-1 1-3 1 2 1-5 1-3 1 4 1 7 1 2 1-5 1-3 1-1 1 1 1 1 1 3 1 4 1-2 1-8 1-4 1 2 1 2 1 0 1-6 1-2 1 12 1-1 1 0 1 0 1 7 1 0 1-7 1-6 1 1 1 9 1 8 1-5 1-4 1-1 1 2 1 1 1-5 1-1 1-1 1 3 1-1 1 3 1 2 1 4 1-4 1-12 1-8 1 0 1 6 1 3 1-2 1-2 1 5 1 6 1 4 1 3 1-4 1-2 1 1 1 2 1-4 1-3 1 6 1 6 1 0 1-2 1-2 1 3 1-2 1-3 1-9 1 0 1 10 1 1 1-7 1-5 1 6 1 3 1-4 1-6 1 2 1 5 1 2 1-2 1-3 1 1 1-4 1-6 1 0 1 1 1 5 1 3 1 4 1 9 1 6 1-4 1-12 1-4 1 1 1 3 1-2 1-7 1 1 1 10 1 8 1-6 1-5 1-7 1 4 1 4 1 1 1-1 1 4 1 1 1-1 1-5 1 0 1 2 1-3 1-5 1-3 1 12 1 9 1 4 1 0 1-2 1-2 1-1 1-2 1 6 1 6 1-3 1-8 1-7 1 1 1 4 1-1 1 3 1-2 1-3 1 3 1 4 1 7 1 0 1-7 1-5 1-1 1-1 1-13 1-10 1 7 1 10 1 8 1-7 1-1 1 8 1 9 1 2 1-7 1-9 1-6 1 1 1 6 1 1 1-8 1-6 1 4 1 8 1 5 1-5 1-13 1-3 1 4 1 4 1 3 1 2 1 0 1 1 1 2 1 1 1-2 1-1 1-1 1-3 1 1 1-5 1-2 1 3 1 4 1 5 1-1 1-3 1-1 1 1 1 6 1 4 1 1 1-2 1 1 1 1 1-2 1-3 1-5 1-4 1 0 1-1 1 2 1 6 1 1 1 6 1-3 1-2 1-3 1-1 1 13 1 3 1-3 1-13 1-7 1 5 1 5 1-5 1-12 1 0 1 10 1 11 1-2 1-11 1 1 1 8 1 1 1-1 1-1 1 9 1 3 1-5 1-5 1-2 1 0 1-2 1-5 1 1 1 4 1 1 1 6 1 4 1 3 1 0 1-3 1-4 1-1 1-1 1-5 1-2 1-4 1 2 1 1 1 3 1 5 1-6 1-1 1 2 1 0 1-3 1-3 1-1 1 8 1 3 1-2 1-4 1-3 1 4 1-1 1 0 1 5 1 7 1-1 1-3 1-5 1-5 1 10 1 4 1 2 1-2 1-2 1 2 1-3 1 4 1-1 1-6 1-4 1-3 1 1 1 5 1 7 1 4 1-3 1-4 1-9 1 5 1 4 1 4 1 0 1 0 1 4 1-4 1 3 1-3 1 0 1-5 1-8 1-6 1 1 1 3 1 3 1 1 1-3 1 2 1 3 1 5 1 6 1-4 1-5 1-7 1 0 1 4 1 3 1-5 1-2 1 3 1 1 1 0 1-4 1 2 1 0 1-3 1 1 1 1 1 6 1-5 1-8 1-4 1 5 1 0 1 0 1 1 1-3 1 7 1 0 1-4 1 3M435 3107l1-1 1 2 1 6 1 4 1 1 1-3 1-6 1-3 1 3 1 0 1-4 1 0 1 3 1 4 1 6 1-5 1-5 1 2 1 5 1 3 1-2 1 1 1-1 1-1 1-6 1-3 1-1 1 8 1-1 1-11 1 0 1 3 1 8 1 0 1-9 1-2 1-1 1 2 1 1 1 0 1 2 1-1 1-3 1 6 1 10 1 2 1-2 1-7 1-3 1-3 1 2 1 1 1 4 1 0 1-4 1-2 1 6 1 9 1 3 1-7 1-11 1-2 1 3 1 9 1 2 1-4 1-8 1-1 1 2 1 1 1-6 1-2 1 5 1 9 1-1 1-9 1 1 1 11 1 8 1 0 1-8 1 0 1 1 1-1 1-4 1-3 1 4 1-1 1-2 1 4 1-1 1-1 1-8 1 1 1 9 1 1 1 0 1-7 1-1 1 3 1 2 1 0 1 3 1-3 1 2 1-1 1 0 1-6 1-1 1-4 1 1 1-2 1-1 1 5 1 6 1 5 1 3 1-2 1-4 1 4 1 3 1-6 1-8 1-7 1-1 1 9 1 4 1-2 1-1 1 6 1 4 1 0 1-3 1-2 1 3 1 3 1-3 1-2 1-2 1 5 1 0 1-2 1-3 1 5 1-1 1 5 1 1 1 7 1 6 1-4 1-10 1-12 1 1 1 2 1 4 1-1 1 3 1-2 1 4 1-5 1-4 1 1 1-2 1-3 1 0 1-8 1-1 1 7 1-1 1 2 1 1 1 1 1-6 1-6 1 3 1 12 1 6 1-4 1-5 1 0 1 0 1-3 1-2 1 1 1 3 1 4 1 1 1-3 1 1 1-5 1-4 1 2 1 7 1 4 1 2 1-3 1-2 1 2 1-3 1 0 1 1 1 3 1-1 1-2 1-4 1 0 1 3 1 3 1 0 1-6 1-3 1 0 1 2 1 0 1 1 1 2 1 5 1-4 1-4 1-1 1 9 1 4 1 1 1-5 1-1 1 6 1 3 1-2 1-2 1-8 1-6 1-6 1 9 1 5 1 1 1 1 1-4 1 5 1-1 1-6 1-1 1 8 1 0 1-2 1-8 1-1 1 2 1 0 1 4 1 8 1 3 1 0 1-4 1-8 1 2 1-3 1-4 1 1 1-2 1 6 1 12 1-1 1-4 1-3 1-3 1 2 1 3 1 3 1 3 1 3 1-7 1-8 1-4 1 0 1 4 1 3 1 1 1 1 1-4 1 3 1 3 1-1 1 2 1-3 1 3 1-3 1-8 1-4 1 1 1 6 1 9 1 3 1-3 1-9 1-7 1 3 1 10 1 9 1-1 1-6 1-8 1-1 1 4 1-2 1 6 1 4 1-1 1-4 1-6 1 1 1-4 1 3 1-3 1 5 1-1 1-2 1 4 1-5 1-2 1-5 1-7 1 4 1 5 1 2 1 1 1 1 1 7 1-3 1-3 1 0 1 3 1-2 1-3 1-4 1 7 1 6 1-2 1-6 1-3 1 4 1 1 1-2 1 3 1 3 1 6 1-4 1-3 1 1 1 2 1-2 1-2 1 3 1 3 1 4 1 3 1-2 1-2 1-4 1-6 1 0 1 1 1 3 1 3 1 3 1-7 1-1 1 1 1 5 1 0 1-2 1-1 1 3 1 0 1-4 1-7 1 6 1 8 1 1 1-5 1-4 1-2 1-2 1 1 1 2 1 8 1 3 1-3 1-5 1 7 1 3 1-13 1-8 1 8 1 7 1 1 1-11 1 1 1 8 1 8 1-11 1-2 1 8 1 1 1-4 1-14 1 3 1 11 1 2 1-3 1-6 1 3 1 4 1-6 1-11 1-6 1 0 1 7 1 5 1 5 1 4 1-2 1 0 1-1 1-2 1 4 1-4 1-1 1 2 1-1 1-3 1-3 1-1 1-11 1-2 1 4 1 4 1 5 1 0 1 2 1 4 1-1 1-3 1-1 1 2 1 3 1-2 1-2 1-1 1-1 1 1 1 0 1-1 1 1 1 3 1 3 1 3 1-1 1 2 1 0 1-3 1 1 1 4 1 4 1-1 1-12 1-10 1 0 1 14 1 14 1 3 1-5 1-8 1-3 1 1 1 1 1 4 1-4 1 0 1-1 1-6 1 0 1-2 1 3 1 5 1 5 1 0 1 2 1 4 1-4 1-7 1-2 1 2 1 6 1-5 1-7 1-5 1 5 1 8 1 4 1 0 1-2 1-3 1-2 1-7 1 1 1 8 1 9 1 1 1-7 1-6 1 2 1 6 1 5 1-2 1-7 1-3 1 3 1 6 1 6 1-1 1-9 1-2 1 0 1 8 1-5 1-10 1-4 1 5 1 14 1 2 1-12 1-9 1 9 1 8 1-2 1-12 1-6 1 7 1 6 1-1 1-4 1 2 1-2 1 1 1-6 1 2 1-4 1-9 1 2 1 13 1 12 1-4 1-12 1-6 1 8 1 4 1-2 1-5 1 0 1 4 1 1 1-2 1-3 1-4 1-3 1 0 1 11 1 6 1-2 1-2 1-2 1-4 1-10 1-1 1 11 1 15 1 6 1-12 1-3 1 2 1 2 1-8 1 1 1 7 1 5 1-2 1-4 1 0 1 4 1 2 1-9 1-4 1 4 1 7 1-3 1-4 1 6 1 0 1-5 1-2 1 1 1 8 1-1 1-7 1-1 1 7 1-2 1-4 1 1 1 5 1 2 1-2 1-9 1 3 1 3 1 0 1-5 1-7 1 5 1 8 1 2 1 2 1 3 1 0 1-1 1-6 1-1 1 1 1 1 1-1 1-1 1 0 1 3 1 1 1-6 1-7 1-1 1 7 1 7 1 6 1-2 1 3 1-2 1-8 1-3 1 0 1 3 1-3 1-3 1-1 1 4 1 2 1-1 1-4 1 2 1-4 1 1 1-1 1 6 1 9 1-2 1-6 1 1 1 0 1 0 1-1 1 0 1 2 1 2 1 3 1-4 1 6 1 0 1-4 1-6 1 5 1 1 1-1 1-8 1-5 1 3 1 8 1 4 1 3 1 0 1 2 1-5 1-6 1 0 1-1 1 3 1-9 1-2 1 2 1 2 1-1 1-4 1 3 1 6 1 5 1 1 1-2 1-1 1-2 1-6 1-5 1 3 1 3 1 0 1-2 1-4 1-2 1 7 1 4 1-3 1-9 1-1 1 7 1 6 1-2 1-1 1 1 1 4 1 0 1-5 1-7 1-3 1 0 1 4 1 9 1 8 1 2 1-8 1-5 1 2 1 9 1 0 1-10 1-2 1 2 1 0 1 1 1 0 1 4 1 1 1-5 1-10 1 5 1 11 1 9 1-7 1-3 1 4 1 10 1 1 1-10 1-4 1 3 1 3 1-3 1-4 1-6 1 1 1 1 1-3 1-3 1 5 1 7 1 6 1-5 1-2 1 1 1 1 1-1 1-8 1-3 1 4 1 5 1 2 1-7 1 0 1 4 1 2 1 3 1-3 1-3 1 1 1 1 1-2"/>
<path vector-effect="non-scaling-stroke" d="M0 3192l1-6 1-8 1-5 1 8 1 7 1 3 1 1 1-1 1-1 1-5 1-3 1 0 1-1 1-4 1-1 1 9 1 9 1 1 1-6 1 1 1 0 1 1 1-7 1 1 1 4 1 2 1-1 1-3 1 4 1 5 1 2 1-3 1-2 1 0 1 3 1-1 1-1 1 0 1-1 1 3 1 5 1 4 1-5 1-11 1-7 1 5 1 7 1 2 1-6 1-11 1 0 1 9 1 6 1-5 1-2 1-1 1 4 1 3 1-3 1-5 1 4 1 4 1 1 1-5 1-2 1 7 1 4 1 1 1-1 1-1 1-1 1-2 1 0 1 8 1-3 1 0 1-8 1-7 1-3 1 2 1 3 1 4 1 5 1-5 1 2 1-3 1-2 1-1 1 3 1 6 1-4 1-5 1-1 1 7 1 9 1-4 1-12 1-4 1 0 1 8 1-7 1-6 1 0 1 3 1 3 1 2 1 8 1 0 1-2 1-6 1 0 1 2 1 0 1-2 1 1 1 2 1 0 1-2 1-1 1 1 1 2 1 4 1-7 1 0 1-3 1 4 1 4 1-3 1-9 1-8 1-1 1 11 1-3 1-2 1-1 1 8 1 14 1 0 1-3 1-3 1-4 1-3 1-3 1-4 1 8 1 5 1 1 1-4 1 1 1 11 1 10 1-5 1-14 1-12 1 4 1 9 1 0 1-3 1-6 1 1 1 6 1 0 1-1 1-1 1-4 1 1 1 3 1 3 1 3 1 2 1-1 1-6 1-2 1 2 1 8 1 8 1 1 1-6 1-8 1 0 1 3 1 5 1 0 1-7 1-5 1-3 1 4 1 6 1-1 1-6 1 2 1 10 1 3 1-4 1-6 1-4 1 0 1-1 1-4 1 4 1 8 1-1 1-11 1 2 1 7 1 5 1-5 1-6 1-2 1 15 1 6 1-11 1-9 1 2 1 7 1 5 1-4 1-4 1-2 1 1 1 5 1-2 1-2 1-4 1 5 1 8 1 4 1-1 1-10 1-3 1 2 1-8 1-3 1 0 1 11 1 6 1-6 1-7 1 3 1 11 1 5 1-4 1-5 1-3 1 3 1 1 1-7 1-1 1-7 1 0 1 5 1 0 1-2 1-8 1-4 1 6 1 7 1 3 1 7 1 4 1-2 1-4 1-5 1-4 1-4 1-4 1 2 1 7 1 3 1 2 1 5 1 1 1-2 1-8 1-2 1 1 1 5 1 5 1 4 1 4 1 0 1-7 1-11 1-3 1 6 1 2 1-1 1 0 1 3 1 5 1 5 1 0 1-3 1-5 1-2 1 3 1 0 1 2 1-2 1 1 1-6 1-5 1-4 1-4 1 0 1 6 1 5 1 4 1 5 1-6 1-6 1-3 1-2 1 8 1-4 1-2 1-4 1 2 1 8 1 5 1 0 1-1 1-8 1-1 1 6 1 0 1 0 1-3 1 3 1 6 1 2 1-2 1-4 1-3 1 0 1-5 1 2 1 5 1 3 1-6 1-5 1 0 1 2 1-2 1 3 1 1 1 2 1-1 1-4 1 3 1-1 1-4 1-2 1 4 1 7 1 1 1-3 1 0 1 9 1 6 1-2 1-9 1-4 1 1 1 2 1 7 1 8 1 3 1-8 1-5 1 2 1 6 1-2 1-8 1-4 1 3 1 4 1-5 1 1 1-1 1-2 1 3 1 0 1 1 1-1 1 3 1-3 1 4 1-2 1 4 1-2 1 0 1-4 1-9 1-3 1 2 1 3 1-4 1 2 1 4 1 5 1 2 1-2 1-5 1 1 1 0 1-1 1 3 1 0 1-5 1-2 1 2 1 5 1-4 1-3 1-4 1 4 1 8 1-1 1-6 1 0 1 6 1 1 1-8 1-12 1-8 1 7 1 10 1 4 1 3 1 1 1 1 1 2 1-2M435 3191l1-4 1 4 1 0 1 0 1-4 1 0 1 10 1-2 1-3 1-6 1-5 1 2 1-2 1 0 1 1 1 8 1 3 1-1 1 1 1 2 1 1 1-4 1-6 1-2 1 3 1 5 1 2 1-2 1-2 1-7 1-7 1-3 1 1 1-3 1 5 1 6 1 8 1-2 1-1 1 0 1-2 1-2 1-4 1 7 1 3 1 1 1-3 1-5 1 5 1 7 1-3 1-5 1-5 1 1 1 7 1 2 1-2 1-2 1 2 1 6 1 5 1 1 1-7 1-8 1-3 1-2 1 3 1 4 1 0 1-3 1-5 1 3 1 2 1 1 1-3 1-1 1 6 1 1 1-3 1-2 1 0 1 7 1 2 1-2 1-3 1 3 1 6 1-5 1-12 1-9 1 6 1 14 1 8 1-1 1-3 1-4 1-1 1 0 1 2 1 4 1-1 1-6 1 0 1 4 1 2 1-2 1-9 1-3 1-3 1 0 1 1 1-2 1 0 1 8 1 6 1 0 1-3 1-5 1 13 1 13 1-2 1-12 1-7 1 2 1 6 1-3 1-6 1-3 1 6 1 7 1-4 1-2 1 3 1 4 1 2 1-3 1 0 1-4 1 0 1 1 1-1 1-5 1-3 1 4 1-3 1 1 1 1 1 2 1 4 1 5 1 6 1 1 1-7 1-6 1-7 1-2 1 6 1 0 1 0 1 0 1-5 1 6 1-8 1-3 1-2 1 3 1 4 1 0 1-2 1 0 1 1 1-8 1 2 1 7 1 4 1-6 1-8 1-5 1 7 1 6 1 1 1-1 1-1 1-5 1 1 1 4 1 5 1 1 1-2 1 2 1-1 1-2 1-4 1 1 1 7 1 4 1-5 1 2 1 4 1 0 1-1 1-4 1-3 1 0 1 0 1 4 1 5 1-6 1-7 1 2 1 8 1 4 1-3 1-13 1-4 1-2 1-5 1 5 1 9 1 5 1-1 1-3 1 3 1 3 1-1 1-4 1 3 1-1 1 8 1 6 1 2 1-5 1-10 1-7 1 0 1 1 1 1 1 7 1 3 1 2 1-6 1-1 1 6 1 5 1-1 1-8 1 0 1 2 1-1 1-6 1-4 1 2 1 7 1 7 1-1 1-4 1-5 1-1 1 1 1 1 1-3 1 1 1 8 1 11 1-1 1-9 1-10 1-2 1 5 1 3 1 0 1 3 1 4 1-1 1-6 1-5 1 3 1 7 1 3 1-6 1-5 1-3 1 1 1 3 1 0 1 4 1 1 1-5 1-7 1-4 1 2 1 5 1 5 1 2 1 4 1-6 1-6 1-11 1-1 1 16 1 9 1-1 1-5 1-1 1 5 1 3 1-6 1-7 1-4 1 0 1-5 1 4 1 3 1 3 1 2 1-5 1 0 1 0 1 0 1-5 1 1 1 1 1-2 1 0 1-1 1 0 1-1 1-3 1 4 1 10 1 1 1-4 1-10 1 2 1 3 1 4 1 2 1 2 1-2 1-3 1-1 1-3 1 2 1 2 1 0 1-2 1 7 1 0 1 1 1-3 1 0 1 5 1 5 1 1 1-7 1-4 1 1 1 4 1 5 1 5 1-7 1-6 1-4 1 7 1 4 1 2 1 4 1-2 1-2 1-3 1 2 1 0 1-3 1-3 1 6 1 5 1 2 1-7 1-4 1 4 1 2 1 1 1-3 1-2 1 1 1-1 1 0 1 5 1 1 1-2 1-5 1 3 1 3 1-1 1-6 1-1 1 2 1 1 1 0 1-2 1 1 1 1 1 0 1-6 1-2 1 0 1-5 1 3 1 6 1 10 1 3 1-6 1-2 1-1 1 3 1-5 1-11 1-5 1 7 1 5 1 2 1 2 1-5 1-2 1 0 1 2 1 0 1 6 1 3 1 6 1-4 1-3 1-4 1-4 1-4 1-4 1-4 1 0 1 3 1 4 1 2 1-1 1 4 1 3 1-2 1-1 1 4 1-4 1-4 1-10 1 1 1 6 1 10 1 6 1-5 1-2 1-5 1-3 1 0 1 6 1 4 1-3 1-9 1-5 1 3 1 9 1 6 1-4 1-6 1-3 1 7 1 5 1 5 1-3 1-6 1-3 1 1 1 0 1-5 1 0 1 1 1 7 1 0 1-8 1-2 1 3 1 8 1 1 1 0 1 0 1 4 1-4 1-5 1-4 1 2 1 6 1-3 1-3 1-3 1 9 1 0 1-1 1-10 1-1 1 5 1 7 1 3 1-1 1 3 1 7 1 2 1-9 1-9 1 2 1 9 1 4 1-4 1-4 1 3 1 2 1-1 1-4 1-1 1-1 1 0 1-1 1 3 1 2 1-6 1-1 1 1 1 5 1 0 1-3 1 3 1 2 1 0 1-1 1-6 1-3 1 4 1 1 1 1 1 0 1 4 1 2 1-1 1 3 1-4 1-8 1 0 1 2 1 9 1 1 1 3 1-2 1-2 1-4 1-4 1 3 1 1 1 3 1 1 1-5 1-1 1 2 1 1 1-1 1-2 1 3 1-2 1 1 1 1 1-2 1-3 1-1 1 0 1 1 1-1 1 0 1 2 1-2 1-4 1-7 1-3 1 6 1 1 1 5 1 7 1-2 1 2 1-1 1-3 1-2 1-9 1-7 1 4 1 11 1 4 1-4 1-4 1-3 1-1 1-1 1 5 1 6 1 6 1-3 1-5 1-2 1 1 1-1 1-8 1 5 1 9 1 4 1-2 1-4 1-2 1-1 1 0 1-5 1-1 1 4 1 6 1 3 1 0 1-2 1-3 1-3 1-2 1-3 1-2 1 3 1 7 1 3 1 5 1-5 1-2 1-1 1 1 1 4 1-2 1-2 1 0 1-1 1 0 1 4 1-2 1-3 1-8 1-5 1 3 1 7 1 2 1 2 1 1 1-2 1-3 1-3 1 0 1 1 1 6 1 0 1-3 1-2 1 4 1 3 1 2 1-3 1 2 1 4 1-1 1-3 1-1 1 2 1 3 1 4 1-2 1-8 1-8 1-4 1-3 1 9 1 7 1 11 1 1 1-5 1-4 1-2 1 1 1 0 1 2 1-1 1 3 1-2 1-9 1 1 1 11 1 0 1-7 1-3 1-1 1 5 1 5 1 1 1 0 1-1 1 1 1-2 1 3 1-3 1 2 1 2 1 1 1 2 1-6 1-7 1-5 1 0 1 0 1 3 1 5 1 1 1 0 1 3 1 0 1-3 1-6 1-7 1 4 1 7 1-1 1-5 1 0 1 6 1 3 1-1 1 2 1-2 1-4 1-5 1-10 1 2 1 5 1 2 1 2 1 0 1 3 1-4 1-5 1 0 1 7 1 5 1 7 1 4 1 4 1-5 1-13 1-6 1-2 1 4 1-2 1 0 1-4 1 3 1 3 1 5 1 0 1 0 1 5 1 1 1 4 1-4 1-6 1-5 1 2 1 1 1 1 1-2 1-3 1 0 1 2 1 4 1 2 1 0 1 3 1 1 1-2"/>
</g>
<g font-family='Noto Sans CJK SC, DejaVu Sans Condensed, sans-serif' font-size="40.8" fill="#2f2f2f" text-anchor="end" letter-spacing="0.55">
<text x="317.1" y="414.3">Fp2</text>
<text x="317.1" y="452.7">F8</text>
<text x="317.1" y="491.1">FT10</text>
<text x="317.1" y="529.5">F4</text>
<text x="317.1" y="567.8">FC6</text>
<text x="317.1" y="606.2">T8</text>
<text x="317.1" y="644.6">C4</text>
<text x="317.1" y="683.0">CP6</text>
<text x="317.1" y="721.4">P8</text>
<text x="317.1" y="759.8">P4</text>
<text x="317.1" y="798.2">AFz</text>
<text x="317.1" y="836.6">Fz</text>
<text x="317.1" y="874.9">FC1</text>
<text x="317.1" y="913.3">FCz</text>
<text x="317.1" y="951.7">FC2</text>
<text x="317.1" y="990.1">Cz</text>
<text x="317.1" y="1028.5">CP1</text>
<text x="317.1" y="1066.9">CP2</text>
<text x="317.1" y="1105.3">Pz</text>
<text x="317.1" y="1143.7">O1</text>
<text x="317.1" y="1182.0">Oz</text>
<text x="317.1" y="1220.4">O2</text>
<text x="317.1" y="1258.8">Fp1</text>
<text x="317.1" y="1297.2">F7</text>
<text x="317.1" y="1335.6">FT9</text>
<text x="317.1" y="1374.0">F3</text>
<text x="317.1" y="1412.4">FC5</text>
<text x="317.1" y="1450.7">T7</text>
<text x="317.1" y="1489.1">C3</text>
<text x="317.1" y="1527.5">CP5</text>
<text x="317.1" y="1565.9">P7</text>
<text x="317.1" y="1604.3">P3</text>
</g>
<g font-family="Noto Sans CJK SC, DejaVu Sans Condensed, sans-serif" font-size="41" fill="#2f2f2f" text-anchor="end" letter-spacing="0.9">
<text x="342.2" y="1660.2">530s</text>
<text x="587.0" y="1660.2">531s</text>
<text x="831.8" y="1660.2">532s</text>
<text x="1076.6" y="1660.2">533s</text>
<text x="1321.4" y="1660.2">524s</text>
<text x="1566.2" y="1660.2">525s</text>
<text x="1811.0" y="1660.2">526s</text>
<text x="2055.8" y="1660.2">527s</text>
<text x="2300.6" y="1660.2">528s</text>
<text x="2545.4" y="1660.2">529s</text>
</g>
<g font-family="Noto Sans CJK SC, DejaVu Sans Condensed, sans-serif" font-size="41" fill="#2f2f2f" letter-spacing="0.45">
<text x="1664.2" y="483.7">sw_test-0</text>
<text x="1943.2" y="629.0">sw_test-1</text>
<text x="2253.2" y="774.2">sw_test-2</text>
<text x="2548.2" y="919.5">sw_test-3</text>
<text x="395.2" y="1064.7">sw_test-4</text>
<text x="689.2" y="1210.0">sw_test-5</text>
<text x="984.2" y="1355.2">sw_test-6</text>
</g>
<rect x="2129" y="598.6" width="4.7" height="30" fill="#2f2f2f"/>
<path d="M1663 316V1681.5M1958 316V1681.5M2252 316V1681.5M2547 316V1681.5M394 316V1681.5M688 316V1681.5M983 316V1681.5" stroke="#ff0060" stroke-width="2" fill="none"/>
<path d="M1213 316V1681.5" stroke="#000" stroke-width="2" fill="none"/>
<rect x="2814" y="347" width="32" height="1304" fill="url(#dith)" shape-rendering="crispEdges"/>
<rect x="2815.1" y="316.9" width="29.9" height="29.9" fill="#fff"/><path d="M2815.6 345.6V317.4H2843.2" stroke="#3a3a3a" stroke-width="1" fill="none"/><path d="M2845.2 315.7V347.8M2813.9 347H2846" stroke="#000" stroke-width="1.6" fill="none"/><path d="M2822.2 338L2830.2 330.6L2838.2 338" stroke="#000" stroke-width="2.7" fill="none" stroke-linecap="round" stroke-linejoin="round"/>
<rect x="2815.1" y="1651" width="29.9" height="29.9" fill="#fff"/><path d="M2815.6 1679.7V1651.5H2843.2" stroke="#3a3a3a" stroke-width="1" fill="none"/><path d="M2845.2 1649.8V1681.9M2813.9 1681.1H2846" stroke="#000" stroke-width="1.6" fill="none"/><path d="M2822.2 1662.6L2830.2 1670L2838.2 1662.6" stroke="#000" stroke-width="2.7" fill="none" stroke-linecap="round" stroke-linejoin="round"/>
<rect x="190.7" y="1731.1" width="30.1" height="30.1" fill="#fff"/><path d="M191.2 1760V1731.6H219" stroke="#3a3a3a" stroke-width="1" fill="none"/><path d="M221 1729.9V1762.2M189.5 1761.4H221.8" stroke="#000" stroke-width="1.6" fill="none"/><path d="M210 1739.7L201.7 1748L210 1756.1" stroke="#000" stroke-width="2.7" fill="none" stroke-linecap="round" stroke-linejoin="round"/>
<rect x="2791.1" y="1731.1" width="46.2" height="30.1" fill="#fff"/><path d="M2791.6 1760V1731.6H2835.5" stroke="#3a3a3a" stroke-width="1" fill="none"/><path d="M2837.5 1729.9V1762.2M2789.9 1761.4H2838.3" stroke="#000" stroke-width="1.6" fill="none"/>
<rect x="2839.3" y="1731.1" width="30.1" height="30.1" fill="#fff"/><path d="M2839.8 1760V1731.6H2867.6" stroke="#3a3a3a" stroke-width="1" fill="none"/><path d="M2869.6 1729.9V1762.2M2838.1 1761.4H2870.4" stroke="#000" stroke-width="1.6" fill="none"/><path d="M2849.9 1739.7L2858.2 1748L2849.9 1756.1" stroke="#000" stroke-width="2.7" fill="none" stroke-linecap="round" stroke-linejoin="round"/>
</svg>
</main>
<footer>
<div class="abs" style="left:120px;top:1832px;width:2820px;height:4px;background:#d3d3d3"></div>
<span class="t" style="left:140.00px;top:1859px;font:normal 700 31.20px/31.20px 'Liberation Sans', sans-serif;letter-spacing:-0.496px;color:#000;">Connected to Explore_DAAV</span>
<span class="t" style="left:905.50px;top:1859px;font:normal 400 31.20px/31.20px 'Liberation Sans', sans-serif;letter-spacing:0.214px;color:#000;-webkit-text-stroke:0.45px #000;">Firmware Version</span>
<span class="t" style="left:1170.00px;top:1859px;font:normal 400 31.20px/31.20px 'Liberation Sans', sans-serif;letter-spacing:-0.380px;color:#000;-webkit-text-stroke:0.45px #000;">9.0.7</span>
<span class="t" style="left:1588.80px;top:1859px;font:normal 400 31.20px/31.20px 'Liberation Sans', sans-serif;letter-spacing:0.232px;color:#000;-webkit-text-stroke:0.45px #000;">Battery</span>
<span class="t" style="left:1704.70px;top:1859px;font:normal 400 31.20px/31.20px 'Liberation Sans', sans-serif;letter-spacing:0.505px;color:#000;-webkit-text-stroke:0.45px #000;">36%</span>
<span class="t" style="left:2121.20px;top:1859px;font:normal 400 31.20px/31.20px 'Liberation Sans', sans-serif;letter-spacing:0.398px;color:#000;-webkit-text-stroke:0.45px #000;">Device Temperature</span>
<span class="t" style="left:2429.00px;top:1859px;font:normal 400 31.20px/31.20px 'Liberation Sans', sans-serif;letter-spacing:-0.936px;color:#000;-webkit-text-stroke:0.45px #000;">31 ºC</span>
<span class="t" style="left:2862.40px;top:1859px;font:normal 400 31.20px/31.20px 'Liberation Sans', sans-serif;letter-spacing:-0.605px;color:#000;-webkit-text-stroke:0.45px #000;">1.4.0</span>
</footer>
<section role="dialog" aria-label="LSL Settings">
<div class="dlg">
<div class="dlgin">
<div class="tb"></div>
</div></div>
<div class="abs" style="left:786px;top:564px;width:24px;height:24px;background:#ec6a5e;border-radius:50%"></div>
<div class="abs" style="left:826px;top:564px;width:24px;height:24px;background:#5c5a5c;border-radius:50%"></div>
<div class="abs" style="left:866px;top:564px;width:24px;height:24px;background:#61c554;border-radius:50%"></div>
<span class="t" style="left:1367.90px;top:562px;font:normal 700 26.80px/26.80px 'Liberation Sans', sans-serif;letter-spacing:-0.069px;color:#b6b4b6;">LSL Settings</span>
<span class="t" style="left:808.70px;top:727px;font:normal 400 33.70px/33.70px 'Liberation Sans', sans-serif;letter-spacing:0.112px;color:#000;-webkit-text-stroke:0.45px #000;">Use these options to...</span>
<div class="abs" style="left:870.3px;top:803.2px;width:11.4px;height:11.4px;background:#000;border-radius:50%"></div>
<span class="t" style="left:889.00px;top:791px;font:normal 400 33.70px/33.70px 'Liberation Sans', sans-serif;letter-spacing:0.009px;color:#000;-webkit-text-stroke:0.45px #000;">push data from the device (ExG,</span>
<span class="t" style="left:890.00px;top:831px;font:normal 400 33.70px/33.70px 'Liberation Sans', sans-serif;letter-spacing:-0.090px;color:#000;-webkit-text-stroke:0.45px #000;">orientation and markers) via LSL</span>
<div class="abs" style="left:870.3px;top:883.2px;width:11.4px;height:11.4px;background:#000;border-radius:50%"></div>
<span class="t" style="left:889.00px;top:871px;font:normal 400 33.70px/33.70px 'Liberation Sans', sans-serif;letter-spacing:-0.038px;color:#000;-webkit-text-stroke:0.45px #000;">receive markers from LSL marker streams</span>
<span class="t" style="left:810.70px;top:935px;font:normal 400 33.70px/33.70px 'Liberation Sans', sans-serif;letter-spacing:0.099px;color:#000;-webkit-text-stroke:0.45px #000;">An arrow with a blue background indicates that</span>
<span class="t" style="left:810.70px;top:975px;font:normal 400 33.70px/33.70px 'Liberation Sans', sans-serif;letter-spacing:0.192px;color:#000;-webkit-text-stroke:0.45px #000;">the feature is currently active.</span>
<button class="abs bb" style="left:810.5px;top:1056px;width:635px;height:63.5px;border:2px solid #00aaff;border-radius:11px;background:#fff;"></button>
<span class="t" style="left:1000.60px;top:1072px;font:normal 400 33.70px/33.70px 'Liberation Sans', sans-serif;letter-spacing:-0.328px;color:#000;-webkit-text-stroke:0.45px #000;">Push data to LSL</span>
<div class="abs" style="left:1474px;top:1060px;width:56px;height:56px;background:#00aaff;border-radius:11px"><svg width="56" height="56" viewBox="0 0 56 56"><path d="M28 41.5V14.5M16.5 26L28 14.5L39.5 26" fill="none" stroke="#fff" stroke-width="4.6" stroke-linecap="round" stroke-linejoin="round"/></svg></div>
<button class="abs bb" style="left:810.5px;top:1140px;width:635px;height:63.5px;border:2px solid #00aaff;border-radius:11px;background:#fff;"></button>
<span class="t" style="left:962.70px;top:1155px;font:normal 400 33.70px/33.70px 'Liberation Sans', sans-serif;letter-spacing:-0.194px;color:#000;-webkit-text-stroke:0.45px #000;">Pull markers from LSL</span>
<div class="abs" style="left:1474px;top:1144px;width:56px;height:56px;background:#00aaff;border-radius:11px"><svg width="56" height="56" viewBox="0 0 56 56"><path d="M28 14.5V41.5M16.5 30L28 41.5L39.5 30" fill="none" stroke="#fff" stroke-width="4.6" stroke-linecap="round" stroke-linejoin="round"/></svg></div>
<button class="abs" style="left:1558px;top:644.5px;width:532px;height:63px;background:#e2e2e2;border-radius:10px;border:0"></button>
<span class="t" style="left:1633.70px;top:660px;font:normal 400 33.70px/33.70px 'Liberation Sans', sans-serif;letter-spacing:-0.062px;color:#000;-webkit-text-stroke:0.45px #000;">Find marker stream inlets</span>
<div class="abs bb" style="left:1558px;top:736px;width:531.5px;height:407px;background:#e0e0e0;border:solid #9e9e9e;border-width:1.5px 2.5px 2.5px 1.5px"></div>
<div class="abs" style="left:1573.7px;top:746.3px;width:28.3px;height:28px;background:linear-gradient(#3a82f6,#1a5fe0);border-radius:6.5px;box-shadow:0 0.5px 1.5px rgba(0,0,0,.45)"><svg width="28.3" height="28" viewBox="0 0 28.3 28"><path d="M7.6 14.6L12.2 20L20.6 8.2" fill="none" stroke="#fff" stroke-width="3.2" stroke-linecap="round" stroke-linejoin="round"/></svg></div>
<span class="t" style="left:1629.00px;top:743px;font:normal 400 33.70px/33.70px 'Liberation Sans', sans-serif;letter-spacing:0.053px;color:#000;-webkit-text-stroke:0.45px #000;">TestMarkerStream</span>
<em class="t" style="left:1559.00px;top:1167px;font:italic 400 33.70px/33.70px 'Liberation Sans', sans-serif;letter-spacing:0.013px;color:#000;-webkit-text-stroke:0.45px #000;">Finding inlets, selecting streams</em>
<em class="t" style="left:1560.00px;top:1207px;font:italic 400 33.70px/33.70px 'Liberation Sans', sans-serif;letter-spacing:-0.049px;color:#000;-webkit-text-stroke:0.45px #000;">and deselecting streams are only</em>
<em class="t" style="left:1560.00px;top:1247px;font:italic 400 33.70px/33.70px 'Liberation Sans', sans-serif;letter-spacing:0.052px;color:#000;-webkit-text-stroke:0.45px #000;">available when not pulling markers.</em>
</section>
</body></html>
